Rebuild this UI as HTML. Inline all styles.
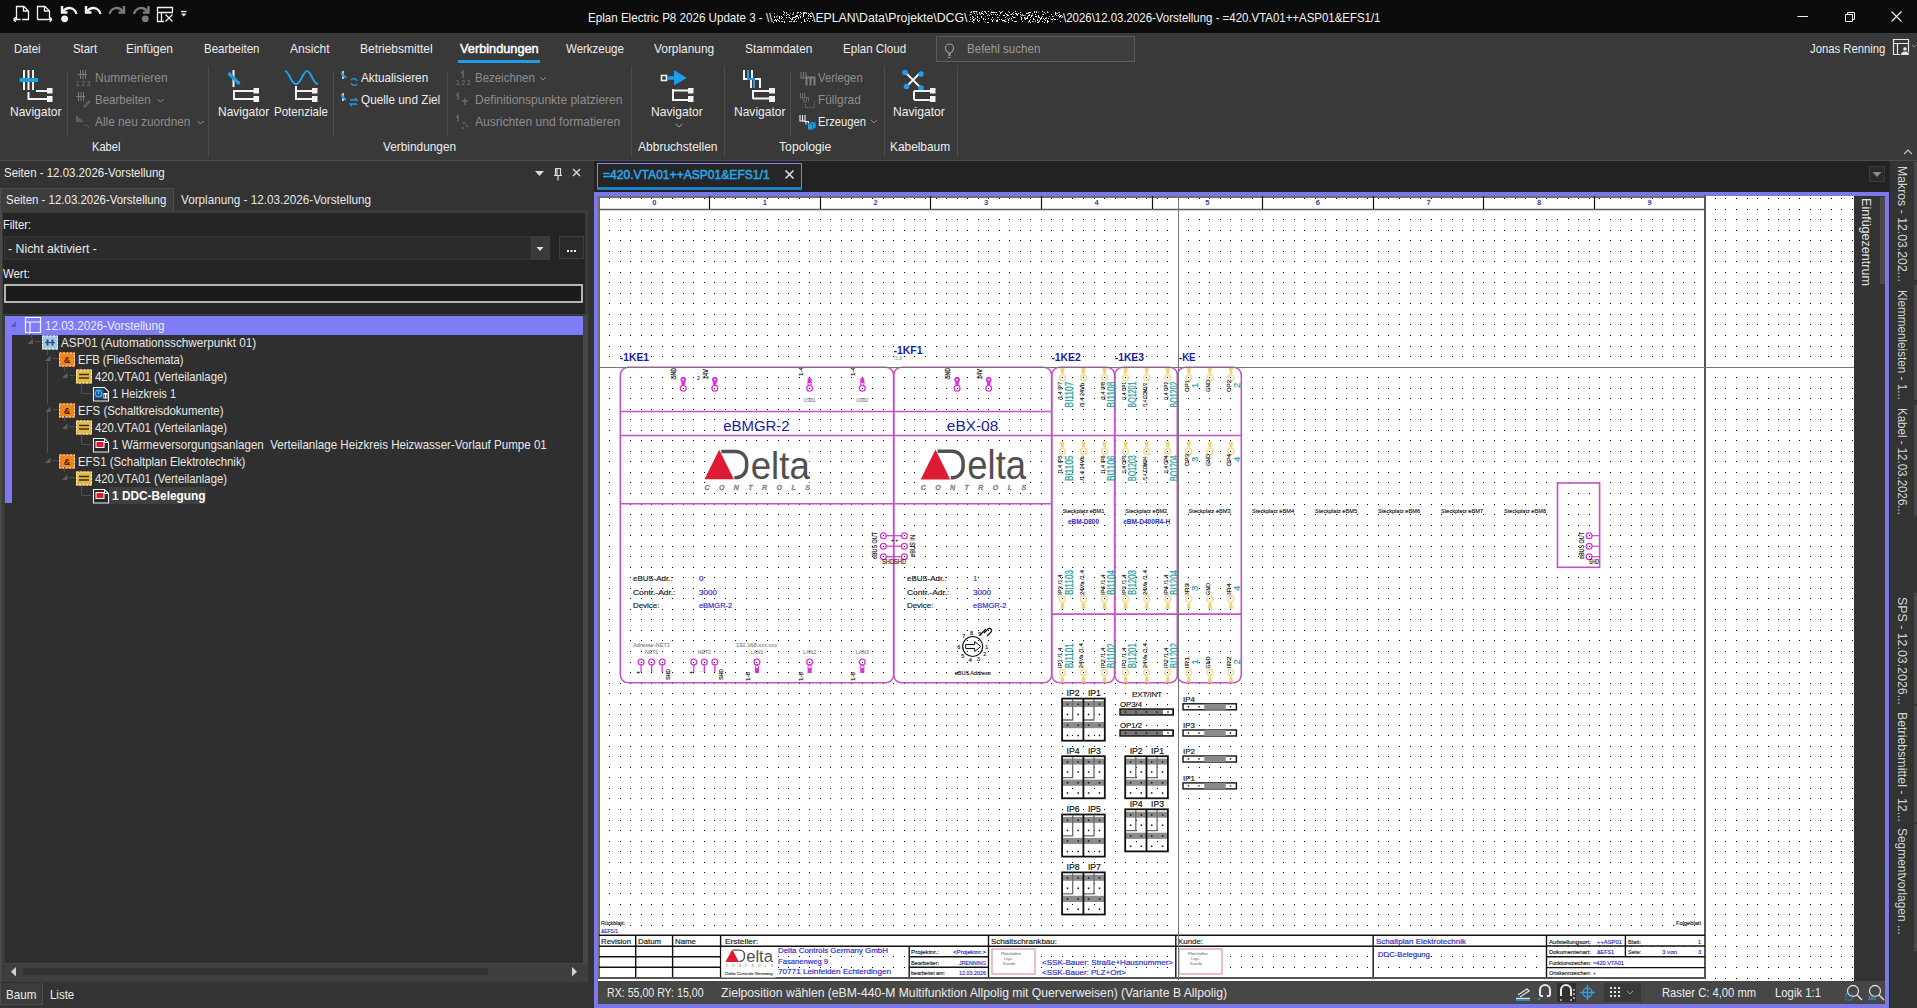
<!DOCTYPE html><html><head><meta charset="utf-8"><title>Eplan Electric P8</title><style>
html,body{margin:0;padding:0;}
body{width:1917px;height:1008px;overflow:hidden;position:relative;background:#393939;font-family:"Liberation Sans",sans-serif;}
.t{position:absolute;white-space:pre;transform-origin:0 50%;}
.r{position:absolute;}
.s{position:absolute;overflow:visible;}
svg text{font-family:"Liberation Sans",sans-serif;}
</style></head><body><div class="r" style="left:0px;top:0px;width:1917px;height:33px;background:#0b0b0b;"></div><svg class="s" style="left:0;top:0" width="200" height="33" viewBox="0 0 200 33" fill="none" stroke="#f2f2f2" stroke-width="1.3"><path d="M16.5 19.5V6.5h7.5l4.5 4.5v8.5h-6.5 M23.5 6.5v4.5h5"/><path d="M13.5 19.5h7 M13.5 19.5l2.3-2.3 M13.5 19.5l2.3 2.3"/><path d="M37.5 19.5V6.5h7.5l4.5 4.5v8.5" /><path d="M44.5 6.5v4.5h5"/><path d="M37.5 19.5h14.5 M52 19.5l-2.3-2.3 M52 19.5l-2.3 2.3"/><path d="M63 11.5c4-5.5 11.5-4.5 13.5 2.5" stroke-width="2.4"/><path d="M62 6v6.5h5.5" stroke-width="2.4"/><circle cx="64.6" cy="18.8" r="3.4" fill="#f2f2f2" stroke="none"/><path d="M87 11.5c4-5.5 11.5-4.5 13.5 2.5" stroke-width="2.4"/><path d="M86 6v6.5h5.5" stroke-width="2.4"/><path d="M123 11.5c-4-5.5 -11.5-4.5 -13.5 2.5" stroke-width="2.4" stroke="#7a7a7a"/><path d="M124 6v6.5h-5.5" stroke-width="2.4" stroke="#7a7a7a"/><path d="M147.5 11.5c-4-5.5 -11.5-4.5 -13.5 2.5" stroke-width="2.4" stroke="#7a7a7a"/><path d="M148.5 6v6.5h-5.5" stroke-width="2.4" stroke="#7a7a7a"/><circle cx="145.3" cy="18.8" r="3.4" fill="#7a7a7a" stroke="none"/><path d="M164 21.5h-6.5V7.5h15v4.5 M157.5 12.5h15.5 M161.5 12.5v9"/><path d="M165.5 14.5l7 7 M172.5 14.5l-7 7" stroke-width="1.2"/><path d="M181 11.5h5.5" /><path d="M181 13.5h5.5l-2.75 3z" fill="#f2f2f2" stroke="none"/></svg><div class="t" style="left:588.3px;top:11.80px;font-size:12.6px;line-height:12.6px;color:#f4f4f4;transform:scaleX(0.9210);">Eplan Electric P8 2026 Update 3 - \\</div><div class="t" style="left:812.3px;top:11.80px;font-size:12.6px;line-height:12.6px;color:#f4f4f4;transform:scaleX(0.9739);">\EPLAN\Data\Projekte\DCG\</div><div class="t" style="left:1062.7px;top:11.80px;font-size:12.6px;line-height:12.6px;color:#f4f4f4;transform:scaleX(0.9083);">\2026\12.03.2026-Vorstellung - =420.VTA01++ASP01&amp;EFS1/1</div><svg class="s" style="left:770px;top:10px" width="300" height="16"><rect x="16" y="3" width="1" height="1" fill="#ffffff"/><rect x="6" y="7" width="1" height="1" fill="#8a8a8a"/><rect x="26" y="11" width="1" height="1" fill="#d0d0d0"/><rect x="4" y="6" width="1" height="1" fill="#ffffff"/><rect x="12" y="7" width="1" height="1" fill="#ffffff"/><rect x="35" y="2" width="1" height="1" fill="#d0d0d0"/><rect x="28" y="7" width="1" height="1" fill="#ffffff"/><rect x="26" y="5" width="1" height="1" fill="#d0d0d0"/><rect x="5" y="10" width="1" height="1" fill="#8a8a8a"/><rect x="19" y="7" width="1" height="1" fill="#8a8a8a"/><rect x="25" y="9" width="1" height="1" fill="#ffffff"/><rect x="26" y="8" width="1" height="1" fill="#8a8a8a"/><rect x="7" y="9" width="1" height="1" fill="#ffffff"/><rect x="27" y="6" width="1" height="1" fill="#ffffff"/><rect x="33" y="6" width="1" height="1" fill="#ffffff"/><rect x="17" y="4" width="1" height="1" fill="#d0d0d0"/><rect x="30" y="4" width="1" height="1" fill="#8a8a8a"/><rect x="23" y="11" width="1" height="1" fill="#ffffff"/><rect x="14" y="12" width="1" height="1" fill="#ffffff"/><rect x="23" y="3" width="1" height="1" fill="#8a8a8a"/><rect x="9" y="6" width="1" height="1" fill="#ffffff"/><rect x="41" y="2" width="1" height="1" fill="#8a8a8a"/><rect x="16" y="5" width="1" height="1" fill="#ffffff"/><rect x="26" y="6" width="1" height="1" fill="#ffffff"/><rect x="40" y="6" width="1" height="1" fill="#ffffff"/><rect x="5" y="9" width="1" height="1" fill="#ffffff"/><rect x="14" y="5" width="1" height="1" fill="#8a8a8a"/><rect x="4" y="6" width="1" height="1" fill="#d0d0d0"/><rect x="27" y="6" width="1" height="1" fill="#d0d0d0"/><rect x="33" y="2" width="1" height="1" fill="#d0d0d0"/><rect x="19" y="11" width="1" height="1" fill="#ffffff"/><rect x="6" y="6" width="1" height="1" fill="#8a8a8a"/><rect x="37" y="10" width="1" height="1" fill="#8a8a8a"/><rect x="31" y="12" width="1" height="1" fill="#ffffff"/><rect x="40" y="3" width="1" height="1" fill="#d0d0d0"/><rect x="9" y="8" width="1" height="1" fill="#ffffff"/><rect x="22" y="7" width="1" height="1" fill="#8a8a8a"/><rect x="14" y="3" width="1" height="1" fill="#8a8a8a"/><rect x="27" y="5" width="1" height="1" fill="#d0d0d0"/><rect x="30" y="7" width="1" height="1" fill="#ffffff"/><rect x="21" y="11" width="1" height="1" fill="#ffffff"/><rect x="19" y="5" width="1" height="1" fill="#ffffff"/><rect x="28" y="2" width="1" height="1" fill="#ffffff"/><rect x="41" y="6" width="1" height="1" fill="#ffffff"/><rect x="16" y="2" width="1" height="1" fill="#ffffff"/><rect x="25" y="7" width="1" height="1" fill="#8a8a8a"/><rect x="27" y="2" width="1" height="1" fill="#d0d0d0"/><rect x="27" y="3" width="1" height="1" fill="#8a8a8a"/><rect x="40" y="8" width="1" height="1" fill="#ffffff"/><rect x="8" y="10" width="1" height="1" fill="#ffffff"/><rect x="22" y="4" width="1" height="1" fill="#d0d0d0"/><rect x="7" y="5" width="1" height="1" fill="#8a8a8a"/><rect x="22" y="9" width="1" height="1" fill="#ffffff"/><rect x="11" y="11" width="1" height="1" fill="#8a8a8a"/><rect x="9" y="7" width="1" height="1" fill="#ffffff"/><rect x="33" y="4" width="1" height="1" fill="#ffffff"/><rect x="30" y="4" width="1" height="1" fill="#8a8a8a"/><rect x="38" y="5" width="1" height="1" fill="#d0d0d0"/><rect x="24" y="10" width="1" height="1" fill="#8a8a8a"/><rect x="28" y="8" width="1" height="1" fill="#d0d0d0"/><rect x="34" y="10" width="1" height="1" fill="#d0d0d0"/><rect x="11" y="6" width="1" height="1" fill="#ffffff"/><rect x="42" y="10" width="1" height="1" fill="#ffffff"/><rect x="13" y="9" width="1" height="1" fill="#8a8a8a"/><rect x="20" y="11" width="1" height="1" fill="#8a8a8a"/><rect x="40" y="5" width="1" height="1" fill="#d0d0d0"/><rect x="7" y="6" width="1" height="1" fill="#8a8a8a"/><rect x="11" y="8" width="1" height="1" fill="#ffffff"/><rect x="22" y="8" width="1" height="1" fill="#ffffff"/><rect x="36" y="2" width="1" height="1" fill="#ffffff"/><rect x="34" y="9" width="1" height="1" fill="#ffffff"/><rect x="38" y="6" width="1" height="1" fill="#8a8a8a"/><rect x="6" y="11" width="1" height="1" fill="#ffffff"/><rect x="21" y="9" width="1" height="1" fill="#ffffff"/><rect x="31" y="3" width="1" height="1" fill="#d0d0d0"/><rect x="4" y="7" width="1" height="1" fill="#ffffff"/><rect x="34" y="3" width="1" height="1" fill="#ffffff"/><rect x="29" y="5" width="1" height="1" fill="#d0d0d0"/><rect x="4" y="10" width="1" height="1" fill="#ffffff"/><rect x="24" y="11" width="1" height="1" fill="#ffffff"/><rect x="41" y="3" width="1" height="1" fill="#d0d0d0"/><rect x="4" y="3" width="1" height="1" fill="#d0d0d0"/><rect x="33" y="5" width="1" height="1" fill="#ffffff"/><rect x="36" y="2" width="1" height="1" fill="#8a8a8a"/><rect x="38" y="8" width="1" height="1" fill="#ffffff"/><rect x="35" y="11" width="1" height="1" fill="#d0d0d0"/><rect x="24" y="7" width="1" height="1" fill="#ffffff"/><rect x="37" y="10" width="1" height="1" fill="#ffffff"/><rect x="33" y="3" width="1" height="1" fill="#d0d0d0"/><rect x="21" y="9" width="1" height="1" fill="#ffffff"/><rect x="16" y="7" width="1" height="1" fill="#ffffff"/><rect x="34" y="2" width="1" height="1" fill="#ffffff"/><rect x="13" y="4" width="1" height="1" fill="#ffffff"/><rect x="23" y="7" width="1" height="1" fill="#ffffff"/><rect x="20" y="8" width="1" height="1" fill="#d0d0d0"/><rect x="30" y="6" width="1" height="1" fill="#ffffff"/><rect x="23" y="4" width="1" height="1" fill="#8a8a8a"/><rect x="39" y="11" width="1" height="1" fill="#d0d0d0"/><rect x="36" y="3" width="1" height="1" fill="#ffffff"/><rect x="18" y="4" width="1" height="1" fill="#d0d0d0"/><rect x="20" y="3" width="1" height="1" fill="#8a8a8a"/><rect x="34" y="11" width="1" height="1" fill="#d0d0d0"/><rect x="40" y="8" width="1" height="1" fill="#8a8a8a"/><rect x="9" y="11" width="1" height="1" fill="#ffffff"/><rect x="12" y="11" width="1" height="1" fill="#ffffff"/><rect x="38" y="3" width="1" height="1" fill="#d0d0d0"/><rect x="9" y="6" width="1" height="1" fill="#ffffff"/><rect x="16" y="3" width="1" height="1" fill="#8a8a8a"/><rect x="7" y="5" width="1" height="1" fill="#8a8a8a"/><rect x="25" y="6" width="1" height="1" fill="#ffffff"/><rect x="18" y="7" width="1" height="1" fill="#8a8a8a"/><rect x="23" y="2" width="1" height="1" fill="#d0d0d0"/><rect x="41" y="2" width="1" height="1" fill="#8a8a8a"/><rect x="14" y="11" width="1" height="1" fill="#d0d0d0"/><rect x="14" y="2" width="1" height="1" fill="#ffffff"/><rect x="36" y="8" width="1" height="1" fill="#8a8a8a"/><rect x="19" y="7" width="1" height="1" fill="#ffffff"/><rect x="30" y="2" width="1" height="1" fill="#ffffff"/><rect x="34" y="3" width="1" height="1" fill="#ffffff"/><rect x="13" y="1" width="1" height="1" fill="#ffffff"/><rect x="34" y="2" width="1" height="1" fill="#d0d0d0"/><rect x="6" y="10" width="1" height="1" fill="#ffffff"/><rect x="3" y="12" width="1" height="1" fill="#ffffff"/><rect x="39" y="4" width="1" height="1" fill="#d0d0d0"/><rect x="203" y="9" width="1" height="1" fill="#ffffff"/><rect x="289" y="4" width="1" height="1" fill="#d0d0d0"/><rect x="218" y="4" width="1" height="1" fill="#8a8a8a"/><rect x="248" y="3" width="1" height="1" fill="#ffffff"/><rect x="246" y="3" width="1" height="1" fill="#8a8a8a"/><rect x="274" y="12" width="1" height="1" fill="#ffffff"/><rect x="200" y="9" width="1" height="1" fill="#d0d0d0"/><rect x="247" y="4" width="1" height="1" fill="#ffffff"/><rect x="209" y="10" width="1" height="1" fill="#ffffff"/><rect x="260" y="7" width="1" height="1" fill="#ffffff"/><rect x="289" y="4" width="1" height="1" fill="#d0d0d0"/><rect x="290" y="5" width="1" height="1" fill="#d0d0d0"/><rect x="237" y="5" width="1" height="1" fill="#ffffff"/><rect x="277" y="1" width="1" height="1" fill="#8a8a8a"/><rect x="239" y="2" width="1" height="1" fill="#ffffff"/><rect x="280" y="8" width="1" height="1" fill="#8a8a8a"/><rect x="255" y="9" width="1" height="1" fill="#ffffff"/><rect x="242" y="3" width="1" height="1" fill="#ffffff"/><rect x="199" y="5" width="1" height="1" fill="#8a8a8a"/><rect x="289" y="7" width="1" height="1" fill="#d0d0d0"/><rect x="202" y="11" width="1" height="1" fill="#d0d0d0"/><rect x="232" y="1" width="1" height="1" fill="#ffffff"/><rect x="207" y="4" width="1" height="1" fill="#d0d0d0"/><rect x="222" y="10" width="1" height="1" fill="#ffffff"/><rect x="224" y="2" width="1" height="1" fill="#ffffff"/><rect x="254" y="5" width="1" height="1" fill="#8a8a8a"/><rect x="227" y="4" width="1" height="1" fill="#d0d0d0"/><rect x="260" y="9" width="1" height="1" fill="#ffffff"/><rect x="270" y="9" width="1" height="1" fill="#ffffff"/><rect x="213" y="9" width="1" height="1" fill="#d0d0d0"/><rect x="203" y="10" width="1" height="1" fill="#ffffff"/><rect x="267" y="10" width="1" height="1" fill="#d0d0d0"/><rect x="284" y="9" width="1" height="1" fill="#ffffff"/><rect x="276" y="7" width="1" height="1" fill="#d0d0d0"/><rect x="207" y="1" width="1" height="1" fill="#8a8a8a"/><rect x="288" y="5" width="1" height="1" fill="#ffffff"/><rect x="251" y="8" width="1" height="1" fill="#d0d0d0"/><rect x="245" y="1" width="1" height="1" fill="#ffffff"/><rect x="269" y="7" width="1" height="1" fill="#ffffff"/><rect x="260" y="2" width="1" height="1" fill="#ffffff"/><rect x="222" y="2" width="1" height="1" fill="#8a8a8a"/><rect x="221" y="9" width="1" height="1" fill="#d0d0d0"/><rect x="268" y="12" width="1" height="1" fill="#ffffff"/><rect x="278" y="2" width="1" height="1" fill="#8a8a8a"/><rect x="270" y="8" width="1" height="1" fill="#d0d0d0"/><rect x="206" y="3" width="1" height="1" fill="#8a8a8a"/><rect x="260" y="9" width="1" height="1" fill="#d0d0d0"/><rect x="200" y="2" width="1" height="1" fill="#8a8a8a"/><rect x="289" y="2" width="1" height="1" fill="#d0d0d0"/><rect x="262" y="4" width="1" height="1" fill="#8a8a8a"/><rect x="242" y="6" width="1" height="1" fill="#ffffff"/><rect x="291" y="7" width="1" height="1" fill="#8a8a8a"/><rect x="290" y="11" width="1" height="1" fill="#ffffff"/><rect x="226" y="2" width="1" height="1" fill="#ffffff"/><rect x="291" y="5" width="1" height="1" fill="#d0d0d0"/><rect x="206" y="2" width="1" height="1" fill="#8a8a8a"/><rect x="288" y="2" width="1" height="1" fill="#8a8a8a"/><rect x="281" y="9" width="1" height="1" fill="#d0d0d0"/><rect x="245" y="11" width="1" height="1" fill="#ffffff"/><rect x="201" y="1" width="1" height="1" fill="#ffffff"/><rect x="262" y="5" width="1" height="1" fill="#d0d0d0"/><rect x="238" y="5" width="1" height="1" fill="#ffffff"/><rect x="277" y="1" width="1" height="1" fill="#8a8a8a"/><rect x="277" y="2" width="1" height="1" fill="#d0d0d0"/><rect x="265" y="11" width="1" height="1" fill="#8a8a8a"/><rect x="223" y="2" width="1" height="1" fill="#ffffff"/><rect x="292" y="7" width="1" height="1" fill="#8a8a8a"/><rect x="285" y="9" width="1" height="1" fill="#ffffff"/><rect x="225" y="2" width="1" height="1" fill="#8a8a8a"/><rect x="258" y="3" width="1" height="1" fill="#8a8a8a"/><rect x="240" y="4" width="1" height="1" fill="#8a8a8a"/><rect x="272" y="6" width="1" height="1" fill="#ffffff"/><rect x="275" y="8" width="1" height="1" fill="#d0d0d0"/><rect x="266" y="2" width="1" height="1" fill="#ffffff"/><rect x="241" y="9" width="1" height="1" fill="#8a8a8a"/><rect x="244" y="11" width="1" height="1" fill="#d0d0d0"/><rect x="215" y="6" width="1" height="1" fill="#8a8a8a"/><rect x="227" y="9" width="1" height="1" fill="#8a8a8a"/><rect x="237" y="4" width="1" height="1" fill="#ffffff"/><rect x="251" y="5" width="1" height="1" fill="#d0d0d0"/><rect x="259" y="2" width="1" height="1" fill="#ffffff"/><rect x="250" y="6" width="1" height="1" fill="#8a8a8a"/><rect x="292" y="6" width="1" height="1" fill="#d0d0d0"/><rect x="250" y="4" width="1" height="1" fill="#d0d0d0"/><rect x="231" y="2" width="1" height="1" fill="#d0d0d0"/><rect x="233" y="10" width="1" height="1" fill="#d0d0d0"/><rect x="282" y="9" width="1" height="1" fill="#ffffff"/><rect x="235" y="9" width="1" height="1" fill="#d0d0d0"/><rect x="234" y="5" width="1" height="1" fill="#ffffff"/><rect x="245" y="7" width="1" height="1" fill="#8a8a8a"/><rect x="211" y="7" width="1" height="1" fill="#d0d0d0"/><rect x="208" y="11" width="1" height="1" fill="#ffffff"/><rect x="236" y="6" width="1" height="1" fill="#8a8a8a"/><rect x="278" y="11" width="1" height="1" fill="#ffffff"/><rect x="211" y="6" width="1" height="1" fill="#ffffff"/><rect x="289" y="6" width="1" height="1" fill="#ffffff"/><rect x="235" y="11" width="1" height="1" fill="#ffffff"/><rect x="289" y="4" width="1" height="1" fill="#ffffff"/><rect x="220" y="3" width="1" height="1" fill="#ffffff"/><rect x="287" y="9" width="1" height="1" fill="#ffffff"/><rect x="207" y="10" width="1" height="1" fill="#ffffff"/><rect x="272" y="4" width="1" height="1" fill="#ffffff"/><rect x="259" y="4" width="1" height="1" fill="#d0d0d0"/><rect x="257" y="7" width="1" height="1" fill="#ffffff"/><rect x="264" y="2" width="1" height="1" fill="#ffffff"/><rect x="227" y="11" width="1" height="1" fill="#d0d0d0"/><rect x="235" y="3" width="1" height="1" fill="#ffffff"/><rect x="200" y="4" width="1" height="1" fill="#ffffff"/><rect x="225" y="4" width="1" height="1" fill="#d0d0d0"/><rect x="243" y="4" width="1" height="1" fill="#d0d0d0"/><rect x="202" y="6" width="1" height="1" fill="#8a8a8a"/><rect x="204" y="3" width="1" height="1" fill="#ffffff"/><rect x="207" y="4" width="1" height="1" fill="#ffffff"/><rect x="285" y="3" width="1" height="1" fill="#ffffff"/><rect x="264" y="9" width="1" height="1" fill="#8a8a8a"/><rect x="262" y="3" width="1" height="1" fill="#8a8a8a"/><rect x="268" y="7" width="1" height="1" fill="#d0d0d0"/><rect x="245" y="3" width="1" height="1" fill="#d0d0d0"/><rect x="220" y="3" width="1" height="1" fill="#8a8a8a"/><rect x="209" y="8" width="1" height="1" fill="#d0d0d0"/><rect x="282" y="6" width="1" height="1" fill="#ffffff"/><rect x="287" y="3" width="1" height="1" fill="#ffffff"/><rect x="204" y="1" width="1" height="1" fill="#d0d0d0"/><rect x="238" y="9" width="1" height="1" fill="#d0d0d0"/><rect x="236" y="11" width="1" height="1" fill="#8a8a8a"/><rect x="267" y="12" width="1" height="1" fill="#d0d0d0"/><rect x="230" y="3" width="1" height="1" fill="#ffffff"/><rect x="202" y="8" width="1" height="1" fill="#ffffff"/><rect x="277" y="12" width="1" height="1" fill="#ffffff"/><rect x="215" y="1" width="1" height="1" fill="#8a8a8a"/><rect x="207" y="6" width="1" height="1" fill="#ffffff"/><rect x="251" y="9" width="1" height="1" fill="#ffffff"/><rect x="232" y="10" width="1" height="1" fill="#ffffff"/><rect x="207" y="9" width="1" height="1" fill="#d0d0d0"/><rect x="234" y="11" width="1" height="1" fill="#d0d0d0"/><rect x="229" y="9" width="1" height="1" fill="#ffffff"/><rect x="202" y="6" width="1" height="1" fill="#ffffff"/><rect x="203" y="1" width="1" height="1" fill="#ffffff"/><rect x="274" y="2" width="1" height="1" fill="#d0d0d0"/><rect x="268" y="11" width="1" height="1" fill="#8a8a8a"/><rect x="233" y="5" width="1" height="1" fill="#ffffff"/><rect x="223" y="9" width="1" height="1" fill="#8a8a8a"/><rect x="285" y="4" width="1" height="1" fill="#ffffff"/><rect x="201" y="4" width="1" height="1" fill="#ffffff"/><rect x="266" y="6" width="1" height="1" fill="#ffffff"/><rect x="272" y="11" width="1" height="1" fill="#ffffff"/><rect x="211" y="6" width="1" height="1" fill="#ffffff"/><rect x="274" y="9" width="1" height="1" fill="#d0d0d0"/><rect x="255" y="5" width="1" height="1" fill="#8a8a8a"/><rect x="242" y="10" width="1" height="1" fill="#ffffff"/><rect x="247" y="5" width="1" height="1" fill="#d0d0d0"/><rect x="222" y="2" width="1" height="1" fill="#ffffff"/><rect x="244" y="7" width="1" height="1" fill="#d0d0d0"/><rect x="290" y="11" width="1" height="1" fill="#ffffff"/><rect x="224" y="2" width="1" height="1" fill="#ffffff"/><rect x="238" y="12" width="1" height="1" fill="#ffffff"/><rect x="215" y="2" width="1" height="1" fill="#ffffff"/><rect x="257" y="8" width="1" height="1" fill="#ffffff"/><rect x="272" y="4" width="1" height="1" fill="#8a8a8a"/><rect x="252" y="5" width="1" height="1" fill="#8a8a8a"/><rect x="218" y="4" width="1" height="1" fill="#d0d0d0"/><rect x="221" y="4" width="1" height="1" fill="#d0d0d0"/><rect x="229" y="5" width="1" height="1" fill="#d0d0d0"/><rect x="246" y="4" width="1" height="1" fill="#ffffff"/><rect x="260" y="12" width="1" height="1" fill="#ffffff"/><rect x="199" y="11" width="1" height="1" fill="#d0d0d0"/><rect x="277" y="11" width="1" height="1" fill="#ffffff"/><rect x="281" y="4" width="1" height="1" fill="#ffffff"/><rect x="217" y="12" width="1" height="1" fill="#d0d0d0"/><rect x="286" y="5" width="1" height="1" fill="#d0d0d0"/><rect x="241" y="4" width="1" height="1" fill="#ffffff"/><rect x="209" y="8" width="1" height="1" fill="#8a8a8a"/><rect x="219" y="5" width="1" height="1" fill="#d0d0d0"/><rect x="203" y="12" width="1" height="1" fill="#ffffff"/><rect x="255" y="8" width="1" height="1" fill="#d0d0d0"/><rect x="275" y="10" width="1" height="1" fill="#ffffff"/><rect x="262" y="3" width="1" height="1" fill="#8a8a8a"/><rect x="206" y="1" width="1" height="1" fill="#ffffff"/><rect x="250" y="2" width="1" height="1" fill="#ffffff"/><rect x="273" y="8" width="1" height="1" fill="#d0d0d0"/><rect x="258" y="2" width="1" height="1" fill="#d0d0d0"/><rect x="236" y="4" width="1" height="1" fill="#8a8a8a"/><rect x="261" y="6" width="1" height="1" fill="#ffffff"/><rect x="228" y="7" width="1" height="1" fill="#8a8a8a"/><rect x="238" y="1" width="1" height="1" fill="#8a8a8a"/><rect x="259" y="5" width="1" height="1" fill="#ffffff"/><rect x="218" y="1" width="1" height="1" fill="#d0d0d0"/><rect x="238" y="10" width="1" height="1" fill="#ffffff"/><rect x="253" y="5" width="1" height="1" fill="#d0d0d0"/><rect x="211" y="2" width="1" height="1" fill="#d0d0d0"/><rect x="259" y="11" width="1" height="1" fill="#ffffff"/><rect x="252" y="11" width="1" height="1" fill="#d0d0d0"/><rect x="213" y="4" width="1" height="1" fill="#d0d0d0"/><rect x="285" y="2" width="1" height="1" fill="#ffffff"/><rect x="269" y="10" width="1" height="1" fill="#d0d0d0"/><rect x="227" y="10" width="1" height="1" fill="#ffffff"/><rect x="290" y="6" width="1" height="1" fill="#ffffff"/><rect x="256" y="8" width="1" height="1" fill="#ffffff"/><rect x="283" y="8" width="1" height="1" fill="#d0d0d0"/><rect x="259" y="10" width="1" height="1" fill="#ffffff"/><rect x="256" y="3" width="1" height="1" fill="#ffffff"/><rect x="216" y="3" width="1" height="1" fill="#ffffff"/><rect x="286" y="3" width="1" height="1" fill="#8a8a8a"/><rect x="210" y="4" width="1" height="1" fill="#d0d0d0"/><rect x="203" y="7" width="1" height="1" fill="#ffffff"/><rect x="261" y="5" width="1" height="1" fill="#ffffff"/><rect x="255" y="7" width="1" height="1" fill="#8a8a8a"/><rect x="259" y="4" width="1" height="1" fill="#d0d0d0"/><rect x="239" y="8" width="1" height="1" fill="#ffffff"/><rect x="246" y="3" width="1" height="1" fill="#ffffff"/><rect x="257" y="6" width="1" height="1" fill="#d0d0d0"/><rect x="241" y="8" width="1" height="1" fill="#ffffff"/><rect x="277" y="10" width="1" height="1" fill="#ffffff"/><rect x="209" y="2" width="1" height="1" fill="#ffffff"/><rect x="233" y="10" width="1" height="1" fill="#ffffff"/><rect x="203" y="2" width="1" height="1" fill="#8a8a8a"/><rect x="271" y="7" width="1" height="1" fill="#ffffff"/><rect x="269" y="11" width="1" height="1" fill="#d0d0d0"/><rect x="201" y="2" width="1" height="1" fill="#ffffff"/><rect x="217" y="12" width="1" height="1" fill="#ffffff"/><rect x="226" y="10" width="1" height="1" fill="#d0d0d0"/><rect x="263" y="9" width="1" height="1" fill="#d0d0d0"/><rect x="205" y="5" width="1" height="1" fill="#8a8a8a"/><rect x="214" y="11" width="1" height="1" fill="#8a8a8a"/><rect x="283" y="6" width="1" height="1" fill="#8a8a8a"/><rect x="246" y="11" width="1" height="1" fill="#d0d0d0"/><rect x="254" y="8" width="1" height="1" fill="#d0d0d0"/><rect x="229" y="1" width="1" height="1" fill="#d0d0d0"/><rect x="237" y="8" width="1" height="1" fill="#8a8a8a"/><rect x="262" y="11" width="1" height="1" fill="#d0d0d0"/><rect x="273" y="4" width="1" height="1" fill="#ffffff"/><rect x="258" y="5" width="1" height="1" fill="#ffffff"/><rect x="251" y="7" width="1" height="1" fill="#ffffff"/><rect x="222" y="7" width="1" height="1" fill="#ffffff"/><rect x="268" y="5" width="1" height="1" fill="#ffffff"/><rect x="291" y="7" width="1" height="1" fill="#8a8a8a"/><rect x="230" y="2" width="1" height="1" fill="#d0d0d0"/><rect x="215" y="9" width="1" height="1" fill="#ffffff"/><rect x="227" y="7" width="1" height="1" fill="#8a8a8a"/><rect x="258" y="12" width="1" height="1" fill="#8a8a8a"/><rect x="267" y="9" width="1" height="1" fill="#d0d0d0"/><rect x="213" y="8" width="1" height="1" fill="#ffffff"/><rect x="238" y="5" width="1" height="1" fill="#ffffff"/><rect x="211" y="3" width="1" height="1" fill="#ffffff"/><rect x="201" y="1" width="1" height="1" fill="#8a8a8a"/><rect x="227" y="7" width="1" height="1" fill="#d0d0d0"/><rect x="237" y="4" width="1" height="1" fill="#d0d0d0"/><rect x="218" y="8" width="1" height="1" fill="#ffffff"/><rect x="214" y="1" width="1" height="1" fill="#d0d0d0"/><rect x="265" y="6" width="1" height="1" fill="#ffffff"/><rect x="258" y="11" width="1" height="1" fill="#8a8a8a"/><rect x="236" y="4" width="1" height="1" fill="#ffffff"/><rect x="204" y="10" width="1" height="1" fill="#8a8a8a"/><rect x="254" y="7" width="1" height="1" fill="#ffffff"/><rect x="222" y="11" width="1" height="1" fill="#ffffff"/><rect x="205" y="1" width="1" height="1" fill="#d0d0d0"/><rect x="221" y="2" width="1" height="1" fill="#ffffff"/><rect x="200" y="7" width="1" height="1" fill="#d0d0d0"/><rect x="212" y="3" width="1" height="1" fill="#ffffff"/><rect x="275" y="3" width="1" height="1" fill="#8a8a8a"/><rect x="205" y="8" width="1" height="1" fill="#ffffff"/><rect x="266" y="1" width="1" height="1" fill="#ffffff"/><rect x="268" y="6" width="1" height="1" fill="#ffffff"/><rect x="215" y="12" width="1" height="1" fill="#8a8a8a"/><rect x="221" y="1" width="1" height="1" fill="#8a8a8a"/><rect x="282" y="11" width="1" height="1" fill="#8a8a8a"/><rect x="265" y="4" width="1" height="1" fill="#ffffff"/><rect x="263" y="11" width="1" height="1" fill="#8a8a8a"/><rect x="226" y="11" width="1" height="1" fill="#d0d0d0"/><rect x="207" y="7" width="1" height="1" fill="#d0d0d0"/><rect x="223" y="4" width="1" height="1" fill="#d0d0d0"/><rect x="287" y="9" width="1" height="1" fill="#8a8a8a"/><rect x="217" y="5" width="1" height="1" fill="#d0d0d0"/><rect x="234" y="10" width="1" height="1" fill="#ffffff"/><rect x="243" y="7" width="1" height="1" fill="#ffffff"/><rect x="279" y="6" width="1" height="1" fill="#d0d0d0"/><rect x="252" y="4" width="1" height="1" fill="#d0d0d0"/><rect x="235" y="7" width="1" height="1" fill="#d0d0d0"/><rect x="212" y="1" width="1" height="1" fill="#ffffff"/><rect x="257" y="3" width="1" height="1" fill="#d0d0d0"/><rect x="264" y="1" width="1" height="1" fill="#d0d0d0"/><rect x="263" y="8" width="1" height="1" fill="#ffffff"/><rect x="268" y="2" width="1" height="1" fill="#8a8a8a"/><rect x="218" y="12" width="1" height="1" fill="#ffffff"/><rect x="281" y="9" width="1" height="1" fill="#ffffff"/><rect x="209" y="3" width="1" height="1" fill="#ffffff"/><rect x="202" y="11" width="1" height="1" fill="#ffffff"/><rect x="276" y="8" width="1" height="1" fill="#8a8a8a"/><rect x="243" y="2" width="1" height="1" fill="#d0d0d0"/><rect x="226" y="5" width="1" height="1" fill="#8a8a8a"/><rect x="201" y="4" width="1" height="1" fill="#8a8a8a"/><rect x="204" y="9" width="1" height="1" fill="#8a8a8a"/><rect x="271" y="8" width="1" height="1" fill="#ffffff"/><rect x="278" y="8" width="1" height="1" fill="#ffffff"/><rect x="272" y="1" width="1" height="1" fill="#ffffff"/><rect x="231" y="9" width="1" height="1" fill="#d0d0d0"/><rect x="265" y="10" width="1" height="1" fill="#8a8a8a"/></svg><svg class="s" style="left:1780px;top:0" width="137" height="33" fill="none" stroke="#f0f0f0" stroke-width="1"><path d="M17.5 16.5h10.5"/><path d="M65.5 14.5h7v7h-7z M67.5 14.5v-2h7v7h-2"/><path d="M111.5 11.5l10 10 M121.5 11.5l-10 10" stroke-width="1.1"/></svg><div class="r" style="left:0px;top:33px;width:1917px;height:127px;background:#393939;"></div><div class="t" style="left:14.3px;top:43.40px;font-size:12.6px;line-height:12.6px;color:#ededed;transform:scaleX(0.9043);">Datei</div><div class="t" style="left:72.9px;top:43.40px;font-size:12.6px;line-height:12.6px;color:#ededed;transform:scaleX(0.9057);">Start</div><div class="t" style="left:126.0px;top:43.40px;font-size:12.6px;line-height:12.6px;color:#ededed;transform:scaleX(0.9448);">Einfügen</div><div class="t" style="left:203.5px;top:43.40px;font-size:12.6px;line-height:12.6px;color:#ededed;transform:scaleX(0.9106);">Bearbeiten</div><div class="t" style="left:289.5px;top:43.40px;font-size:12.6px;line-height:12.6px;color:#ededed;transform:scaleX(0.9560);">Ansicht</div><div class="t" style="left:359.6px;top:43.40px;font-size:12.6px;line-height:12.6px;color:#ededed;transform:scaleX(0.9525);">Betriebsmittel</div><div class="t" style="left:566.0px;top:43.40px;font-size:12.6px;line-height:12.6px;color:#ededed;transform:scaleX(0.9118);">Werkzeuge</div><div class="t" style="left:654.3px;top:43.40px;font-size:12.6px;line-height:12.6px;color:#ededed;transform:scaleX(0.9442);">Vorplanung</div><div class="t" style="left:745.0px;top:43.40px;font-size:12.6px;line-height:12.6px;color:#ededed;transform:scaleX(0.9435);">Stammdaten</div><div class="t" style="left:843.3px;top:43.40px;font-size:12.6px;line-height:12.6px;color:#ededed;transform:scaleX(0.9206);">Eplan Cloud</div><div class="t" style="left:459.5px;top:43.40px;font-size:12.6px;line-height:12.6px;color:#ffffff;transform:scaleX(1.0119);-webkit-text-stroke:0.45px #ffffff;">Verbindungen</div><div class="r" style="left:458px;top:60px;width:82px;height:3px;background:#1e9ee6;"></div><div class="r" style="left:936px;top:36px;width:199px;height:26px;background:#3e3e3e;box-sizing:border-box;border:1px solid #5c5c5c;"></div><svg class="s" style="left:940px;top:38px" width="20" height="22" fill="none" stroke="#9a9a9a" stroke-width="1.1"><path d="M9 17.5v-2.5c-2-1-3.5-2.7-3.5-5a4 4 0 0 1 8 0c0 2.3-1.5 4-3.5 5v2.5z M8 19.5h2.5"/></svg><div class="t" style="left:967.0px;top:43.40px;font-size:12.6px;line-height:12.6px;color:#9a9a9a;transform:scaleX(0.9191);">Befehl suchen</div><div class="t" style="left:1810.0px;top:43.40px;font-size:12.6px;line-height:12.6px;color:#ececec;transform:scaleX(0.8970);">Jonas Renning</div><svg class="s" style="left:1890px;top:36px" width="27" height="22" fill="none" stroke="#e8e8e8" stroke-width="1.2"><path d="M3.5 3.5h15v15h-15z M3.5 7.5h15 M7.5 7.5v11"/><circle cx="15" cy="13" r="2.3" fill="#e8e8e8" stroke="#393939" stroke-width="1"/><path d="M10.5 19.5c0-3 2-4.5 4.5-4.5s4.5 1.5 4.5 4.5z" fill="#e8e8e8" stroke="#393939" stroke-width="1"/><path d="M22 9l2 2 2-2" stroke="#8a8a8a" stroke-width="1"/></svg><div class="r" style="left:67px;top:72px;width:1px;height:64px;background:#4b4b4b;"></div><div class="r" style="left:208px;top:66px;width:1px;height:91px;background:#4b4b4b;"></div><div class="r" style="left:333px;top:72px;width:1px;height:64px;background:#4b4b4b;"></div><div class="r" style="left:447px;top:72px;width:1px;height:64px;background:#4b4b4b;"></div><div class="r" style="left:631px;top:66px;width:1px;height:91px;background:#4b4b4b;"></div><div class="r" style="left:724px;top:66px;width:1px;height:91px;background:#4b4b4b;"></div><div class="r" style="left:790px;top:72px;width:1px;height:64px;background:#4b4b4b;"></div><div class="r" style="left:884px;top:66px;width:1px;height:91px;background:#4b4b4b;"></div><div class="r" style="left:957px;top:66px;width:1px;height:91px;background:#4b4b4b;"></div><div class="r" style="left:0px;top:160px;width:1917px;height:1px;background:#4e4e4e;"></div><svg class="s" style="left:1900px;top:146px" width="16" height="12" fill="none" stroke="#c8c8c8" stroke-width="1.1"><path d="M4 8l4-4 4 4"/></svg><svg class="s" style="left:0;top:0" width="1000" height="160"><path d="M24 70v20 M28.5 70v20 M33 70v20" stroke="#f2f2f2" stroke-width="2"/><path d="M19.7 80h18.4" stroke="#1e9ee6" stroke-width="4"/><path d="M36 91h11 M28.5 92v7 h18.5" stroke="#f2f2f2" stroke-width="2" fill="none"/><rect x="47" y="88" width="5.5" height="5.5" fill="#f2f2f2"/><rect x="47" y="96" width="5.5" height="6" fill="#f2f2f2"/><g stroke="#7a7a7a" stroke-width="1" fill="none"><path d="M80.5 70v9 M83 70v9 M85.5 70v9 M78 74.5h9"/><path d="M78.5 92v9 M81 92v9 M83.5 92v9 M76 96.5h9"/><path d="M84 107l6-6" stroke-width="2.5" stroke="#5e5e5e"/></g><text x="76" y="86" font-size="6.5" fill="#7a7a7a">1 2 3</text><path d="M76 115v7h8z" fill="#5e5e5e"/><path d="M84 126a3 3 0 0 1 5 2" stroke="#5e5e5e" fill="none"/><path d="M233.5 70v17" stroke="#f2f2f2" stroke-width="2"/><path d="M228.5 73l11 11" stroke="#1e9ee6" stroke-width="3.2"/><path d="M234 91h20 M234 90v9 h20" stroke="#f2f2f2" stroke-width="2" fill="none"/><rect x="253.5" y="88" width="5.5" height="5.5" fill="#f2f2f2"/><rect x="253.5" y="96" width="5.5" height="6" fill="#f2f2f2"/><path d="M285 71c4 0 6 13 11 13s7-13 11-13 6 13 11 13" stroke="#1e9ee6" stroke-width="2" fill="none"/><path d="M296 86v13 h17 M296 91h17" stroke="#f2f2f2" stroke-width="2" fill="none"/><rect x="312" y="88" width="5.5" height="5.5" fill="#f2f2f2"/><rect x="312" y="96" width="5.5" height="6" fill="#f2f2f2"/><path d="M343 71v8" stroke="#f2f2f2" stroke-width="1.5"/><path d="M341 73l5 5" stroke="#1e9ee6" stroke-width="2"/><path d="M351 80a3.5 3.5 0 0 1 6 1 M357 84a3.5 3.5 0 0 1 -6 -1" stroke="#1e9ee6" stroke-width="1.3" fill="none"/><path d="M343 93v8" stroke="#f2f2f2" stroke-width="1.5"/><path d="M341 95l5 5" stroke="#1e9ee6" stroke-width="2"/><path d="M350 100h7l-2-2 M357 104h-7l2 2" stroke="#1e9ee6" stroke-width="1.3" fill="none"/><g fill="none" stroke="#7a7a7a" stroke-width="1"><path d="M463 70v8 M461 72l3 3" /><path d="M458 92v8 M456 94l3 3 M462 101h6 M465 98v7"/><path d="M458 114v8 M456 116l3 3"/></g><text x="456" y="85" font-size="6.5" fill="#7a7a7a">1 2 3</text><circle cx="464" cy="123" r="1.3" fill="#5a5a5a"/><circle cx="467" cy="126" r="1.3" fill="#5a5a5a"/><circle cx="463" cy="128" r="1.3" fill="#5a5a5a"/><rect x="661.5" y="75.5" width="5" height="5" fill="none" stroke="#f2f2f2" stroke-width="1.6"/><path d="M667 78h8" stroke="#1e9ee6" stroke-width="3.5"/><path d="M674 70l12.7 8 -12.7 7.5z" fill="#1e9ee6"/><path d="M673 89v12 M673 90.5h17 M673 100h17" stroke="#f2f2f2" stroke-width="2" fill="none"/><rect x="688" y="88" width="5.5" height="5.5" fill="#f2f2f2"/><rect x="688" y="96" width="5.5" height="6" fill="#f2f2f2"/><path d="M675.5 124l3.5 3 3.5-3" stroke="#a0a0a0" stroke-width="1" fill="none"/><path d="M744 70v9h8v-9" stroke="#f2f2f2" stroke-width="2" fill="none"/><path d="M751 88v-9h9v9" stroke="#f2f2f2" stroke-width="2" fill="none"/><path d="M748 70v9h6v9" stroke="#1e9ee6" stroke-width="2" fill="none"/><path d="M753 90v9 M753 91h17 M753 98.5h17" stroke="#f2f2f2" stroke-width="2" fill="none"/><rect x="769" y="88" width="6" height="5.5" fill="#f2f2f2"/><rect x="769" y="96" width="6" height="6" fill="#f2f2f2"/><g fill="none" stroke="#7c7c7c" stroke-width="1.1"><path d="M801 72v6h5v-6 M803.5 72v6"/><path d="M806.5 85.5v-8h8v8 M810.5 78v7.5" stroke-width="2"/></g><g fill="none" stroke="#6c6c6c" stroke-width="1"><path d="M800.5 93v5h4v-5 M802.5 93v5 M804 98.5v4 M804.5 97.5h4v4 M806.5 97.5v4"/><path d="M805.5 101.5v6h9v-6" stroke-dasharray="1.5 1"/></g><g fill="none" stroke="#f2f2f2" stroke-width="1.1"><path d="M800 115v6h5v-6 M802.5 115v6 M803.5 121.5h5v4 M806 121.5v3"/></g><path d="M808 124l3.5-2h4v5.5l-3 2h-4.5z" fill="#1e9ee6"/><path d="M808 124h4.5l3-2 M812.5 124v5.5" stroke="#0e5f8e" stroke-width="0.8" fill="none"/><path d="M871 120l3 3 3-3" stroke="#8a8a8a" stroke-width="1" fill="none"/><path d="M906 73l14 14 M920 73l-14 14" stroke="#f2f2f2" stroke-width="1.8"/><circle cx="905" cy="72.5" r="2.8" fill="#1e9ee6"/><circle cx="921" cy="74" r="2.8" fill="#1e9ee6"/><circle cx="906.5" cy="86.5" r="2.8" fill="#1e9ee6"/><circle cx="921" cy="88" r="2.8" fill="#1e9ee6"/><path d="M914 91v9 M914 91h17 M914 100h17" stroke="#f2f2f2" stroke-width="2" fill="none"/><rect x="930" y="88" width="5.5" height="5.5" fill="#f2f2f2"/><rect x="930" y="96" width="5.5" height="6" fill="#f2f2f2"/></svg><div class="t" style="left:10.4px;top:106.30px;font-size:12.6px;line-height:12.6px;color:#eeeeee;transform:scaleX(0.9550);">Navigator</div><div class="t" style="left:95.3px;top:72.40px;font-size:12.6px;line-height:12.6px;color:#8e8e8e;transform:scaleX(0.9525);">Nummerieren</div><div class="t" style="left:95.3px;top:94.20px;font-size:12.6px;line-height:12.6px;color:#8e8e8e;transform:scaleX(0.9139);">Bearbeiten</div><div class="t" style="left:95.3px;top:116.10px;font-size:12.6px;line-height:12.6px;color:#8e8e8e;transform:scaleX(0.9402);">Alle neu zuordnen</div><svg class="s" style="left:150px;top:95px" width="60" height="40" fill="none" stroke="#8e8e8e" stroke-width="1"><path d="M7.5 4l3 3 3-3 M47.5 26l3 3 3-3"/></svg><div class="t" style="left:91.5px;top:141.40px;font-size:12.6px;line-height:12.6px;color:#eeeeee;transform:scaleX(0.8843);">Kabel</div><div class="t" style="left:217.6px;top:105.60px;font-size:12.6px;line-height:12.6px;color:#eeeeee;transform:scaleX(0.9494);">Navigator</div><div class="t" style="left:274.1px;top:105.60px;font-size:12.6px;line-height:12.6px;color:#eeeeee;transform:scaleX(0.9160);">Potenziale</div><div class="t" style="left:361.2px;top:71.70px;font-size:12.6px;line-height:12.6px;color:#eeeeee;transform:scaleX(0.9315);">Aktualisieren</div><div class="t" style="left:361.2px;top:93.60px;font-size:12.6px;line-height:12.6px;color:#eeeeee;transform:scaleX(0.9345);">Quelle und Ziel</div><div class="t" style="left:383.2px;top:140.80px;font-size:12.6px;line-height:12.6px;color:#eeeeee;transform:scaleX(0.9399);">Verbindungen</div><div class="t" style="left:475.0px;top:71.90px;font-size:12.6px;line-height:12.6px;color:#8e8e8e;transform:scaleX(0.9096);">Bezeichnen</div><svg class="s" style="left:535px;top:72px" width="14" height="14" fill="none" stroke="#8e8e8e" stroke-width="1"><path d="M5 5l3 3 3-3"/></svg><div class="t" style="left:475.0px;top:94.20px;font-size:12.6px;line-height:12.6px;color:#8e8e8e;transform:scaleX(0.9529);">Definitionspunkte platzieren</div><div class="t" style="left:475.0px;top:116.10px;font-size:12.6px;line-height:12.6px;color:#8e8e8e;transform:scaleX(0.9604);">Ausrichten und formatieren</div><div class="t" style="left:651.0px;top:105.90px;font-size:12.6px;line-height:12.6px;color:#eeeeee;transform:scaleX(0.9606);">Navigator</div><div class="t" style="left:637.8px;top:140.90px;font-size:12.6px;line-height:12.6px;color:#eeeeee;transform:scaleX(0.9550);">Abbruchstellen</div><div class="t" style="left:733.5px;top:106.00px;font-size:12.6px;line-height:12.6px;color:#eeeeee;transform:scaleX(0.9550);">Navigator</div><div class="t" style="left:818.0px;top:72.10px;font-size:12.6px;line-height:12.6px;color:#8e8e8e;transform:scaleX(0.8986);">Verlegen</div><div class="t" style="left:818.0px;top:94.00px;font-size:12.6px;line-height:12.6px;color:#8e8e8e;transform:scaleX(0.9402);">Füllgrad</div><div class="t" style="left:818.0px;top:116.30px;font-size:12.6px;line-height:12.6px;color:#eeeeee;transform:scaleX(0.8899);">Erzeugen</div><div class="t" style="left:779.0px;top:141.20px;font-size:12.6px;line-height:12.6px;color:#eeeeee;transform:scaleX(0.9713);">Topologie</div><div class="t" style="left:893.4px;top:106.00px;font-size:12.6px;line-height:12.6px;color:#eeeeee;transform:scaleX(0.9606);">Navigator</div><div class="t" style="left:890.2px;top:141.20px;font-size:12.6px;line-height:12.6px;color:#eeeeee;transform:scaleX(0.9428);">Kabelbaum</div><div class="r" style="left:0px;top:161px;width:594px;height:847px;background:#333333;"></div><div class="t" style="left:4.2px;top:166.80px;font-size:12.6px;line-height:12.6px;color:#ececec;transform:scaleX(0.9109);">Seiten - 12.03.2026-Vorstellung</div><svg class="s" style="left:530px;top:164px" width="60" height="20"><path d="M5 7h9l-4.5 5z" fill="#dcdcdc"/><path d="M25.5 4.5h5v7h-5z M24 11.5h8 M28 11.5v5 M27 4.5v7" fill="none" stroke="#dcdcdc" stroke-width="1.2"/><path d="M43 5l7 7 M50 5l-7 7" stroke="#dcdcdc" stroke-width="1.4"/></svg><div class="r" style="left:0px;top:188px;width:174px;height:23px;background:#3d3d3d;box-sizing:border-box;border:1px solid #4c4c4c;border-bottom:none;"></div><div class="t" style="left:6.3px;top:194.20px;font-size:12.6px;line-height:12.6px;color:#eeeeee;transform:scaleX(0.9086);">Seiten - 12.03.2026-Vorstellung</div><div class="t" style="left:180.7px;top:194.20px;font-size:12.6px;line-height:12.6px;color:#e6e6e6;transform:scaleX(0.9298);">Vorplanung - 12.03.2026-Vorstellung</div><div class="r" style="left:0px;top:210px;width:588px;height:772px;background:#3c3c3c;"></div><div class="r" style="left:0px;top:210px;width:1.5px;height:772px;background:#4a4a4a;"></div><div class="r" style="left:583px;top:315px;width:5px;height:648px;background:#474747;"></div><div class="r" style="left:3px;top:213px;width:582px;height:101px;background:#242424;"></div><div class="t" style="left:3.4px;top:219.30px;font-size:12.6px;line-height:12.6px;color:#f0f0f0;transform:scaleX(0.8889);">Filter:</div><div class="r" style="left:4px;top:236px;width:546px;height:24px;background:#2c2c2c;box-sizing:border-box;border:1px solid #363636;"></div><div class="r" style="left:531px;top:236px;width:19px;height:24px;background:#3a3a3a;"></div><svg class="s" style="left:531px;top:236px" width="19" height="24"><path d="M5.5 11h7l-3.5 4z" fill="#e0e0e0"/></svg><div class="t" style="left:7.5px;top:243.40px;font-size:12.6px;line-height:12.6px;color:#e8e8e8;transform:scaleX(0.9779);">- Nicht aktiviert -</div><div class="r" style="left:559px;top:236px;width:25px;height:23px;background:#2a2a2a;box-sizing:border-box;border:1px solid #3e3e3e;"></div><svg class="s" style="left:559px;top:236px" width="25" height="23" fill="#f0f0f0"><rect x="8" y="14" width="2" height="2"/><rect x="11.5" y="14" width="2" height="2"/><rect x="15" y="14" width="2" height="2"/></svg><div class="t" style="left:3.4px;top:267.80px;font-size:12.6px;line-height:12.6px;color:#f0f0f0;transform:scaleX(0.9039);">Wert:</div><div class="r" style="left:4px;top:284px;width:579px;height:19px;background:#1b1b1b;box-sizing:border-box;border:2px solid #b4b4b4;"></div><div class="r" style="left:5px;top:315px;width:578px;height:648px;background:#2f2f2f;"></div><div class="r" style="left:5px;top:316px;width:578px;height:19px;background:#7f7cf7;"></div><div class="r" style="left:5px;top:335px;width:7px;height:168px;background:#7d7af6;"></div><div class="r" style="left:109px;top:487px;width:97px;height:17px;background:#3f3f3f;"></div><div class="t" style="left:44.6px;top:319.60px;font-size:12.6px;line-height:12.6px;color:#ececff;transform:scaleX(0.9220);">12.03.2026-Vorstellung</div><div class="t" style="left:61.3px;top:336.60px;font-size:12.6px;line-height:12.6px;color:#e8e8e8;transform:scaleX(0.9326);">ASP01 (Automationsschwerpunkt 01)</div><div class="t" style="left:78.2px;top:353.60px;font-size:12.6px;line-height:12.6px;color:#e8e8e8;transform:scaleX(0.8863);">EFB (Fließschemata)</div><div class="t" style="left:94.5px;top:370.60px;font-size:12.6px;line-height:12.6px;color:#e8e8e8;transform:scaleX(0.8995);">420.VTA01 (Verteilanlage)</div><div class="t" style="left:112.0px;top:387.60px;font-size:12.6px;line-height:12.6px;color:#e8e8e8;transform:scaleX(0.8815);">1 Heizkreis 1</div><div class="t" style="left:78.2px;top:404.60px;font-size:12.6px;line-height:12.6px;color:#e8e8e8;transform:scaleX(0.9079);">EFS (Schaltkreisdokumente)</div><div class="t" style="left:94.5px;top:421.60px;font-size:12.6px;line-height:12.6px;color:#e8e8e8;transform:scaleX(0.8995);">420.VTA01 (Verteilanlage)</div><div class="t" style="left:112.0px;top:438.60px;font-size:12.6px;line-height:12.6px;color:#e8e8e8;transform:scaleX(0.9188);">1 Wärmeversorgungsanlagen  Verteilanlage Heizkreis Heizwasser-Vorlauf Pumpe 01</div><div class="t" style="left:78.2px;top:455.60px;font-size:12.6px;line-height:12.6px;color:#e8e8e8;transform:scaleX(0.9059);">EFS1 (Schaltplan Elektrotechnik)</div><div class="t" style="left:94.5px;top:472.60px;font-size:12.6px;line-height:12.6px;color:#e8e8e8;transform:scaleX(0.8995);">420.VTA01 (Verteilanlage)</div><div class="t" style="left:112.0px;top:489.60px;font-size:12.6px;line-height:12.6px;color:#ffffff;font-weight:bold;transform:scaleX(0.9406);">1 DDC-Belegung</div><svg class="s" style="left:0;top:310px" width="600" height="200"><path d="M25.5 7.5h15v15h-15z M25.5 12h15 M30 12v11.5" fill="none" stroke="#f4f4ff" stroke-width="1.2"/><rect x="42" y="25.5" width="16" height="14" fill="#a3c8df"/><rect x="42.5" y="26" width="15" height="13" fill="none" stroke="#fff" stroke-width="1" stroke-dasharray="2 1.5"/><path d="M45 32.5h10" stroke="#2a4f86" stroke-width="1.2"/><path d="M47.5 29.5v6 M52.5 29.5v6" stroke="#2a4f86" stroke-width="2"/><rect x="59" y="42.5" width="16" height="14" fill="#f28322"/><rect x="59.5" y="43" width="15" height="13" fill="none" stroke="#ffe9b0" stroke-width="1" stroke-dasharray="2 1.5"/><text x="67" y="53" font-size="9" font-weight="bold" fill="#3a2000" text-anchor="middle">&amp;</text><rect x="76" y="59.5" width="16" height="14" fill="#e2b84e"/><rect x="76.5" y="60" width="15" height="13" fill="none" stroke="#fff6c8" stroke-width="1" stroke-dasharray="2 1.5"/><path d="M79 64.5h10 M79 68h10" stroke="#3a3000" stroke-width="1.4"/><path d="M93.5 77.5h11l4 4v9.5h-15z" fill="#1c2c44" stroke="#f0f0f0" stroke-width="1.1"/><rect x="94.5" y="78.5" width="9" height="10" fill="#1e5a90"/><circle cx="98.5" cy="83.5" r="3.3" fill="none" stroke="#56c4ff" stroke-width="1"/><path d="M98.5 81v3" stroke="#56c4ff" stroke-width="1"/><path d="M103.5 83h4v5.5h-4z" fill="#fff"/><path d="M104.5 84.5v3 M106.5 84.5v3" stroke="#333" stroke-width="0.8"/><rect x="59" y="93.5" width="16" height="14" fill="#f28322"/><rect x="59.5" y="94" width="15" height="13" fill="none" stroke="#ffe9b0" stroke-width="1" stroke-dasharray="2 1.5"/><text x="67" y="104" font-size="9" font-weight="bold" fill="#3a2000" text-anchor="middle">&amp;</text><rect x="76" y="110.5" width="16" height="14" fill="#e2b84e"/><rect x="76.5" y="111" width="15" height="13" fill="none" stroke="#fff6c8" stroke-width="1" stroke-dasharray="2 1.5"/><path d="M79 115.5h10 M79 119h10" stroke="#3a3000" stroke-width="1.4"/><path d="M93.5 128.5h11l4 4v9.5h-15z" fill="#262626" stroke="#f0f0f0" stroke-width="1.1"/><path d="M104.5 128.5v4h4" fill="none" stroke="#f0f0f0" stroke-width="1"/><rect x="96" y="131.5" width="8" height="6" fill="#e01a2a" stroke="#fff" stroke-width="1"/><rect x="59" y="144.5" width="16" height="14" fill="#f28322"/><rect x="59.5" y="145" width="15" height="13" fill="none" stroke="#ffe9b0" stroke-width="1" stroke-dasharray="2 1.5"/><text x="67" y="155" font-size="9" font-weight="bold" fill="#3a2000" text-anchor="middle">&amp;</text><rect x="76" y="161.5" width="16" height="14" fill="#e2b84e"/><rect x="76.5" y="162" width="15" height="13" fill="none" stroke="#fff6c8" stroke-width="1" stroke-dasharray="2 1.5"/><path d="M79 166.5h10 M79 170h10" stroke="#3a3000" stroke-width="1.4"/><path d="M93.5 179.5h11l4 4v9.5h-15z" fill="#262626" stroke="#f0f0f0" stroke-width="1.1"/><path d="M104.5 179.5v4h4" fill="none" stroke="#f0f0f0" stroke-width="1"/><rect x="96" y="182.5" width="8" height="6" fill="#e01a2a" stroke="#fff" stroke-width="1"/><path d="M16 11.5V17H10.5z" fill="#5b58b8"/><path d="M33 28.5V34H27.5z" fill="#5e5e5e"/><path d="M50.5 45.5V51H45.0z" fill="#5e5e5e"/><path d="M67.5 62.5V68H62.0z" fill="#5e5e5e"/><path d="M50.5 96.5V102H45.0z" fill="#5e5e5e"/><path d="M67.5 113.5V119H62.0z" fill="#5e5e5e"/><path d="M50.5 147.5V153H45.0z" fill="#5e5e5e"/><path d="M67.5 164.5V170H62.0z" fill="#5e5e5e"/><path d="M35 31.5H41 M52.5 48.5H58 M69.5 65.5H75 M52.5 99.5H58 M69.5 116.5H75 M52.5 150.5H58 M69.5 167.5H75 M31.5 24V28 M47.5 40V45 M47.5 52V94 M47.5 101V143 M64.5 57V62 M64.5 106V111 M64.5 157V162 M81.5 74V83.5H91 M81.5 125V134.5H91 M81.5 176V185.5H91" stroke="#505050" stroke-width="1" fill="none"/></svg><div class="r" style="left:5px;top:963px;width:583px;height:18px;background:#3e3e3e;"></div><div class="r" style="left:5px;top:963px;width:583px;height:1px;background:#474747;"></div><div class="r" style="left:23px;top:968px;width:465px;height:7px;background:#333333;"></div><svg class="s" style="left:0;top:962px" width="594" height="26"><path d="M16 5v9.5l-5-4.75z" fill="#d0d0d0"/><path d="M572 5v9.5l5-4.75z" fill="#d0d0d0"/></svg><div class="r" style="left:0px;top:983px;width:43px;height:22px;background:#3b3b3b;box-sizing:border-box;border:1px solid #4e4e4e;border-top:none;"></div><div class="t" style="left:6.3px;top:989.40px;font-size:12.6px;line-height:12.6px;color:#ececec;transform:scaleX(0.9205);">Baum</div><div class="t" style="left:50.0px;top:989.40px;font-size:12.6px;line-height:12.6px;color:#ececec;transform:scaleX(0.9092);">Liste</div><div class="r" style="left:594px;top:161px;width:1295px;height:31px;background:#222222;"></div><div class="r" style="left:597px;top:163px;width:205px;height:25px;background:#262626;box-sizing:border-box;border:1px solid #8481f0;border-bottom:none;"></div><div class="r" style="left:597px;top:187px;width:205px;height:3px;background:#1f7fc4;"></div><div class="t" style="left:603.2px;top:168.10px;font-size:13.2px;line-height:13.2px;color:#2aa8ea;transform:scaleX(0.9159);-webkit-text-stroke:0.5px #2aa8ea;">=420.VTA01++ASP01&amp;EFS1/1</div><svg class="s" style="left:780px;top:165px" width="20" height="20"><path d="M5.5 5.5l8 8 M13.5 5.5l-8 8" stroke="#e4e4e4" stroke-width="1.5"/></svg><div class="r" style="left:1869px;top:166px;width:16px;height:16px;background:#2a2a2a;box-sizing:border-box;border:1px solid #3c3c3c;"></div><svg class="s" style="left:1869px;top:166px" width="16" height="16"><path d="M3.5 6h9l-4.5 5z" fill="#8c8c8c"/></svg><div class="r" style="left:594px;top:192px;width:1295px;height:816px;background:#7b79ea;"></div><div class="r" style="left:598px;top:196px;width:1287px;height:808px;background:#ffffff;"></div><div class="r" style="left:1854px;top:196px;width:31px;height:785px;background:#333333;"></div><div class="r" style="left:1880px;top:197px;width:5px;height:87px;background:#4a4a4a;"></div><div class="t" style="left:1871.67px;top:198.0px;font-size:12.6px;line-height:12.6px;color:#e0e0e0;transform-origin:0 0;transform:rotate(90deg) scaleX(0.9971);">Einfügezentrum</div><div class="r" style="left:598px;top:981px;width:1287px;height:23px;background:#474747;"></div><div class="t" style="left:606.7px;top:987.10px;font-size:12.6px;line-height:12.6px;color:#ececec;transform:scaleX(0.8426);">RX: 55,00 RY: 15,00</div><div class="t" style="left:720.6px;top:987.10px;font-size:12.6px;line-height:12.6px;color:#ececec;transform:scaleX(0.9655);">Zielposition wählen (eBM-440-M Multifunktion Allpolig mit Querverweisen) (Variante B Allpolig)</div><div class="t" style="left:1662.0px;top:987.10px;font-size:12.6px;line-height:12.6px;color:#ececec;transform:scaleX(0.8910);">Raster C: 4,00 mm</div><div class="t" style="left:1775.0px;top:987.10px;font-size:12.6px;line-height:12.6px;color:#ececec;transform:scaleX(0.8995);">Logik 1:1</div><div class="r" style="left:1557px;top:983px;width:19px;height:19px;background:#303030;"></div><div class="r" style="left:1604px;top:983px;width:37px;height:19px;background:#393939;"></div><svg class="s" style="left:1500px;top:981px" width="390" height="23" fill="none" stroke-width="1.4"><path d="M16 17.5h14 M18 14l9-6 2 2-9 6" stroke="#d8d8d8"/><path d="M16 19h14" stroke="#1e9ee6" stroke-width="1.6"/><path d="M40 15v-6a5 5 0 0 1 10 0v6 M40 15h3 M47 15h3" stroke="#e8e8e8" stroke-width="2"/><path d="M38 19l2-2" stroke="#1e9ee6" stroke-width="1.6"/><path d="M61 15v-6a5 5 0 0 1 10 0v6" stroke="#e8e8e8" stroke-width="2"/><path d="M61 18v2 M71 18v2 M74 8v2 M74 12v2 M74 16v2" stroke="#e8e8e8" stroke-width="1.2"/><circle cx="87.5" cy="11.5" r="4.5" stroke="#2f9fe0"/><path d="M87.5 4v15 M80 11.5h15" stroke="#2f9fe0"/><g fill="#e4e4e4" stroke="none"><rect x="110" y="6" width="2" height="2"/><rect x="114" y="6" width="2" height="2"/><rect x="118" y="6" width="2" height="2"/><rect x="110" y="10" width="2" height="2"/><rect x="114" y="10" width="2" height="2"/><rect x="118" y="10" width="2" height="2"/><rect x="110" y="14" width="2" height="2"/><rect x="114" y="14" width="2" height="2"/><rect x="118" y="14" width="2" height="2"/></g><path d="M127 10l3 3 3-3" stroke="#9a9a9a" stroke-width="1"/><circle cx="353" cy="10" r="5.5" stroke="#d8d8d8" stroke-width="1.3"/><path d="M357 14l5 5" stroke="#d8d8d8" stroke-width="1.6"/><rect x="346" y="13" width="6" height="6" stroke="#2f9fe0" stroke-width="1" stroke-dasharray="1.5 1"/><circle cx="375" cy="10" r="5.5" stroke="#d8d8d8" stroke-width="1.3"/><path d="M379 14l5 5" stroke="#d8d8d8" stroke-width="1.6"/><text x="368" y="19" font-size="5" fill="#2f9fe0" stroke="none" font-weight="bold">100</text></svg><div class="r" style="left:1889px;top:161px;width:28px;height:847px;background:#333333;"></div><div class="r" style="left:1889px;top:161px;width:1px;height:847px;background:#262636;"></div><div class="t" style="left:1907.67px;top:165.5px;font-size:12.6px;line-height:12.6px;color:#d6d6d6;transform-origin:0 0;transform:rotate(90deg) scaleX(0.9743);">Makros - 12.03.202...</div><div class="t" style="left:1907.67px;top:290.0px;font-size:12.6px;line-height:12.6px;color:#d6d6d6;transform-origin:0 0;transform:rotate(90deg) scaleX(0.9295);">Klemmenleisten - 1...</div><div class="t" style="left:1907.67px;top:408.0px;font-size:12.6px;line-height:12.6px;color:#d6d6d6;transform-origin:0 0;transform:rotate(90deg) scaleX(0.9146);">Kabel - 12.03.2026...</div><div class="t" style="left:1907.67px;top:597.0px;font-size:12.6px;line-height:12.6px;color:#d6d6d6;transform-origin:0 0;transform:rotate(90deg) scaleX(0.9820);">SPS - 12.03.2026...</div><div class="t" style="left:1907.67px;top:712.0px;font-size:12.6px;line-height:12.6px;color:#d6d6d6;transform-origin:0 0;transform:rotate(90deg) scaleX(0.9818);">Betriebsmittel - 12...</div><div class="t" style="left:1907.67px;top:828.0px;font-size:12.6px;line-height:12.6px;color:#d6d6d6;transform-origin:0 0;transform:rotate(90deg) scaleX(0.9488);">Segmentvorlagen ...</div><div class="r" style="left:1914px;top:162px;width:3px;height:118px;background:#484848;"></div><div class="r" style="left:1914px;top:285px;width:3px;height:115px;background:#484848;"></div><div class="r" style="left:1914px;top:405px;width:3px;height:111px;background:#484848;"></div><div class="r" style="left:1914px;top:593px;width:3px;height:111px;background:#484848;"></div><div class="r" style="left:1914px;top:706px;width:3px;height:116px;background:#484848;"></div><div class="r" style="left:1914px;top:824px;width:3px;height:127px;background:#484848;"></div><svg class="s" style="left:0;top:0" width="1917" height="1008" viewBox="0 0 1917 1008" font-family="Liberation Sans, sans-serif"><g><path d="M609 198h1v1h-1zm11 0h1v1h-1zm10 0h1v1h-1zm11 0h1v1h-1zm10 0h1v1h-1zm11 0h1v1h-1zm10 0h1v1h-1zm11 0h1v1h-1zm10 0h1v1h-1zm11 0h1v1h-1zm10 0h1v1h-1zm11 0h1v1h-1zm10 0h1v1h-1zm11 0h1v1h-1zm10 0h1v1h-1zm11 0h1v1h-1zm11 0h1v1h-1zm10 0h1v1h-1zm11 0h1v1h-1zm10 0h1v1h-1zm11 0h1v1h-1zm10 0h1v1h-1zm11 0h1v1h-1zm10 0h1v1h-1zm11 0h1v1h-1zm10 0h1v1h-1zm11 0h1v1h-1zm10 0h1v1h-1zm11 0h1v1h-1zm10 0h1v1h-1zm11 0h1v1h-1zm11 0h1v1h-1zm10 0h1v1h-1zm11 0h1v1h-1zm10 0h1v1h-1zm11 0h1v1h-1zm10 0h1v1h-1zm11 0h1v1h-1zm10 0h1v1h-1zm11 0h1v1h-1zm10 0h1v1h-1zm11 0h1v1h-1zm10 0h1v1h-1zm11 0h1v1h-1zm10 0h1v1h-1zm11 0h1v1h-1zm11 0h1v1h-1zm10 0h1v1h-1zm11 0h1v1h-1zm10 0h1v1h-1zm11 0h1v1h-1zm10 0h1v1h-1zm11 0h1v1h-1zm10 0h1v1h-1zm11 0h1v1h-1zm10 0h1v1h-1zm11 0h1v1h-1zm10 0h1v1h-1zm11 0h1v1h-1zm10 0h1v1h-1zm11 0h1v1h-1zm11 0h1v1h-1zm10 0h1v1h-1zm11 0h1v1h-1zm10 0h1v1h-1zm11 0h1v1h-1zm10 0h1v1h-1zm11 0h1v1h-1zm10 0h1v1h-1zm11 0h1v1h-1zm10 0h1v1h-1zm11 0h1v1h-1zm10 0h1v1h-1zm11 0h1v1h-1zm10 0h1v1h-1zm11 0h1v1h-1zm11 0h1v1h-1zm10 0h1v1h-1zm11 0h1v1h-1zm10 0h1v1h-1zm11 0h1v1h-1zm10 0h1v1h-1zm11 0h1v1h-1zm10 0h1v1h-1zm11 0h1v1h-1zm10 0h1v1h-1zm11 0h1v1h-1zm10 0h1v1h-1zm11 0h1v1h-1zm10 0h1v1h-1zm11 0h1v1h-1zm11 0h1v1h-1zm10 0h1v1h-1zm11 0h1v1h-1zm10 0h1v1h-1zm11 0h1v1h-1zm10 0h1v1h-1zm11 0h1v1h-1zm10 0h1v1h-1zm11 0h1v1h-1zm10 0h1v1h-1zm11 0h1v1h-1zm10 0h1v1h-1zm11 0h1v1h-1zm10 0h1v1h-1zm11 0h1v1h-1zm10 0h1v1h-1zm11 0h1v1h-1zm11 0h1v1h-1zm10 0h1v1h-1zm11 0h1v1h-1zm10 0h1v1h-1zm11 0h1v1h-1zm10 0h1v1h-1zm11 0h1v1h-1zm10 0h1v1h-1zm11 0h1v1h-1zm10 0h1v1h-1zm11 0h1v1h-1zM609 209h1v1h-1zm11 0h1v1h-1zm10 0h1v1h-1zm11 0h1v1h-1zm10 0h1v1h-1zm11 0h1v1h-1zm10 0h1v1h-1zm11 0h1v1h-1zm10 0h1v1h-1zm11 0h1v1h-1zm10 0h1v1h-1zm11 0h1v1h-1zm10 0h1v1h-1zm11 0h1v1h-1zm10 0h1v1h-1zm11 0h1v1h-1zm11 0h1v1h-1zm10 0h1v1h-1zm11 0h1v1h-1zm10 0h1v1h-1zm11 0h1v1h-1zm10 0h1v1h-1zm11 0h1v1h-1zm10 0h1v1h-1zm11 0h1v1h-1zm10 0h1v1h-1zm11 0h1v1h-1zm10 0h1v1h-1zm11 0h1v1h-1zm10 0h1v1h-1zm11 0h1v1h-1zm11 0h1v1h-1zm10 0h1v1h-1zm11 0h1v1h-1zm10 0h1v1h-1zm11 0h1v1h-1zm10 0h1v1h-1zm11 0h1v1h-1zm10 0h1v1h-1zm11 0h1v1h-1zm10 0h1v1h-1zm11 0h1v1h-1zm10 0h1v1h-1zm11 0h1v1h-1zm10 0h1v1h-1zm11 0h1v1h-1zm11 0h1v1h-1zm10 0h1v1h-1zm11 0h1v1h-1zm10 0h1v1h-1zm11 0h1v1h-1zm10 0h1v1h-1zm11 0h1v1h-1zm10 0h1v1h-1zm11 0h1v1h-1zm10 0h1v1h-1zm11 0h1v1h-1zm10 0h1v1h-1zm11 0h1v1h-1zm10 0h1v1h-1zm11 0h1v1h-1zm11 0h1v1h-1zm10 0h1v1h-1zm11 0h1v1h-1zm10 0h1v1h-1zm11 0h1v1h-1zm10 0h1v1h-1zm11 0h1v1h-1zm10 0h1v1h-1zm11 0h1v1h-1zm10 0h1v1h-1zm11 0h1v1h-1zm10 0h1v1h-1zm11 0h1v1h-1zm10 0h1v1h-1zm11 0h1v1h-1zm11 0h1v1h-1zm10 0h1v1h-1zm11 0h1v1h-1zm10 0h1v1h-1zm11 0h1v1h-1zm10 0h1v1h-1zm11 0h1v1h-1zm10 0h1v1h-1zm11 0h1v1h-1zm10 0h1v1h-1zm11 0h1v1h-1zm10 0h1v1h-1zm11 0h1v1h-1zm10 0h1v1h-1zm11 0h1v1h-1zm11 0h1v1h-1zm10 0h1v1h-1zm11 0h1v1h-1zm10 0h1v1h-1zm11 0h1v1h-1zm10 0h1v1h-1zm11 0h1v1h-1zm10 0h1v1h-1zm11 0h1v1h-1zm10 0h1v1h-1zm11 0h1v1h-1zm10 0h1v1h-1zm11 0h1v1h-1zm10 0h1v1h-1zm11 0h1v1h-1zm10 0h1v1h-1zm11 0h1v1h-1zm11 0h1v1h-1zm10 0h1v1h-1zm11 0h1v1h-1zm10 0h1v1h-1zm11 0h1v1h-1zm10 0h1v1h-1zm11 0h1v1h-1zm10 0h1v1h-1zm11 0h1v1h-1zm10 0h1v1h-1zm11 0h1v1h-1zM609 219h1v1h-1zm11 0h1v1h-1zm10 0h1v1h-1zm11 0h1v1h-1zm10 0h1v1h-1zm11 0h1v1h-1zm10 0h1v1h-1zm11 0h1v1h-1zm10 0h1v1h-1zm11 0h1v1h-1zm10 0h1v1h-1zm11 0h1v1h-1zm10 0h1v1h-1zm11 0h1v1h-1zm10 0h1v1h-1zm11 0h1v1h-1zm11 0h1v1h-1zm10 0h1v1h-1zm11 0h1v1h-1zm10 0h1v1h-1zm11 0h1v1h-1zm10 0h1v1h-1zm11 0h1v1h-1zm10 0h1v1h-1zm11 0h1v1h-1zm10 0h1v1h-1zm11 0h1v1h-1zm10 0h1v1h-1zm11 0h1v1h-1zm10 0h1v1h-1zm11 0h1v1h-1zm11 0h1v1h-1zm10 0h1v1h-1zm11 0h1v1h-1zm10 0h1v1h-1zm11 0h1v1h-1zm10 0h1v1h-1zm11 0h1v1h-1zm10 0h1v1h-1zm11 0h1v1h-1zm10 0h1v1h-1zm11 0h1v1h-1zm10 0h1v1h-1zm11 0h1v1h-1zm10 0h1v1h-1zm11 0h1v1h-1zm11 0h1v1h-1zm10 0h1v1h-1zm11 0h1v1h-1zm10 0h1v1h-1zm11 0h1v1h-1zm10 0h1v1h-1zm11 0h1v1h-1zm10 0h1v1h-1zm11 0h1v1h-1zm10 0h1v1h-1zm11 0h1v1h-1zm10 0h1v1h-1zm11 0h1v1h-1zm10 0h1v1h-1zm11 0h1v1h-1zm11 0h1v1h-1zm10 0h1v1h-1zm11 0h1v1h-1zm10 0h1v1h-1zm11 0h1v1h-1zm10 0h1v1h-1zm11 0h1v1h-1zm10 0h1v1h-1zm11 0h1v1h-1zm10 0h1v1h-1zm11 0h1v1h-1zm10 0h1v1h-1zm11 0h1v1h-1zm10 0h1v1h-1zm11 0h1v1h-1zm11 0h1v1h-1zm10 0h1v1h-1zm11 0h1v1h-1zm10 0h1v1h-1zm11 0h1v1h-1zm10 0h1v1h-1zm11 0h1v1h-1zm10 0h1v1h-1zm11 0h1v1h-1zm10 0h1v1h-1zm11 0h1v1h-1zm10 0h1v1h-1zm11 0h1v1h-1zm10 0h1v1h-1zm11 0h1v1h-1zm11 0h1v1h-1zm10 0h1v1h-1zm11 0h1v1h-1zm10 0h1v1h-1zm11 0h1v1h-1zm10 0h1v1h-1zm11 0h1v1h-1zm10 0h1v1h-1zm11 0h1v1h-1zm10 0h1v1h-1zm11 0h1v1h-1zm10 0h1v1h-1zm11 0h1v1h-1zm10 0h1v1h-1zm11 0h1v1h-1zm10 0h1v1h-1zm11 0h1v1h-1zm11 0h1v1h-1zm10 0h1v1h-1zm11 0h1v1h-1zm10 0h1v1h-1zm11 0h1v1h-1zm10 0h1v1h-1zm11 0h1v1h-1zm10 0h1v1h-1zm11 0h1v1h-1zm10 0h1v1h-1zm11 0h1v1h-1zM609 230h1v1h-1zm11 0h1v1h-1zm10 0h1v1h-1zm11 0h1v1h-1zm10 0h1v1h-1zm11 0h1v1h-1zm10 0h1v1h-1zm11 0h1v1h-1zm10 0h1v1h-1zm11 0h1v1h-1zm10 0h1v1h-1zm11 0h1v1h-1zm10 0h1v1h-1zm11 0h1v1h-1zm10 0h1v1h-1zm11 0h1v1h-1zm11 0h1v1h-1zm10 0h1v1h-1zm11 0h1v1h-1zm10 0h1v1h-1zm11 0h1v1h-1zm10 0h1v1h-1zm11 0h1v1h-1zm10 0h1v1h-1zm11 0h1v1h-1zm10 0h1v1h-1zm11 0h1v1h-1zm10 0h1v1h-1zm11 0h1v1h-1zm10 0h1v1h-1zm11 0h1v1h-1zm11 0h1v1h-1zm10 0h1v1h-1zm11 0h1v1h-1zm10 0h1v1h-1zm11 0h1v1h-1zm10 0h1v1h-1zm11 0h1v1h-1zm10 0h1v1h-1zm11 0h1v1h-1zm10 0h1v1h-1zm11 0h1v1h-1zm10 0h1v1h-1zm11 0h1v1h-1zm10 0h1v1h-1zm11 0h1v1h-1zm11 0h1v1h-1zm10 0h1v1h-1zm11 0h1v1h-1zm10 0h1v1h-1zm11 0h1v1h-1zm10 0h1v1h-1zm11 0h1v1h-1zm10 0h1v1h-1zm11 0h1v1h-1zm10 0h1v1h-1zm11 0h1v1h-1zm10 0h1v1h-1zm11 0h1v1h-1zm10 0h1v1h-1zm11 0h1v1h-1zm11 0h1v1h-1zm10 0h1v1h-1zm11 0h1v1h-1zm10 0h1v1h-1zm11 0h1v1h-1zm10 0h1v1h-1zm11 0h1v1h-1zm10 0h1v1h-1zm11 0h1v1h-1zm10 0h1v1h-1zm11 0h1v1h-1zm10 0h1v1h-1zm11 0h1v1h-1zm10 0h1v1h-1zm11 0h1v1h-1zm11 0h1v1h-1zm10 0h1v1h-1zm11 0h1v1h-1zm10 0h1v1h-1zm11 0h1v1h-1zm10 0h1v1h-1zm11 0h1v1h-1zm10 0h1v1h-1zm11 0h1v1h-1zm10 0h1v1h-1zm11 0h1v1h-1zm10 0h1v1h-1zm11 0h1v1h-1zm10 0h1v1h-1zm11 0h1v1h-1zm11 0h1v1h-1zm10 0h1v1h-1zm11 0h1v1h-1zm10 0h1v1h-1zm11 0h1v1h-1zm10 0h1v1h-1zm11 0h1v1h-1zm10 0h1v1h-1zm11 0h1v1h-1zm10 0h1v1h-1zm11 0h1v1h-1zm10 0h1v1h-1zm11 0h1v1h-1zm10 0h1v1h-1zm11 0h1v1h-1zm10 0h1v1h-1zm11 0h1v1h-1zm11 0h1v1h-1zm10 0h1v1h-1zm11 0h1v1h-1zm10 0h1v1h-1zm11 0h1v1h-1zm10 0h1v1h-1zm11 0h1v1h-1zm10 0h1v1h-1zm11 0h1v1h-1zm10 0h1v1h-1zm11 0h1v1h-1zM609 240h1v1h-1zm11 0h1v1h-1zm10 0h1v1h-1zm11 0h1v1h-1zm10 0h1v1h-1zm11 0h1v1h-1zm10 0h1v1h-1zm11 0h1v1h-1zm10 0h1v1h-1zm11 0h1v1h-1zm10 0h1v1h-1zm11 0h1v1h-1zm10 0h1v1h-1zm11 0h1v1h-1zm10 0h1v1h-1zm11 0h1v1h-1zm11 0h1v1h-1zm10 0h1v1h-1zm11 0h1v1h-1zm10 0h1v1h-1zm11 0h1v1h-1zm10 0h1v1h-1zm11 0h1v1h-1zm10 0h1v1h-1zm11 0h1v1h-1zm10 0h1v1h-1zm11 0h1v1h-1zm10 0h1v1h-1zm11 0h1v1h-1zm10 0h1v1h-1zm11 0h1v1h-1zm11 0h1v1h-1zm10 0h1v1h-1zm11 0h1v1h-1zm10 0h1v1h-1zm11 0h1v1h-1zm10 0h1v1h-1zm11 0h1v1h-1zm10 0h1v1h-1zm11 0h1v1h-1zm10 0h1v1h-1zm11 0h1v1h-1zm10 0h1v1h-1zm11 0h1v1h-1zm10 0h1v1h-1zm11 0h1v1h-1zm11 0h1v1h-1zm10 0h1v1h-1zm11 0h1v1h-1zm10 0h1v1h-1zm11 0h1v1h-1zm10 0h1v1h-1zm11 0h1v1h-1zm10 0h1v1h-1zm11 0h1v1h-1zm10 0h1v1h-1zm11 0h1v1h-1zm10 0h1v1h-1zm11 0h1v1h-1zm10 0h1v1h-1zm11 0h1v1h-1zm11 0h1v1h-1zm10 0h1v1h-1zm11 0h1v1h-1zm10 0h1v1h-1zm11 0h1v1h-1zm10 0h1v1h-1zm11 0h1v1h-1zm10 0h1v1h-1zm11 0h1v1h-1zm10 0h1v1h-1zm11 0h1v1h-1zm10 0h1v1h-1zm11 0h1v1h-1zm10 0h1v1h-1zm11 0h1v1h-1zm11 0h1v1h-1zm10 0h1v1h-1zm11 0h1v1h-1zm10 0h1v1h-1zm11 0h1v1h-1zm10 0h1v1h-1zm11 0h1v1h-1zm10 0h1v1h-1zm11 0h1v1h-1zm10 0h1v1h-1zm11 0h1v1h-1zm10 0h1v1h-1zm11 0h1v1h-1zm10 0h1v1h-1zm11 0h1v1h-1zm11 0h1v1h-1zm10 0h1v1h-1zm11 0h1v1h-1zm10 0h1v1h-1zm11 0h1v1h-1zm10 0h1v1h-1zm11 0h1v1h-1zm10 0h1v1h-1zm11 0h1v1h-1zm10 0h1v1h-1zm11 0h1v1h-1zm10 0h1v1h-1zm11 0h1v1h-1zm10 0h1v1h-1zm11 0h1v1h-1zm10 0h1v1h-1zm11 0h1v1h-1zm11 0h1v1h-1zm10 0h1v1h-1zm11 0h1v1h-1zm10 0h1v1h-1zm11 0h1v1h-1zm10 0h1v1h-1zm11 0h1v1h-1zm10 0h1v1h-1zm11 0h1v1h-1zm10 0h1v1h-1zm11 0h1v1h-1zM609 251h1v1h-1zm11 0h1v1h-1zm10 0h1v1h-1zm11 0h1v1h-1zm10 0h1v1h-1zm11 0h1v1h-1zm10 0h1v1h-1zm11 0h1v1h-1zm10 0h1v1h-1zm11 0h1v1h-1zm10 0h1v1h-1zm11 0h1v1h-1zm10 0h1v1h-1zm11 0h1v1h-1zm10 0h1v1h-1zm11 0h1v1h-1zm11 0h1v1h-1zm10 0h1v1h-1zm11 0h1v1h-1zm10 0h1v1h-1zm11 0h1v1h-1zm10 0h1v1h-1zm11 0h1v1h-1zm10 0h1v1h-1zm11 0h1v1h-1zm10 0h1v1h-1zm11 0h1v1h-1zm10 0h1v1h-1zm11 0h1v1h-1zm10 0h1v1h-1zm11 0h1v1h-1zm11 0h1v1h-1zm10 0h1v1h-1zm11 0h1v1h-1zm10 0h1v1h-1zm11 0h1v1h-1zm10 0h1v1h-1zm11 0h1v1h-1zm10 0h1v1h-1zm11 0h1v1h-1zm10 0h1v1h-1zm11 0h1v1h-1zm10 0h1v1h-1zm11 0h1v1h-1zm10 0h1v1h-1zm11 0h1v1h-1zm11 0h1v1h-1zm10 0h1v1h-1zm11 0h1v1h-1zm10 0h1v1h-1zm11 0h1v1h-1zm10 0h1v1h-1zm11 0h1v1h-1zm10 0h1v1h-1zm11 0h1v1h-1zm10 0h1v1h-1zm11 0h1v1h-1zm10 0h1v1h-1zm11 0h1v1h-1zm10 0h1v1h-1zm11 0h1v1h-1zm11 0h1v1h-1zm10 0h1v1h-1zm11 0h1v1h-1zm10 0h1v1h-1zm11 0h1v1h-1zm10 0h1v1h-1zm11 0h1v1h-1zm10 0h1v1h-1zm11 0h1v1h-1zm10 0h1v1h-1zm11 0h1v1h-1zm10 0h1v1h-1zm11 0h1v1h-1zm10 0h1v1h-1zm11 0h1v1h-1zm11 0h1v1h-1zm10 0h1v1h-1zm11 0h1v1h-1zm10 0h1v1h-1zm11 0h1v1h-1zm10 0h1v1h-1zm11 0h1v1h-1zm10 0h1v1h-1zm11 0h1v1h-1zm10 0h1v1h-1zm11 0h1v1h-1zm10 0h1v1h-1zm11 0h1v1h-1zm10 0h1v1h-1zm11 0h1v1h-1zm11 0h1v1h-1zm10 0h1v1h-1zm11 0h1v1h-1zm10 0h1v1h-1zm11 0h1v1h-1zm10 0h1v1h-1zm11 0h1v1h-1zm10 0h1v1h-1zm11 0h1v1h-1zm10 0h1v1h-1zm11 0h1v1h-1zm10 0h1v1h-1zm11 0h1v1h-1zm10 0h1v1h-1zm11 0h1v1h-1zm10 0h1v1h-1zm11 0h1v1h-1zm11 0h1v1h-1zm10 0h1v1h-1zm11 0h1v1h-1zm10 0h1v1h-1zm11 0h1v1h-1zm10 0h1v1h-1zm11 0h1v1h-1zm10 0h1v1h-1zm11 0h1v1h-1zm10 0h1v1h-1zm11 0h1v1h-1zM609 261h1v1h-1zm11 0h1v1h-1zm10 0h1v1h-1zm11 0h1v1h-1zm10 0h1v1h-1zm11 0h1v1h-1zm10 0h1v1h-1zm11 0h1v1h-1zm10 0h1v1h-1zm11 0h1v1h-1zm10 0h1v1h-1zm11 0h1v1h-1zm10 0h1v1h-1zm11 0h1v1h-1zm10 0h1v1h-1zm11 0h1v1h-1zm11 0h1v1h-1zm10 0h1v1h-1zm11 0h1v1h-1zm10 0h1v1h-1zm11 0h1v1h-1zm10 0h1v1h-1zm11 0h1v1h-1zm10 0h1v1h-1zm11 0h1v1h-1zm10 0h1v1h-1zm11 0h1v1h-1zm10 0h1v1h-1zm11 0h1v1h-1zm10 0h1v1h-1zm11 0h1v1h-1zm11 0h1v1h-1zm10 0h1v1h-1zm11 0h1v1h-1zm10 0h1v1h-1zm11 0h1v1h-1zm10 0h1v1h-1zm11 0h1v1h-1zm10 0h1v1h-1zm11 0h1v1h-1zm10 0h1v1h-1zm11 0h1v1h-1zm10 0h1v1h-1zm11 0h1v1h-1zm10 0h1v1h-1zm11 0h1v1h-1zm11 0h1v1h-1zm10 0h1v1h-1zm11 0h1v1h-1zm10 0h1v1h-1zm11 0h1v1h-1zm10 0h1v1h-1zm11 0h1v1h-1zm10 0h1v1h-1zm11 0h1v1h-1zm10 0h1v1h-1zm11 0h1v1h-1zm10 0h1v1h-1zm11 0h1v1h-1zm10 0h1v1h-1zm11 0h1v1h-1zm11 0h1v1h-1zm10 0h1v1h-1zm11 0h1v1h-1zm10 0h1v1h-1zm11 0h1v1h-1zm10 0h1v1h-1zm11 0h1v1h-1zm10 0h1v1h-1zm11 0h1v1h-1zm10 0h1v1h-1zm11 0h1v1h-1zm10 0h1v1h-1zm11 0h1v1h-1zm10 0h1v1h-1zm11 0h1v1h-1zm11 0h1v1h-1zm10 0h1v1h-1zm11 0h1v1h-1zm10 0h1v1h-1zm11 0h1v1h-1zm10 0h1v1h-1zm11 0h1v1h-1zm10 0h1v1h-1zm11 0h1v1h-1zm10 0h1v1h-1zm11 0h1v1h-1zm10 0h1v1h-1zm11 0h1v1h-1zm10 0h1v1h-1zm11 0h1v1h-1zm11 0h1v1h-1zm10 0h1v1h-1zm11 0h1v1h-1zm10 0h1v1h-1zm11 0h1v1h-1zm10 0h1v1h-1zm11 0h1v1h-1zm10 0h1v1h-1zm11 0h1v1h-1zm10 0h1v1h-1zm11 0h1v1h-1zm10 0h1v1h-1zm11 0h1v1h-1zm10 0h1v1h-1zm11 0h1v1h-1zm10 0h1v1h-1zm11 0h1v1h-1zm11 0h1v1h-1zm10 0h1v1h-1zm11 0h1v1h-1zm10 0h1v1h-1zm11 0h1v1h-1zm10 0h1v1h-1zm11 0h1v1h-1zm10 0h1v1h-1zm11 0h1v1h-1zm10 0h1v1h-1zm11 0h1v1h-1zM609 272h1v1h-1zm11 0h1v1h-1zm10 0h1v1h-1zm11 0h1v1h-1zm10 0h1v1h-1zm11 0h1v1h-1zm10 0h1v1h-1zm11 0h1v1h-1zm10 0h1v1h-1zm11 0h1v1h-1zm10 0h1v1h-1zm11 0h1v1h-1zm10 0h1v1h-1zm11 0h1v1h-1zm10 0h1v1h-1zm11 0h1v1h-1zm11 0h1v1h-1zm10 0h1v1h-1zm11 0h1v1h-1zm10 0h1v1h-1zm11 0h1v1h-1zm10 0h1v1h-1zm11 0h1v1h-1zm10 0h1v1h-1zm11 0h1v1h-1zm10 0h1v1h-1zm11 0h1v1h-1zm10 0h1v1h-1zm11 0h1v1h-1zm10 0h1v1h-1zm11 0h1v1h-1zm11 0h1v1h-1zm10 0h1v1h-1zm11 0h1v1h-1zm10 0h1v1h-1zm11 0h1v1h-1zm10 0h1v1h-1zm11 0h1v1h-1zm10 0h1v1h-1zm11 0h1v1h-1zm10 0h1v1h-1zm11 0h1v1h-1zm10 0h1v1h-1zm11 0h1v1h-1zm10 0h1v1h-1zm11 0h1v1h-1zm11 0h1v1h-1zm10 0h1v1h-1zm11 0h1v1h-1zm10 0h1v1h-1zm11 0h1v1h-1zm10 0h1v1h-1zm11 0h1v1h-1zm10 0h1v1h-1zm11 0h1v1h-1zm10 0h1v1h-1zm11 0h1v1h-1zm10 0h1v1h-1zm11 0h1v1h-1zm10 0h1v1h-1zm11 0h1v1h-1zm11 0h1v1h-1zm10 0h1v1h-1zm11 0h1v1h-1zm10 0h1v1h-1zm11 0h1v1h-1zm10 0h1v1h-1zm11 0h1v1h-1zm10 0h1v1h-1zm11 0h1v1h-1zm10 0h1v1h-1zm11 0h1v1h-1zm10 0h1v1h-1zm11 0h1v1h-1zm10 0h1v1h-1zm11 0h1v1h-1zm11 0h1v1h-1zm10 0h1v1h-1zm11 0h1v1h-1zm10 0h1v1h-1zm11 0h1v1h-1zm10 0h1v1h-1zm11 0h1v1h-1zm10 0h1v1h-1zm11 0h1v1h-1zm10 0h1v1h-1zm11 0h1v1h-1zm10 0h1v1h-1zm11 0h1v1h-1zm10 0h1v1h-1zm11 0h1v1h-1zm11 0h1v1h-1zm10 0h1v1h-1zm11 0h1v1h-1zm10 0h1v1h-1zm11 0h1v1h-1zm10 0h1v1h-1zm11 0h1v1h-1zm10 0h1v1h-1zm11 0h1v1h-1zm10 0h1v1h-1zm11 0h1v1h-1zm10 0h1v1h-1zm11 0h1v1h-1zm10 0h1v1h-1zm11 0h1v1h-1zm10 0h1v1h-1zm11 0h1v1h-1zm11 0h1v1h-1zm10 0h1v1h-1zm11 0h1v1h-1zm10 0h1v1h-1zm11 0h1v1h-1zm10 0h1v1h-1zm11 0h1v1h-1zm10 0h1v1h-1zm11 0h1v1h-1zm10 0h1v1h-1zm11 0h1v1h-1zM609 282h1v1h-1zm11 0h1v1h-1zm10 0h1v1h-1zm11 0h1v1h-1zm10 0h1v1h-1zm11 0h1v1h-1zm10 0h1v1h-1zm11 0h1v1h-1zm10 0h1v1h-1zm11 0h1v1h-1zm10 0h1v1h-1zm11 0h1v1h-1zm10 0h1v1h-1zm11 0h1v1h-1zm10 0h1v1h-1zm11 0h1v1h-1zm11 0h1v1h-1zm10 0h1v1h-1zm11 0h1v1h-1zm10 0h1v1h-1zm11 0h1v1h-1zm10 0h1v1h-1zm11 0h1v1h-1zm10 0h1v1h-1zm11 0h1v1h-1zm10 0h1v1h-1zm11 0h1v1h-1zm10 0h1v1h-1zm11 0h1v1h-1zm10 0h1v1h-1zm11 0h1v1h-1zm11 0h1v1h-1zm10 0h1v1h-1zm11 0h1v1h-1zm10 0h1v1h-1zm11 0h1v1h-1zm10 0h1v1h-1zm11 0h1v1h-1zm10 0h1v1h-1zm11 0h1v1h-1zm10 0h1v1h-1zm11 0h1v1h-1zm10 0h1v1h-1zm11 0h1v1h-1zm10 0h1v1h-1zm11 0h1v1h-1zm11 0h1v1h-1zm10 0h1v1h-1zm11 0h1v1h-1zm10 0h1v1h-1zm11 0h1v1h-1zm10 0h1v1h-1zm11 0h1v1h-1zm10 0h1v1h-1zm11 0h1v1h-1zm10 0h1v1h-1zm11 0h1v1h-1zm10 0h1v1h-1zm11 0h1v1h-1zm10 0h1v1h-1zm11 0h1v1h-1zm11 0h1v1h-1zm10 0h1v1h-1zm11 0h1v1h-1zm10 0h1v1h-1zm11 0h1v1h-1zm10 0h1v1h-1zm11 0h1v1h-1zm10 0h1v1h-1zm11 0h1v1h-1zm10 0h1v1h-1zm11 0h1v1h-1zm10 0h1v1h-1zm11 0h1v1h-1zm10 0h1v1h-1zm11 0h1v1h-1zm11 0h1v1h-1zm10 0h1v1h-1zm11 0h1v1h-1zm10 0h1v1h-1zm11 0h1v1h-1zm10 0h1v1h-1zm11 0h1v1h-1zm10 0h1v1h-1zm11 0h1v1h-1zm10 0h1v1h-1zm11 0h1v1h-1zm10 0h1v1h-1zm11 0h1v1h-1zm10 0h1v1h-1zm11 0h1v1h-1zm11 0h1v1h-1zm10 0h1v1h-1zm11 0h1v1h-1zm10 0h1v1h-1zm11 0h1v1h-1zm10 0h1v1h-1zm11 0h1v1h-1zm10 0h1v1h-1zm11 0h1v1h-1zm10 0h1v1h-1zm11 0h1v1h-1zm10 0h1v1h-1zm11 0h1v1h-1zm10 0h1v1h-1zm11 0h1v1h-1zm10 0h1v1h-1zm11 0h1v1h-1zm11 0h1v1h-1zm10 0h1v1h-1zm11 0h1v1h-1zm10 0h1v1h-1zm11 0h1v1h-1zm10 0h1v1h-1zm11 0h1v1h-1zm10 0h1v1h-1zm11 0h1v1h-1zm10 0h1v1h-1zm11 0h1v1h-1zM609 293h1v1h-1zm11 0h1v1h-1zm10 0h1v1h-1zm11 0h1v1h-1zm10 0h1v1h-1zm11 0h1v1h-1zm10 0h1v1h-1zm11 0h1v1h-1zm10 0h1v1h-1zm11 0h1v1h-1zm10 0h1v1h-1zm11 0h1v1h-1zm10 0h1v1h-1zm11 0h1v1h-1zm10 0h1v1h-1zm11 0h1v1h-1zm11 0h1v1h-1zm10 0h1v1h-1zm11 0h1v1h-1zm10 0h1v1h-1zm11 0h1v1h-1zm10 0h1v1h-1zm11 0h1v1h-1zm10 0h1v1h-1zm11 0h1v1h-1zm10 0h1v1h-1zm11 0h1v1h-1zm10 0h1v1h-1zm11 0h1v1h-1zm10 0h1v1h-1zm11 0h1v1h-1zm11 0h1v1h-1zm10 0h1v1h-1zm11 0h1v1h-1zm10 0h1v1h-1zm11 0h1v1h-1zm10 0h1v1h-1zm11 0h1v1h-1zm10 0h1v1h-1zm11 0h1v1h-1zm10 0h1v1h-1zm11 0h1v1h-1zm10 0h1v1h-1zm11 0h1v1h-1zm10 0h1v1h-1zm11 0h1v1h-1zm11 0h1v1h-1zm10 0h1v1h-1zm11 0h1v1h-1zm10 0h1v1h-1zm11 0h1v1h-1zm10 0h1v1h-1zm11 0h1v1h-1zm10 0h1v1h-1zm11 0h1v1h-1zm10 0h1v1h-1zm11 0h1v1h-1zm10 0h1v1h-1zm11 0h1v1h-1zm10 0h1v1h-1zm11 0h1v1h-1zm11 0h1v1h-1zm10 0h1v1h-1zm11 0h1v1h-1zm10 0h1v1h-1zm11 0h1v1h-1zm10 0h1v1h-1zm11 0h1v1h-1zm10 0h1v1h-1zm11 0h1v1h-1zm10 0h1v1h-1zm11 0h1v1h-1zm10 0h1v1h-1zm11 0h1v1h-1zm10 0h1v1h-1zm11 0h1v1h-1zm11 0h1v1h-1zm10 0h1v1h-1zm11 0h1v1h-1zm10 0h1v1h-1zm11 0h1v1h-1zm10 0h1v1h-1zm11 0h1v1h-1zm10 0h1v1h-1zm11 0h1v1h-1zm10 0h1v1h-1zm11 0h1v1h-1zm10 0h1v1h-1zm11 0h1v1h-1zm10 0h1v1h-1zm11 0h1v1h-1zm11 0h1v1h-1zm10 0h1v1h-1zm11 0h1v1h-1zm10 0h1v1h-1zm11 0h1v1h-1zm10 0h1v1h-1zm11 0h1v1h-1zm10 0h1v1h-1zm11 0h1v1h-1zm10 0h1v1h-1zm11 0h1v1h-1zm10 0h1v1h-1zm11 0h1v1h-1zm10 0h1v1h-1zm11 0h1v1h-1zm10 0h1v1h-1zm11 0h1v1h-1zm11 0h1v1h-1zm10 0h1v1h-1zm11 0h1v1h-1zm10 0h1v1h-1zm11 0h1v1h-1zm10 0h1v1h-1zm11 0h1v1h-1zm10 0h1v1h-1zm11 0h1v1h-1zm10 0h1v1h-1zm11 0h1v1h-1zM609 303h1v1h-1zm11 0h1v1h-1zm10 0h1v1h-1zm11 0h1v1h-1zm10 0h1v1h-1zm11 0h1v1h-1zm10 0h1v1h-1zm11 0h1v1h-1zm10 0h1v1h-1zm11 0h1v1h-1zm10 0h1v1h-1zm11 0h1v1h-1zm10 0h1v1h-1zm11 0h1v1h-1zm10 0h1v1h-1zm11 0h1v1h-1zm11 0h1v1h-1zm10 0h1v1h-1zm11 0h1v1h-1zm10 0h1v1h-1zm11 0h1v1h-1zm10 0h1v1h-1zm11 0h1v1h-1zm10 0h1v1h-1zm11 0h1v1h-1zm10 0h1v1h-1zm11 0h1v1h-1zm10 0h1v1h-1zm11 0h1v1h-1zm10 0h1v1h-1zm11 0h1v1h-1zm11 0h1v1h-1zm10 0h1v1h-1zm11 0h1v1h-1zm10 0h1v1h-1zm11 0h1v1h-1zm10 0h1v1h-1zm11 0h1v1h-1zm10 0h1v1h-1zm11 0h1v1h-1zm10 0h1v1h-1zm11 0h1v1h-1zm10 0h1v1h-1zm11 0h1v1h-1zm10 0h1v1h-1zm11 0h1v1h-1zm11 0h1v1h-1zm10 0h1v1h-1zm11 0h1v1h-1zm10 0h1v1h-1zm11 0h1v1h-1zm10 0h1v1h-1zm11 0h1v1h-1zm10 0h1v1h-1zm11 0h1v1h-1zm10 0h1v1h-1zm11 0h1v1h-1zm10 0h1v1h-1zm11 0h1v1h-1zm10 0h1v1h-1zm11 0h1v1h-1zm11 0h1v1h-1zm10 0h1v1h-1zm11 0h1v1h-1zm10 0h1v1h-1zm11 0h1v1h-1zm10 0h1v1h-1zm11 0h1v1h-1zm10 0h1v1h-1zm11 0h1v1h-1zm10 0h1v1h-1zm11 0h1v1h-1zm10 0h1v1h-1zm11 0h1v1h-1zm10 0h1v1h-1zm11 0h1v1h-1zm11 0h1v1h-1zm10 0h1v1h-1zm11 0h1v1h-1zm10 0h1v1h-1zm11 0h1v1h-1zm10 0h1v1h-1zm11 0h1v1h-1zm10 0h1v1h-1zm11 0h1v1h-1zm10 0h1v1h-1zm11 0h1v1h-1zm10 0h1v1h-1zm11 0h1v1h-1zm10 0h1v1h-1zm11 0h1v1h-1zm11 0h1v1h-1zm10 0h1v1h-1zm11 0h1v1h-1zm10 0h1v1h-1zm11 0h1v1h-1zm10 0h1v1h-1zm11 0h1v1h-1zm10 0h1v1h-1zm11 0h1v1h-1zm10 0h1v1h-1zm11 0h1v1h-1zm10 0h1v1h-1zm11 0h1v1h-1zm10 0h1v1h-1zm11 0h1v1h-1zm10 0h1v1h-1zm11 0h1v1h-1zm11 0h1v1h-1zm10 0h1v1h-1zm11 0h1v1h-1zm10 0h1v1h-1zm11 0h1v1h-1zm10 0h1v1h-1zm11 0h1v1h-1zm10 0h1v1h-1zm11 0h1v1h-1zm10 0h1v1h-1zm11 0h1v1h-1zM609 314h1v1h-1zm11 0h1v1h-1zm10 0h1v1h-1zm11 0h1v1h-1zm10 0h1v1h-1zm11 0h1v1h-1zm10 0h1v1h-1zm11 0h1v1h-1zm10 0h1v1h-1zm11 0h1v1h-1zm10 0h1v1h-1zm11 0h1v1h-1zm10 0h1v1h-1zm11 0h1v1h-1zm10 0h1v1h-1zm11 0h1v1h-1zm11 0h1v1h-1zm10 0h1v1h-1zm11 0h1v1h-1zm10 0h1v1h-1zm11 0h1v1h-1zm10 0h1v1h-1zm11 0h1v1h-1zm10 0h1v1h-1zm11 0h1v1h-1zm10 0h1v1h-1zm11 0h1v1h-1zm10 0h1v1h-1zm11 0h1v1h-1zm10 0h1v1h-1zm11 0h1v1h-1zm11 0h1v1h-1zm10 0h1v1h-1zm11 0h1v1h-1zm10 0h1v1h-1zm11 0h1v1h-1zm10 0h1v1h-1zm11 0h1v1h-1zm10 0h1v1h-1zm11 0h1v1h-1zm10 0h1v1h-1zm11 0h1v1h-1zm10 0h1v1h-1zm11 0h1v1h-1zm10 0h1v1h-1zm11 0h1v1h-1zm11 0h1v1h-1zm10 0h1v1h-1zm11 0h1v1h-1zm10 0h1v1h-1zm11 0h1v1h-1zm10 0h1v1h-1zm11 0h1v1h-1zm10 0h1v1h-1zm11 0h1v1h-1zm10 0h1v1h-1zm11 0h1v1h-1zm10 0h1v1h-1zm11 0h1v1h-1zm10 0h1v1h-1zm11 0h1v1h-1zm11 0h1v1h-1zm10 0h1v1h-1zm11 0h1v1h-1zm10 0h1v1h-1zm11 0h1v1h-1zm10 0h1v1h-1zm11 0h1v1h-1zm10 0h1v1h-1zm11 0h1v1h-1zm10 0h1v1h-1zm11 0h1v1h-1zm10 0h1v1h-1zm11 0h1v1h-1zm10 0h1v1h-1zm11 0h1v1h-1zm11 0h1v1h-1zm10 0h1v1h-1zm11 0h1v1h-1zm10 0h1v1h-1zm11 0h1v1h-1zm10 0h1v1h-1zm11 0h1v1h-1zm10 0h1v1h-1zm11 0h1v1h-1zm10 0h1v1h-1zm11 0h1v1h-1zm10 0h1v1h-1zm11 0h1v1h-1zm10 0h1v1h-1zm11 0h1v1h-1zm11 0h1v1h-1zm10 0h1v1h-1zm11 0h1v1h-1zm10 0h1v1h-1zm11 0h1v1h-1zm10 0h1v1h-1zm11 0h1v1h-1zm10 0h1v1h-1zm11 0h1v1h-1zm10 0h1v1h-1zm11 0h1v1h-1zm10 0h1v1h-1zm11 0h1v1h-1zm10 0h1v1h-1zm11 0h1v1h-1zm10 0h1v1h-1zm11 0h1v1h-1zm11 0h1v1h-1zm10 0h1v1h-1zm11 0h1v1h-1zm10 0h1v1h-1zm11 0h1v1h-1zm10 0h1v1h-1zm11 0h1v1h-1zm10 0h1v1h-1zm11 0h1v1h-1zm10 0h1v1h-1zm11 0h1v1h-1zM609 324h1v1h-1zm11 0h1v1h-1zm10 0h1v1h-1zm11 0h1v1h-1zm10 0h1v1h-1zm11 0h1v1h-1zm10 0h1v1h-1zm11 0h1v1h-1zm10 0h1v1h-1zm11 0h1v1h-1zm10 0h1v1h-1zm11 0h1v1h-1zm10 0h1v1h-1zm11 0h1v1h-1zm10 0h1v1h-1zm11 0h1v1h-1zm11 0h1v1h-1zm10 0h1v1h-1zm11 0h1v1h-1zm10 0h1v1h-1zm11 0h1v1h-1zm10 0h1v1h-1zm11 0h1v1h-1zm10 0h1v1h-1zm11 0h1v1h-1zm10 0h1v1h-1zm11 0h1v1h-1zm10 0h1v1h-1zm11 0h1v1h-1zm10 0h1v1h-1zm11 0h1v1h-1zm11 0h1v1h-1zm10 0h1v1h-1zm11 0h1v1h-1zm10 0h1v1h-1zm11 0h1v1h-1zm10 0h1v1h-1zm11 0h1v1h-1zm10 0h1v1h-1zm11 0h1v1h-1zm10 0h1v1h-1zm11 0h1v1h-1zm10 0h1v1h-1zm11 0h1v1h-1zm10 0h1v1h-1zm11 0h1v1h-1zm11 0h1v1h-1zm10 0h1v1h-1zm11 0h1v1h-1zm10 0h1v1h-1zm11 0h1v1h-1zm10 0h1v1h-1zm11 0h1v1h-1zm10 0h1v1h-1zm11 0h1v1h-1zm10 0h1v1h-1zm11 0h1v1h-1zm10 0h1v1h-1zm11 0h1v1h-1zm10 0h1v1h-1zm11 0h1v1h-1zm11 0h1v1h-1zm10 0h1v1h-1zm11 0h1v1h-1zm10 0h1v1h-1zm11 0h1v1h-1zm10 0h1v1h-1zm11 0h1v1h-1zm10 0h1v1h-1zm11 0h1v1h-1zm10 0h1v1h-1zm11 0h1v1h-1zm10 0h1v1h-1zm11 0h1v1h-1zm10 0h1v1h-1zm11 0h1v1h-1zm11 0h1v1h-1zm10 0h1v1h-1zm11 0h1v1h-1zm10 0h1v1h-1zm11 0h1v1h-1zm10 0h1v1h-1zm11 0h1v1h-1zm10 0h1v1h-1zm11 0h1v1h-1zm10 0h1v1h-1zm11 0h1v1h-1zm10 0h1v1h-1zm11 0h1v1h-1zm10 0h1v1h-1zm11 0h1v1h-1zm11 0h1v1h-1zm10 0h1v1h-1zm11 0h1v1h-1zm10 0h1v1h-1zm11 0h1v1h-1zm10 0h1v1h-1zm11 0h1v1h-1zm10 0h1v1h-1zm11 0h1v1h-1zm10 0h1v1h-1zm11 0h1v1h-1zm10 0h1v1h-1zm11 0h1v1h-1zm10 0h1v1h-1zm11 0h1v1h-1zm10 0h1v1h-1zm11 0h1v1h-1zm11 0h1v1h-1zm10 0h1v1h-1zm11 0h1v1h-1zm10 0h1v1h-1zm11 0h1v1h-1zm10 0h1v1h-1zm11 0h1v1h-1zm10 0h1v1h-1zm11 0h1v1h-1zm10 0h1v1h-1zm11 0h1v1h-1zM609 335h1v1h-1zm11 0h1v1h-1zm10 0h1v1h-1zm11 0h1v1h-1zm10 0h1v1h-1zm11 0h1v1h-1zm10 0h1v1h-1zm11 0h1v1h-1zm10 0h1v1h-1zm11 0h1v1h-1zm10 0h1v1h-1zm11 0h1v1h-1zm10 0h1v1h-1zm11 0h1v1h-1zm10 0h1v1h-1zm11 0h1v1h-1zm11 0h1v1h-1zm10 0h1v1h-1zm11 0h1v1h-1zm10 0h1v1h-1zm11 0h1v1h-1zm10 0h1v1h-1zm11 0h1v1h-1zm10 0h1v1h-1zm11 0h1v1h-1zm10 0h1v1h-1zm11 0h1v1h-1zm10 0h1v1h-1zm11 0h1v1h-1zm10 0h1v1h-1zm11 0h1v1h-1zm11 0h1v1h-1zm10 0h1v1h-1zm11 0h1v1h-1zm10 0h1v1h-1zm11 0h1v1h-1zm10 0h1v1h-1zm11 0h1v1h-1zm10 0h1v1h-1zm11 0h1v1h-1zm10 0h1v1h-1zm11 0h1v1h-1zm10 0h1v1h-1zm11 0h1v1h-1zm10 0h1v1h-1zm11 0h1v1h-1zm11 0h1v1h-1zm10 0h1v1h-1zm11 0h1v1h-1zm10 0h1v1h-1zm11 0h1v1h-1zm10 0h1v1h-1zm11 0h1v1h-1zm10 0h1v1h-1zm11 0h1v1h-1zm10 0h1v1h-1zm11 0h1v1h-1zm10 0h1v1h-1zm11 0h1v1h-1zm10 0h1v1h-1zm11 0h1v1h-1zm11 0h1v1h-1zm10 0h1v1h-1zm11 0h1v1h-1zm10 0h1v1h-1zm11 0h1v1h-1zm10 0h1v1h-1zm11 0h1v1h-1zm10 0h1v1h-1zm11 0h1v1h-1zm10 0h1v1h-1zm11 0h1v1h-1zm10 0h1v1h-1zm11 0h1v1h-1zm10 0h1v1h-1zm11 0h1v1h-1zm11 0h1v1h-1zm10 0h1v1h-1zm11 0h1v1h-1zm10 0h1v1h-1zm11 0h1v1h-1zm10 0h1v1h-1zm11 0h1v1h-1zm10 0h1v1h-1zm11 0h1v1h-1zm10 0h1v1h-1zm11 0h1v1h-1zm10 0h1v1h-1zm11 0h1v1h-1zm10 0h1v1h-1zm11 0h1v1h-1zm11 0h1v1h-1zm10 0h1v1h-1zm11 0h1v1h-1zm10 0h1v1h-1zm11 0h1v1h-1zm10 0h1v1h-1zm11 0h1v1h-1zm10 0h1v1h-1zm11 0h1v1h-1zm10 0h1v1h-1zm11 0h1v1h-1zm10 0h1v1h-1zm11 0h1v1h-1zm10 0h1v1h-1zm11 0h1v1h-1zm10 0h1v1h-1zm11 0h1v1h-1zm11 0h1v1h-1zm10 0h1v1h-1zm11 0h1v1h-1zm10 0h1v1h-1zm11 0h1v1h-1zm10 0h1v1h-1zm11 0h1v1h-1zm10 0h1v1h-1zm11 0h1v1h-1zm10 0h1v1h-1zm11 0h1v1h-1zM609 346h1v1h-1zm11 0h1v1h-1zm10 0h1v1h-1zm11 0h1v1h-1zm10 0h1v1h-1zm11 0h1v1h-1zm10 0h1v1h-1zm11 0h1v1h-1zm10 0h1v1h-1zm11 0h1v1h-1zm10 0h1v1h-1zm11 0h1v1h-1zm10 0h1v1h-1zm11 0h1v1h-1zm10 0h1v1h-1zm11 0h1v1h-1zm11 0h1v1h-1zm10 0h1v1h-1zm11 0h1v1h-1zm10 0h1v1h-1zm11 0h1v1h-1zm10 0h1v1h-1zm11 0h1v1h-1zm10 0h1v1h-1zm11 0h1v1h-1zm10 0h1v1h-1zm11 0h1v1h-1zm10 0h1v1h-1zm11 0h1v1h-1zm10 0h1v1h-1zm11 0h1v1h-1zm11 0h1v1h-1zm10 0h1v1h-1zm11 0h1v1h-1zm10 0h1v1h-1zm11 0h1v1h-1zm10 0h1v1h-1zm11 0h1v1h-1zm10 0h1v1h-1zm11 0h1v1h-1zm10 0h1v1h-1zm11 0h1v1h-1zm10 0h1v1h-1zm11 0h1v1h-1zm10 0h1v1h-1zm11 0h1v1h-1zm11 0h1v1h-1zm10 0h1v1h-1zm11 0h1v1h-1zm10 0h1v1h-1zm11 0h1v1h-1zm10 0h1v1h-1zm11 0h1v1h-1zm10 0h1v1h-1zm11 0h1v1h-1zm10 0h1v1h-1zm11 0h1v1h-1zm10 0h1v1h-1zm11 0h1v1h-1zm10 0h1v1h-1zm11 0h1v1h-1zm11 0h1v1h-1zm10 0h1v1h-1zm11 0h1v1h-1zm10 0h1v1h-1zm11 0h1v1h-1zm10 0h1v1h-1zm11 0h1v1h-1zm10 0h1v1h-1zm11 0h1v1h-1zm10 0h1v1h-1zm11 0h1v1h-1zm10 0h1v1h-1zm11 0h1v1h-1zm10 0h1v1h-1zm11 0h1v1h-1zm11 0h1v1h-1zm10 0h1v1h-1zm11 0h1v1h-1zm10 0h1v1h-1zm11 0h1v1h-1zm10 0h1v1h-1zm11 0h1v1h-1zm10 0h1v1h-1zm11 0h1v1h-1zm10 0h1v1h-1zm11 0h1v1h-1zm10 0h1v1h-1zm11 0h1v1h-1zm10 0h1v1h-1zm11 0h1v1h-1zm11 0h1v1h-1zm10 0h1v1h-1zm11 0h1v1h-1zm10 0h1v1h-1zm11 0h1v1h-1zm10 0h1v1h-1zm11 0h1v1h-1zm10 0h1v1h-1zm11 0h1v1h-1zm10 0h1v1h-1zm11 0h1v1h-1zm10 0h1v1h-1zm11 0h1v1h-1zm10 0h1v1h-1zm11 0h1v1h-1zm10 0h1v1h-1zm11 0h1v1h-1zm11 0h1v1h-1zm10 0h1v1h-1zm11 0h1v1h-1zm10 0h1v1h-1zm11 0h1v1h-1zm10 0h1v1h-1zm11 0h1v1h-1zm10 0h1v1h-1zm11 0h1v1h-1zm10 0h1v1h-1zm11 0h1v1h-1zM609 356h1v1h-1zm11 0h1v1h-1zm10 0h1v1h-1zm11 0h1v1h-1zm10 0h1v1h-1zm11 0h1v1h-1zm10 0h1v1h-1zm11 0h1v1h-1zm10 0h1v1h-1zm11 0h1v1h-1zm10 0h1v1h-1zm11 0h1v1h-1zm10 0h1v1h-1zm11 0h1v1h-1zm10 0h1v1h-1zm11 0h1v1h-1zm11 0h1v1h-1zm10 0h1v1h-1zm11 0h1v1h-1zm10 0h1v1h-1zm11 0h1v1h-1zm10 0h1v1h-1zm11 0h1v1h-1zm10 0h1v1h-1zm11 0h1v1h-1zm10 0h1v1h-1zm11 0h1v1h-1zm10 0h1v1h-1zm11 0h1v1h-1zm10 0h1v1h-1zm11 0h1v1h-1zm11 0h1v1h-1zm10 0h1v1h-1zm11 0h1v1h-1zm10 0h1v1h-1zm11 0h1v1h-1zm10 0h1v1h-1zm11 0h1v1h-1zm10 0h1v1h-1zm11 0h1v1h-1zm10 0h1v1h-1zm11 0h1v1h-1zm10 0h1v1h-1zm11 0h1v1h-1zm10 0h1v1h-1zm11 0h1v1h-1zm11 0h1v1h-1zm10 0h1v1h-1zm11 0h1v1h-1zm10 0h1v1h-1zm11 0h1v1h-1zm10 0h1v1h-1zm11 0h1v1h-1zm10 0h1v1h-1zm11 0h1v1h-1zm10 0h1v1h-1zm11 0h1v1h-1zm10 0h1v1h-1zm11 0h1v1h-1zm10 0h1v1h-1zm11 0h1v1h-1zm11 0h1v1h-1zm10 0h1v1h-1zm11 0h1v1h-1zm10 0h1v1h-1zm11 0h1v1h-1zm10 0h1v1h-1zm11 0h1v1h-1zm10 0h1v1h-1zm11 0h1v1h-1zm10 0h1v1h-1zm11 0h1v1h-1zm10 0h1v1h-1zm11 0h1v1h-1zm10 0h1v1h-1zm11 0h1v1h-1zm11 0h1v1h-1zm10 0h1v1h-1zm11 0h1v1h-1zm10 0h1v1h-1zm11 0h1v1h-1zm10 0h1v1h-1zm11 0h1v1h-1zm10 0h1v1h-1zm11 0h1v1h-1zm10 0h1v1h-1zm11 0h1v1h-1zm10 0h1v1h-1zm11 0h1v1h-1zm10 0h1v1h-1zm11 0h1v1h-1zm11 0h1v1h-1zm10 0h1v1h-1zm11 0h1v1h-1zm10 0h1v1h-1zm11 0h1v1h-1zm10 0h1v1h-1zm11 0h1v1h-1zm10 0h1v1h-1zm11 0h1v1h-1zm10 0h1v1h-1zm11 0h1v1h-1zm10 0h1v1h-1zm11 0h1v1h-1zm10 0h1v1h-1zm11 0h1v1h-1zm10 0h1v1h-1zm11 0h1v1h-1zm11 0h1v1h-1zm10 0h1v1h-1zm11 0h1v1h-1zm10 0h1v1h-1zm11 0h1v1h-1zm10 0h1v1h-1zm11 0h1v1h-1zm10 0h1v1h-1zm11 0h1v1h-1zm10 0h1v1h-1zm11 0h1v1h-1zM609 367h1v1h-1zm11 0h1v1h-1zm10 0h1v1h-1zm11 0h1v1h-1zm10 0h1v1h-1zm11 0h1v1h-1zm10 0h1v1h-1zm11 0h1v1h-1zm10 0h1v1h-1zm11 0h1v1h-1zm10 0h1v1h-1zm11 0h1v1h-1zm10 0h1v1h-1zm11 0h1v1h-1zm10 0h1v1h-1zm11 0h1v1h-1zm11 0h1v1h-1zm10 0h1v1h-1zm11 0h1v1h-1zm10 0h1v1h-1zm11 0h1v1h-1zm10 0h1v1h-1zm11 0h1v1h-1zm10 0h1v1h-1zm11 0h1v1h-1zm10 0h1v1h-1zm11 0h1v1h-1zm10 0h1v1h-1zm11 0h1v1h-1zm10 0h1v1h-1zm11 0h1v1h-1zm11 0h1v1h-1zm10 0h1v1h-1zm11 0h1v1h-1zm10 0h1v1h-1zm11 0h1v1h-1zm10 0h1v1h-1zm11 0h1v1h-1zm10 0h1v1h-1zm11 0h1v1h-1zm10 0h1v1h-1zm11 0h1v1h-1zm10 0h1v1h-1zm11 0h1v1h-1zm10 0h1v1h-1zm11 0h1v1h-1zm11 0h1v1h-1zm10 0h1v1h-1zm11 0h1v1h-1zm10 0h1v1h-1zm11 0h1v1h-1zm10 0h1v1h-1zm11 0h1v1h-1zm10 0h1v1h-1zm11 0h1v1h-1zm10 0h1v1h-1zm11 0h1v1h-1zm10 0h1v1h-1zm11 0h1v1h-1zm10 0h1v1h-1zm11 0h1v1h-1zm11 0h1v1h-1zm10 0h1v1h-1zm11 0h1v1h-1zm10 0h1v1h-1zm11 0h1v1h-1zm10 0h1v1h-1zm11 0h1v1h-1zm10 0h1v1h-1zm11 0h1v1h-1zm10 0h1v1h-1zm11 0h1v1h-1zm10 0h1v1h-1zm11 0h1v1h-1zm10 0h1v1h-1zm11 0h1v1h-1zm11 0h1v1h-1zm10 0h1v1h-1zm11 0h1v1h-1zm10 0h1v1h-1zm11 0h1v1h-1zm10 0h1v1h-1zm11 0h1v1h-1zm10 0h1v1h-1zm11 0h1v1h-1zm10 0h1v1h-1zm11 0h1v1h-1zm10 0h1v1h-1zm11 0h1v1h-1zm10 0h1v1h-1zm11 0h1v1h-1zm11 0h1v1h-1zm10 0h1v1h-1zm11 0h1v1h-1zm10 0h1v1h-1zm11 0h1v1h-1zm10 0h1v1h-1zm11 0h1v1h-1zm10 0h1v1h-1zm11 0h1v1h-1zm10 0h1v1h-1zm11 0h1v1h-1zm10 0h1v1h-1zm11 0h1v1h-1zm10 0h1v1h-1zm11 0h1v1h-1zm10 0h1v1h-1zm11 0h1v1h-1zm11 0h1v1h-1zm10 0h1v1h-1zm11 0h1v1h-1zm10 0h1v1h-1zm11 0h1v1h-1zm10 0h1v1h-1zm11 0h1v1h-1zm10 0h1v1h-1zm11 0h1v1h-1zm10 0h1v1h-1zm11 0h1v1h-1zM609 377h1v1h-1zm11 0h1v1h-1zm10 0h1v1h-1zm11 0h1v1h-1zm10 0h1v1h-1zm11 0h1v1h-1zm10 0h1v1h-1zm11 0h1v1h-1zm10 0h1v1h-1zm11 0h1v1h-1zm10 0h1v1h-1zm11 0h1v1h-1zm10 0h1v1h-1zm11 0h1v1h-1zm10 0h1v1h-1zm11 0h1v1h-1zm11 0h1v1h-1zm10 0h1v1h-1zm11 0h1v1h-1zm10 0h1v1h-1zm11 0h1v1h-1zm10 0h1v1h-1zm11 0h1v1h-1zm10 0h1v1h-1zm11 0h1v1h-1zm10 0h1v1h-1zm11 0h1v1h-1zm10 0h1v1h-1zm11 0h1v1h-1zm10 0h1v1h-1zm11 0h1v1h-1zm11 0h1v1h-1zm10 0h1v1h-1zm11 0h1v1h-1zm10 0h1v1h-1zm11 0h1v1h-1zm10 0h1v1h-1zm11 0h1v1h-1zm10 0h1v1h-1zm11 0h1v1h-1zm10 0h1v1h-1zm11 0h1v1h-1zm10 0h1v1h-1zm11 0h1v1h-1zm10 0h1v1h-1zm11 0h1v1h-1zm11 0h1v1h-1zm10 0h1v1h-1zm11 0h1v1h-1zm10 0h1v1h-1zm11 0h1v1h-1zm10 0h1v1h-1zm11 0h1v1h-1zm10 0h1v1h-1zm11 0h1v1h-1zm10 0h1v1h-1zm11 0h1v1h-1zm10 0h1v1h-1zm11 0h1v1h-1zm10 0h1v1h-1zm11 0h1v1h-1zm11 0h1v1h-1zm10 0h1v1h-1zm11 0h1v1h-1zm10 0h1v1h-1zm11 0h1v1h-1zm10 0h1v1h-1zm11 0h1v1h-1zm10 0h1v1h-1zm11 0h1v1h-1zm10 0h1v1h-1zm11 0h1v1h-1zm10 0h1v1h-1zm11 0h1v1h-1zm10 0h1v1h-1zm11 0h1v1h-1zm11 0h1v1h-1zm10 0h1v1h-1zm11 0h1v1h-1zm10 0h1v1h-1zm11 0h1v1h-1zm10 0h1v1h-1zm11 0h1v1h-1zm10 0h1v1h-1zm11 0h1v1h-1zm10 0h1v1h-1zm11 0h1v1h-1zm10 0h1v1h-1zm11 0h1v1h-1zm10 0h1v1h-1zm11 0h1v1h-1zm11 0h1v1h-1zm10 0h1v1h-1zm11 0h1v1h-1zm10 0h1v1h-1zm11 0h1v1h-1zm10 0h1v1h-1zm11 0h1v1h-1zm10 0h1v1h-1zm11 0h1v1h-1zm10 0h1v1h-1zm11 0h1v1h-1zm10 0h1v1h-1zm11 0h1v1h-1zm10 0h1v1h-1zm11 0h1v1h-1zm10 0h1v1h-1zm11 0h1v1h-1zm11 0h1v1h-1zm10 0h1v1h-1zm11 0h1v1h-1zm10 0h1v1h-1zm11 0h1v1h-1zm10 0h1v1h-1zm11 0h1v1h-1zm10 0h1v1h-1zm11 0h1v1h-1zm10 0h1v1h-1zm11 0h1v1h-1zM609 388h1v1h-1zm11 0h1v1h-1zm10 0h1v1h-1zm11 0h1v1h-1zm10 0h1v1h-1zm11 0h1v1h-1zm10 0h1v1h-1zm11 0h1v1h-1zm10 0h1v1h-1zm11 0h1v1h-1zm10 0h1v1h-1zm11 0h1v1h-1zm10 0h1v1h-1zm11 0h1v1h-1zm10 0h1v1h-1zm11 0h1v1h-1zm11 0h1v1h-1zm10 0h1v1h-1zm11 0h1v1h-1zm10 0h1v1h-1zm11 0h1v1h-1zm10 0h1v1h-1zm11 0h1v1h-1zm10 0h1v1h-1zm11 0h1v1h-1zm10 0h1v1h-1zm11 0h1v1h-1zm10 0h1v1h-1zm11 0h1v1h-1zm10 0h1v1h-1zm11 0h1v1h-1zm11 0h1v1h-1zm10 0h1v1h-1zm11 0h1v1h-1zm10 0h1v1h-1zm11 0h1v1h-1zm10 0h1v1h-1zm11 0h1v1h-1zm10 0h1v1h-1zm11 0h1v1h-1zm10 0h1v1h-1zm11 0h1v1h-1zm10 0h1v1h-1zm11 0h1v1h-1zm10 0h1v1h-1zm11 0h1v1h-1zm11 0h1v1h-1zm10 0h1v1h-1zm11 0h1v1h-1zm10 0h1v1h-1zm11 0h1v1h-1zm10 0h1v1h-1zm11 0h1v1h-1zm10 0h1v1h-1zm11 0h1v1h-1zm10 0h1v1h-1zm11 0h1v1h-1zm10 0h1v1h-1zm11 0h1v1h-1zm10 0h1v1h-1zm11 0h1v1h-1zm11 0h1v1h-1zm10 0h1v1h-1zm11 0h1v1h-1zm10 0h1v1h-1zm11 0h1v1h-1zm10 0h1v1h-1zm11 0h1v1h-1zm10 0h1v1h-1zm11 0h1v1h-1zm10 0h1v1h-1zm11 0h1v1h-1zm10 0h1v1h-1zm11 0h1v1h-1zm10 0h1v1h-1zm11 0h1v1h-1zm11 0h1v1h-1zm10 0h1v1h-1zm11 0h1v1h-1zm10 0h1v1h-1zm11 0h1v1h-1zm10 0h1v1h-1zm11 0h1v1h-1zm10 0h1v1h-1zm11 0h1v1h-1zm10 0h1v1h-1zm11 0h1v1h-1zm10 0h1v1h-1zm11 0h1v1h-1zm10 0h1v1h-1zm11 0h1v1h-1zm11 0h1v1h-1zm10 0h1v1h-1zm11 0h1v1h-1zm10 0h1v1h-1zm11 0h1v1h-1zm10 0h1v1h-1zm11 0h1v1h-1zm10 0h1v1h-1zm11 0h1v1h-1zm10 0h1v1h-1zm11 0h1v1h-1zm10 0h1v1h-1zm11 0h1v1h-1zm10 0h1v1h-1zm11 0h1v1h-1zm10 0h1v1h-1zm11 0h1v1h-1zm11 0h1v1h-1zm10 0h1v1h-1zm11 0h1v1h-1zm10 0h1v1h-1zm11 0h1v1h-1zm10 0h1v1h-1zm11 0h1v1h-1zm10 0h1v1h-1zm11 0h1v1h-1zm10 0h1v1h-1zm11 0h1v1h-1zM609 398h1v1h-1zm11 0h1v1h-1zm10 0h1v1h-1zm11 0h1v1h-1zm10 0h1v1h-1zm11 0h1v1h-1zm10 0h1v1h-1zm11 0h1v1h-1zm10 0h1v1h-1zm11 0h1v1h-1zm10 0h1v1h-1zm11 0h1v1h-1zm10 0h1v1h-1zm11 0h1v1h-1zm10 0h1v1h-1zm11 0h1v1h-1zm11 0h1v1h-1zm10 0h1v1h-1zm11 0h1v1h-1zm10 0h1v1h-1zm11 0h1v1h-1zm10 0h1v1h-1zm11 0h1v1h-1zm10 0h1v1h-1zm11 0h1v1h-1zm10 0h1v1h-1zm11 0h1v1h-1zm10 0h1v1h-1zm11 0h1v1h-1zm10 0h1v1h-1zm11 0h1v1h-1zm11 0h1v1h-1zm10 0h1v1h-1zm11 0h1v1h-1zm10 0h1v1h-1zm11 0h1v1h-1zm10 0h1v1h-1zm11 0h1v1h-1zm10 0h1v1h-1zm11 0h1v1h-1zm10 0h1v1h-1zm11 0h1v1h-1zm10 0h1v1h-1zm11 0h1v1h-1zm10 0h1v1h-1zm11 0h1v1h-1zm11 0h1v1h-1zm10 0h1v1h-1zm11 0h1v1h-1zm10 0h1v1h-1zm11 0h1v1h-1zm10 0h1v1h-1zm11 0h1v1h-1zm10 0h1v1h-1zm11 0h1v1h-1zm10 0h1v1h-1zm11 0h1v1h-1zm10 0h1v1h-1zm11 0h1v1h-1zm10 0h1v1h-1zm11 0h1v1h-1zm11 0h1v1h-1zm10 0h1v1h-1zm11 0h1v1h-1zm10 0h1v1h-1zm11 0h1v1h-1zm10 0h1v1h-1zm11 0h1v1h-1zm10 0h1v1h-1zm11 0h1v1h-1zm10 0h1v1h-1zm11 0h1v1h-1zm10 0h1v1h-1zm11 0h1v1h-1zm10 0h1v1h-1zm11 0h1v1h-1zm11 0h1v1h-1zm10 0h1v1h-1zm11 0h1v1h-1zm10 0h1v1h-1zm11 0h1v1h-1zm10 0h1v1h-1zm11 0h1v1h-1zm10 0h1v1h-1zm11 0h1v1h-1zm10 0h1v1h-1zm11 0h1v1h-1zm10 0h1v1h-1zm11 0h1v1h-1zm10 0h1v1h-1zm11 0h1v1h-1zm11 0h1v1h-1zm10 0h1v1h-1zm11 0h1v1h-1zm10 0h1v1h-1zm11 0h1v1h-1zm10 0h1v1h-1zm11 0h1v1h-1zm10 0h1v1h-1zm11 0h1v1h-1zm10 0h1v1h-1zm11 0h1v1h-1zm10 0h1v1h-1zm11 0h1v1h-1zm10 0h1v1h-1zm11 0h1v1h-1zm10 0h1v1h-1zm11 0h1v1h-1zm11 0h1v1h-1zm10 0h1v1h-1zm11 0h1v1h-1zm10 0h1v1h-1zm11 0h1v1h-1zm10 0h1v1h-1zm11 0h1v1h-1zm10 0h1v1h-1zm11 0h1v1h-1zm10 0h1v1h-1zm11 0h1v1h-1zM609 409h1v1h-1zm11 0h1v1h-1zm10 0h1v1h-1zm11 0h1v1h-1zm10 0h1v1h-1zm11 0h1v1h-1zm10 0h1v1h-1zm11 0h1v1h-1zm10 0h1v1h-1zm11 0h1v1h-1zm10 0h1v1h-1zm11 0h1v1h-1zm10 0h1v1h-1zm11 0h1v1h-1zm10 0h1v1h-1zm11 0h1v1h-1zm11 0h1v1h-1zm10 0h1v1h-1zm11 0h1v1h-1zm10 0h1v1h-1zm11 0h1v1h-1zm10 0h1v1h-1zm11 0h1v1h-1zm10 0h1v1h-1zm11 0h1v1h-1zm10 0h1v1h-1zm11 0h1v1h-1zm10 0h1v1h-1zm11 0h1v1h-1zm10 0h1v1h-1zm11 0h1v1h-1zm11 0h1v1h-1zm10 0h1v1h-1zm11 0h1v1h-1zm10 0h1v1h-1zm11 0h1v1h-1zm10 0h1v1h-1zm11 0h1v1h-1zm10 0h1v1h-1zm11 0h1v1h-1zm10 0h1v1h-1zm11 0h1v1h-1zm10 0h1v1h-1zm11 0h1v1h-1zm10 0h1v1h-1zm11 0h1v1h-1zm11 0h1v1h-1zm10 0h1v1h-1zm11 0h1v1h-1zm10 0h1v1h-1zm11 0h1v1h-1zm10 0h1v1h-1zm11 0h1v1h-1zm10 0h1v1h-1zm11 0h1v1h-1zm10 0h1v1h-1zm11 0h1v1h-1zm10 0h1v1h-1zm11 0h1v1h-1zm10 0h1v1h-1zm11 0h1v1h-1zm11 0h1v1h-1zm10 0h1v1h-1zm11 0h1v1h-1zm10 0h1v1h-1zm11 0h1v1h-1zm10 0h1v1h-1zm11 0h1v1h-1zm10 0h1v1h-1zm11 0h1v1h-1zm10 0h1v1h-1zm11 0h1v1h-1zm10 0h1v1h-1zm11 0h1v1h-1zm10 0h1v1h-1zm11 0h1v1h-1zm11 0h1v1h-1zm10 0h1v1h-1zm11 0h1v1h-1zm10 0h1v1h-1zm11 0h1v1h-1zm10 0h1v1h-1zm11 0h1v1h-1zm10 0h1v1h-1zm11 0h1v1h-1zm10 0h1v1h-1zm11 0h1v1h-1zm10 0h1v1h-1zm11 0h1v1h-1zm10 0h1v1h-1zm11 0h1v1h-1zm11 0h1v1h-1zm10 0h1v1h-1zm11 0h1v1h-1zm10 0h1v1h-1zm11 0h1v1h-1zm10 0h1v1h-1zm11 0h1v1h-1zm10 0h1v1h-1zm11 0h1v1h-1zm10 0h1v1h-1zm11 0h1v1h-1zm10 0h1v1h-1zm11 0h1v1h-1zm10 0h1v1h-1zm11 0h1v1h-1zm10 0h1v1h-1zm11 0h1v1h-1zm11 0h1v1h-1zm10 0h1v1h-1zm11 0h1v1h-1zm10 0h1v1h-1zm11 0h1v1h-1zm10 0h1v1h-1zm11 0h1v1h-1zm10 0h1v1h-1zm11 0h1v1h-1zm10 0h1v1h-1zm11 0h1v1h-1zM609 419h1v1h-1zm11 0h1v1h-1zm10 0h1v1h-1zm11 0h1v1h-1zm10 0h1v1h-1zm11 0h1v1h-1zm10 0h1v1h-1zm11 0h1v1h-1zm10 0h1v1h-1zm11 0h1v1h-1zm10 0h1v1h-1zm11 0h1v1h-1zm10 0h1v1h-1zm11 0h1v1h-1zm10 0h1v1h-1zm11 0h1v1h-1zm11 0h1v1h-1zm10 0h1v1h-1zm11 0h1v1h-1zm10 0h1v1h-1zm11 0h1v1h-1zm10 0h1v1h-1zm11 0h1v1h-1zm10 0h1v1h-1zm11 0h1v1h-1zm10 0h1v1h-1zm11 0h1v1h-1zm10 0h1v1h-1zm11 0h1v1h-1zm10 0h1v1h-1zm11 0h1v1h-1zm11 0h1v1h-1zm10 0h1v1h-1zm11 0h1v1h-1zm10 0h1v1h-1zm11 0h1v1h-1zm10 0h1v1h-1zm11 0h1v1h-1zm10 0h1v1h-1zm11 0h1v1h-1zm10 0h1v1h-1zm11 0h1v1h-1zm10 0h1v1h-1zm11 0h1v1h-1zm10 0h1v1h-1zm11 0h1v1h-1zm11 0h1v1h-1zm10 0h1v1h-1zm11 0h1v1h-1zm10 0h1v1h-1zm11 0h1v1h-1zm10 0h1v1h-1zm11 0h1v1h-1zm10 0h1v1h-1zm11 0h1v1h-1zm10 0h1v1h-1zm11 0h1v1h-1zm10 0h1v1h-1zm11 0h1v1h-1zm10 0h1v1h-1zm11 0h1v1h-1zm11 0h1v1h-1zm10 0h1v1h-1zm11 0h1v1h-1zm10 0h1v1h-1zm11 0h1v1h-1zm10 0h1v1h-1zm11 0h1v1h-1zm10 0h1v1h-1zm11 0h1v1h-1zm10 0h1v1h-1zm11 0h1v1h-1zm10 0h1v1h-1zm11 0h1v1h-1zm10 0h1v1h-1zm11 0h1v1h-1zm11 0h1v1h-1zm10 0h1v1h-1zm11 0h1v1h-1zm10 0h1v1h-1zm11 0h1v1h-1zm10 0h1v1h-1zm11 0h1v1h-1zm10 0h1v1h-1zm11 0h1v1h-1zm10 0h1v1h-1zm11 0h1v1h-1zm10 0h1v1h-1zm11 0h1v1h-1zm10 0h1v1h-1zm11 0h1v1h-1zm11 0h1v1h-1zm10 0h1v1h-1zm11 0h1v1h-1zm10 0h1v1h-1zm11 0h1v1h-1zm10 0h1v1h-1zm11 0h1v1h-1zm10 0h1v1h-1zm11 0h1v1h-1zm10 0h1v1h-1zm11 0h1v1h-1zm10 0h1v1h-1zm11 0h1v1h-1zm10 0h1v1h-1zm11 0h1v1h-1zm10 0h1v1h-1zm11 0h1v1h-1zm11 0h1v1h-1zm10 0h1v1h-1zm11 0h1v1h-1zm10 0h1v1h-1zm11 0h1v1h-1zm10 0h1v1h-1zm11 0h1v1h-1zm10 0h1v1h-1zm11 0h1v1h-1zm10 0h1v1h-1zm11 0h1v1h-1zM609 430h1v1h-1zm11 0h1v1h-1zm10 0h1v1h-1zm11 0h1v1h-1zm10 0h1v1h-1zm11 0h1v1h-1zm10 0h1v1h-1zm11 0h1v1h-1zm10 0h1v1h-1zm11 0h1v1h-1zm10 0h1v1h-1zm11 0h1v1h-1zm10 0h1v1h-1zm11 0h1v1h-1zm10 0h1v1h-1zm11 0h1v1h-1zm11 0h1v1h-1zm10 0h1v1h-1zm11 0h1v1h-1zm10 0h1v1h-1zm11 0h1v1h-1zm10 0h1v1h-1zm11 0h1v1h-1zm10 0h1v1h-1zm11 0h1v1h-1zm10 0h1v1h-1zm11 0h1v1h-1zm10 0h1v1h-1zm11 0h1v1h-1zm10 0h1v1h-1zm11 0h1v1h-1zm11 0h1v1h-1zm10 0h1v1h-1zm11 0h1v1h-1zm10 0h1v1h-1zm11 0h1v1h-1zm10 0h1v1h-1zm11 0h1v1h-1zm10 0h1v1h-1zm11 0h1v1h-1zm10 0h1v1h-1zm11 0h1v1h-1zm10 0h1v1h-1zm11 0h1v1h-1zm10 0h1v1h-1zm11 0h1v1h-1zm11 0h1v1h-1zm10 0h1v1h-1zm11 0h1v1h-1zm10 0h1v1h-1zm11 0h1v1h-1zm10 0h1v1h-1zm11 0h1v1h-1zm10 0h1v1h-1zm11 0h1v1h-1zm10 0h1v1h-1zm11 0h1v1h-1zm10 0h1v1h-1zm11 0h1v1h-1zm10 0h1v1h-1zm11 0h1v1h-1zm11 0h1v1h-1zm10 0h1v1h-1zm11 0h1v1h-1zm10 0h1v1h-1zm11 0h1v1h-1zm10 0h1v1h-1zm11 0h1v1h-1zm10 0h1v1h-1zm11 0h1v1h-1zm10 0h1v1h-1zm11 0h1v1h-1zm10 0h1v1h-1zm11 0h1v1h-1zm10 0h1v1h-1zm11 0h1v1h-1zm11 0h1v1h-1zm10 0h1v1h-1zm11 0h1v1h-1zm10 0h1v1h-1zm11 0h1v1h-1zm10 0h1v1h-1zm11 0h1v1h-1zm10 0h1v1h-1zm11 0h1v1h-1zm10 0h1v1h-1zm11 0h1v1h-1zm10 0h1v1h-1zm11 0h1v1h-1zm10 0h1v1h-1zm11 0h1v1h-1zm11 0h1v1h-1zm10 0h1v1h-1zm11 0h1v1h-1zm10 0h1v1h-1zm11 0h1v1h-1zm10 0h1v1h-1zm11 0h1v1h-1zm10 0h1v1h-1zm11 0h1v1h-1zm10 0h1v1h-1zm11 0h1v1h-1zm10 0h1v1h-1zm11 0h1v1h-1zm10 0h1v1h-1zm11 0h1v1h-1zm10 0h1v1h-1zm11 0h1v1h-1zm11 0h1v1h-1zm10 0h1v1h-1zm11 0h1v1h-1zm10 0h1v1h-1zm11 0h1v1h-1zm10 0h1v1h-1zm11 0h1v1h-1zm10 0h1v1h-1zm11 0h1v1h-1zm10 0h1v1h-1zm11 0h1v1h-1zM609 440h1v1h-1zm11 0h1v1h-1zm10 0h1v1h-1zm11 0h1v1h-1zm10 0h1v1h-1zm11 0h1v1h-1zm10 0h1v1h-1zm11 0h1v1h-1zm10 0h1v1h-1zm11 0h1v1h-1zm10 0h1v1h-1zm11 0h1v1h-1zm10 0h1v1h-1zm11 0h1v1h-1zm10 0h1v1h-1zm11 0h1v1h-1zm11 0h1v1h-1zm10 0h1v1h-1zm11 0h1v1h-1zm10 0h1v1h-1zm11 0h1v1h-1zm10 0h1v1h-1zm11 0h1v1h-1zm10 0h1v1h-1zm11 0h1v1h-1zm10 0h1v1h-1zm11 0h1v1h-1zm10 0h1v1h-1zm11 0h1v1h-1zm10 0h1v1h-1zm11 0h1v1h-1zm11 0h1v1h-1zm10 0h1v1h-1zm11 0h1v1h-1zm10 0h1v1h-1zm11 0h1v1h-1zm10 0h1v1h-1zm11 0h1v1h-1zm10 0h1v1h-1zm11 0h1v1h-1zm10 0h1v1h-1zm11 0h1v1h-1zm10 0h1v1h-1zm11 0h1v1h-1zm10 0h1v1h-1zm11 0h1v1h-1zm11 0h1v1h-1zm10 0h1v1h-1zm11 0h1v1h-1zm10 0h1v1h-1zm11 0h1v1h-1zm10 0h1v1h-1zm11 0h1v1h-1zm10 0h1v1h-1zm11 0h1v1h-1zm10 0h1v1h-1zm11 0h1v1h-1zm10 0h1v1h-1zm11 0h1v1h-1zm10 0h1v1h-1zm11 0h1v1h-1zm11 0h1v1h-1zm10 0h1v1h-1zm11 0h1v1h-1zm10 0h1v1h-1zm11 0h1v1h-1zm10 0h1v1h-1zm11 0h1v1h-1zm10 0h1v1h-1zm11 0h1v1h-1zm10 0h1v1h-1zm11 0h1v1h-1zm10 0h1v1h-1zm11 0h1v1h-1zm10 0h1v1h-1zm11 0h1v1h-1zm11 0h1v1h-1zm10 0h1v1h-1zm11 0h1v1h-1zm10 0h1v1h-1zm11 0h1v1h-1zm10 0h1v1h-1zm11 0h1v1h-1zm10 0h1v1h-1zm11 0h1v1h-1zm10 0h1v1h-1zm11 0h1v1h-1zm10 0h1v1h-1zm11 0h1v1h-1zm10 0h1v1h-1zm11 0h1v1h-1zm11 0h1v1h-1zm10 0h1v1h-1zm11 0h1v1h-1zm10 0h1v1h-1zm11 0h1v1h-1zm10 0h1v1h-1zm11 0h1v1h-1zm10 0h1v1h-1zm11 0h1v1h-1zm10 0h1v1h-1zm11 0h1v1h-1zm10 0h1v1h-1zm11 0h1v1h-1zm10 0h1v1h-1zm11 0h1v1h-1zm10 0h1v1h-1zm11 0h1v1h-1zm11 0h1v1h-1zm10 0h1v1h-1zm11 0h1v1h-1zm10 0h1v1h-1zm11 0h1v1h-1zm10 0h1v1h-1zm11 0h1v1h-1zm10 0h1v1h-1zm11 0h1v1h-1zm10 0h1v1h-1zm11 0h1v1h-1zM609 451h1v1h-1zm11 0h1v1h-1zm10 0h1v1h-1zm11 0h1v1h-1zm10 0h1v1h-1zm11 0h1v1h-1zm10 0h1v1h-1zm11 0h1v1h-1zm10 0h1v1h-1zm11 0h1v1h-1zm10 0h1v1h-1zm11 0h1v1h-1zm10 0h1v1h-1zm11 0h1v1h-1zm10 0h1v1h-1zm11 0h1v1h-1zm11 0h1v1h-1zm10 0h1v1h-1zm11 0h1v1h-1zm10 0h1v1h-1zm11 0h1v1h-1zm10 0h1v1h-1zm11 0h1v1h-1zm10 0h1v1h-1zm11 0h1v1h-1zm10 0h1v1h-1zm11 0h1v1h-1zm10 0h1v1h-1zm11 0h1v1h-1zm10 0h1v1h-1zm11 0h1v1h-1zm11 0h1v1h-1zm10 0h1v1h-1zm11 0h1v1h-1zm10 0h1v1h-1zm11 0h1v1h-1zm10 0h1v1h-1zm11 0h1v1h-1zm10 0h1v1h-1zm11 0h1v1h-1zm10 0h1v1h-1zm11 0h1v1h-1zm10 0h1v1h-1zm11 0h1v1h-1zm10 0h1v1h-1zm11 0h1v1h-1zm11 0h1v1h-1zm10 0h1v1h-1zm11 0h1v1h-1zm10 0h1v1h-1zm11 0h1v1h-1zm10 0h1v1h-1zm11 0h1v1h-1zm10 0h1v1h-1zm11 0h1v1h-1zm10 0h1v1h-1zm11 0h1v1h-1zm10 0h1v1h-1zm11 0h1v1h-1zm10 0h1v1h-1zm11 0h1v1h-1zm11 0h1v1h-1zm10 0h1v1h-1zm11 0h1v1h-1zm10 0h1v1h-1zm11 0h1v1h-1zm10 0h1v1h-1zm11 0h1v1h-1zm10 0h1v1h-1zm11 0h1v1h-1zm10 0h1v1h-1zm11 0h1v1h-1zm10 0h1v1h-1zm11 0h1v1h-1zm10 0h1v1h-1zm11 0h1v1h-1zm11 0h1v1h-1zm10 0h1v1h-1zm11 0h1v1h-1zm10 0h1v1h-1zm11 0h1v1h-1zm10 0h1v1h-1zm11 0h1v1h-1zm10 0h1v1h-1zm11 0h1v1h-1zm10 0h1v1h-1zm11 0h1v1h-1zm10 0h1v1h-1zm11 0h1v1h-1zm10 0h1v1h-1zm11 0h1v1h-1zm11 0h1v1h-1zm10 0h1v1h-1zm11 0h1v1h-1zm10 0h1v1h-1zm11 0h1v1h-1zm10 0h1v1h-1zm11 0h1v1h-1zm10 0h1v1h-1zm11 0h1v1h-1zm10 0h1v1h-1zm11 0h1v1h-1zm10 0h1v1h-1zm11 0h1v1h-1zm10 0h1v1h-1zm11 0h1v1h-1zm10 0h1v1h-1zm11 0h1v1h-1zm11 0h1v1h-1zm10 0h1v1h-1zm11 0h1v1h-1zm10 0h1v1h-1zm11 0h1v1h-1zm10 0h1v1h-1zm11 0h1v1h-1zm10 0h1v1h-1zm11 0h1v1h-1zm10 0h1v1h-1zm11 0h1v1h-1zM609 461h1v1h-1zm11 0h1v1h-1zm10 0h1v1h-1zm11 0h1v1h-1zm10 0h1v1h-1zm11 0h1v1h-1zm10 0h1v1h-1zm11 0h1v1h-1zm10 0h1v1h-1zm11 0h1v1h-1zm10 0h1v1h-1zm11 0h1v1h-1zm10 0h1v1h-1zm11 0h1v1h-1zm10 0h1v1h-1zm11 0h1v1h-1zm11 0h1v1h-1zm10 0h1v1h-1zm11 0h1v1h-1zm10 0h1v1h-1zm11 0h1v1h-1zm10 0h1v1h-1zm11 0h1v1h-1zm10 0h1v1h-1zm11 0h1v1h-1zm10 0h1v1h-1zm11 0h1v1h-1zm10 0h1v1h-1zm11 0h1v1h-1zm10 0h1v1h-1zm11 0h1v1h-1zm11 0h1v1h-1zm10 0h1v1h-1zm11 0h1v1h-1zm10 0h1v1h-1zm11 0h1v1h-1zm10 0h1v1h-1zm11 0h1v1h-1zm10 0h1v1h-1zm11 0h1v1h-1zm10 0h1v1h-1zm11 0h1v1h-1zm10 0h1v1h-1zm11 0h1v1h-1zm10 0h1v1h-1zm11 0h1v1h-1zm11 0h1v1h-1zm10 0h1v1h-1zm11 0h1v1h-1zm10 0h1v1h-1zm11 0h1v1h-1zm10 0h1v1h-1zm11 0h1v1h-1zm10 0h1v1h-1zm11 0h1v1h-1zm10 0h1v1h-1zm11 0h1v1h-1zm10 0h1v1h-1zm11 0h1v1h-1zm10 0h1v1h-1zm11 0h1v1h-1zm11 0h1v1h-1zm10 0h1v1h-1zm11 0h1v1h-1zm10 0h1v1h-1zm11 0h1v1h-1zm10 0h1v1h-1zm11 0h1v1h-1zm10 0h1v1h-1zm11 0h1v1h-1zm10 0h1v1h-1zm11 0h1v1h-1zm10 0h1v1h-1zm11 0h1v1h-1zm10 0h1v1h-1zm11 0h1v1h-1zm11 0h1v1h-1zm10 0h1v1h-1zm11 0h1v1h-1zm10 0h1v1h-1zm11 0h1v1h-1zm10 0h1v1h-1zm11 0h1v1h-1zm10 0h1v1h-1zm11 0h1v1h-1zm10 0h1v1h-1zm11 0h1v1h-1zm10 0h1v1h-1zm11 0h1v1h-1zm10 0h1v1h-1zm11 0h1v1h-1zm11 0h1v1h-1zm10 0h1v1h-1zm11 0h1v1h-1zm10 0h1v1h-1zm11 0h1v1h-1zm10 0h1v1h-1zm11 0h1v1h-1zm10 0h1v1h-1zm11 0h1v1h-1zm10 0h1v1h-1zm11 0h1v1h-1zm10 0h1v1h-1zm11 0h1v1h-1zm10 0h1v1h-1zm11 0h1v1h-1zm10 0h1v1h-1zm11 0h1v1h-1zm11 0h1v1h-1zm10 0h1v1h-1zm11 0h1v1h-1zm10 0h1v1h-1zm11 0h1v1h-1zm10 0h1v1h-1zm11 0h1v1h-1zm10 0h1v1h-1zm11 0h1v1h-1zm10 0h1v1h-1zm11 0h1v1h-1zM609 472h1v1h-1zm11 0h1v1h-1zm10 0h1v1h-1zm11 0h1v1h-1zm10 0h1v1h-1zm11 0h1v1h-1zm10 0h1v1h-1zm11 0h1v1h-1zm10 0h1v1h-1zm11 0h1v1h-1zm10 0h1v1h-1zm11 0h1v1h-1zm10 0h1v1h-1zm11 0h1v1h-1zm10 0h1v1h-1zm11 0h1v1h-1zm11 0h1v1h-1zm10 0h1v1h-1zm11 0h1v1h-1zm10 0h1v1h-1zm11 0h1v1h-1zm10 0h1v1h-1zm11 0h1v1h-1zm10 0h1v1h-1zm11 0h1v1h-1zm10 0h1v1h-1zm11 0h1v1h-1zm10 0h1v1h-1zm11 0h1v1h-1zm10 0h1v1h-1zm11 0h1v1h-1zm11 0h1v1h-1zm10 0h1v1h-1zm11 0h1v1h-1zm10 0h1v1h-1zm11 0h1v1h-1zm10 0h1v1h-1zm11 0h1v1h-1zm10 0h1v1h-1zm11 0h1v1h-1zm10 0h1v1h-1zm11 0h1v1h-1zm10 0h1v1h-1zm11 0h1v1h-1zm10 0h1v1h-1zm11 0h1v1h-1zm11 0h1v1h-1zm10 0h1v1h-1zm11 0h1v1h-1zm10 0h1v1h-1zm11 0h1v1h-1zm10 0h1v1h-1zm11 0h1v1h-1zm10 0h1v1h-1zm11 0h1v1h-1zm10 0h1v1h-1zm11 0h1v1h-1zm10 0h1v1h-1zm11 0h1v1h-1zm10 0h1v1h-1zm11 0h1v1h-1zm11 0h1v1h-1zm10 0h1v1h-1zm11 0h1v1h-1zm10 0h1v1h-1zm11 0h1v1h-1zm10 0h1v1h-1zm11 0h1v1h-1zm10 0h1v1h-1zm11 0h1v1h-1zm10 0h1v1h-1zm11 0h1v1h-1zm10 0h1v1h-1zm11 0h1v1h-1zm10 0h1v1h-1zm11 0h1v1h-1zm11 0h1v1h-1zm10 0h1v1h-1zm11 0h1v1h-1zm10 0h1v1h-1zm11 0h1v1h-1zm10 0h1v1h-1zm11 0h1v1h-1zm10 0h1v1h-1zm11 0h1v1h-1zm10 0h1v1h-1zm11 0h1v1h-1zm10 0h1v1h-1zm11 0h1v1h-1zm10 0h1v1h-1zm11 0h1v1h-1zm11 0h1v1h-1zm10 0h1v1h-1zm11 0h1v1h-1zm10 0h1v1h-1zm11 0h1v1h-1zm10 0h1v1h-1zm11 0h1v1h-1zm10 0h1v1h-1zm11 0h1v1h-1zm10 0h1v1h-1zm11 0h1v1h-1zm10 0h1v1h-1zm11 0h1v1h-1zm10 0h1v1h-1zm11 0h1v1h-1zm10 0h1v1h-1zm11 0h1v1h-1zm11 0h1v1h-1zm10 0h1v1h-1zm11 0h1v1h-1zm10 0h1v1h-1zm11 0h1v1h-1zm10 0h1v1h-1zm11 0h1v1h-1zm10 0h1v1h-1zm11 0h1v1h-1zm10 0h1v1h-1zm11 0h1v1h-1zM609 482h1v1h-1zm11 0h1v1h-1zm10 0h1v1h-1zm11 0h1v1h-1zm10 0h1v1h-1zm11 0h1v1h-1zm10 0h1v1h-1zm11 0h1v1h-1zm10 0h1v1h-1zm11 0h1v1h-1zm10 0h1v1h-1zm11 0h1v1h-1zm10 0h1v1h-1zm11 0h1v1h-1zm10 0h1v1h-1zm11 0h1v1h-1zm11 0h1v1h-1zm10 0h1v1h-1zm11 0h1v1h-1zm10 0h1v1h-1zm11 0h1v1h-1zm10 0h1v1h-1zm11 0h1v1h-1zm10 0h1v1h-1zm11 0h1v1h-1zm10 0h1v1h-1zm11 0h1v1h-1zm10 0h1v1h-1zm11 0h1v1h-1zm10 0h1v1h-1zm11 0h1v1h-1zm11 0h1v1h-1zm10 0h1v1h-1zm11 0h1v1h-1zm10 0h1v1h-1zm11 0h1v1h-1zm10 0h1v1h-1zm11 0h1v1h-1zm10 0h1v1h-1zm11 0h1v1h-1zm10 0h1v1h-1zm11 0h1v1h-1zm10 0h1v1h-1zm11 0h1v1h-1zm10 0h1v1h-1zm11 0h1v1h-1zm11 0h1v1h-1zm10 0h1v1h-1zm11 0h1v1h-1zm10 0h1v1h-1zm11 0h1v1h-1zm10 0h1v1h-1zm11 0h1v1h-1zm10 0h1v1h-1zm11 0h1v1h-1zm10 0h1v1h-1zm11 0h1v1h-1zm10 0h1v1h-1zm11 0h1v1h-1zm10 0h1v1h-1zm11 0h1v1h-1zm11 0h1v1h-1zm10 0h1v1h-1zm11 0h1v1h-1zm10 0h1v1h-1zm11 0h1v1h-1zm10 0h1v1h-1zm11 0h1v1h-1zm10 0h1v1h-1zm11 0h1v1h-1zm10 0h1v1h-1zm11 0h1v1h-1zm10 0h1v1h-1zm11 0h1v1h-1zm10 0h1v1h-1zm11 0h1v1h-1zm11 0h1v1h-1zm10 0h1v1h-1zm11 0h1v1h-1zm10 0h1v1h-1zm11 0h1v1h-1zm10 0h1v1h-1zm11 0h1v1h-1zm10 0h1v1h-1zm11 0h1v1h-1zm10 0h1v1h-1zm11 0h1v1h-1zm10 0h1v1h-1zm11 0h1v1h-1zm10 0h1v1h-1zm11 0h1v1h-1zm11 0h1v1h-1zm10 0h1v1h-1zm11 0h1v1h-1zm10 0h1v1h-1zm11 0h1v1h-1zm10 0h1v1h-1zm11 0h1v1h-1zm10 0h1v1h-1zm11 0h1v1h-1zm10 0h1v1h-1zm11 0h1v1h-1zm10 0h1v1h-1zm11 0h1v1h-1zm10 0h1v1h-1zm11 0h1v1h-1zm10 0h1v1h-1zm11 0h1v1h-1zm11 0h1v1h-1zm10 0h1v1h-1zm11 0h1v1h-1zm10 0h1v1h-1zm11 0h1v1h-1zm10 0h1v1h-1zm11 0h1v1h-1zm10 0h1v1h-1zm11 0h1v1h-1zm10 0h1v1h-1zm11 0h1v1h-1zM609 493h1v1h-1zm11 0h1v1h-1zm10 0h1v1h-1zm11 0h1v1h-1zm10 0h1v1h-1zm11 0h1v1h-1zm10 0h1v1h-1zm11 0h1v1h-1zm10 0h1v1h-1zm11 0h1v1h-1zm10 0h1v1h-1zm11 0h1v1h-1zm10 0h1v1h-1zm11 0h1v1h-1zm10 0h1v1h-1zm11 0h1v1h-1zm11 0h1v1h-1zm10 0h1v1h-1zm11 0h1v1h-1zm10 0h1v1h-1zm11 0h1v1h-1zm10 0h1v1h-1zm11 0h1v1h-1zm10 0h1v1h-1zm11 0h1v1h-1zm10 0h1v1h-1zm11 0h1v1h-1zm10 0h1v1h-1zm11 0h1v1h-1zm10 0h1v1h-1zm11 0h1v1h-1zm11 0h1v1h-1zm10 0h1v1h-1zm11 0h1v1h-1zm10 0h1v1h-1zm11 0h1v1h-1zm10 0h1v1h-1zm11 0h1v1h-1zm10 0h1v1h-1zm11 0h1v1h-1zm10 0h1v1h-1zm11 0h1v1h-1zm10 0h1v1h-1zm11 0h1v1h-1zm10 0h1v1h-1zm11 0h1v1h-1zm11 0h1v1h-1zm10 0h1v1h-1zm11 0h1v1h-1zm10 0h1v1h-1zm11 0h1v1h-1zm10 0h1v1h-1zm11 0h1v1h-1zm10 0h1v1h-1zm11 0h1v1h-1zm10 0h1v1h-1zm11 0h1v1h-1zm10 0h1v1h-1zm11 0h1v1h-1zm10 0h1v1h-1zm11 0h1v1h-1zm11 0h1v1h-1zm10 0h1v1h-1zm11 0h1v1h-1zm10 0h1v1h-1zm11 0h1v1h-1zm10 0h1v1h-1zm11 0h1v1h-1zm10 0h1v1h-1zm11 0h1v1h-1zm10 0h1v1h-1zm11 0h1v1h-1zm10 0h1v1h-1zm11 0h1v1h-1zm10 0h1v1h-1zm11 0h1v1h-1zm11 0h1v1h-1zm10 0h1v1h-1zm11 0h1v1h-1zm10 0h1v1h-1zm11 0h1v1h-1zm10 0h1v1h-1zm11 0h1v1h-1zm10 0h1v1h-1zm11 0h1v1h-1zm10 0h1v1h-1zm11 0h1v1h-1zm10 0h1v1h-1zm11 0h1v1h-1zm10 0h1v1h-1zm11 0h1v1h-1zm11 0h1v1h-1zm10 0h1v1h-1zm11 0h1v1h-1zm10 0h1v1h-1zm11 0h1v1h-1zm10 0h1v1h-1zm11 0h1v1h-1zm10 0h1v1h-1zm11 0h1v1h-1zm10 0h1v1h-1zm11 0h1v1h-1zm10 0h1v1h-1zm11 0h1v1h-1zm10 0h1v1h-1zm11 0h1v1h-1zm10 0h1v1h-1zm11 0h1v1h-1zm11 0h1v1h-1zm10 0h1v1h-1zm11 0h1v1h-1zm10 0h1v1h-1zm11 0h1v1h-1zm10 0h1v1h-1zm11 0h1v1h-1zm10 0h1v1h-1zm11 0h1v1h-1zm10 0h1v1h-1zm11 0h1v1h-1zM609 504h1v1h-1zm11 0h1v1h-1zm10 0h1v1h-1zm11 0h1v1h-1zm10 0h1v1h-1zm11 0h1v1h-1zm10 0h1v1h-1zm11 0h1v1h-1zm10 0h1v1h-1zm11 0h1v1h-1zm10 0h1v1h-1zm11 0h1v1h-1zm10 0h1v1h-1zm11 0h1v1h-1zm10 0h1v1h-1zm11 0h1v1h-1zm11 0h1v1h-1zm10 0h1v1h-1zm11 0h1v1h-1zm10 0h1v1h-1zm11 0h1v1h-1zm10 0h1v1h-1zm11 0h1v1h-1zm10 0h1v1h-1zm11 0h1v1h-1zm10 0h1v1h-1zm11 0h1v1h-1zm10 0h1v1h-1zm11 0h1v1h-1zm10 0h1v1h-1zm11 0h1v1h-1zm11 0h1v1h-1zm10 0h1v1h-1zm11 0h1v1h-1zm10 0h1v1h-1zm11 0h1v1h-1zm10 0h1v1h-1zm11 0h1v1h-1zm10 0h1v1h-1zm11 0h1v1h-1zm10 0h1v1h-1zm11 0h1v1h-1zm10 0h1v1h-1zm11 0h1v1h-1zm10 0h1v1h-1zm11 0h1v1h-1zm11 0h1v1h-1zm10 0h1v1h-1zm11 0h1v1h-1zm10 0h1v1h-1zm11 0h1v1h-1zm10 0h1v1h-1zm11 0h1v1h-1zm10 0h1v1h-1zm11 0h1v1h-1zm10 0h1v1h-1zm11 0h1v1h-1zm10 0h1v1h-1zm11 0h1v1h-1zm10 0h1v1h-1zm11 0h1v1h-1zm11 0h1v1h-1zm10 0h1v1h-1zm11 0h1v1h-1zm10 0h1v1h-1zm11 0h1v1h-1zm10 0h1v1h-1zm11 0h1v1h-1zm10 0h1v1h-1zm11 0h1v1h-1zm10 0h1v1h-1zm11 0h1v1h-1zm10 0h1v1h-1zm11 0h1v1h-1zm10 0h1v1h-1zm11 0h1v1h-1zm11 0h1v1h-1zm10 0h1v1h-1zm11 0h1v1h-1zm10 0h1v1h-1zm11 0h1v1h-1zm10 0h1v1h-1zm11 0h1v1h-1zm10 0h1v1h-1zm11 0h1v1h-1zm10 0h1v1h-1zm11 0h1v1h-1zm10 0h1v1h-1zm11 0h1v1h-1zm10 0h1v1h-1zm11 0h1v1h-1zm11 0h1v1h-1zm10 0h1v1h-1zm11 0h1v1h-1zm10 0h1v1h-1zm11 0h1v1h-1zm10 0h1v1h-1zm11 0h1v1h-1zm10 0h1v1h-1zm11 0h1v1h-1zm10 0h1v1h-1zm11 0h1v1h-1zm10 0h1v1h-1zm11 0h1v1h-1zm10 0h1v1h-1zm11 0h1v1h-1zm10 0h1v1h-1zm11 0h1v1h-1zm11 0h1v1h-1zm10 0h1v1h-1zm11 0h1v1h-1zm10 0h1v1h-1zm11 0h1v1h-1zm10 0h1v1h-1zm11 0h1v1h-1zm10 0h1v1h-1zm11 0h1v1h-1zm10 0h1v1h-1zm11 0h1v1h-1zM609 514h1v1h-1zm11 0h1v1h-1zm10 0h1v1h-1zm11 0h1v1h-1zm10 0h1v1h-1zm11 0h1v1h-1zm10 0h1v1h-1zm11 0h1v1h-1zm10 0h1v1h-1zm11 0h1v1h-1zm10 0h1v1h-1zm11 0h1v1h-1zm10 0h1v1h-1zm11 0h1v1h-1zm10 0h1v1h-1zm11 0h1v1h-1zm11 0h1v1h-1zm10 0h1v1h-1zm11 0h1v1h-1zm10 0h1v1h-1zm11 0h1v1h-1zm10 0h1v1h-1zm11 0h1v1h-1zm10 0h1v1h-1zm11 0h1v1h-1zm10 0h1v1h-1zm11 0h1v1h-1zm10 0h1v1h-1zm11 0h1v1h-1zm10 0h1v1h-1zm11 0h1v1h-1zm11 0h1v1h-1zm10 0h1v1h-1zm11 0h1v1h-1zm10 0h1v1h-1zm11 0h1v1h-1zm10 0h1v1h-1zm11 0h1v1h-1zm10 0h1v1h-1zm11 0h1v1h-1zm10 0h1v1h-1zm11 0h1v1h-1zm10 0h1v1h-1zm11 0h1v1h-1zm10 0h1v1h-1zm11 0h1v1h-1zm11 0h1v1h-1zm10 0h1v1h-1zm11 0h1v1h-1zm10 0h1v1h-1zm11 0h1v1h-1zm10 0h1v1h-1zm11 0h1v1h-1zm10 0h1v1h-1zm11 0h1v1h-1zm10 0h1v1h-1zm11 0h1v1h-1zm10 0h1v1h-1zm11 0h1v1h-1zm10 0h1v1h-1zm11 0h1v1h-1zm11 0h1v1h-1zm10 0h1v1h-1zm11 0h1v1h-1zm10 0h1v1h-1zm11 0h1v1h-1zm10 0h1v1h-1zm11 0h1v1h-1zm10 0h1v1h-1zm11 0h1v1h-1zm10 0h1v1h-1zm11 0h1v1h-1zm10 0h1v1h-1zm11 0h1v1h-1zm10 0h1v1h-1zm11 0h1v1h-1zm11 0h1v1h-1zm10 0h1v1h-1zm11 0h1v1h-1zm10 0h1v1h-1zm11 0h1v1h-1zm10 0h1v1h-1zm11 0h1v1h-1zm10 0h1v1h-1zm11 0h1v1h-1zm10 0h1v1h-1zm11 0h1v1h-1zm10 0h1v1h-1zm11 0h1v1h-1zm10 0h1v1h-1zm11 0h1v1h-1zm11 0h1v1h-1zm10 0h1v1h-1zm11 0h1v1h-1zm10 0h1v1h-1zm11 0h1v1h-1zm10 0h1v1h-1zm11 0h1v1h-1zm10 0h1v1h-1zm11 0h1v1h-1zm10 0h1v1h-1zm11 0h1v1h-1zm10 0h1v1h-1zm11 0h1v1h-1zm10 0h1v1h-1zm11 0h1v1h-1zm10 0h1v1h-1zm11 0h1v1h-1zm11 0h1v1h-1zm10 0h1v1h-1zm11 0h1v1h-1zm10 0h1v1h-1zm11 0h1v1h-1zm10 0h1v1h-1zm11 0h1v1h-1zm10 0h1v1h-1zm11 0h1v1h-1zm10 0h1v1h-1zm11 0h1v1h-1zM609 525h1v1h-1zm11 0h1v1h-1zm10 0h1v1h-1zm11 0h1v1h-1zm10 0h1v1h-1zm11 0h1v1h-1zm10 0h1v1h-1zm11 0h1v1h-1zm10 0h1v1h-1zm11 0h1v1h-1zm10 0h1v1h-1zm11 0h1v1h-1zm10 0h1v1h-1zm11 0h1v1h-1zm10 0h1v1h-1zm11 0h1v1h-1zm11 0h1v1h-1zm10 0h1v1h-1zm11 0h1v1h-1zm10 0h1v1h-1zm11 0h1v1h-1zm10 0h1v1h-1zm11 0h1v1h-1zm10 0h1v1h-1zm11 0h1v1h-1zm10 0h1v1h-1zm11 0h1v1h-1zm10 0h1v1h-1zm11 0h1v1h-1zm10 0h1v1h-1zm11 0h1v1h-1zm11 0h1v1h-1zm10 0h1v1h-1zm11 0h1v1h-1zm10 0h1v1h-1zm11 0h1v1h-1zm10 0h1v1h-1zm11 0h1v1h-1zm10 0h1v1h-1zm11 0h1v1h-1zm10 0h1v1h-1zm11 0h1v1h-1zm10 0h1v1h-1zm11 0h1v1h-1zm10 0h1v1h-1zm11 0h1v1h-1zm11 0h1v1h-1zm10 0h1v1h-1zm11 0h1v1h-1zm10 0h1v1h-1zm11 0h1v1h-1zm10 0h1v1h-1zm11 0h1v1h-1zm10 0h1v1h-1zm11 0h1v1h-1zm10 0h1v1h-1zm11 0h1v1h-1zm10 0h1v1h-1zm11 0h1v1h-1zm10 0h1v1h-1zm11 0h1v1h-1zm11 0h1v1h-1zm10 0h1v1h-1zm11 0h1v1h-1zm10 0h1v1h-1zm11 0h1v1h-1zm10 0h1v1h-1zm11 0h1v1h-1zm10 0h1v1h-1zm11 0h1v1h-1zm10 0h1v1h-1zm11 0h1v1h-1zm10 0h1v1h-1zm11 0h1v1h-1zm10 0h1v1h-1zm11 0h1v1h-1zm11 0h1v1h-1zm10 0h1v1h-1zm11 0h1v1h-1zm10 0h1v1h-1zm11 0h1v1h-1zm10 0h1v1h-1zm11 0h1v1h-1zm10 0h1v1h-1zm11 0h1v1h-1zm10 0h1v1h-1zm11 0h1v1h-1zm10 0h1v1h-1zm11 0h1v1h-1zm10 0h1v1h-1zm11 0h1v1h-1zm11 0h1v1h-1zm10 0h1v1h-1zm11 0h1v1h-1zm10 0h1v1h-1zm11 0h1v1h-1zm10 0h1v1h-1zm11 0h1v1h-1zm10 0h1v1h-1zm11 0h1v1h-1zm10 0h1v1h-1zm11 0h1v1h-1zm10 0h1v1h-1zm11 0h1v1h-1zm10 0h1v1h-1zm11 0h1v1h-1zm10 0h1v1h-1zm11 0h1v1h-1zm11 0h1v1h-1zm10 0h1v1h-1zm11 0h1v1h-1zm10 0h1v1h-1zm11 0h1v1h-1zm10 0h1v1h-1zm11 0h1v1h-1zm10 0h1v1h-1zm11 0h1v1h-1zm10 0h1v1h-1zm11 0h1v1h-1zM609 535h1v1h-1zm11 0h1v1h-1zm10 0h1v1h-1zm11 0h1v1h-1zm10 0h1v1h-1zm11 0h1v1h-1zm10 0h1v1h-1zm11 0h1v1h-1zm10 0h1v1h-1zm11 0h1v1h-1zm10 0h1v1h-1zm11 0h1v1h-1zm10 0h1v1h-1zm11 0h1v1h-1zm10 0h1v1h-1zm11 0h1v1h-1zm11 0h1v1h-1zm10 0h1v1h-1zm11 0h1v1h-1zm10 0h1v1h-1zm11 0h1v1h-1zm10 0h1v1h-1zm11 0h1v1h-1zm10 0h1v1h-1zm11 0h1v1h-1zm10 0h1v1h-1zm11 0h1v1h-1zm10 0h1v1h-1zm11 0h1v1h-1zm10 0h1v1h-1zm11 0h1v1h-1zm11 0h1v1h-1zm10 0h1v1h-1zm11 0h1v1h-1zm10 0h1v1h-1zm11 0h1v1h-1zm10 0h1v1h-1zm11 0h1v1h-1zm10 0h1v1h-1zm11 0h1v1h-1zm10 0h1v1h-1zm11 0h1v1h-1zm10 0h1v1h-1zm11 0h1v1h-1zm10 0h1v1h-1zm11 0h1v1h-1zm11 0h1v1h-1zm10 0h1v1h-1zm11 0h1v1h-1zm10 0h1v1h-1zm11 0h1v1h-1zm10 0h1v1h-1zm11 0h1v1h-1zm10 0h1v1h-1zm11 0h1v1h-1zm10 0h1v1h-1zm11 0h1v1h-1zm10 0h1v1h-1zm11 0h1v1h-1zm10 0h1v1h-1zm11 0h1v1h-1zm11 0h1v1h-1zm10 0h1v1h-1zm11 0h1v1h-1zm10 0h1v1h-1zm11 0h1v1h-1zm10 0h1v1h-1zm11 0h1v1h-1zm10 0h1v1h-1zm11 0h1v1h-1zm10 0h1v1h-1zm11 0h1v1h-1zm10 0h1v1h-1zm11 0h1v1h-1zm10 0h1v1h-1zm11 0h1v1h-1zm11 0h1v1h-1zm10 0h1v1h-1zm11 0h1v1h-1zm10 0h1v1h-1zm11 0h1v1h-1zm10 0h1v1h-1zm11 0h1v1h-1zm10 0h1v1h-1zm11 0h1v1h-1zm10 0h1v1h-1zm11 0h1v1h-1zm10 0h1v1h-1zm11 0h1v1h-1zm10 0h1v1h-1zm11 0h1v1h-1zm11 0h1v1h-1zm10 0h1v1h-1zm11 0h1v1h-1zm10 0h1v1h-1zm11 0h1v1h-1zm10 0h1v1h-1zm11 0h1v1h-1zm10 0h1v1h-1zm11 0h1v1h-1zm10 0h1v1h-1zm11 0h1v1h-1zm10 0h1v1h-1zm11 0h1v1h-1zm10 0h1v1h-1zm11 0h1v1h-1zm10 0h1v1h-1zm11 0h1v1h-1zm11 0h1v1h-1zm10 0h1v1h-1zm11 0h1v1h-1zm10 0h1v1h-1zm11 0h1v1h-1zm10 0h1v1h-1zm11 0h1v1h-1zm10 0h1v1h-1zm11 0h1v1h-1zm10 0h1v1h-1zm11 0h1v1h-1zM609 546h1v1h-1zm11 0h1v1h-1zm10 0h1v1h-1zm11 0h1v1h-1zm10 0h1v1h-1zm11 0h1v1h-1zm10 0h1v1h-1zm11 0h1v1h-1zm10 0h1v1h-1zm11 0h1v1h-1zm10 0h1v1h-1zm11 0h1v1h-1zm10 0h1v1h-1zm11 0h1v1h-1zm10 0h1v1h-1zm11 0h1v1h-1zm11 0h1v1h-1zm10 0h1v1h-1zm11 0h1v1h-1zm10 0h1v1h-1zm11 0h1v1h-1zm10 0h1v1h-1zm11 0h1v1h-1zm10 0h1v1h-1zm11 0h1v1h-1zm10 0h1v1h-1zm11 0h1v1h-1zm10 0h1v1h-1zm11 0h1v1h-1zm10 0h1v1h-1zm11 0h1v1h-1zm11 0h1v1h-1zm10 0h1v1h-1zm11 0h1v1h-1zm10 0h1v1h-1zm11 0h1v1h-1zm10 0h1v1h-1zm11 0h1v1h-1zm10 0h1v1h-1zm11 0h1v1h-1zm10 0h1v1h-1zm11 0h1v1h-1zm10 0h1v1h-1zm11 0h1v1h-1zm10 0h1v1h-1zm11 0h1v1h-1zm11 0h1v1h-1zm10 0h1v1h-1zm11 0h1v1h-1zm10 0h1v1h-1zm11 0h1v1h-1zm10 0h1v1h-1zm11 0h1v1h-1zm10 0h1v1h-1zm11 0h1v1h-1zm10 0h1v1h-1zm11 0h1v1h-1zm10 0h1v1h-1zm11 0h1v1h-1zm10 0h1v1h-1zm11 0h1v1h-1zm11 0h1v1h-1zm10 0h1v1h-1zm11 0h1v1h-1zm10 0h1v1h-1zm11 0h1v1h-1zm10 0h1v1h-1zm11 0h1v1h-1zm10 0h1v1h-1zm11 0h1v1h-1zm10 0h1v1h-1zm11 0h1v1h-1zm10 0h1v1h-1zm11 0h1v1h-1zm10 0h1v1h-1zm11 0h1v1h-1zm11 0h1v1h-1zm10 0h1v1h-1zm11 0h1v1h-1zm10 0h1v1h-1zm11 0h1v1h-1zm10 0h1v1h-1zm11 0h1v1h-1zm10 0h1v1h-1zm11 0h1v1h-1zm10 0h1v1h-1zm11 0h1v1h-1zm10 0h1v1h-1zm11 0h1v1h-1zm10 0h1v1h-1zm11 0h1v1h-1zm11 0h1v1h-1zm10 0h1v1h-1zm11 0h1v1h-1zm10 0h1v1h-1zm11 0h1v1h-1zm10 0h1v1h-1zm11 0h1v1h-1zm10 0h1v1h-1zm11 0h1v1h-1zm10 0h1v1h-1zm11 0h1v1h-1zm10 0h1v1h-1zm11 0h1v1h-1zm10 0h1v1h-1zm11 0h1v1h-1zm10 0h1v1h-1zm11 0h1v1h-1zm11 0h1v1h-1zm10 0h1v1h-1zm11 0h1v1h-1zm10 0h1v1h-1zm11 0h1v1h-1zm10 0h1v1h-1zm11 0h1v1h-1zm10 0h1v1h-1zm11 0h1v1h-1zm10 0h1v1h-1zm11 0h1v1h-1zM609 556h1v1h-1zm11 0h1v1h-1zm10 0h1v1h-1zm11 0h1v1h-1zm10 0h1v1h-1zm11 0h1v1h-1zm10 0h1v1h-1zm11 0h1v1h-1zm10 0h1v1h-1zm11 0h1v1h-1zm10 0h1v1h-1zm11 0h1v1h-1zm10 0h1v1h-1zm11 0h1v1h-1zm10 0h1v1h-1zm11 0h1v1h-1zm11 0h1v1h-1zm10 0h1v1h-1zm11 0h1v1h-1zm10 0h1v1h-1zm11 0h1v1h-1zm10 0h1v1h-1zm11 0h1v1h-1zm10 0h1v1h-1zm11 0h1v1h-1zm10 0h1v1h-1zm11 0h1v1h-1zm10 0h1v1h-1zm11 0h1v1h-1zm10 0h1v1h-1zm11 0h1v1h-1zm11 0h1v1h-1zm10 0h1v1h-1zm11 0h1v1h-1zm10 0h1v1h-1zm11 0h1v1h-1zm10 0h1v1h-1zm11 0h1v1h-1zm10 0h1v1h-1zm11 0h1v1h-1zm10 0h1v1h-1zm11 0h1v1h-1zm10 0h1v1h-1zm11 0h1v1h-1zm10 0h1v1h-1zm11 0h1v1h-1zm11 0h1v1h-1zm10 0h1v1h-1zm11 0h1v1h-1zm10 0h1v1h-1zm11 0h1v1h-1zm10 0h1v1h-1zm11 0h1v1h-1zm10 0h1v1h-1zm11 0h1v1h-1zm10 0h1v1h-1zm11 0h1v1h-1zm10 0h1v1h-1zm11 0h1v1h-1zm10 0h1v1h-1zm11 0h1v1h-1zm11 0h1v1h-1zm10 0h1v1h-1zm11 0h1v1h-1zm10 0h1v1h-1zm11 0h1v1h-1zm10 0h1v1h-1zm11 0h1v1h-1zm10 0h1v1h-1zm11 0h1v1h-1zm10 0h1v1h-1zm11 0h1v1h-1zm10 0h1v1h-1zm11 0h1v1h-1zm10 0h1v1h-1zm11 0h1v1h-1zm11 0h1v1h-1zm10 0h1v1h-1zm11 0h1v1h-1zm10 0h1v1h-1zm11 0h1v1h-1zm10 0h1v1h-1zm11 0h1v1h-1zm10 0h1v1h-1zm11 0h1v1h-1zm10 0h1v1h-1zm11 0h1v1h-1zm10 0h1v1h-1zm11 0h1v1h-1zm10 0h1v1h-1zm11 0h1v1h-1zm11 0h1v1h-1zm10 0h1v1h-1zm11 0h1v1h-1zm10 0h1v1h-1zm11 0h1v1h-1zm10 0h1v1h-1zm11 0h1v1h-1zm10 0h1v1h-1zm11 0h1v1h-1zm10 0h1v1h-1zm11 0h1v1h-1zm10 0h1v1h-1zm11 0h1v1h-1zm10 0h1v1h-1zm11 0h1v1h-1zm10 0h1v1h-1zm11 0h1v1h-1zm11 0h1v1h-1zm10 0h1v1h-1zm11 0h1v1h-1zm10 0h1v1h-1zm11 0h1v1h-1zm10 0h1v1h-1zm11 0h1v1h-1zm10 0h1v1h-1zm11 0h1v1h-1zm10 0h1v1h-1zm11 0h1v1h-1zM609 567h1v1h-1zm11 0h1v1h-1zm10 0h1v1h-1zm11 0h1v1h-1zm10 0h1v1h-1zm11 0h1v1h-1zm10 0h1v1h-1zm11 0h1v1h-1zm10 0h1v1h-1zm11 0h1v1h-1zm10 0h1v1h-1zm11 0h1v1h-1zm10 0h1v1h-1zm11 0h1v1h-1zm10 0h1v1h-1zm11 0h1v1h-1zm11 0h1v1h-1zm10 0h1v1h-1zm11 0h1v1h-1zm10 0h1v1h-1zm11 0h1v1h-1zm10 0h1v1h-1zm11 0h1v1h-1zm10 0h1v1h-1zm11 0h1v1h-1zm10 0h1v1h-1zm11 0h1v1h-1zm10 0h1v1h-1zm11 0h1v1h-1zm10 0h1v1h-1zm11 0h1v1h-1zm11 0h1v1h-1zm10 0h1v1h-1zm11 0h1v1h-1zm10 0h1v1h-1zm11 0h1v1h-1zm10 0h1v1h-1zm11 0h1v1h-1zm10 0h1v1h-1zm11 0h1v1h-1zm10 0h1v1h-1zm11 0h1v1h-1zm10 0h1v1h-1zm11 0h1v1h-1zm10 0h1v1h-1zm11 0h1v1h-1zm11 0h1v1h-1zm10 0h1v1h-1zm11 0h1v1h-1zm10 0h1v1h-1zm11 0h1v1h-1zm10 0h1v1h-1zm11 0h1v1h-1zm10 0h1v1h-1zm11 0h1v1h-1zm10 0h1v1h-1zm11 0h1v1h-1zm10 0h1v1h-1zm11 0h1v1h-1zm10 0h1v1h-1zm11 0h1v1h-1zm11 0h1v1h-1zm10 0h1v1h-1zm11 0h1v1h-1zm10 0h1v1h-1zm11 0h1v1h-1zm10 0h1v1h-1zm11 0h1v1h-1zm10 0h1v1h-1zm11 0h1v1h-1zm10 0h1v1h-1zm11 0h1v1h-1zm10 0h1v1h-1zm11 0h1v1h-1zm10 0h1v1h-1zm11 0h1v1h-1zm11 0h1v1h-1zm10 0h1v1h-1zm11 0h1v1h-1zm10 0h1v1h-1zm11 0h1v1h-1zm10 0h1v1h-1zm11 0h1v1h-1zm10 0h1v1h-1zm11 0h1v1h-1zm10 0h1v1h-1zm11 0h1v1h-1zm10 0h1v1h-1zm11 0h1v1h-1zm10 0h1v1h-1zm11 0h1v1h-1zm11 0h1v1h-1zm10 0h1v1h-1zm11 0h1v1h-1zm10 0h1v1h-1zm11 0h1v1h-1zm10 0h1v1h-1zm11 0h1v1h-1zm10 0h1v1h-1zm11 0h1v1h-1zm10 0h1v1h-1zm11 0h1v1h-1zm10 0h1v1h-1zm11 0h1v1h-1zm10 0h1v1h-1zm11 0h1v1h-1zm10 0h1v1h-1zm11 0h1v1h-1zm11 0h1v1h-1zm10 0h1v1h-1zm11 0h1v1h-1zm10 0h1v1h-1zm11 0h1v1h-1zm10 0h1v1h-1zm11 0h1v1h-1zm10 0h1v1h-1zm11 0h1v1h-1zm10 0h1v1h-1zm11 0h1v1h-1zM609 577h1v1h-1zm11 0h1v1h-1zm10 0h1v1h-1zm11 0h1v1h-1zm10 0h1v1h-1zm11 0h1v1h-1zm10 0h1v1h-1zm11 0h1v1h-1zm10 0h1v1h-1zm11 0h1v1h-1zm10 0h1v1h-1zm11 0h1v1h-1zm10 0h1v1h-1zm11 0h1v1h-1zm10 0h1v1h-1zm11 0h1v1h-1zm11 0h1v1h-1zm10 0h1v1h-1zm11 0h1v1h-1zm10 0h1v1h-1zm11 0h1v1h-1zm10 0h1v1h-1zm11 0h1v1h-1zm10 0h1v1h-1zm11 0h1v1h-1zm10 0h1v1h-1zm11 0h1v1h-1zm10 0h1v1h-1zm11 0h1v1h-1zm10 0h1v1h-1zm11 0h1v1h-1zm11 0h1v1h-1zm10 0h1v1h-1zm11 0h1v1h-1zm10 0h1v1h-1zm11 0h1v1h-1zm10 0h1v1h-1zm11 0h1v1h-1zm10 0h1v1h-1zm11 0h1v1h-1zm10 0h1v1h-1zm11 0h1v1h-1zm10 0h1v1h-1zm11 0h1v1h-1zm10 0h1v1h-1zm11 0h1v1h-1zm11 0h1v1h-1zm10 0h1v1h-1zm11 0h1v1h-1zm10 0h1v1h-1zm11 0h1v1h-1zm10 0h1v1h-1zm11 0h1v1h-1zm10 0h1v1h-1zm11 0h1v1h-1zm10 0h1v1h-1zm11 0h1v1h-1zm10 0h1v1h-1zm11 0h1v1h-1zm10 0h1v1h-1zm11 0h1v1h-1zm11 0h1v1h-1zm10 0h1v1h-1zm11 0h1v1h-1zm10 0h1v1h-1zm11 0h1v1h-1zm10 0h1v1h-1zm11 0h1v1h-1zm10 0h1v1h-1zm11 0h1v1h-1zm10 0h1v1h-1zm11 0h1v1h-1zm10 0h1v1h-1zm11 0h1v1h-1zm10 0h1v1h-1zm11 0h1v1h-1zm11 0h1v1h-1zm10 0h1v1h-1zm11 0h1v1h-1zm10 0h1v1h-1zm11 0h1v1h-1zm10 0h1v1h-1zm11 0h1v1h-1zm10 0h1v1h-1zm11 0h1v1h-1zm10 0h1v1h-1zm11 0h1v1h-1zm10 0h1v1h-1zm11 0h1v1h-1zm10 0h1v1h-1zm11 0h1v1h-1zm11 0h1v1h-1zm10 0h1v1h-1zm11 0h1v1h-1zm10 0h1v1h-1zm11 0h1v1h-1zm10 0h1v1h-1zm11 0h1v1h-1zm10 0h1v1h-1zm11 0h1v1h-1zm10 0h1v1h-1zm11 0h1v1h-1zm10 0h1v1h-1zm11 0h1v1h-1zm10 0h1v1h-1zm11 0h1v1h-1zm10 0h1v1h-1zm11 0h1v1h-1zm11 0h1v1h-1zm10 0h1v1h-1zm11 0h1v1h-1zm10 0h1v1h-1zm11 0h1v1h-1zm10 0h1v1h-1zm11 0h1v1h-1zm10 0h1v1h-1zm11 0h1v1h-1zm10 0h1v1h-1zm11 0h1v1h-1zM609 588h1v1h-1zm11 0h1v1h-1zm10 0h1v1h-1zm11 0h1v1h-1zm10 0h1v1h-1zm11 0h1v1h-1zm10 0h1v1h-1zm11 0h1v1h-1zm10 0h1v1h-1zm11 0h1v1h-1zm10 0h1v1h-1zm11 0h1v1h-1zm10 0h1v1h-1zm11 0h1v1h-1zm10 0h1v1h-1zm11 0h1v1h-1zm11 0h1v1h-1zm10 0h1v1h-1zm11 0h1v1h-1zm10 0h1v1h-1zm11 0h1v1h-1zm10 0h1v1h-1zm11 0h1v1h-1zm10 0h1v1h-1zm11 0h1v1h-1zm10 0h1v1h-1zm11 0h1v1h-1zm10 0h1v1h-1zm11 0h1v1h-1zm10 0h1v1h-1zm11 0h1v1h-1zm11 0h1v1h-1zm10 0h1v1h-1zm11 0h1v1h-1zm10 0h1v1h-1zm11 0h1v1h-1zm10 0h1v1h-1zm11 0h1v1h-1zm10 0h1v1h-1zm11 0h1v1h-1zm10 0h1v1h-1zm11 0h1v1h-1zm10 0h1v1h-1zm11 0h1v1h-1zm10 0h1v1h-1zm11 0h1v1h-1zm11 0h1v1h-1zm10 0h1v1h-1zm11 0h1v1h-1zm10 0h1v1h-1zm11 0h1v1h-1zm10 0h1v1h-1zm11 0h1v1h-1zm10 0h1v1h-1zm11 0h1v1h-1zm10 0h1v1h-1zm11 0h1v1h-1zm10 0h1v1h-1zm11 0h1v1h-1zm10 0h1v1h-1zm11 0h1v1h-1zm11 0h1v1h-1zm10 0h1v1h-1zm11 0h1v1h-1zm10 0h1v1h-1zm11 0h1v1h-1zm10 0h1v1h-1zm11 0h1v1h-1zm10 0h1v1h-1zm11 0h1v1h-1zm10 0h1v1h-1zm11 0h1v1h-1zm10 0h1v1h-1zm11 0h1v1h-1zm10 0h1v1h-1zm11 0h1v1h-1zm11 0h1v1h-1zm10 0h1v1h-1zm11 0h1v1h-1zm10 0h1v1h-1zm11 0h1v1h-1zm10 0h1v1h-1zm11 0h1v1h-1zm10 0h1v1h-1zm11 0h1v1h-1zm10 0h1v1h-1zm11 0h1v1h-1zm10 0h1v1h-1zm11 0h1v1h-1zm10 0h1v1h-1zm11 0h1v1h-1zm11 0h1v1h-1zm10 0h1v1h-1zm11 0h1v1h-1zm10 0h1v1h-1zm11 0h1v1h-1zm10 0h1v1h-1zm11 0h1v1h-1zm10 0h1v1h-1zm11 0h1v1h-1zm10 0h1v1h-1zm11 0h1v1h-1zm10 0h1v1h-1zm11 0h1v1h-1zm10 0h1v1h-1zm11 0h1v1h-1zm10 0h1v1h-1zm11 0h1v1h-1zm11 0h1v1h-1zm10 0h1v1h-1zm11 0h1v1h-1zm10 0h1v1h-1zm11 0h1v1h-1zm10 0h1v1h-1zm11 0h1v1h-1zm10 0h1v1h-1zm11 0h1v1h-1zm10 0h1v1h-1zm11 0h1v1h-1zM609 598h1v1h-1zm11 0h1v1h-1zm10 0h1v1h-1zm11 0h1v1h-1zm10 0h1v1h-1zm11 0h1v1h-1zm10 0h1v1h-1zm11 0h1v1h-1zm10 0h1v1h-1zm11 0h1v1h-1zm10 0h1v1h-1zm11 0h1v1h-1zm10 0h1v1h-1zm11 0h1v1h-1zm10 0h1v1h-1zm11 0h1v1h-1zm11 0h1v1h-1zm10 0h1v1h-1zm11 0h1v1h-1zm10 0h1v1h-1zm11 0h1v1h-1zm10 0h1v1h-1zm11 0h1v1h-1zm10 0h1v1h-1zm11 0h1v1h-1zm10 0h1v1h-1zm11 0h1v1h-1zm10 0h1v1h-1zm11 0h1v1h-1zm10 0h1v1h-1zm11 0h1v1h-1zm11 0h1v1h-1zm10 0h1v1h-1zm11 0h1v1h-1zm10 0h1v1h-1zm11 0h1v1h-1zm10 0h1v1h-1zm11 0h1v1h-1zm10 0h1v1h-1zm11 0h1v1h-1zm10 0h1v1h-1zm11 0h1v1h-1zm10 0h1v1h-1zm11 0h1v1h-1zm10 0h1v1h-1zm11 0h1v1h-1zm11 0h1v1h-1zm10 0h1v1h-1zm11 0h1v1h-1zm10 0h1v1h-1zm11 0h1v1h-1zm10 0h1v1h-1zm11 0h1v1h-1zm10 0h1v1h-1zm11 0h1v1h-1zm10 0h1v1h-1zm11 0h1v1h-1zm10 0h1v1h-1zm11 0h1v1h-1zm10 0h1v1h-1zm11 0h1v1h-1zm11 0h1v1h-1zm10 0h1v1h-1zm11 0h1v1h-1zm10 0h1v1h-1zm11 0h1v1h-1zm10 0h1v1h-1zm11 0h1v1h-1zm10 0h1v1h-1zm11 0h1v1h-1zm10 0h1v1h-1zm11 0h1v1h-1zm10 0h1v1h-1zm11 0h1v1h-1zm10 0h1v1h-1zm11 0h1v1h-1zm11 0h1v1h-1zm10 0h1v1h-1zm11 0h1v1h-1zm10 0h1v1h-1zm11 0h1v1h-1zm10 0h1v1h-1zm11 0h1v1h-1zm10 0h1v1h-1zm11 0h1v1h-1zm10 0h1v1h-1zm11 0h1v1h-1zm10 0h1v1h-1zm11 0h1v1h-1zm10 0h1v1h-1zm11 0h1v1h-1zm11 0h1v1h-1zm10 0h1v1h-1zm11 0h1v1h-1zm10 0h1v1h-1zm11 0h1v1h-1zm10 0h1v1h-1zm11 0h1v1h-1zm10 0h1v1h-1zm11 0h1v1h-1zm10 0h1v1h-1zm11 0h1v1h-1zm10 0h1v1h-1zm11 0h1v1h-1zm10 0h1v1h-1zm11 0h1v1h-1zm10 0h1v1h-1zm11 0h1v1h-1zm11 0h1v1h-1zm10 0h1v1h-1zm11 0h1v1h-1zm10 0h1v1h-1zm11 0h1v1h-1zm10 0h1v1h-1zm11 0h1v1h-1zm10 0h1v1h-1zm11 0h1v1h-1zm10 0h1v1h-1zm11 0h1v1h-1zM609 609h1v1h-1zm11 0h1v1h-1zm10 0h1v1h-1zm11 0h1v1h-1zm10 0h1v1h-1zm11 0h1v1h-1zm10 0h1v1h-1zm11 0h1v1h-1zm10 0h1v1h-1zm11 0h1v1h-1zm10 0h1v1h-1zm11 0h1v1h-1zm10 0h1v1h-1zm11 0h1v1h-1zm10 0h1v1h-1zm11 0h1v1h-1zm11 0h1v1h-1zm10 0h1v1h-1zm11 0h1v1h-1zm10 0h1v1h-1zm11 0h1v1h-1zm10 0h1v1h-1zm11 0h1v1h-1zm10 0h1v1h-1zm11 0h1v1h-1zm10 0h1v1h-1zm11 0h1v1h-1zm10 0h1v1h-1zm11 0h1v1h-1zm10 0h1v1h-1zm11 0h1v1h-1zm11 0h1v1h-1zm10 0h1v1h-1zm11 0h1v1h-1zm10 0h1v1h-1zm11 0h1v1h-1zm10 0h1v1h-1zm11 0h1v1h-1zm10 0h1v1h-1zm11 0h1v1h-1zm10 0h1v1h-1zm11 0h1v1h-1zm10 0h1v1h-1zm11 0h1v1h-1zm10 0h1v1h-1zm11 0h1v1h-1zm11 0h1v1h-1zm10 0h1v1h-1zm11 0h1v1h-1zm10 0h1v1h-1zm11 0h1v1h-1zm10 0h1v1h-1zm11 0h1v1h-1zm10 0h1v1h-1zm11 0h1v1h-1zm10 0h1v1h-1zm11 0h1v1h-1zm10 0h1v1h-1zm11 0h1v1h-1zm10 0h1v1h-1zm11 0h1v1h-1zm11 0h1v1h-1zm10 0h1v1h-1zm11 0h1v1h-1zm10 0h1v1h-1zm11 0h1v1h-1zm10 0h1v1h-1zm11 0h1v1h-1zm10 0h1v1h-1zm11 0h1v1h-1zm10 0h1v1h-1zm11 0h1v1h-1zm10 0h1v1h-1zm11 0h1v1h-1zm10 0h1v1h-1zm11 0h1v1h-1zm11 0h1v1h-1zm10 0h1v1h-1zm11 0h1v1h-1zm10 0h1v1h-1zm11 0h1v1h-1zm10 0h1v1h-1zm11 0h1v1h-1zm10 0h1v1h-1zm11 0h1v1h-1zm10 0h1v1h-1zm11 0h1v1h-1zm10 0h1v1h-1zm11 0h1v1h-1zm10 0h1v1h-1zm11 0h1v1h-1zm11 0h1v1h-1zm10 0h1v1h-1zm11 0h1v1h-1zm10 0h1v1h-1zm11 0h1v1h-1zm10 0h1v1h-1zm11 0h1v1h-1zm10 0h1v1h-1zm11 0h1v1h-1zm10 0h1v1h-1zm11 0h1v1h-1zm10 0h1v1h-1zm11 0h1v1h-1zm10 0h1v1h-1zm11 0h1v1h-1zm10 0h1v1h-1zm11 0h1v1h-1zm11 0h1v1h-1zm10 0h1v1h-1zm11 0h1v1h-1zm10 0h1v1h-1zm11 0h1v1h-1zm10 0h1v1h-1zm11 0h1v1h-1zm10 0h1v1h-1zm11 0h1v1h-1zm10 0h1v1h-1zm11 0h1v1h-1zM609 619h1v1h-1zm11 0h1v1h-1zm10 0h1v1h-1zm11 0h1v1h-1zm10 0h1v1h-1zm11 0h1v1h-1zm10 0h1v1h-1zm11 0h1v1h-1zm10 0h1v1h-1zm11 0h1v1h-1zm10 0h1v1h-1zm11 0h1v1h-1zm10 0h1v1h-1zm11 0h1v1h-1zm10 0h1v1h-1zm11 0h1v1h-1zm11 0h1v1h-1zm10 0h1v1h-1zm11 0h1v1h-1zm10 0h1v1h-1zm11 0h1v1h-1zm10 0h1v1h-1zm11 0h1v1h-1zm10 0h1v1h-1zm11 0h1v1h-1zm10 0h1v1h-1zm11 0h1v1h-1zm10 0h1v1h-1zm11 0h1v1h-1zm10 0h1v1h-1zm11 0h1v1h-1zm11 0h1v1h-1zm10 0h1v1h-1zm11 0h1v1h-1zm10 0h1v1h-1zm11 0h1v1h-1zm10 0h1v1h-1zm11 0h1v1h-1zm10 0h1v1h-1zm11 0h1v1h-1zm10 0h1v1h-1zm11 0h1v1h-1zm10 0h1v1h-1zm11 0h1v1h-1zm10 0h1v1h-1zm11 0h1v1h-1zm11 0h1v1h-1zm10 0h1v1h-1zm11 0h1v1h-1zm10 0h1v1h-1zm11 0h1v1h-1zm10 0h1v1h-1zm11 0h1v1h-1zm10 0h1v1h-1zm11 0h1v1h-1zm10 0h1v1h-1zm11 0h1v1h-1zm10 0h1v1h-1zm11 0h1v1h-1zm10 0h1v1h-1zm11 0h1v1h-1zm11 0h1v1h-1zm10 0h1v1h-1zm11 0h1v1h-1zm10 0h1v1h-1zm11 0h1v1h-1zm10 0h1v1h-1zm11 0h1v1h-1zm10 0h1v1h-1zm11 0h1v1h-1zm10 0h1v1h-1zm11 0h1v1h-1zm10 0h1v1h-1zm11 0h1v1h-1zm10 0h1v1h-1zm11 0h1v1h-1zm11 0h1v1h-1zm10 0h1v1h-1zm11 0h1v1h-1zm10 0h1v1h-1zm11 0h1v1h-1zm10 0h1v1h-1zm11 0h1v1h-1zm10 0h1v1h-1zm11 0h1v1h-1zm10 0h1v1h-1zm11 0h1v1h-1zm10 0h1v1h-1zm11 0h1v1h-1zm10 0h1v1h-1zm11 0h1v1h-1zm11 0h1v1h-1zm10 0h1v1h-1zm11 0h1v1h-1zm10 0h1v1h-1zm11 0h1v1h-1zm10 0h1v1h-1zm11 0h1v1h-1zm10 0h1v1h-1zm11 0h1v1h-1zm10 0h1v1h-1zm11 0h1v1h-1zm10 0h1v1h-1zm11 0h1v1h-1zm10 0h1v1h-1zm11 0h1v1h-1zm10 0h1v1h-1zm11 0h1v1h-1zm11 0h1v1h-1zm10 0h1v1h-1zm11 0h1v1h-1zm10 0h1v1h-1zm11 0h1v1h-1zm10 0h1v1h-1zm11 0h1v1h-1zm10 0h1v1h-1zm11 0h1v1h-1zm10 0h1v1h-1zm11 0h1v1h-1zM609 630h1v1h-1zm11 0h1v1h-1zm10 0h1v1h-1zm11 0h1v1h-1zm10 0h1v1h-1zm11 0h1v1h-1zm10 0h1v1h-1zm11 0h1v1h-1zm10 0h1v1h-1zm11 0h1v1h-1zm10 0h1v1h-1zm11 0h1v1h-1zm10 0h1v1h-1zm11 0h1v1h-1zm10 0h1v1h-1zm11 0h1v1h-1zm11 0h1v1h-1zm10 0h1v1h-1zm11 0h1v1h-1zm10 0h1v1h-1zm11 0h1v1h-1zm10 0h1v1h-1zm11 0h1v1h-1zm10 0h1v1h-1zm11 0h1v1h-1zm10 0h1v1h-1zm11 0h1v1h-1zm10 0h1v1h-1zm11 0h1v1h-1zm10 0h1v1h-1zm11 0h1v1h-1zm11 0h1v1h-1zm10 0h1v1h-1zm11 0h1v1h-1zm10 0h1v1h-1zm11 0h1v1h-1zm10 0h1v1h-1zm11 0h1v1h-1zm10 0h1v1h-1zm11 0h1v1h-1zm10 0h1v1h-1zm11 0h1v1h-1zm10 0h1v1h-1zm11 0h1v1h-1zm10 0h1v1h-1zm11 0h1v1h-1zm11 0h1v1h-1zm10 0h1v1h-1zm11 0h1v1h-1zm10 0h1v1h-1zm11 0h1v1h-1zm10 0h1v1h-1zm11 0h1v1h-1zm10 0h1v1h-1zm11 0h1v1h-1zm10 0h1v1h-1zm11 0h1v1h-1zm10 0h1v1h-1zm11 0h1v1h-1zm10 0h1v1h-1zm11 0h1v1h-1zm11 0h1v1h-1zm10 0h1v1h-1zm11 0h1v1h-1zm10 0h1v1h-1zm11 0h1v1h-1zm10 0h1v1h-1zm11 0h1v1h-1zm10 0h1v1h-1zm11 0h1v1h-1zm10 0h1v1h-1zm11 0h1v1h-1zm10 0h1v1h-1zm11 0h1v1h-1zm10 0h1v1h-1zm11 0h1v1h-1zm11 0h1v1h-1zm10 0h1v1h-1zm11 0h1v1h-1zm10 0h1v1h-1zm11 0h1v1h-1zm10 0h1v1h-1zm11 0h1v1h-1zm10 0h1v1h-1zm11 0h1v1h-1zm10 0h1v1h-1zm11 0h1v1h-1zm10 0h1v1h-1zm11 0h1v1h-1zm10 0h1v1h-1zm11 0h1v1h-1zm11 0h1v1h-1zm10 0h1v1h-1zm11 0h1v1h-1zm10 0h1v1h-1zm11 0h1v1h-1zm10 0h1v1h-1zm11 0h1v1h-1zm10 0h1v1h-1zm11 0h1v1h-1zm10 0h1v1h-1zm11 0h1v1h-1zm10 0h1v1h-1zm11 0h1v1h-1zm10 0h1v1h-1zm11 0h1v1h-1zm10 0h1v1h-1zm11 0h1v1h-1zm11 0h1v1h-1zm10 0h1v1h-1zm11 0h1v1h-1zm10 0h1v1h-1zm11 0h1v1h-1zm10 0h1v1h-1zm11 0h1v1h-1zm10 0h1v1h-1zm11 0h1v1h-1zm10 0h1v1h-1zm11 0h1v1h-1zM609 640h1v1h-1zm11 0h1v1h-1zm10 0h1v1h-1zm11 0h1v1h-1zm10 0h1v1h-1zm11 0h1v1h-1zm10 0h1v1h-1zm11 0h1v1h-1zm10 0h1v1h-1zm11 0h1v1h-1zm10 0h1v1h-1zm11 0h1v1h-1zm10 0h1v1h-1zm11 0h1v1h-1zm10 0h1v1h-1zm11 0h1v1h-1zm11 0h1v1h-1zm10 0h1v1h-1zm11 0h1v1h-1zm10 0h1v1h-1zm11 0h1v1h-1zm10 0h1v1h-1zm11 0h1v1h-1zm10 0h1v1h-1zm11 0h1v1h-1zm10 0h1v1h-1zm11 0h1v1h-1zm10 0h1v1h-1zm11 0h1v1h-1zm10 0h1v1h-1zm11 0h1v1h-1zm11 0h1v1h-1zm10 0h1v1h-1zm11 0h1v1h-1zm10 0h1v1h-1zm11 0h1v1h-1zm10 0h1v1h-1zm11 0h1v1h-1zm10 0h1v1h-1zm11 0h1v1h-1zm10 0h1v1h-1zm11 0h1v1h-1zm10 0h1v1h-1zm11 0h1v1h-1zm10 0h1v1h-1zm11 0h1v1h-1zm11 0h1v1h-1zm10 0h1v1h-1zm11 0h1v1h-1zm10 0h1v1h-1zm11 0h1v1h-1zm10 0h1v1h-1zm11 0h1v1h-1zm10 0h1v1h-1zm11 0h1v1h-1zm10 0h1v1h-1zm11 0h1v1h-1zm10 0h1v1h-1zm11 0h1v1h-1zm10 0h1v1h-1zm11 0h1v1h-1zm11 0h1v1h-1zm10 0h1v1h-1zm11 0h1v1h-1zm10 0h1v1h-1zm11 0h1v1h-1zm10 0h1v1h-1zm11 0h1v1h-1zm10 0h1v1h-1zm11 0h1v1h-1zm10 0h1v1h-1zm11 0h1v1h-1zm10 0h1v1h-1zm11 0h1v1h-1zm10 0h1v1h-1zm11 0h1v1h-1zm11 0h1v1h-1zm10 0h1v1h-1zm11 0h1v1h-1zm10 0h1v1h-1zm11 0h1v1h-1zm10 0h1v1h-1zm11 0h1v1h-1zm10 0h1v1h-1zm11 0h1v1h-1zm10 0h1v1h-1zm11 0h1v1h-1zm10 0h1v1h-1zm11 0h1v1h-1zm10 0h1v1h-1zm11 0h1v1h-1zm11 0h1v1h-1zm10 0h1v1h-1zm11 0h1v1h-1zm10 0h1v1h-1zm11 0h1v1h-1zm10 0h1v1h-1zm11 0h1v1h-1zm10 0h1v1h-1zm11 0h1v1h-1zm10 0h1v1h-1zm11 0h1v1h-1zm10 0h1v1h-1zm11 0h1v1h-1zm10 0h1v1h-1zm11 0h1v1h-1zm10 0h1v1h-1zm11 0h1v1h-1zm11 0h1v1h-1zm10 0h1v1h-1zm11 0h1v1h-1zm10 0h1v1h-1zm11 0h1v1h-1zm10 0h1v1h-1zm11 0h1v1h-1zm10 0h1v1h-1zm11 0h1v1h-1zm10 0h1v1h-1zm11 0h1v1h-1zM609 651h1v1h-1zm11 0h1v1h-1zm10 0h1v1h-1zm11 0h1v1h-1zm10 0h1v1h-1zm11 0h1v1h-1zm10 0h1v1h-1zm11 0h1v1h-1zm10 0h1v1h-1zm11 0h1v1h-1zm10 0h1v1h-1zm11 0h1v1h-1zm10 0h1v1h-1zm11 0h1v1h-1zm10 0h1v1h-1zm11 0h1v1h-1zm11 0h1v1h-1zm10 0h1v1h-1zm11 0h1v1h-1zm10 0h1v1h-1zm11 0h1v1h-1zm10 0h1v1h-1zm11 0h1v1h-1zm10 0h1v1h-1zm11 0h1v1h-1zm10 0h1v1h-1zm11 0h1v1h-1zm10 0h1v1h-1zm11 0h1v1h-1zm10 0h1v1h-1zm11 0h1v1h-1zm11 0h1v1h-1zm10 0h1v1h-1zm11 0h1v1h-1zm10 0h1v1h-1zm11 0h1v1h-1zm10 0h1v1h-1zm11 0h1v1h-1zm10 0h1v1h-1zm11 0h1v1h-1zm10 0h1v1h-1zm11 0h1v1h-1zm10 0h1v1h-1zm11 0h1v1h-1zm10 0h1v1h-1zm11 0h1v1h-1zm11 0h1v1h-1zm10 0h1v1h-1zm11 0h1v1h-1zm10 0h1v1h-1zm11 0h1v1h-1zm10 0h1v1h-1zm11 0h1v1h-1zm10 0h1v1h-1zm11 0h1v1h-1zm10 0h1v1h-1zm11 0h1v1h-1zm10 0h1v1h-1zm11 0h1v1h-1zm10 0h1v1h-1zm11 0h1v1h-1zm11 0h1v1h-1zm10 0h1v1h-1zm11 0h1v1h-1zm10 0h1v1h-1zm11 0h1v1h-1zm10 0h1v1h-1zm11 0h1v1h-1zm10 0h1v1h-1zm11 0h1v1h-1zm10 0h1v1h-1zm11 0h1v1h-1zm10 0h1v1h-1zm11 0h1v1h-1zm10 0h1v1h-1zm11 0h1v1h-1zm11 0h1v1h-1zm10 0h1v1h-1zm11 0h1v1h-1zm10 0h1v1h-1zm11 0h1v1h-1zm10 0h1v1h-1zm11 0h1v1h-1zm10 0h1v1h-1zm11 0h1v1h-1zm10 0h1v1h-1zm11 0h1v1h-1zm10 0h1v1h-1zm11 0h1v1h-1zm10 0h1v1h-1zm11 0h1v1h-1zm11 0h1v1h-1zm10 0h1v1h-1zm11 0h1v1h-1zm10 0h1v1h-1zm11 0h1v1h-1zm10 0h1v1h-1zm11 0h1v1h-1zm10 0h1v1h-1zm11 0h1v1h-1zm10 0h1v1h-1zm11 0h1v1h-1zm10 0h1v1h-1zm11 0h1v1h-1zm10 0h1v1h-1zm11 0h1v1h-1zm10 0h1v1h-1zm11 0h1v1h-1zm11 0h1v1h-1zm10 0h1v1h-1zm11 0h1v1h-1zm10 0h1v1h-1zm11 0h1v1h-1zm10 0h1v1h-1zm11 0h1v1h-1zm10 0h1v1h-1zm11 0h1v1h-1zm10 0h1v1h-1zm11 0h1v1h-1zM609 662h1v1h-1zm11 0h1v1h-1zm10 0h1v1h-1zm11 0h1v1h-1zm10 0h1v1h-1zm11 0h1v1h-1zm10 0h1v1h-1zm11 0h1v1h-1zm10 0h1v1h-1zm11 0h1v1h-1zm10 0h1v1h-1zm11 0h1v1h-1zm10 0h1v1h-1zm11 0h1v1h-1zm10 0h1v1h-1zm11 0h1v1h-1zm11 0h1v1h-1zm10 0h1v1h-1zm11 0h1v1h-1zm10 0h1v1h-1zm11 0h1v1h-1zm10 0h1v1h-1zm11 0h1v1h-1zm10 0h1v1h-1zm11 0h1v1h-1zm10 0h1v1h-1zm11 0h1v1h-1zm10 0h1v1h-1zm11 0h1v1h-1zm10 0h1v1h-1zm11 0h1v1h-1zm11 0h1v1h-1zm10 0h1v1h-1zm11 0h1v1h-1zm10 0h1v1h-1zm11 0h1v1h-1zm10 0h1v1h-1zm11 0h1v1h-1zm10 0h1v1h-1zm11 0h1v1h-1zm10 0h1v1h-1zm11 0h1v1h-1zm10 0h1v1h-1zm11 0h1v1h-1zm10 0h1v1h-1zm11 0h1v1h-1zm11 0h1v1h-1zm10 0h1v1h-1zm11 0h1v1h-1zm10 0h1v1h-1zm11 0h1v1h-1zm10 0h1v1h-1zm11 0h1v1h-1zm10 0h1v1h-1zm11 0h1v1h-1zm10 0h1v1h-1zm11 0h1v1h-1zm10 0h1v1h-1zm11 0h1v1h-1zm10 0h1v1h-1zm11 0h1v1h-1zm11 0h1v1h-1zm10 0h1v1h-1zm11 0h1v1h-1zm10 0h1v1h-1zm11 0h1v1h-1zm10 0h1v1h-1zm11 0h1v1h-1zm10 0h1v1h-1zm11 0h1v1h-1zm10 0h1v1h-1zm11 0h1v1h-1zm10 0h1v1h-1zm11 0h1v1h-1zm10 0h1v1h-1zm11 0h1v1h-1zm11 0h1v1h-1zm10 0h1v1h-1zm11 0h1v1h-1zm10 0h1v1h-1zm11 0h1v1h-1zm10 0h1v1h-1zm11 0h1v1h-1zm10 0h1v1h-1zm11 0h1v1h-1zm10 0h1v1h-1zm11 0h1v1h-1zm10 0h1v1h-1zm11 0h1v1h-1zm10 0h1v1h-1zm11 0h1v1h-1zm11 0h1v1h-1zm10 0h1v1h-1zm11 0h1v1h-1zm10 0h1v1h-1zm11 0h1v1h-1zm10 0h1v1h-1zm11 0h1v1h-1zm10 0h1v1h-1zm11 0h1v1h-1zm10 0h1v1h-1zm11 0h1v1h-1zm10 0h1v1h-1zm11 0h1v1h-1zm10 0h1v1h-1zm11 0h1v1h-1zm10 0h1v1h-1zm11 0h1v1h-1zm11 0h1v1h-1zm10 0h1v1h-1zm11 0h1v1h-1zm10 0h1v1h-1zm11 0h1v1h-1zm10 0h1v1h-1zm11 0h1v1h-1zm10 0h1v1h-1zm11 0h1v1h-1zm10 0h1v1h-1zm11 0h1v1h-1zM609 672h1v1h-1zm11 0h1v1h-1zm10 0h1v1h-1zm11 0h1v1h-1zm10 0h1v1h-1zm11 0h1v1h-1zm10 0h1v1h-1zm11 0h1v1h-1zm10 0h1v1h-1zm11 0h1v1h-1zm10 0h1v1h-1zm11 0h1v1h-1zm10 0h1v1h-1zm11 0h1v1h-1zm10 0h1v1h-1zm11 0h1v1h-1zm11 0h1v1h-1zm10 0h1v1h-1zm11 0h1v1h-1zm10 0h1v1h-1zm11 0h1v1h-1zm10 0h1v1h-1zm11 0h1v1h-1zm10 0h1v1h-1zm11 0h1v1h-1zm10 0h1v1h-1zm11 0h1v1h-1zm10 0h1v1h-1zm11 0h1v1h-1zm10 0h1v1h-1zm11 0h1v1h-1zm11 0h1v1h-1zm10 0h1v1h-1zm11 0h1v1h-1zm10 0h1v1h-1zm11 0h1v1h-1zm10 0h1v1h-1zm11 0h1v1h-1zm10 0h1v1h-1zm11 0h1v1h-1zm10 0h1v1h-1zm11 0h1v1h-1zm10 0h1v1h-1zm11 0h1v1h-1zm10 0h1v1h-1zm11 0h1v1h-1zm11 0h1v1h-1zm10 0h1v1h-1zm11 0h1v1h-1zm10 0h1v1h-1zm11 0h1v1h-1zm10 0h1v1h-1zm11 0h1v1h-1zm10 0h1v1h-1zm11 0h1v1h-1zm10 0h1v1h-1zm11 0h1v1h-1zm10 0h1v1h-1zm11 0h1v1h-1zm10 0h1v1h-1zm11 0h1v1h-1zm11 0h1v1h-1zm10 0h1v1h-1zm11 0h1v1h-1zm10 0h1v1h-1zm11 0h1v1h-1zm10 0h1v1h-1zm11 0h1v1h-1zm10 0h1v1h-1zm11 0h1v1h-1zm10 0h1v1h-1zm11 0h1v1h-1zm10 0h1v1h-1zm11 0h1v1h-1zm10 0h1v1h-1zm11 0h1v1h-1zm11 0h1v1h-1zm10 0h1v1h-1zm11 0h1v1h-1zm10 0h1v1h-1zm11 0h1v1h-1zm10 0h1v1h-1zm11 0h1v1h-1zm10 0h1v1h-1zm11 0h1v1h-1zm10 0h1v1h-1zm11 0h1v1h-1zm10 0h1v1h-1zm11 0h1v1h-1zm10 0h1v1h-1zm11 0h1v1h-1zm11 0h1v1h-1zm10 0h1v1h-1zm11 0h1v1h-1zm10 0h1v1h-1zm11 0h1v1h-1zm10 0h1v1h-1zm11 0h1v1h-1zm10 0h1v1h-1zm11 0h1v1h-1zm10 0h1v1h-1zm11 0h1v1h-1zm10 0h1v1h-1zm11 0h1v1h-1zm10 0h1v1h-1zm11 0h1v1h-1zm10 0h1v1h-1zm11 0h1v1h-1zm11 0h1v1h-1zm10 0h1v1h-1zm11 0h1v1h-1zm10 0h1v1h-1zm11 0h1v1h-1zm10 0h1v1h-1zm11 0h1v1h-1zm10 0h1v1h-1zm11 0h1v1h-1zm10 0h1v1h-1zm11 0h1v1h-1zM609 683h1v1h-1zm11 0h1v1h-1zm10 0h1v1h-1zm11 0h1v1h-1zm10 0h1v1h-1zm11 0h1v1h-1zm10 0h1v1h-1zm11 0h1v1h-1zm10 0h1v1h-1zm11 0h1v1h-1zm10 0h1v1h-1zm11 0h1v1h-1zm10 0h1v1h-1zm11 0h1v1h-1zm10 0h1v1h-1zm11 0h1v1h-1zm11 0h1v1h-1zm10 0h1v1h-1zm11 0h1v1h-1zm10 0h1v1h-1zm11 0h1v1h-1zm10 0h1v1h-1zm11 0h1v1h-1zm10 0h1v1h-1zm11 0h1v1h-1zm10 0h1v1h-1zm11 0h1v1h-1zm10 0h1v1h-1zm11 0h1v1h-1zm10 0h1v1h-1zm11 0h1v1h-1zm11 0h1v1h-1zm10 0h1v1h-1zm11 0h1v1h-1zm10 0h1v1h-1zm11 0h1v1h-1zm10 0h1v1h-1zm11 0h1v1h-1zm10 0h1v1h-1zm11 0h1v1h-1zm10 0h1v1h-1zm11 0h1v1h-1zm10 0h1v1h-1zm11 0h1v1h-1zm10 0h1v1h-1zm11 0h1v1h-1zm11 0h1v1h-1zm10 0h1v1h-1zm11 0h1v1h-1zm10 0h1v1h-1zm11 0h1v1h-1zm10 0h1v1h-1zm11 0h1v1h-1zm10 0h1v1h-1zm11 0h1v1h-1zm10 0h1v1h-1zm11 0h1v1h-1zm10 0h1v1h-1zm11 0h1v1h-1zm10 0h1v1h-1zm11 0h1v1h-1zm11 0h1v1h-1zm10 0h1v1h-1zm11 0h1v1h-1zm10 0h1v1h-1zm11 0h1v1h-1zm10 0h1v1h-1zm11 0h1v1h-1zm10 0h1v1h-1zm11 0h1v1h-1zm10 0h1v1h-1zm11 0h1v1h-1zm10 0h1v1h-1zm11 0h1v1h-1zm10 0h1v1h-1zm11 0h1v1h-1zm11 0h1v1h-1zm10 0h1v1h-1zm11 0h1v1h-1zm10 0h1v1h-1zm11 0h1v1h-1zm10 0h1v1h-1zm11 0h1v1h-1zm10 0h1v1h-1zm11 0h1v1h-1zm10 0h1v1h-1zm11 0h1v1h-1zm10 0h1v1h-1zm11 0h1v1h-1zm10 0h1v1h-1zm11 0h1v1h-1zm11 0h1v1h-1zm10 0h1v1h-1zm11 0h1v1h-1zm10 0h1v1h-1zm11 0h1v1h-1zm10 0h1v1h-1zm11 0h1v1h-1zm10 0h1v1h-1zm11 0h1v1h-1zm10 0h1v1h-1zm11 0h1v1h-1zm10 0h1v1h-1zm11 0h1v1h-1zm10 0h1v1h-1zm11 0h1v1h-1zm10 0h1v1h-1zm11 0h1v1h-1zm11 0h1v1h-1zm10 0h1v1h-1zm11 0h1v1h-1zm10 0h1v1h-1zm11 0h1v1h-1zm10 0h1v1h-1zm11 0h1v1h-1zm10 0h1v1h-1zm11 0h1v1h-1zm10 0h1v1h-1zm11 0h1v1h-1zM609 693h1v1h-1zm11 0h1v1h-1zm10 0h1v1h-1zm11 0h1v1h-1zm10 0h1v1h-1zm11 0h1v1h-1zm10 0h1v1h-1zm11 0h1v1h-1zm10 0h1v1h-1zm11 0h1v1h-1zm10 0h1v1h-1zm11 0h1v1h-1zm10 0h1v1h-1zm11 0h1v1h-1zm10 0h1v1h-1zm11 0h1v1h-1zm11 0h1v1h-1zm10 0h1v1h-1zm11 0h1v1h-1zm10 0h1v1h-1zm11 0h1v1h-1zm10 0h1v1h-1zm11 0h1v1h-1zm10 0h1v1h-1zm11 0h1v1h-1zm10 0h1v1h-1zm11 0h1v1h-1zm10 0h1v1h-1zm11 0h1v1h-1zm10 0h1v1h-1zm11 0h1v1h-1zm11 0h1v1h-1zm10 0h1v1h-1zm11 0h1v1h-1zm10 0h1v1h-1zm11 0h1v1h-1zm10 0h1v1h-1zm11 0h1v1h-1zm10 0h1v1h-1zm11 0h1v1h-1zm10 0h1v1h-1zm11 0h1v1h-1zm10 0h1v1h-1zm11 0h1v1h-1zm10 0h1v1h-1zm11 0h1v1h-1zm11 0h1v1h-1zm10 0h1v1h-1zm11 0h1v1h-1zm10 0h1v1h-1zm11 0h1v1h-1zm10 0h1v1h-1zm11 0h1v1h-1zm10 0h1v1h-1zm11 0h1v1h-1zm10 0h1v1h-1zm11 0h1v1h-1zm10 0h1v1h-1zm11 0h1v1h-1zm10 0h1v1h-1zm11 0h1v1h-1zm11 0h1v1h-1zm10 0h1v1h-1zm11 0h1v1h-1zm10 0h1v1h-1zm11 0h1v1h-1zm10 0h1v1h-1zm11 0h1v1h-1zm10 0h1v1h-1zm11 0h1v1h-1zm10 0h1v1h-1zm11 0h1v1h-1zm10 0h1v1h-1zm11 0h1v1h-1zm10 0h1v1h-1zm11 0h1v1h-1zm11 0h1v1h-1zm10 0h1v1h-1zm11 0h1v1h-1zm10 0h1v1h-1zm11 0h1v1h-1zm10 0h1v1h-1zm11 0h1v1h-1zm10 0h1v1h-1zm11 0h1v1h-1zm10 0h1v1h-1zm11 0h1v1h-1zm10 0h1v1h-1zm11 0h1v1h-1zm10 0h1v1h-1zm11 0h1v1h-1zm11 0h1v1h-1zm10 0h1v1h-1zm11 0h1v1h-1zm10 0h1v1h-1zm11 0h1v1h-1zm10 0h1v1h-1zm11 0h1v1h-1zm10 0h1v1h-1zm11 0h1v1h-1zm10 0h1v1h-1zm11 0h1v1h-1zm10 0h1v1h-1zm11 0h1v1h-1zm10 0h1v1h-1zm11 0h1v1h-1zm10 0h1v1h-1zm11 0h1v1h-1zm11 0h1v1h-1zm10 0h1v1h-1zm11 0h1v1h-1zm10 0h1v1h-1zm11 0h1v1h-1zm10 0h1v1h-1zm11 0h1v1h-1zm10 0h1v1h-1zm11 0h1v1h-1zm10 0h1v1h-1zm11 0h1v1h-1zM609 704h1v1h-1zm11 0h1v1h-1zm10 0h1v1h-1zm11 0h1v1h-1zm10 0h1v1h-1zm11 0h1v1h-1zm10 0h1v1h-1zm11 0h1v1h-1zm10 0h1v1h-1zm11 0h1v1h-1zm10 0h1v1h-1zm11 0h1v1h-1zm10 0h1v1h-1zm11 0h1v1h-1zm10 0h1v1h-1zm11 0h1v1h-1zm11 0h1v1h-1zm10 0h1v1h-1zm11 0h1v1h-1zm10 0h1v1h-1zm11 0h1v1h-1zm10 0h1v1h-1zm11 0h1v1h-1zm10 0h1v1h-1zm11 0h1v1h-1zm10 0h1v1h-1zm11 0h1v1h-1zm10 0h1v1h-1zm11 0h1v1h-1zm10 0h1v1h-1zm11 0h1v1h-1zm11 0h1v1h-1zm10 0h1v1h-1zm11 0h1v1h-1zm10 0h1v1h-1zm11 0h1v1h-1zm10 0h1v1h-1zm11 0h1v1h-1zm10 0h1v1h-1zm11 0h1v1h-1zm10 0h1v1h-1zm11 0h1v1h-1zm10 0h1v1h-1zm11 0h1v1h-1zm10 0h1v1h-1zm11 0h1v1h-1zm11 0h1v1h-1zm10 0h1v1h-1zm11 0h1v1h-1zm10 0h1v1h-1zm11 0h1v1h-1zm10 0h1v1h-1zm11 0h1v1h-1zm10 0h1v1h-1zm11 0h1v1h-1zm10 0h1v1h-1zm11 0h1v1h-1zm10 0h1v1h-1zm11 0h1v1h-1zm10 0h1v1h-1zm11 0h1v1h-1zm11 0h1v1h-1zm10 0h1v1h-1zm11 0h1v1h-1zm10 0h1v1h-1zm11 0h1v1h-1zm10 0h1v1h-1zm11 0h1v1h-1zm10 0h1v1h-1zm11 0h1v1h-1zm10 0h1v1h-1zm11 0h1v1h-1zm10 0h1v1h-1zm11 0h1v1h-1zm10 0h1v1h-1zm11 0h1v1h-1zm11 0h1v1h-1zm10 0h1v1h-1zm11 0h1v1h-1zm10 0h1v1h-1zm11 0h1v1h-1zm10 0h1v1h-1zm11 0h1v1h-1zm10 0h1v1h-1zm11 0h1v1h-1zm10 0h1v1h-1zm11 0h1v1h-1zm10 0h1v1h-1zm11 0h1v1h-1zm10 0h1v1h-1zm11 0h1v1h-1zm11 0h1v1h-1zm10 0h1v1h-1zm11 0h1v1h-1zm10 0h1v1h-1zm11 0h1v1h-1zm10 0h1v1h-1zm11 0h1v1h-1zm10 0h1v1h-1zm11 0h1v1h-1zm10 0h1v1h-1zm11 0h1v1h-1zm10 0h1v1h-1zm11 0h1v1h-1zm10 0h1v1h-1zm11 0h1v1h-1zm10 0h1v1h-1zm11 0h1v1h-1zm11 0h1v1h-1zm10 0h1v1h-1zm11 0h1v1h-1zm10 0h1v1h-1zm11 0h1v1h-1zm10 0h1v1h-1zm11 0h1v1h-1zm10 0h1v1h-1zm11 0h1v1h-1zm10 0h1v1h-1zm11 0h1v1h-1zM609 714h1v1h-1zm11 0h1v1h-1zm10 0h1v1h-1zm11 0h1v1h-1zm10 0h1v1h-1zm11 0h1v1h-1zm10 0h1v1h-1zm11 0h1v1h-1zm10 0h1v1h-1zm11 0h1v1h-1zm10 0h1v1h-1zm11 0h1v1h-1zm10 0h1v1h-1zm11 0h1v1h-1zm10 0h1v1h-1zm11 0h1v1h-1zm11 0h1v1h-1zm10 0h1v1h-1zm11 0h1v1h-1zm10 0h1v1h-1zm11 0h1v1h-1zm10 0h1v1h-1zm11 0h1v1h-1zm10 0h1v1h-1zm11 0h1v1h-1zm10 0h1v1h-1zm11 0h1v1h-1zm10 0h1v1h-1zm11 0h1v1h-1zm10 0h1v1h-1zm11 0h1v1h-1zm11 0h1v1h-1zm10 0h1v1h-1zm11 0h1v1h-1zm10 0h1v1h-1zm11 0h1v1h-1zm10 0h1v1h-1zm11 0h1v1h-1zm10 0h1v1h-1zm11 0h1v1h-1zm10 0h1v1h-1zm11 0h1v1h-1zm10 0h1v1h-1zm11 0h1v1h-1zm10 0h1v1h-1zm11 0h1v1h-1zm11 0h1v1h-1zm10 0h1v1h-1zm11 0h1v1h-1zm10 0h1v1h-1zm11 0h1v1h-1zm10 0h1v1h-1zm11 0h1v1h-1zm10 0h1v1h-1zm11 0h1v1h-1zm10 0h1v1h-1zm11 0h1v1h-1zm10 0h1v1h-1zm11 0h1v1h-1zm10 0h1v1h-1zm11 0h1v1h-1zm11 0h1v1h-1zm10 0h1v1h-1zm11 0h1v1h-1zm10 0h1v1h-1zm11 0h1v1h-1zm10 0h1v1h-1zm11 0h1v1h-1zm10 0h1v1h-1zm11 0h1v1h-1zm10 0h1v1h-1zm11 0h1v1h-1zm10 0h1v1h-1zm11 0h1v1h-1zm10 0h1v1h-1zm11 0h1v1h-1zm11 0h1v1h-1zm10 0h1v1h-1zm11 0h1v1h-1zm10 0h1v1h-1zm11 0h1v1h-1zm10 0h1v1h-1zm11 0h1v1h-1zm10 0h1v1h-1zm11 0h1v1h-1zm10 0h1v1h-1zm11 0h1v1h-1zm10 0h1v1h-1zm11 0h1v1h-1zm10 0h1v1h-1zm11 0h1v1h-1zm11 0h1v1h-1zm10 0h1v1h-1zm11 0h1v1h-1zm10 0h1v1h-1zm11 0h1v1h-1zm10 0h1v1h-1zm11 0h1v1h-1zm10 0h1v1h-1zm11 0h1v1h-1zm10 0h1v1h-1zm11 0h1v1h-1zm10 0h1v1h-1zm11 0h1v1h-1zm10 0h1v1h-1zm11 0h1v1h-1zm10 0h1v1h-1zm11 0h1v1h-1zm11 0h1v1h-1zm10 0h1v1h-1zm11 0h1v1h-1zm10 0h1v1h-1zm11 0h1v1h-1zm10 0h1v1h-1zm11 0h1v1h-1zm10 0h1v1h-1zm11 0h1v1h-1zm10 0h1v1h-1zm11 0h1v1h-1zM609 725h1v1h-1zm11 0h1v1h-1zm10 0h1v1h-1zm11 0h1v1h-1zm10 0h1v1h-1zm11 0h1v1h-1zm10 0h1v1h-1zm11 0h1v1h-1zm10 0h1v1h-1zm11 0h1v1h-1zm10 0h1v1h-1zm11 0h1v1h-1zm10 0h1v1h-1zm11 0h1v1h-1zm10 0h1v1h-1zm11 0h1v1h-1zm11 0h1v1h-1zm10 0h1v1h-1zm11 0h1v1h-1zm10 0h1v1h-1zm11 0h1v1h-1zm10 0h1v1h-1zm11 0h1v1h-1zm10 0h1v1h-1zm11 0h1v1h-1zm10 0h1v1h-1zm11 0h1v1h-1zm10 0h1v1h-1zm11 0h1v1h-1zm10 0h1v1h-1zm11 0h1v1h-1zm11 0h1v1h-1zm10 0h1v1h-1zm11 0h1v1h-1zm10 0h1v1h-1zm11 0h1v1h-1zm10 0h1v1h-1zm11 0h1v1h-1zm10 0h1v1h-1zm11 0h1v1h-1zm10 0h1v1h-1zm11 0h1v1h-1zm10 0h1v1h-1zm11 0h1v1h-1zm10 0h1v1h-1zm11 0h1v1h-1zm11 0h1v1h-1zm10 0h1v1h-1zm11 0h1v1h-1zm10 0h1v1h-1zm11 0h1v1h-1zm10 0h1v1h-1zm11 0h1v1h-1zm10 0h1v1h-1zm11 0h1v1h-1zm10 0h1v1h-1zm11 0h1v1h-1zm10 0h1v1h-1zm11 0h1v1h-1zm10 0h1v1h-1zm11 0h1v1h-1zm11 0h1v1h-1zm10 0h1v1h-1zm11 0h1v1h-1zm10 0h1v1h-1zm11 0h1v1h-1zm10 0h1v1h-1zm11 0h1v1h-1zm10 0h1v1h-1zm11 0h1v1h-1zm10 0h1v1h-1zm11 0h1v1h-1zm10 0h1v1h-1zm11 0h1v1h-1zm10 0h1v1h-1zm11 0h1v1h-1zm11 0h1v1h-1zm10 0h1v1h-1zm11 0h1v1h-1zm10 0h1v1h-1zm11 0h1v1h-1zm10 0h1v1h-1zm11 0h1v1h-1zm10 0h1v1h-1zm11 0h1v1h-1zm10 0h1v1h-1zm11 0h1v1h-1zm10 0h1v1h-1zm11 0h1v1h-1zm10 0h1v1h-1zm11 0h1v1h-1zm11 0h1v1h-1zm10 0h1v1h-1zm11 0h1v1h-1zm10 0h1v1h-1zm11 0h1v1h-1zm10 0h1v1h-1zm11 0h1v1h-1zm10 0h1v1h-1zm11 0h1v1h-1zm10 0h1v1h-1zm11 0h1v1h-1zm10 0h1v1h-1zm11 0h1v1h-1zm10 0h1v1h-1zm11 0h1v1h-1zm10 0h1v1h-1zm11 0h1v1h-1zm11 0h1v1h-1zm10 0h1v1h-1zm11 0h1v1h-1zm10 0h1v1h-1zm11 0h1v1h-1zm10 0h1v1h-1zm11 0h1v1h-1zm10 0h1v1h-1zm11 0h1v1h-1zm10 0h1v1h-1zm11 0h1v1h-1zM609 735h1v1h-1zm11 0h1v1h-1zm10 0h1v1h-1zm11 0h1v1h-1zm10 0h1v1h-1zm11 0h1v1h-1zm10 0h1v1h-1zm11 0h1v1h-1zm10 0h1v1h-1zm11 0h1v1h-1zm10 0h1v1h-1zm11 0h1v1h-1zm10 0h1v1h-1zm11 0h1v1h-1zm10 0h1v1h-1zm11 0h1v1h-1zm11 0h1v1h-1zm10 0h1v1h-1zm11 0h1v1h-1zm10 0h1v1h-1zm11 0h1v1h-1zm10 0h1v1h-1zm11 0h1v1h-1zm10 0h1v1h-1zm11 0h1v1h-1zm10 0h1v1h-1zm11 0h1v1h-1zm10 0h1v1h-1zm11 0h1v1h-1zm10 0h1v1h-1zm11 0h1v1h-1zm11 0h1v1h-1zm10 0h1v1h-1zm11 0h1v1h-1zm10 0h1v1h-1zm11 0h1v1h-1zm10 0h1v1h-1zm11 0h1v1h-1zm10 0h1v1h-1zm11 0h1v1h-1zm10 0h1v1h-1zm11 0h1v1h-1zm10 0h1v1h-1zm11 0h1v1h-1zm10 0h1v1h-1zm11 0h1v1h-1zm11 0h1v1h-1zm10 0h1v1h-1zm11 0h1v1h-1zm10 0h1v1h-1zm11 0h1v1h-1zm10 0h1v1h-1zm11 0h1v1h-1zm10 0h1v1h-1zm11 0h1v1h-1zm10 0h1v1h-1zm11 0h1v1h-1zm10 0h1v1h-1zm11 0h1v1h-1zm10 0h1v1h-1zm11 0h1v1h-1zm11 0h1v1h-1zm10 0h1v1h-1zm11 0h1v1h-1zm10 0h1v1h-1zm11 0h1v1h-1zm10 0h1v1h-1zm11 0h1v1h-1zm10 0h1v1h-1zm11 0h1v1h-1zm10 0h1v1h-1zm11 0h1v1h-1zm10 0h1v1h-1zm11 0h1v1h-1zm10 0h1v1h-1zm11 0h1v1h-1zm11 0h1v1h-1zm10 0h1v1h-1zm11 0h1v1h-1zm10 0h1v1h-1zm11 0h1v1h-1zm10 0h1v1h-1zm11 0h1v1h-1zm10 0h1v1h-1zm11 0h1v1h-1zm10 0h1v1h-1zm11 0h1v1h-1zm10 0h1v1h-1zm11 0h1v1h-1zm10 0h1v1h-1zm11 0h1v1h-1zm11 0h1v1h-1zm10 0h1v1h-1zm11 0h1v1h-1zm10 0h1v1h-1zm11 0h1v1h-1zm10 0h1v1h-1zm11 0h1v1h-1zm10 0h1v1h-1zm11 0h1v1h-1zm10 0h1v1h-1zm11 0h1v1h-1zm10 0h1v1h-1zm11 0h1v1h-1zm10 0h1v1h-1zm11 0h1v1h-1zm10 0h1v1h-1zm11 0h1v1h-1zm11 0h1v1h-1zm10 0h1v1h-1zm11 0h1v1h-1zm10 0h1v1h-1zm11 0h1v1h-1zm10 0h1v1h-1zm11 0h1v1h-1zm10 0h1v1h-1zm11 0h1v1h-1zm10 0h1v1h-1zm11 0h1v1h-1zM609 746h1v1h-1zm11 0h1v1h-1zm10 0h1v1h-1zm11 0h1v1h-1zm10 0h1v1h-1zm11 0h1v1h-1zm10 0h1v1h-1zm11 0h1v1h-1zm10 0h1v1h-1zm11 0h1v1h-1zm10 0h1v1h-1zm11 0h1v1h-1zm10 0h1v1h-1zm11 0h1v1h-1zm10 0h1v1h-1zm11 0h1v1h-1zm11 0h1v1h-1zm10 0h1v1h-1zm11 0h1v1h-1zm10 0h1v1h-1zm11 0h1v1h-1zm10 0h1v1h-1zm11 0h1v1h-1zm10 0h1v1h-1zm11 0h1v1h-1zm10 0h1v1h-1zm11 0h1v1h-1zm10 0h1v1h-1zm11 0h1v1h-1zm10 0h1v1h-1zm11 0h1v1h-1zm11 0h1v1h-1zm10 0h1v1h-1zm11 0h1v1h-1zm10 0h1v1h-1zm11 0h1v1h-1zm10 0h1v1h-1zm11 0h1v1h-1zm10 0h1v1h-1zm11 0h1v1h-1zm10 0h1v1h-1zm11 0h1v1h-1zm10 0h1v1h-1zm11 0h1v1h-1zm10 0h1v1h-1zm11 0h1v1h-1zm11 0h1v1h-1zm10 0h1v1h-1zm11 0h1v1h-1zm10 0h1v1h-1zm11 0h1v1h-1zm10 0h1v1h-1zm11 0h1v1h-1zm10 0h1v1h-1zm11 0h1v1h-1zm10 0h1v1h-1zm11 0h1v1h-1zm10 0h1v1h-1zm11 0h1v1h-1zm10 0h1v1h-1zm11 0h1v1h-1zm11 0h1v1h-1zm10 0h1v1h-1zm11 0h1v1h-1zm10 0h1v1h-1zm11 0h1v1h-1zm10 0h1v1h-1zm11 0h1v1h-1zm10 0h1v1h-1zm11 0h1v1h-1zm10 0h1v1h-1zm11 0h1v1h-1zm10 0h1v1h-1zm11 0h1v1h-1zm10 0h1v1h-1zm11 0h1v1h-1zm11 0h1v1h-1zm10 0h1v1h-1zm11 0h1v1h-1zm10 0h1v1h-1zm11 0h1v1h-1zm10 0h1v1h-1zm11 0h1v1h-1zm10 0h1v1h-1zm11 0h1v1h-1zm10 0h1v1h-1zm11 0h1v1h-1zm10 0h1v1h-1zm11 0h1v1h-1zm10 0h1v1h-1zm11 0h1v1h-1zm11 0h1v1h-1zm10 0h1v1h-1zm11 0h1v1h-1zm10 0h1v1h-1zm11 0h1v1h-1zm10 0h1v1h-1zm11 0h1v1h-1zm10 0h1v1h-1zm11 0h1v1h-1zm10 0h1v1h-1zm11 0h1v1h-1zm10 0h1v1h-1zm11 0h1v1h-1zm10 0h1v1h-1zm11 0h1v1h-1zm10 0h1v1h-1zm11 0h1v1h-1zm11 0h1v1h-1zm10 0h1v1h-1zm11 0h1v1h-1zm10 0h1v1h-1zm11 0h1v1h-1zm10 0h1v1h-1zm11 0h1v1h-1zm10 0h1v1h-1zm11 0h1v1h-1zm10 0h1v1h-1zm11 0h1v1h-1zM609 756h1v1h-1zm11 0h1v1h-1zm10 0h1v1h-1zm11 0h1v1h-1zm10 0h1v1h-1zm11 0h1v1h-1zm10 0h1v1h-1zm11 0h1v1h-1zm10 0h1v1h-1zm11 0h1v1h-1zm10 0h1v1h-1zm11 0h1v1h-1zm10 0h1v1h-1zm11 0h1v1h-1zm10 0h1v1h-1zm11 0h1v1h-1zm11 0h1v1h-1zm10 0h1v1h-1zm11 0h1v1h-1zm10 0h1v1h-1zm11 0h1v1h-1zm10 0h1v1h-1zm11 0h1v1h-1zm10 0h1v1h-1zm11 0h1v1h-1zm10 0h1v1h-1zm11 0h1v1h-1zm10 0h1v1h-1zm11 0h1v1h-1zm10 0h1v1h-1zm11 0h1v1h-1zm11 0h1v1h-1zm10 0h1v1h-1zm11 0h1v1h-1zm10 0h1v1h-1zm11 0h1v1h-1zm10 0h1v1h-1zm11 0h1v1h-1zm10 0h1v1h-1zm11 0h1v1h-1zm10 0h1v1h-1zm11 0h1v1h-1zm10 0h1v1h-1zm11 0h1v1h-1zm10 0h1v1h-1zm11 0h1v1h-1zm11 0h1v1h-1zm10 0h1v1h-1zm11 0h1v1h-1zm10 0h1v1h-1zm11 0h1v1h-1zm10 0h1v1h-1zm11 0h1v1h-1zm10 0h1v1h-1zm11 0h1v1h-1zm10 0h1v1h-1zm11 0h1v1h-1zm10 0h1v1h-1zm11 0h1v1h-1zm10 0h1v1h-1zm11 0h1v1h-1zm11 0h1v1h-1zm10 0h1v1h-1zm11 0h1v1h-1zm10 0h1v1h-1zm11 0h1v1h-1zm10 0h1v1h-1zm11 0h1v1h-1zm10 0h1v1h-1zm11 0h1v1h-1zm10 0h1v1h-1zm11 0h1v1h-1zm10 0h1v1h-1zm11 0h1v1h-1zm10 0h1v1h-1zm11 0h1v1h-1zm11 0h1v1h-1zm10 0h1v1h-1zm11 0h1v1h-1zm10 0h1v1h-1zm11 0h1v1h-1zm10 0h1v1h-1zm11 0h1v1h-1zm10 0h1v1h-1zm11 0h1v1h-1zm10 0h1v1h-1zm11 0h1v1h-1zm10 0h1v1h-1zm11 0h1v1h-1zm10 0h1v1h-1zm11 0h1v1h-1zm11 0h1v1h-1zm10 0h1v1h-1zm11 0h1v1h-1zm10 0h1v1h-1zm11 0h1v1h-1zm10 0h1v1h-1zm11 0h1v1h-1zm10 0h1v1h-1zm11 0h1v1h-1zm10 0h1v1h-1zm11 0h1v1h-1zm10 0h1v1h-1zm11 0h1v1h-1zm10 0h1v1h-1zm11 0h1v1h-1zm10 0h1v1h-1zm11 0h1v1h-1zm11 0h1v1h-1zm10 0h1v1h-1zm11 0h1v1h-1zm10 0h1v1h-1zm11 0h1v1h-1zm10 0h1v1h-1zm11 0h1v1h-1zm10 0h1v1h-1zm11 0h1v1h-1zm10 0h1v1h-1zm11 0h1v1h-1zM609 767h1v1h-1zm11 0h1v1h-1zm10 0h1v1h-1zm11 0h1v1h-1zm10 0h1v1h-1zm11 0h1v1h-1zm10 0h1v1h-1zm11 0h1v1h-1zm10 0h1v1h-1zm11 0h1v1h-1zm10 0h1v1h-1zm11 0h1v1h-1zm10 0h1v1h-1zm11 0h1v1h-1zm10 0h1v1h-1zm11 0h1v1h-1zm11 0h1v1h-1zm10 0h1v1h-1zm11 0h1v1h-1zm10 0h1v1h-1zm11 0h1v1h-1zm10 0h1v1h-1zm11 0h1v1h-1zm10 0h1v1h-1zm11 0h1v1h-1zm10 0h1v1h-1zm11 0h1v1h-1zm10 0h1v1h-1zm11 0h1v1h-1zm10 0h1v1h-1zm11 0h1v1h-1zm11 0h1v1h-1zm10 0h1v1h-1zm11 0h1v1h-1zm10 0h1v1h-1zm11 0h1v1h-1zm10 0h1v1h-1zm11 0h1v1h-1zm10 0h1v1h-1zm11 0h1v1h-1zm10 0h1v1h-1zm11 0h1v1h-1zm10 0h1v1h-1zm11 0h1v1h-1zm10 0h1v1h-1zm11 0h1v1h-1zm11 0h1v1h-1zm10 0h1v1h-1zm11 0h1v1h-1zm10 0h1v1h-1zm11 0h1v1h-1zm10 0h1v1h-1zm11 0h1v1h-1zm10 0h1v1h-1zm11 0h1v1h-1zm10 0h1v1h-1zm11 0h1v1h-1zm10 0h1v1h-1zm11 0h1v1h-1zm10 0h1v1h-1zm11 0h1v1h-1zm11 0h1v1h-1zm10 0h1v1h-1zm11 0h1v1h-1zm10 0h1v1h-1zm11 0h1v1h-1zm10 0h1v1h-1zm11 0h1v1h-1zm10 0h1v1h-1zm11 0h1v1h-1zm10 0h1v1h-1zm11 0h1v1h-1zm10 0h1v1h-1zm11 0h1v1h-1zm10 0h1v1h-1zm11 0h1v1h-1zm11 0h1v1h-1zm10 0h1v1h-1zm11 0h1v1h-1zm10 0h1v1h-1zm11 0h1v1h-1zm10 0h1v1h-1zm11 0h1v1h-1zm10 0h1v1h-1zm11 0h1v1h-1zm10 0h1v1h-1zm11 0h1v1h-1zm10 0h1v1h-1zm11 0h1v1h-1zm10 0h1v1h-1zm11 0h1v1h-1zm11 0h1v1h-1zm10 0h1v1h-1zm11 0h1v1h-1zm10 0h1v1h-1zm11 0h1v1h-1zm10 0h1v1h-1zm11 0h1v1h-1zm10 0h1v1h-1zm11 0h1v1h-1zm10 0h1v1h-1zm11 0h1v1h-1zm10 0h1v1h-1zm11 0h1v1h-1zm10 0h1v1h-1zm11 0h1v1h-1zm10 0h1v1h-1zm11 0h1v1h-1zm11 0h1v1h-1zm10 0h1v1h-1zm11 0h1v1h-1zm10 0h1v1h-1zm11 0h1v1h-1zm10 0h1v1h-1zm11 0h1v1h-1zm10 0h1v1h-1zm11 0h1v1h-1zm10 0h1v1h-1zm11 0h1v1h-1zM609 777h1v1h-1zm11 0h1v1h-1zm10 0h1v1h-1zm11 0h1v1h-1zm10 0h1v1h-1zm11 0h1v1h-1zm10 0h1v1h-1zm11 0h1v1h-1zm10 0h1v1h-1zm11 0h1v1h-1zm10 0h1v1h-1zm11 0h1v1h-1zm10 0h1v1h-1zm11 0h1v1h-1zm10 0h1v1h-1zm11 0h1v1h-1zm11 0h1v1h-1zm10 0h1v1h-1zm11 0h1v1h-1zm10 0h1v1h-1zm11 0h1v1h-1zm10 0h1v1h-1zm11 0h1v1h-1zm10 0h1v1h-1zm11 0h1v1h-1zm10 0h1v1h-1zm11 0h1v1h-1zm10 0h1v1h-1zm11 0h1v1h-1zm10 0h1v1h-1zm11 0h1v1h-1zm11 0h1v1h-1zm10 0h1v1h-1zm11 0h1v1h-1zm10 0h1v1h-1zm11 0h1v1h-1zm10 0h1v1h-1zm11 0h1v1h-1zm10 0h1v1h-1zm11 0h1v1h-1zm10 0h1v1h-1zm11 0h1v1h-1zm10 0h1v1h-1zm11 0h1v1h-1zm10 0h1v1h-1zm11 0h1v1h-1zm11 0h1v1h-1zm10 0h1v1h-1zm11 0h1v1h-1zm10 0h1v1h-1zm11 0h1v1h-1zm10 0h1v1h-1zm11 0h1v1h-1zm10 0h1v1h-1zm11 0h1v1h-1zm10 0h1v1h-1zm11 0h1v1h-1zm10 0h1v1h-1zm11 0h1v1h-1zm10 0h1v1h-1zm11 0h1v1h-1zm11 0h1v1h-1zm10 0h1v1h-1zm11 0h1v1h-1zm10 0h1v1h-1zm11 0h1v1h-1zm10 0h1v1h-1zm11 0h1v1h-1zm10 0h1v1h-1zm11 0h1v1h-1zm10 0h1v1h-1zm11 0h1v1h-1zm10 0h1v1h-1zm11 0h1v1h-1zm10 0h1v1h-1zm11 0h1v1h-1zm11 0h1v1h-1zm10 0h1v1h-1zm11 0h1v1h-1zm10 0h1v1h-1zm11 0h1v1h-1zm10 0h1v1h-1zm11 0h1v1h-1zm10 0h1v1h-1zm11 0h1v1h-1zm10 0h1v1h-1zm11 0h1v1h-1zm10 0h1v1h-1zm11 0h1v1h-1zm10 0h1v1h-1zm11 0h1v1h-1zm11 0h1v1h-1zm10 0h1v1h-1zm11 0h1v1h-1zm10 0h1v1h-1zm11 0h1v1h-1zm10 0h1v1h-1zm11 0h1v1h-1zm10 0h1v1h-1zm11 0h1v1h-1zm10 0h1v1h-1zm11 0h1v1h-1zm10 0h1v1h-1zm11 0h1v1h-1zm10 0h1v1h-1zm11 0h1v1h-1zm10 0h1v1h-1zm11 0h1v1h-1zm11 0h1v1h-1zm10 0h1v1h-1zm11 0h1v1h-1zm10 0h1v1h-1zm11 0h1v1h-1zm10 0h1v1h-1zm11 0h1v1h-1zm10 0h1v1h-1zm11 0h1v1h-1zm10 0h1v1h-1zm11 0h1v1h-1zM609 788h1v1h-1zm11 0h1v1h-1zm10 0h1v1h-1zm11 0h1v1h-1zm10 0h1v1h-1zm11 0h1v1h-1zm10 0h1v1h-1zm11 0h1v1h-1zm10 0h1v1h-1zm11 0h1v1h-1zm10 0h1v1h-1zm11 0h1v1h-1zm10 0h1v1h-1zm11 0h1v1h-1zm10 0h1v1h-1zm11 0h1v1h-1zm11 0h1v1h-1zm10 0h1v1h-1zm11 0h1v1h-1zm10 0h1v1h-1zm11 0h1v1h-1zm10 0h1v1h-1zm11 0h1v1h-1zm10 0h1v1h-1zm11 0h1v1h-1zm10 0h1v1h-1zm11 0h1v1h-1zm10 0h1v1h-1zm11 0h1v1h-1zm10 0h1v1h-1zm11 0h1v1h-1zm11 0h1v1h-1zm10 0h1v1h-1zm11 0h1v1h-1zm10 0h1v1h-1zm11 0h1v1h-1zm10 0h1v1h-1zm11 0h1v1h-1zm10 0h1v1h-1zm11 0h1v1h-1zm10 0h1v1h-1zm11 0h1v1h-1zm10 0h1v1h-1zm11 0h1v1h-1zm10 0h1v1h-1zm11 0h1v1h-1zm11 0h1v1h-1zm10 0h1v1h-1zm11 0h1v1h-1zm10 0h1v1h-1zm11 0h1v1h-1zm10 0h1v1h-1zm11 0h1v1h-1zm10 0h1v1h-1zm11 0h1v1h-1zm10 0h1v1h-1zm11 0h1v1h-1zm10 0h1v1h-1zm11 0h1v1h-1zm10 0h1v1h-1zm11 0h1v1h-1zm11 0h1v1h-1zm10 0h1v1h-1zm11 0h1v1h-1zm10 0h1v1h-1zm11 0h1v1h-1zm10 0h1v1h-1zm11 0h1v1h-1zm10 0h1v1h-1zm11 0h1v1h-1zm10 0h1v1h-1zm11 0h1v1h-1zm10 0h1v1h-1zm11 0h1v1h-1zm10 0h1v1h-1zm11 0h1v1h-1zm11 0h1v1h-1zm10 0h1v1h-1zm11 0h1v1h-1zm10 0h1v1h-1zm11 0h1v1h-1zm10 0h1v1h-1zm11 0h1v1h-1zm10 0h1v1h-1zm11 0h1v1h-1zm10 0h1v1h-1zm11 0h1v1h-1zm10 0h1v1h-1zm11 0h1v1h-1zm10 0h1v1h-1zm11 0h1v1h-1zm11 0h1v1h-1zm10 0h1v1h-1zm11 0h1v1h-1zm10 0h1v1h-1zm11 0h1v1h-1zm10 0h1v1h-1zm11 0h1v1h-1zm10 0h1v1h-1zm11 0h1v1h-1zm10 0h1v1h-1zm11 0h1v1h-1zm10 0h1v1h-1zm11 0h1v1h-1zm10 0h1v1h-1zm11 0h1v1h-1zm10 0h1v1h-1zm11 0h1v1h-1zm11 0h1v1h-1zm10 0h1v1h-1zm11 0h1v1h-1zm10 0h1v1h-1zm11 0h1v1h-1zm10 0h1v1h-1zm11 0h1v1h-1zm10 0h1v1h-1zm11 0h1v1h-1zm10 0h1v1h-1zm11 0h1v1h-1zM609 798h1v1h-1zm11 0h1v1h-1zm10 0h1v1h-1zm11 0h1v1h-1zm10 0h1v1h-1zm11 0h1v1h-1zm10 0h1v1h-1zm11 0h1v1h-1zm10 0h1v1h-1zm11 0h1v1h-1zm10 0h1v1h-1zm11 0h1v1h-1zm10 0h1v1h-1zm11 0h1v1h-1zm10 0h1v1h-1zm11 0h1v1h-1zm11 0h1v1h-1zm10 0h1v1h-1zm11 0h1v1h-1zm10 0h1v1h-1zm11 0h1v1h-1zm10 0h1v1h-1zm11 0h1v1h-1zm10 0h1v1h-1zm11 0h1v1h-1zm10 0h1v1h-1zm11 0h1v1h-1zm10 0h1v1h-1zm11 0h1v1h-1zm10 0h1v1h-1zm11 0h1v1h-1zm11 0h1v1h-1zm10 0h1v1h-1zm11 0h1v1h-1zm10 0h1v1h-1zm11 0h1v1h-1zm10 0h1v1h-1zm11 0h1v1h-1zm10 0h1v1h-1zm11 0h1v1h-1zm10 0h1v1h-1zm11 0h1v1h-1zm10 0h1v1h-1zm11 0h1v1h-1zm10 0h1v1h-1zm11 0h1v1h-1zm11 0h1v1h-1zm10 0h1v1h-1zm11 0h1v1h-1zm10 0h1v1h-1zm11 0h1v1h-1zm10 0h1v1h-1zm11 0h1v1h-1zm10 0h1v1h-1zm11 0h1v1h-1zm10 0h1v1h-1zm11 0h1v1h-1zm10 0h1v1h-1zm11 0h1v1h-1zm10 0h1v1h-1zm11 0h1v1h-1zm11 0h1v1h-1zm10 0h1v1h-1zm11 0h1v1h-1zm10 0h1v1h-1zm11 0h1v1h-1zm10 0h1v1h-1zm11 0h1v1h-1zm10 0h1v1h-1zm11 0h1v1h-1zm10 0h1v1h-1zm11 0h1v1h-1zm10 0h1v1h-1zm11 0h1v1h-1zm10 0h1v1h-1zm11 0h1v1h-1zm11 0h1v1h-1zm10 0h1v1h-1zm11 0h1v1h-1zm10 0h1v1h-1zm11 0h1v1h-1zm10 0h1v1h-1zm11 0h1v1h-1zm10 0h1v1h-1zm11 0h1v1h-1zm10 0h1v1h-1zm11 0h1v1h-1zm10 0h1v1h-1zm11 0h1v1h-1zm10 0h1v1h-1zm11 0h1v1h-1zm11 0h1v1h-1zm10 0h1v1h-1zm11 0h1v1h-1zm10 0h1v1h-1zm11 0h1v1h-1zm10 0h1v1h-1zm11 0h1v1h-1zm10 0h1v1h-1zm11 0h1v1h-1zm10 0h1v1h-1zm11 0h1v1h-1zm10 0h1v1h-1zm11 0h1v1h-1zm10 0h1v1h-1zm11 0h1v1h-1zm10 0h1v1h-1zm11 0h1v1h-1zm11 0h1v1h-1zm10 0h1v1h-1zm11 0h1v1h-1zm10 0h1v1h-1zm11 0h1v1h-1zm10 0h1v1h-1zm11 0h1v1h-1zm10 0h1v1h-1zm11 0h1v1h-1zm10 0h1v1h-1zm11 0h1v1h-1zM609 809h1v1h-1zm11 0h1v1h-1zm10 0h1v1h-1zm11 0h1v1h-1zm10 0h1v1h-1zm11 0h1v1h-1zm10 0h1v1h-1zm11 0h1v1h-1zm10 0h1v1h-1zm11 0h1v1h-1zm10 0h1v1h-1zm11 0h1v1h-1zm10 0h1v1h-1zm11 0h1v1h-1zm10 0h1v1h-1zm11 0h1v1h-1zm11 0h1v1h-1zm10 0h1v1h-1zm11 0h1v1h-1zm10 0h1v1h-1zm11 0h1v1h-1zm10 0h1v1h-1zm11 0h1v1h-1zm10 0h1v1h-1zm11 0h1v1h-1zm10 0h1v1h-1zm11 0h1v1h-1zm10 0h1v1h-1zm11 0h1v1h-1zm10 0h1v1h-1zm11 0h1v1h-1zm11 0h1v1h-1zm10 0h1v1h-1zm11 0h1v1h-1zm10 0h1v1h-1zm11 0h1v1h-1zm10 0h1v1h-1zm11 0h1v1h-1zm10 0h1v1h-1zm11 0h1v1h-1zm10 0h1v1h-1zm11 0h1v1h-1zm10 0h1v1h-1zm11 0h1v1h-1zm10 0h1v1h-1zm11 0h1v1h-1zm11 0h1v1h-1zm10 0h1v1h-1zm11 0h1v1h-1zm10 0h1v1h-1zm11 0h1v1h-1zm10 0h1v1h-1zm11 0h1v1h-1zm10 0h1v1h-1zm11 0h1v1h-1zm10 0h1v1h-1zm11 0h1v1h-1zm10 0h1v1h-1zm11 0h1v1h-1zm10 0h1v1h-1zm11 0h1v1h-1zm11 0h1v1h-1zm10 0h1v1h-1zm11 0h1v1h-1zm10 0h1v1h-1zm11 0h1v1h-1zm10 0h1v1h-1zm11 0h1v1h-1zm10 0h1v1h-1zm11 0h1v1h-1zm10 0h1v1h-1zm11 0h1v1h-1zm10 0h1v1h-1zm11 0h1v1h-1zm10 0h1v1h-1zm11 0h1v1h-1zm11 0h1v1h-1zm10 0h1v1h-1zm11 0h1v1h-1zm10 0h1v1h-1zm11 0h1v1h-1zm10 0h1v1h-1zm11 0h1v1h-1zm10 0h1v1h-1zm11 0h1v1h-1zm10 0h1v1h-1zm11 0h1v1h-1zm10 0h1v1h-1zm11 0h1v1h-1zm10 0h1v1h-1zm11 0h1v1h-1zm11 0h1v1h-1zm10 0h1v1h-1zm11 0h1v1h-1zm10 0h1v1h-1zm11 0h1v1h-1zm10 0h1v1h-1zm11 0h1v1h-1zm10 0h1v1h-1zm11 0h1v1h-1zm10 0h1v1h-1zm11 0h1v1h-1zm10 0h1v1h-1zm11 0h1v1h-1zm10 0h1v1h-1zm11 0h1v1h-1zm10 0h1v1h-1zm11 0h1v1h-1zm11 0h1v1h-1zm10 0h1v1h-1zm11 0h1v1h-1zm10 0h1v1h-1zm11 0h1v1h-1zm10 0h1v1h-1zm11 0h1v1h-1zm10 0h1v1h-1zm11 0h1v1h-1zm10 0h1v1h-1zm11 0h1v1h-1zM609 820h1v1h-1zm11 0h1v1h-1zm10 0h1v1h-1zm11 0h1v1h-1zm10 0h1v1h-1zm11 0h1v1h-1zm10 0h1v1h-1zm11 0h1v1h-1zm10 0h1v1h-1zm11 0h1v1h-1zm10 0h1v1h-1zm11 0h1v1h-1zm10 0h1v1h-1zm11 0h1v1h-1zm10 0h1v1h-1zm11 0h1v1h-1zm11 0h1v1h-1zm10 0h1v1h-1zm11 0h1v1h-1zm10 0h1v1h-1zm11 0h1v1h-1zm10 0h1v1h-1zm11 0h1v1h-1zm10 0h1v1h-1zm11 0h1v1h-1zm10 0h1v1h-1zm11 0h1v1h-1zm10 0h1v1h-1zm11 0h1v1h-1zm10 0h1v1h-1zm11 0h1v1h-1zm11 0h1v1h-1zm10 0h1v1h-1zm11 0h1v1h-1zm10 0h1v1h-1zm11 0h1v1h-1zm10 0h1v1h-1zm11 0h1v1h-1zm10 0h1v1h-1zm11 0h1v1h-1zm10 0h1v1h-1zm11 0h1v1h-1zm10 0h1v1h-1zm11 0h1v1h-1zm10 0h1v1h-1zm11 0h1v1h-1zm11 0h1v1h-1zm10 0h1v1h-1zm11 0h1v1h-1zm10 0h1v1h-1zm11 0h1v1h-1zm10 0h1v1h-1zm11 0h1v1h-1zm10 0h1v1h-1zm11 0h1v1h-1zm10 0h1v1h-1zm11 0h1v1h-1zm10 0h1v1h-1zm11 0h1v1h-1zm10 0h1v1h-1zm11 0h1v1h-1zm11 0h1v1h-1zm10 0h1v1h-1zm11 0h1v1h-1zm10 0h1v1h-1zm11 0h1v1h-1zm10 0h1v1h-1zm11 0h1v1h-1zm10 0h1v1h-1zm11 0h1v1h-1zm10 0h1v1h-1zm11 0h1v1h-1zm10 0h1v1h-1zm11 0h1v1h-1zm10 0h1v1h-1zm11 0h1v1h-1zm11 0h1v1h-1zm10 0h1v1h-1zm11 0h1v1h-1zm10 0h1v1h-1zm11 0h1v1h-1zm10 0h1v1h-1zm11 0h1v1h-1zm10 0h1v1h-1zm11 0h1v1h-1zm10 0h1v1h-1zm11 0h1v1h-1zm10 0h1v1h-1zm11 0h1v1h-1zm10 0h1v1h-1zm11 0h1v1h-1zm11 0h1v1h-1zm10 0h1v1h-1zm11 0h1v1h-1zm10 0h1v1h-1zm11 0h1v1h-1zm10 0h1v1h-1zm11 0h1v1h-1zm10 0h1v1h-1zm11 0h1v1h-1zm10 0h1v1h-1zm11 0h1v1h-1zm10 0h1v1h-1zm11 0h1v1h-1zm10 0h1v1h-1zm11 0h1v1h-1zm10 0h1v1h-1zm11 0h1v1h-1zm11 0h1v1h-1zm10 0h1v1h-1zm11 0h1v1h-1zm10 0h1v1h-1zm11 0h1v1h-1zm10 0h1v1h-1zm11 0h1v1h-1zm10 0h1v1h-1zm11 0h1v1h-1zm10 0h1v1h-1zm11 0h1v1h-1zM609 830h1v1h-1zm11 0h1v1h-1zm10 0h1v1h-1zm11 0h1v1h-1zm10 0h1v1h-1zm11 0h1v1h-1zm10 0h1v1h-1zm11 0h1v1h-1zm10 0h1v1h-1zm11 0h1v1h-1zm10 0h1v1h-1zm11 0h1v1h-1zm10 0h1v1h-1zm11 0h1v1h-1zm10 0h1v1h-1zm11 0h1v1h-1zm11 0h1v1h-1zm10 0h1v1h-1zm11 0h1v1h-1zm10 0h1v1h-1zm11 0h1v1h-1zm10 0h1v1h-1zm11 0h1v1h-1zm10 0h1v1h-1zm11 0h1v1h-1zm10 0h1v1h-1zm11 0h1v1h-1zm10 0h1v1h-1zm11 0h1v1h-1zm10 0h1v1h-1zm11 0h1v1h-1zm11 0h1v1h-1zm10 0h1v1h-1zm11 0h1v1h-1zm10 0h1v1h-1zm11 0h1v1h-1zm10 0h1v1h-1zm11 0h1v1h-1zm10 0h1v1h-1zm11 0h1v1h-1zm10 0h1v1h-1zm11 0h1v1h-1zm10 0h1v1h-1zm11 0h1v1h-1zm10 0h1v1h-1zm11 0h1v1h-1zm11 0h1v1h-1zm10 0h1v1h-1zm11 0h1v1h-1zm10 0h1v1h-1zm11 0h1v1h-1zm10 0h1v1h-1zm11 0h1v1h-1zm10 0h1v1h-1zm11 0h1v1h-1zm10 0h1v1h-1zm11 0h1v1h-1zm10 0h1v1h-1zm11 0h1v1h-1zm10 0h1v1h-1zm11 0h1v1h-1zm11 0h1v1h-1zm10 0h1v1h-1zm11 0h1v1h-1zm10 0h1v1h-1zm11 0h1v1h-1zm10 0h1v1h-1zm11 0h1v1h-1zm10 0h1v1h-1zm11 0h1v1h-1zm10 0h1v1h-1zm11 0h1v1h-1zm10 0h1v1h-1zm11 0h1v1h-1zm10 0h1v1h-1zm11 0h1v1h-1zm11 0h1v1h-1zm10 0h1v1h-1zm11 0h1v1h-1zm10 0h1v1h-1zm11 0h1v1h-1zm10 0h1v1h-1zm11 0h1v1h-1zm10 0h1v1h-1zm11 0h1v1h-1zm10 0h1v1h-1zm11 0h1v1h-1zm10 0h1v1h-1zm11 0h1v1h-1zm10 0h1v1h-1zm11 0h1v1h-1zm11 0h1v1h-1zm10 0h1v1h-1zm11 0h1v1h-1zm10 0h1v1h-1zm11 0h1v1h-1zm10 0h1v1h-1zm11 0h1v1h-1zm10 0h1v1h-1zm11 0h1v1h-1zm10 0h1v1h-1zm11 0h1v1h-1zm10 0h1v1h-1zm11 0h1v1h-1zm10 0h1v1h-1zm11 0h1v1h-1zm10 0h1v1h-1zm11 0h1v1h-1zm11 0h1v1h-1zm10 0h1v1h-1zm11 0h1v1h-1zm10 0h1v1h-1zm11 0h1v1h-1zm10 0h1v1h-1zm11 0h1v1h-1zm10 0h1v1h-1zm11 0h1v1h-1zm10 0h1v1h-1zm11 0h1v1h-1zM609 841h1v1h-1zm11 0h1v1h-1zm10 0h1v1h-1zm11 0h1v1h-1zm10 0h1v1h-1zm11 0h1v1h-1zm10 0h1v1h-1zm11 0h1v1h-1zm10 0h1v1h-1zm11 0h1v1h-1zm10 0h1v1h-1zm11 0h1v1h-1zm10 0h1v1h-1zm11 0h1v1h-1zm10 0h1v1h-1zm11 0h1v1h-1zm11 0h1v1h-1zm10 0h1v1h-1zm11 0h1v1h-1zm10 0h1v1h-1zm11 0h1v1h-1zm10 0h1v1h-1zm11 0h1v1h-1zm10 0h1v1h-1zm11 0h1v1h-1zm10 0h1v1h-1zm11 0h1v1h-1zm10 0h1v1h-1zm11 0h1v1h-1zm10 0h1v1h-1zm11 0h1v1h-1zm11 0h1v1h-1zm10 0h1v1h-1zm11 0h1v1h-1zm10 0h1v1h-1zm11 0h1v1h-1zm10 0h1v1h-1zm11 0h1v1h-1zm10 0h1v1h-1zm11 0h1v1h-1zm10 0h1v1h-1zm11 0h1v1h-1zm10 0h1v1h-1zm11 0h1v1h-1zm10 0h1v1h-1zm11 0h1v1h-1zm11 0h1v1h-1zm10 0h1v1h-1zm11 0h1v1h-1zm10 0h1v1h-1zm11 0h1v1h-1zm10 0h1v1h-1zm11 0h1v1h-1zm10 0h1v1h-1zm11 0h1v1h-1zm10 0h1v1h-1zm11 0h1v1h-1zm10 0h1v1h-1zm11 0h1v1h-1zm10 0h1v1h-1zm11 0h1v1h-1zm11 0h1v1h-1zm10 0h1v1h-1zm11 0h1v1h-1zm10 0h1v1h-1zm11 0h1v1h-1zm10 0h1v1h-1zm11 0h1v1h-1zm10 0h1v1h-1zm11 0h1v1h-1zm10 0h1v1h-1zm11 0h1v1h-1zm10 0h1v1h-1zm11 0h1v1h-1zm10 0h1v1h-1zm11 0h1v1h-1zm11 0h1v1h-1zm10 0h1v1h-1zm11 0h1v1h-1zm10 0h1v1h-1zm11 0h1v1h-1zm10 0h1v1h-1zm11 0h1v1h-1zm10 0h1v1h-1zm11 0h1v1h-1zm10 0h1v1h-1zm11 0h1v1h-1zm10 0h1v1h-1zm11 0h1v1h-1zm10 0h1v1h-1zm11 0h1v1h-1zm11 0h1v1h-1zm10 0h1v1h-1zm11 0h1v1h-1zm10 0h1v1h-1zm11 0h1v1h-1zm10 0h1v1h-1zm11 0h1v1h-1zm10 0h1v1h-1zm11 0h1v1h-1zm10 0h1v1h-1zm11 0h1v1h-1zm10 0h1v1h-1zm11 0h1v1h-1zm10 0h1v1h-1zm11 0h1v1h-1zm10 0h1v1h-1zm11 0h1v1h-1zm11 0h1v1h-1zm10 0h1v1h-1zm11 0h1v1h-1zm10 0h1v1h-1zm11 0h1v1h-1zm10 0h1v1h-1zm11 0h1v1h-1zm10 0h1v1h-1zm11 0h1v1h-1zm10 0h1v1h-1zm11 0h1v1h-1zM609 851h1v1h-1zm11 0h1v1h-1zm10 0h1v1h-1zm11 0h1v1h-1zm10 0h1v1h-1zm11 0h1v1h-1zm10 0h1v1h-1zm11 0h1v1h-1zm10 0h1v1h-1zm11 0h1v1h-1zm10 0h1v1h-1zm11 0h1v1h-1zm10 0h1v1h-1zm11 0h1v1h-1zm10 0h1v1h-1zm11 0h1v1h-1zm11 0h1v1h-1zm10 0h1v1h-1zm11 0h1v1h-1zm10 0h1v1h-1zm11 0h1v1h-1zm10 0h1v1h-1zm11 0h1v1h-1zm10 0h1v1h-1zm11 0h1v1h-1zm10 0h1v1h-1zm11 0h1v1h-1zm10 0h1v1h-1zm11 0h1v1h-1zm10 0h1v1h-1zm11 0h1v1h-1zm11 0h1v1h-1zm10 0h1v1h-1zm11 0h1v1h-1zm10 0h1v1h-1zm11 0h1v1h-1zm10 0h1v1h-1zm11 0h1v1h-1zm10 0h1v1h-1zm11 0h1v1h-1zm10 0h1v1h-1zm11 0h1v1h-1zm10 0h1v1h-1zm11 0h1v1h-1zm10 0h1v1h-1zm11 0h1v1h-1zm11 0h1v1h-1zm10 0h1v1h-1zm11 0h1v1h-1zm10 0h1v1h-1zm11 0h1v1h-1zm10 0h1v1h-1zm11 0h1v1h-1zm10 0h1v1h-1zm11 0h1v1h-1zm10 0h1v1h-1zm11 0h1v1h-1zm10 0h1v1h-1zm11 0h1v1h-1zm10 0h1v1h-1zm11 0h1v1h-1zm11 0h1v1h-1zm10 0h1v1h-1zm11 0h1v1h-1zm10 0h1v1h-1zm11 0h1v1h-1zm10 0h1v1h-1zm11 0h1v1h-1zm10 0h1v1h-1zm11 0h1v1h-1zm10 0h1v1h-1zm11 0h1v1h-1zm10 0h1v1h-1zm11 0h1v1h-1zm10 0h1v1h-1zm11 0h1v1h-1zm11 0h1v1h-1zm10 0h1v1h-1zm11 0h1v1h-1zm10 0h1v1h-1zm11 0h1v1h-1zm10 0h1v1h-1zm11 0h1v1h-1zm10 0h1v1h-1zm11 0h1v1h-1zm10 0h1v1h-1zm11 0h1v1h-1zm10 0h1v1h-1zm11 0h1v1h-1zm10 0h1v1h-1zm11 0h1v1h-1zm11 0h1v1h-1zm10 0h1v1h-1zm11 0h1v1h-1zm10 0h1v1h-1zm11 0h1v1h-1zm10 0h1v1h-1zm11 0h1v1h-1zm10 0h1v1h-1zm11 0h1v1h-1zm10 0h1v1h-1zm11 0h1v1h-1zm10 0h1v1h-1zm11 0h1v1h-1zm10 0h1v1h-1zm11 0h1v1h-1zm10 0h1v1h-1zm11 0h1v1h-1zm11 0h1v1h-1zm10 0h1v1h-1zm11 0h1v1h-1zm10 0h1v1h-1zm11 0h1v1h-1zm10 0h1v1h-1zm11 0h1v1h-1zm10 0h1v1h-1zm11 0h1v1h-1zm10 0h1v1h-1zm11 0h1v1h-1zM609 862h1v1h-1zm11 0h1v1h-1zm10 0h1v1h-1zm11 0h1v1h-1zm10 0h1v1h-1zm11 0h1v1h-1zm10 0h1v1h-1zm11 0h1v1h-1zm10 0h1v1h-1zm11 0h1v1h-1zm10 0h1v1h-1zm11 0h1v1h-1zm10 0h1v1h-1zm11 0h1v1h-1zm10 0h1v1h-1zm11 0h1v1h-1zm11 0h1v1h-1zm10 0h1v1h-1zm11 0h1v1h-1zm10 0h1v1h-1zm11 0h1v1h-1zm10 0h1v1h-1zm11 0h1v1h-1zm10 0h1v1h-1zm11 0h1v1h-1zm10 0h1v1h-1zm11 0h1v1h-1zm10 0h1v1h-1zm11 0h1v1h-1zm10 0h1v1h-1zm11 0h1v1h-1zm11 0h1v1h-1zm10 0h1v1h-1zm11 0h1v1h-1zm10 0h1v1h-1zm11 0h1v1h-1zm10 0h1v1h-1zm11 0h1v1h-1zm10 0h1v1h-1zm11 0h1v1h-1zm10 0h1v1h-1zm11 0h1v1h-1zm10 0h1v1h-1zm11 0h1v1h-1zm10 0h1v1h-1zm11 0h1v1h-1zm11 0h1v1h-1zm10 0h1v1h-1zm11 0h1v1h-1zm10 0h1v1h-1zm11 0h1v1h-1zm10 0h1v1h-1zm11 0h1v1h-1zm10 0h1v1h-1zm11 0h1v1h-1zm10 0h1v1h-1zm11 0h1v1h-1zm10 0h1v1h-1zm11 0h1v1h-1zm10 0h1v1h-1zm11 0h1v1h-1zm11 0h1v1h-1zm10 0h1v1h-1zm11 0h1v1h-1zm10 0h1v1h-1zm11 0h1v1h-1zm10 0h1v1h-1zm11 0h1v1h-1zm10 0h1v1h-1zm11 0h1v1h-1zm10 0h1v1h-1zm11 0h1v1h-1zm10 0h1v1h-1zm11 0h1v1h-1zm10 0h1v1h-1zm11 0h1v1h-1zm11 0h1v1h-1zm10 0h1v1h-1zm11 0h1v1h-1zm10 0h1v1h-1zm11 0h1v1h-1zm10 0h1v1h-1zm11 0h1v1h-1zm10 0h1v1h-1zm11 0h1v1h-1zm10 0h1v1h-1zm11 0h1v1h-1zm10 0h1v1h-1zm11 0h1v1h-1zm10 0h1v1h-1zm11 0h1v1h-1zm11 0h1v1h-1zm10 0h1v1h-1zm11 0h1v1h-1zm10 0h1v1h-1zm11 0h1v1h-1zm10 0h1v1h-1zm11 0h1v1h-1zm10 0h1v1h-1zm11 0h1v1h-1zm10 0h1v1h-1zm11 0h1v1h-1zm10 0h1v1h-1zm11 0h1v1h-1zm10 0h1v1h-1zm11 0h1v1h-1zm10 0h1v1h-1zm11 0h1v1h-1zm11 0h1v1h-1zm10 0h1v1h-1zm11 0h1v1h-1zm10 0h1v1h-1zm11 0h1v1h-1zm10 0h1v1h-1zm11 0h1v1h-1zm10 0h1v1h-1zm11 0h1v1h-1zm10 0h1v1h-1zm11 0h1v1h-1zM609 872h1v1h-1zm11 0h1v1h-1zm10 0h1v1h-1zm11 0h1v1h-1zm10 0h1v1h-1zm11 0h1v1h-1zm10 0h1v1h-1zm11 0h1v1h-1zm10 0h1v1h-1zm11 0h1v1h-1zm10 0h1v1h-1zm11 0h1v1h-1zm10 0h1v1h-1zm11 0h1v1h-1zm10 0h1v1h-1zm11 0h1v1h-1zm11 0h1v1h-1zm10 0h1v1h-1zm11 0h1v1h-1zm10 0h1v1h-1zm11 0h1v1h-1zm10 0h1v1h-1zm11 0h1v1h-1zm10 0h1v1h-1zm11 0h1v1h-1zm10 0h1v1h-1zm11 0h1v1h-1zm10 0h1v1h-1zm11 0h1v1h-1zm10 0h1v1h-1zm11 0h1v1h-1zm11 0h1v1h-1zm10 0h1v1h-1zm11 0h1v1h-1zm10 0h1v1h-1zm11 0h1v1h-1zm10 0h1v1h-1zm11 0h1v1h-1zm10 0h1v1h-1zm11 0h1v1h-1zm10 0h1v1h-1zm11 0h1v1h-1zm10 0h1v1h-1zm11 0h1v1h-1zm10 0h1v1h-1zm11 0h1v1h-1zm11 0h1v1h-1zm10 0h1v1h-1zm11 0h1v1h-1zm10 0h1v1h-1zm11 0h1v1h-1zm10 0h1v1h-1zm11 0h1v1h-1zm10 0h1v1h-1zm11 0h1v1h-1zm10 0h1v1h-1zm11 0h1v1h-1zm10 0h1v1h-1zm11 0h1v1h-1zm10 0h1v1h-1zm11 0h1v1h-1zm11 0h1v1h-1zm10 0h1v1h-1zm11 0h1v1h-1zm10 0h1v1h-1zm11 0h1v1h-1zm10 0h1v1h-1zm11 0h1v1h-1zm10 0h1v1h-1zm11 0h1v1h-1zm10 0h1v1h-1zm11 0h1v1h-1zm10 0h1v1h-1zm11 0h1v1h-1zm10 0h1v1h-1zm11 0h1v1h-1zm11 0h1v1h-1zm10 0h1v1h-1zm11 0h1v1h-1zm10 0h1v1h-1zm11 0h1v1h-1zm10 0h1v1h-1zm11 0h1v1h-1zm10 0h1v1h-1zm11 0h1v1h-1zm10 0h1v1h-1zm11 0h1v1h-1zm10 0h1v1h-1zm11 0h1v1h-1zm10 0h1v1h-1zm11 0h1v1h-1zm11 0h1v1h-1zm10 0h1v1h-1zm11 0h1v1h-1zm10 0h1v1h-1zm11 0h1v1h-1zm10 0h1v1h-1zm11 0h1v1h-1zm10 0h1v1h-1zm11 0h1v1h-1zm10 0h1v1h-1zm11 0h1v1h-1zm10 0h1v1h-1zm11 0h1v1h-1zm10 0h1v1h-1zm11 0h1v1h-1zm10 0h1v1h-1zm11 0h1v1h-1zm11 0h1v1h-1zm10 0h1v1h-1zm11 0h1v1h-1zm10 0h1v1h-1zm11 0h1v1h-1zm10 0h1v1h-1zm11 0h1v1h-1zm10 0h1v1h-1zm11 0h1v1h-1zm10 0h1v1h-1zm11 0h1v1h-1zM609 883h1v1h-1zm11 0h1v1h-1zm10 0h1v1h-1zm11 0h1v1h-1zm10 0h1v1h-1zm11 0h1v1h-1zm10 0h1v1h-1zm11 0h1v1h-1zm10 0h1v1h-1zm11 0h1v1h-1zm10 0h1v1h-1zm11 0h1v1h-1zm10 0h1v1h-1zm11 0h1v1h-1zm10 0h1v1h-1zm11 0h1v1h-1zm11 0h1v1h-1zm10 0h1v1h-1zm11 0h1v1h-1zm10 0h1v1h-1zm11 0h1v1h-1zm10 0h1v1h-1zm11 0h1v1h-1zm10 0h1v1h-1zm11 0h1v1h-1zm10 0h1v1h-1zm11 0h1v1h-1zm10 0h1v1h-1zm11 0h1v1h-1zm10 0h1v1h-1zm11 0h1v1h-1zm11 0h1v1h-1zm10 0h1v1h-1zm11 0h1v1h-1zm10 0h1v1h-1zm11 0h1v1h-1zm10 0h1v1h-1zm11 0h1v1h-1zm10 0h1v1h-1zm11 0h1v1h-1zm10 0h1v1h-1zm11 0h1v1h-1zm10 0h1v1h-1zm11 0h1v1h-1zm10 0h1v1h-1zm11 0h1v1h-1zm11 0h1v1h-1zm10 0h1v1h-1zm11 0h1v1h-1zm10 0h1v1h-1zm11 0h1v1h-1zm10 0h1v1h-1zm11 0h1v1h-1zm10 0h1v1h-1zm11 0h1v1h-1zm10 0h1v1h-1zm11 0h1v1h-1zm10 0h1v1h-1zm11 0h1v1h-1zm10 0h1v1h-1zm11 0h1v1h-1zm11 0h1v1h-1zm10 0h1v1h-1zm11 0h1v1h-1zm10 0h1v1h-1zm11 0h1v1h-1zm10 0h1v1h-1zm11 0h1v1h-1zm10 0h1v1h-1zm11 0h1v1h-1zm10 0h1v1h-1zm11 0h1v1h-1zm10 0h1v1h-1zm11 0h1v1h-1zm10 0h1v1h-1zm11 0h1v1h-1zm11 0h1v1h-1zm10 0h1v1h-1zm11 0h1v1h-1zm10 0h1v1h-1zm11 0h1v1h-1zm10 0h1v1h-1zm11 0h1v1h-1zm10 0h1v1h-1zm11 0h1v1h-1zm10 0h1v1h-1zm11 0h1v1h-1zm10 0h1v1h-1zm11 0h1v1h-1zm10 0h1v1h-1zm11 0h1v1h-1zm11 0h1v1h-1zm10 0h1v1h-1zm11 0h1v1h-1zm10 0h1v1h-1zm11 0h1v1h-1zm10 0h1v1h-1zm11 0h1v1h-1zm10 0h1v1h-1zm11 0h1v1h-1zm10 0h1v1h-1zm11 0h1v1h-1zm10 0h1v1h-1zm11 0h1v1h-1zm10 0h1v1h-1zm11 0h1v1h-1zm10 0h1v1h-1zm11 0h1v1h-1zm11 0h1v1h-1zm10 0h1v1h-1zm11 0h1v1h-1zm10 0h1v1h-1zm11 0h1v1h-1zm10 0h1v1h-1zm11 0h1v1h-1zm10 0h1v1h-1zm11 0h1v1h-1zm10 0h1v1h-1zm11 0h1v1h-1zM609 893h1v1h-1zm11 0h1v1h-1zm10 0h1v1h-1zm11 0h1v1h-1zm10 0h1v1h-1zm11 0h1v1h-1zm10 0h1v1h-1zm11 0h1v1h-1zm10 0h1v1h-1zm11 0h1v1h-1zm10 0h1v1h-1zm11 0h1v1h-1zm10 0h1v1h-1zm11 0h1v1h-1zm10 0h1v1h-1zm11 0h1v1h-1zm11 0h1v1h-1zm10 0h1v1h-1zm11 0h1v1h-1zm10 0h1v1h-1zm11 0h1v1h-1zm10 0h1v1h-1zm11 0h1v1h-1zm10 0h1v1h-1zm11 0h1v1h-1zm10 0h1v1h-1zm11 0h1v1h-1zm10 0h1v1h-1zm11 0h1v1h-1zm10 0h1v1h-1zm11 0h1v1h-1zm11 0h1v1h-1zm10 0h1v1h-1zm11 0h1v1h-1zm10 0h1v1h-1zm11 0h1v1h-1zm10 0h1v1h-1zm11 0h1v1h-1zm10 0h1v1h-1zm11 0h1v1h-1zm10 0h1v1h-1zm11 0h1v1h-1zm10 0h1v1h-1zm11 0h1v1h-1zm10 0h1v1h-1zm11 0h1v1h-1zm11 0h1v1h-1zm10 0h1v1h-1zm11 0h1v1h-1zm10 0h1v1h-1zm11 0h1v1h-1zm10 0h1v1h-1zm11 0h1v1h-1zm10 0h1v1h-1zm11 0h1v1h-1zm10 0h1v1h-1zm11 0h1v1h-1zm10 0h1v1h-1zm11 0h1v1h-1zm10 0h1v1h-1zm11 0h1v1h-1zm11 0h1v1h-1zm10 0h1v1h-1zm11 0h1v1h-1zm10 0h1v1h-1zm11 0h1v1h-1zm10 0h1v1h-1zm11 0h1v1h-1zm10 0h1v1h-1zm11 0h1v1h-1zm10 0h1v1h-1zm11 0h1v1h-1zm10 0h1v1h-1zm11 0h1v1h-1zm10 0h1v1h-1zm11 0h1v1h-1zm11 0h1v1h-1zm10 0h1v1h-1zm11 0h1v1h-1zm10 0h1v1h-1zm11 0h1v1h-1zm10 0h1v1h-1zm11 0h1v1h-1zm10 0h1v1h-1zm11 0h1v1h-1zm10 0h1v1h-1zm11 0h1v1h-1zm10 0h1v1h-1zm11 0h1v1h-1zm10 0h1v1h-1zm11 0h1v1h-1zm11 0h1v1h-1zm10 0h1v1h-1zm11 0h1v1h-1zm10 0h1v1h-1zm11 0h1v1h-1zm10 0h1v1h-1zm11 0h1v1h-1zm10 0h1v1h-1zm11 0h1v1h-1zm10 0h1v1h-1zm11 0h1v1h-1zm10 0h1v1h-1zm11 0h1v1h-1zm10 0h1v1h-1zm11 0h1v1h-1zm10 0h1v1h-1zm11 0h1v1h-1zm11 0h1v1h-1zm10 0h1v1h-1zm11 0h1v1h-1zm10 0h1v1h-1zm11 0h1v1h-1zm10 0h1v1h-1zm11 0h1v1h-1zm10 0h1v1h-1zm11 0h1v1h-1zm10 0h1v1h-1zm11 0h1v1h-1zM609 904h1v1h-1zm11 0h1v1h-1zm10 0h1v1h-1zm11 0h1v1h-1zm10 0h1v1h-1zm11 0h1v1h-1zm10 0h1v1h-1zm11 0h1v1h-1zm10 0h1v1h-1zm11 0h1v1h-1zm10 0h1v1h-1zm11 0h1v1h-1zm10 0h1v1h-1zm11 0h1v1h-1zm10 0h1v1h-1zm11 0h1v1h-1zm11 0h1v1h-1zm10 0h1v1h-1zm11 0h1v1h-1zm10 0h1v1h-1zm11 0h1v1h-1zm10 0h1v1h-1zm11 0h1v1h-1zm10 0h1v1h-1zm11 0h1v1h-1zm10 0h1v1h-1zm11 0h1v1h-1zm10 0h1v1h-1zm11 0h1v1h-1zm10 0h1v1h-1zm11 0h1v1h-1zm11 0h1v1h-1zm10 0h1v1h-1zm11 0h1v1h-1zm10 0h1v1h-1zm11 0h1v1h-1zm10 0h1v1h-1zm11 0h1v1h-1zm10 0h1v1h-1zm11 0h1v1h-1zm10 0h1v1h-1zm11 0h1v1h-1zm10 0h1v1h-1zm11 0h1v1h-1zm10 0h1v1h-1zm11 0h1v1h-1zm11 0h1v1h-1zm10 0h1v1h-1zm11 0h1v1h-1zm10 0h1v1h-1zm11 0h1v1h-1zm10 0h1v1h-1zm11 0h1v1h-1zm10 0h1v1h-1zm11 0h1v1h-1zm10 0h1v1h-1zm11 0h1v1h-1zm10 0h1v1h-1zm11 0h1v1h-1zm10 0h1v1h-1zm11 0h1v1h-1zm11 0h1v1h-1zm10 0h1v1h-1zm11 0h1v1h-1zm10 0h1v1h-1zm11 0h1v1h-1zm10 0h1v1h-1zm11 0h1v1h-1zm10 0h1v1h-1zm11 0h1v1h-1zm10 0h1v1h-1zm11 0h1v1h-1zm10 0h1v1h-1zm11 0h1v1h-1zm10 0h1v1h-1zm11 0h1v1h-1zm11 0h1v1h-1zm10 0h1v1h-1zm11 0h1v1h-1zm10 0h1v1h-1zm11 0h1v1h-1zm10 0h1v1h-1zm11 0h1v1h-1zm10 0h1v1h-1zm11 0h1v1h-1zm10 0h1v1h-1zm11 0h1v1h-1zm10 0h1v1h-1zm11 0h1v1h-1zm10 0h1v1h-1zm11 0h1v1h-1zm11 0h1v1h-1zm10 0h1v1h-1zm11 0h1v1h-1zm10 0h1v1h-1zm11 0h1v1h-1zm10 0h1v1h-1zm11 0h1v1h-1zm10 0h1v1h-1zm11 0h1v1h-1zm10 0h1v1h-1zm11 0h1v1h-1zm10 0h1v1h-1zm11 0h1v1h-1zm10 0h1v1h-1zm11 0h1v1h-1zm10 0h1v1h-1zm11 0h1v1h-1zm11 0h1v1h-1zm10 0h1v1h-1zm11 0h1v1h-1zm10 0h1v1h-1zm11 0h1v1h-1zm10 0h1v1h-1zm11 0h1v1h-1zm10 0h1v1h-1zm11 0h1v1h-1zm10 0h1v1h-1zm11 0h1v1h-1zM609 914h1v1h-1zm11 0h1v1h-1zm10 0h1v1h-1zm11 0h1v1h-1zm10 0h1v1h-1zm11 0h1v1h-1zm10 0h1v1h-1zm11 0h1v1h-1zm10 0h1v1h-1zm11 0h1v1h-1zm10 0h1v1h-1zm11 0h1v1h-1zm10 0h1v1h-1zm11 0h1v1h-1zm10 0h1v1h-1zm11 0h1v1h-1zm11 0h1v1h-1zm10 0h1v1h-1zm11 0h1v1h-1zm10 0h1v1h-1zm11 0h1v1h-1zm10 0h1v1h-1zm11 0h1v1h-1zm10 0h1v1h-1zm11 0h1v1h-1zm10 0h1v1h-1zm11 0h1v1h-1zm10 0h1v1h-1zm11 0h1v1h-1zm10 0h1v1h-1zm11 0h1v1h-1zm11 0h1v1h-1zm10 0h1v1h-1zm11 0h1v1h-1zm10 0h1v1h-1zm11 0h1v1h-1zm10 0h1v1h-1zm11 0h1v1h-1zm10 0h1v1h-1zm11 0h1v1h-1zm10 0h1v1h-1zm11 0h1v1h-1zm10 0h1v1h-1zm11 0h1v1h-1zm10 0h1v1h-1zm11 0h1v1h-1zm11 0h1v1h-1zm10 0h1v1h-1zm11 0h1v1h-1zm10 0h1v1h-1zm11 0h1v1h-1zm10 0h1v1h-1zm11 0h1v1h-1zm10 0h1v1h-1zm11 0h1v1h-1zm10 0h1v1h-1zm11 0h1v1h-1zm10 0h1v1h-1zm11 0h1v1h-1zm10 0h1v1h-1zm11 0h1v1h-1zm11 0h1v1h-1zm10 0h1v1h-1zm11 0h1v1h-1zm10 0h1v1h-1zm11 0h1v1h-1zm10 0h1v1h-1zm11 0h1v1h-1zm10 0h1v1h-1zm11 0h1v1h-1zm10 0h1v1h-1zm11 0h1v1h-1zm10 0h1v1h-1zm11 0h1v1h-1zm10 0h1v1h-1zm11 0h1v1h-1zm11 0h1v1h-1zm10 0h1v1h-1zm11 0h1v1h-1zm10 0h1v1h-1zm11 0h1v1h-1zm10 0h1v1h-1zm11 0h1v1h-1zm10 0h1v1h-1zm11 0h1v1h-1zm10 0h1v1h-1zm11 0h1v1h-1zm10 0h1v1h-1zm11 0h1v1h-1zm10 0h1v1h-1zm11 0h1v1h-1zm11 0h1v1h-1zm10 0h1v1h-1zm11 0h1v1h-1zm10 0h1v1h-1zm11 0h1v1h-1zm10 0h1v1h-1zm11 0h1v1h-1zm10 0h1v1h-1zm11 0h1v1h-1zm10 0h1v1h-1zm11 0h1v1h-1zm10 0h1v1h-1zm11 0h1v1h-1zm10 0h1v1h-1zm11 0h1v1h-1zm10 0h1v1h-1zm11 0h1v1h-1zm11 0h1v1h-1zm10 0h1v1h-1zm11 0h1v1h-1zm10 0h1v1h-1zm11 0h1v1h-1zm10 0h1v1h-1zm11 0h1v1h-1zm10 0h1v1h-1zm11 0h1v1h-1zm10 0h1v1h-1zm11 0h1v1h-1zM609 925h1v1h-1zm11 0h1v1h-1zm10 0h1v1h-1zm11 0h1v1h-1zm10 0h1v1h-1zm11 0h1v1h-1zm10 0h1v1h-1zm11 0h1v1h-1zm10 0h1v1h-1zm11 0h1v1h-1zm10 0h1v1h-1zm11 0h1v1h-1zm10 0h1v1h-1zm11 0h1v1h-1zm10 0h1v1h-1zm11 0h1v1h-1zm11 0h1v1h-1zm10 0h1v1h-1zm11 0h1v1h-1zm10 0h1v1h-1zm11 0h1v1h-1zm10 0h1v1h-1zm11 0h1v1h-1zm10 0h1v1h-1zm11 0h1v1h-1zm10 0h1v1h-1zm11 0h1v1h-1zm10 0h1v1h-1zm11 0h1v1h-1zm10 0h1v1h-1zm11 0h1v1h-1zm11 0h1v1h-1zm10 0h1v1h-1zm11 0h1v1h-1zm10 0h1v1h-1zm11 0h1v1h-1zm10 0h1v1h-1zm11 0h1v1h-1zm10 0h1v1h-1zm11 0h1v1h-1zm10 0h1v1h-1zm11 0h1v1h-1zm10 0h1v1h-1zm11 0h1v1h-1zm10 0h1v1h-1zm11 0h1v1h-1zm11 0h1v1h-1zm10 0h1v1h-1zm11 0h1v1h-1zm10 0h1v1h-1zm11 0h1v1h-1zm10 0h1v1h-1zm11 0h1v1h-1zm10 0h1v1h-1zm11 0h1v1h-1zm10 0h1v1h-1zm11 0h1v1h-1zm10 0h1v1h-1zm11 0h1v1h-1zm10 0h1v1h-1zm11 0h1v1h-1zm11 0h1v1h-1zm10 0h1v1h-1zm11 0h1v1h-1zm10 0h1v1h-1zm11 0h1v1h-1zm10 0h1v1h-1zm11 0h1v1h-1zm10 0h1v1h-1zm11 0h1v1h-1zm10 0h1v1h-1zm11 0h1v1h-1zm10 0h1v1h-1zm11 0h1v1h-1zm10 0h1v1h-1zm11 0h1v1h-1zm11 0h1v1h-1zm10 0h1v1h-1zm11 0h1v1h-1zm10 0h1v1h-1zm11 0h1v1h-1zm10 0h1v1h-1zm11 0h1v1h-1zm10 0h1v1h-1zm11 0h1v1h-1zm10 0h1v1h-1zm11 0h1v1h-1zm10 0h1v1h-1zm11 0h1v1h-1zm10 0h1v1h-1zm11 0h1v1h-1zm11 0h1v1h-1zm10 0h1v1h-1zm11 0h1v1h-1zm10 0h1v1h-1zm11 0h1v1h-1zm10 0h1v1h-1zm11 0h1v1h-1zm10 0h1v1h-1zm11 0h1v1h-1zm10 0h1v1h-1zm11 0h1v1h-1zm10 0h1v1h-1zm11 0h1v1h-1zm10 0h1v1h-1zm11 0h1v1h-1zm10 0h1v1h-1zm11 0h1v1h-1zm11 0h1v1h-1zm10 0h1v1h-1zm11 0h1v1h-1zm10 0h1v1h-1zm11 0h1v1h-1zm10 0h1v1h-1zm11 0h1v1h-1zm10 0h1v1h-1zm11 0h1v1h-1zm10 0h1v1h-1zm11 0h1v1h-1zM609 935h1v1h-1zm11 0h1v1h-1zm10 0h1v1h-1zm11 0h1v1h-1zm10 0h1v1h-1zm11 0h1v1h-1zm10 0h1v1h-1zm11 0h1v1h-1zm10 0h1v1h-1zm11 0h1v1h-1zm10 0h1v1h-1zm11 0h1v1h-1zm10 0h1v1h-1zm11 0h1v1h-1zm10 0h1v1h-1zm11 0h1v1h-1zm11 0h1v1h-1zm10 0h1v1h-1zm11 0h1v1h-1zm10 0h1v1h-1zm11 0h1v1h-1zm10 0h1v1h-1zm11 0h1v1h-1zm10 0h1v1h-1zm11 0h1v1h-1zm10 0h1v1h-1zm11 0h1v1h-1zm10 0h1v1h-1zm11 0h1v1h-1zm10 0h1v1h-1zm11 0h1v1h-1zm11 0h1v1h-1zm10 0h1v1h-1zm11 0h1v1h-1zm10 0h1v1h-1zm11 0h1v1h-1zm10 0h1v1h-1zm11 0h1v1h-1zm10 0h1v1h-1zm11 0h1v1h-1zm10 0h1v1h-1zm11 0h1v1h-1zm10 0h1v1h-1zm11 0h1v1h-1zm10 0h1v1h-1zm11 0h1v1h-1zm11 0h1v1h-1zm10 0h1v1h-1zm11 0h1v1h-1zm10 0h1v1h-1zm11 0h1v1h-1zm10 0h1v1h-1zm11 0h1v1h-1zm10 0h1v1h-1zm11 0h1v1h-1zm10 0h1v1h-1zm11 0h1v1h-1zm10 0h1v1h-1zm11 0h1v1h-1zm10 0h1v1h-1zm11 0h1v1h-1zm11 0h1v1h-1zm10 0h1v1h-1zm11 0h1v1h-1zm10 0h1v1h-1zm11 0h1v1h-1zm10 0h1v1h-1zm11 0h1v1h-1zm10 0h1v1h-1zm11 0h1v1h-1zm10 0h1v1h-1zm11 0h1v1h-1zm10 0h1v1h-1zm11 0h1v1h-1zm10 0h1v1h-1zm11 0h1v1h-1zm11 0h1v1h-1zm10 0h1v1h-1zm11 0h1v1h-1zm10 0h1v1h-1zm11 0h1v1h-1zm10 0h1v1h-1zm11 0h1v1h-1zm10 0h1v1h-1zm11 0h1v1h-1zm10 0h1v1h-1zm11 0h1v1h-1zm10 0h1v1h-1zm11 0h1v1h-1zm10 0h1v1h-1zm11 0h1v1h-1zm11 0h1v1h-1zm10 0h1v1h-1zm11 0h1v1h-1zm10 0h1v1h-1zm11 0h1v1h-1zm10 0h1v1h-1zm11 0h1v1h-1zm10 0h1v1h-1zm11 0h1v1h-1zm10 0h1v1h-1zm11 0h1v1h-1zm10 0h1v1h-1zm11 0h1v1h-1zm10 0h1v1h-1zm11 0h1v1h-1zm10 0h1v1h-1zm11 0h1v1h-1zm11 0h1v1h-1zm10 0h1v1h-1zm11 0h1v1h-1zm10 0h1v1h-1zm11 0h1v1h-1zm10 0h1v1h-1zm11 0h1v1h-1zm10 0h1v1h-1zm11 0h1v1h-1zm10 0h1v1h-1zm11 0h1v1h-1zM609 946h1v1h-1zm11 0h1v1h-1zm10 0h1v1h-1zm11 0h1v1h-1zm10 0h1v1h-1zm11 0h1v1h-1zm10 0h1v1h-1zm11 0h1v1h-1zm10 0h1v1h-1zm11 0h1v1h-1zm10 0h1v1h-1zm11 0h1v1h-1zm10 0h1v1h-1zm11 0h1v1h-1zm10 0h1v1h-1zm11 0h1v1h-1zm11 0h1v1h-1zm10 0h1v1h-1zm11 0h1v1h-1zm10 0h1v1h-1zm11 0h1v1h-1zm10 0h1v1h-1zm11 0h1v1h-1zm10 0h1v1h-1zm11 0h1v1h-1zm10 0h1v1h-1zm11 0h1v1h-1zm10 0h1v1h-1zm11 0h1v1h-1zm10 0h1v1h-1zm11 0h1v1h-1zm11 0h1v1h-1zm10 0h1v1h-1zm11 0h1v1h-1zm10 0h1v1h-1zm11 0h1v1h-1zm10 0h1v1h-1zm11 0h1v1h-1zm10 0h1v1h-1zm11 0h1v1h-1zm10 0h1v1h-1zm11 0h1v1h-1zm10 0h1v1h-1zm11 0h1v1h-1zm10 0h1v1h-1zm11 0h1v1h-1zm11 0h1v1h-1zm10 0h1v1h-1zm11 0h1v1h-1zm10 0h1v1h-1zm11 0h1v1h-1zm10 0h1v1h-1zm11 0h1v1h-1zm10 0h1v1h-1zm11 0h1v1h-1zm10 0h1v1h-1zm11 0h1v1h-1zm10 0h1v1h-1zm11 0h1v1h-1zm10 0h1v1h-1zm11 0h1v1h-1zm11 0h1v1h-1zm10 0h1v1h-1zm11 0h1v1h-1zm10 0h1v1h-1zm11 0h1v1h-1zm10 0h1v1h-1zm11 0h1v1h-1zm10 0h1v1h-1zm11 0h1v1h-1zm10 0h1v1h-1zm11 0h1v1h-1zm10 0h1v1h-1zm11 0h1v1h-1zm10 0h1v1h-1zm11 0h1v1h-1zm11 0h1v1h-1zm10 0h1v1h-1zm11 0h1v1h-1zm10 0h1v1h-1zm11 0h1v1h-1zm10 0h1v1h-1zm11 0h1v1h-1zm10 0h1v1h-1zm11 0h1v1h-1zm10 0h1v1h-1zm11 0h1v1h-1zm10 0h1v1h-1zm11 0h1v1h-1zm10 0h1v1h-1zm11 0h1v1h-1zm11 0h1v1h-1zm10 0h1v1h-1zm11 0h1v1h-1zm10 0h1v1h-1zm11 0h1v1h-1zm10 0h1v1h-1zm11 0h1v1h-1zm10 0h1v1h-1zm11 0h1v1h-1zm10 0h1v1h-1zm11 0h1v1h-1zm10 0h1v1h-1zm11 0h1v1h-1zm10 0h1v1h-1zm11 0h1v1h-1zm10 0h1v1h-1zm11 0h1v1h-1zm11 0h1v1h-1zm10 0h1v1h-1zm11 0h1v1h-1zm10 0h1v1h-1zm11 0h1v1h-1zm10 0h1v1h-1zm11 0h1v1h-1zm10 0h1v1h-1zm11 0h1v1h-1zm10 0h1v1h-1zm11 0h1v1h-1zM609 956h1v1h-1zm11 0h1v1h-1zm10 0h1v1h-1zm11 0h1v1h-1zm10 0h1v1h-1zm11 0h1v1h-1zm10 0h1v1h-1zm11 0h1v1h-1zm10 0h1v1h-1zm11 0h1v1h-1zm10 0h1v1h-1zm11 0h1v1h-1zm10 0h1v1h-1zm11 0h1v1h-1zm10 0h1v1h-1zm11 0h1v1h-1zm11 0h1v1h-1zm10 0h1v1h-1zm11 0h1v1h-1zm10 0h1v1h-1zm11 0h1v1h-1zm10 0h1v1h-1zm11 0h1v1h-1zm10 0h1v1h-1zm11 0h1v1h-1zm10 0h1v1h-1zm11 0h1v1h-1zm10 0h1v1h-1zm11 0h1v1h-1zm10 0h1v1h-1zm11 0h1v1h-1zm11 0h1v1h-1zm10 0h1v1h-1zm11 0h1v1h-1zm10 0h1v1h-1zm11 0h1v1h-1zm10 0h1v1h-1zm11 0h1v1h-1zm10 0h1v1h-1zm11 0h1v1h-1zm10 0h1v1h-1zm11 0h1v1h-1zm10 0h1v1h-1zm11 0h1v1h-1zm10 0h1v1h-1zm11 0h1v1h-1zm11 0h1v1h-1zm10 0h1v1h-1zm11 0h1v1h-1zm10 0h1v1h-1zm11 0h1v1h-1zm10 0h1v1h-1zm11 0h1v1h-1zm10 0h1v1h-1zm11 0h1v1h-1zm10 0h1v1h-1zm11 0h1v1h-1zm10 0h1v1h-1zm11 0h1v1h-1zm10 0h1v1h-1zm11 0h1v1h-1zm11 0h1v1h-1zm10 0h1v1h-1zm11 0h1v1h-1zm10 0h1v1h-1zm11 0h1v1h-1zm10 0h1v1h-1zm11 0h1v1h-1zm10 0h1v1h-1zm11 0h1v1h-1zm10 0h1v1h-1zm11 0h1v1h-1zm10 0h1v1h-1zm11 0h1v1h-1zm10 0h1v1h-1zm11 0h1v1h-1zm11 0h1v1h-1zm10 0h1v1h-1zm11 0h1v1h-1zm10 0h1v1h-1zm11 0h1v1h-1zm10 0h1v1h-1zm11 0h1v1h-1zm10 0h1v1h-1zm11 0h1v1h-1zm10 0h1v1h-1zm11 0h1v1h-1zm10 0h1v1h-1zm11 0h1v1h-1zm10 0h1v1h-1zm11 0h1v1h-1zm11 0h1v1h-1zm10 0h1v1h-1zm11 0h1v1h-1zm10 0h1v1h-1zm11 0h1v1h-1zm10 0h1v1h-1zm11 0h1v1h-1zm10 0h1v1h-1zm11 0h1v1h-1zm10 0h1v1h-1zm11 0h1v1h-1zm10 0h1v1h-1zm11 0h1v1h-1zm10 0h1v1h-1zm11 0h1v1h-1zm10 0h1v1h-1zm11 0h1v1h-1zm11 0h1v1h-1zm10 0h1v1h-1zm11 0h1v1h-1zm10 0h1v1h-1zm11 0h1v1h-1zm10 0h1v1h-1zm11 0h1v1h-1zm10 0h1v1h-1zm11 0h1v1h-1zm10 0h1v1h-1zm11 0h1v1h-1zM609 967h1v1h-1zm11 0h1v1h-1zm10 0h1v1h-1zm11 0h1v1h-1zm10 0h1v1h-1zm11 0h1v1h-1zm10 0h1v1h-1zm11 0h1v1h-1zm10 0h1v1h-1zm11 0h1v1h-1zm10 0h1v1h-1zm11 0h1v1h-1zm10 0h1v1h-1zm11 0h1v1h-1zm10 0h1v1h-1zm11 0h1v1h-1zm11 0h1v1h-1zm10 0h1v1h-1zm11 0h1v1h-1zm10 0h1v1h-1zm11 0h1v1h-1zm10 0h1v1h-1zm11 0h1v1h-1zm10 0h1v1h-1zm11 0h1v1h-1zm10 0h1v1h-1zm11 0h1v1h-1zm10 0h1v1h-1zm11 0h1v1h-1zm10 0h1v1h-1zm11 0h1v1h-1zm11 0h1v1h-1zm10 0h1v1h-1zm11 0h1v1h-1zm10 0h1v1h-1zm11 0h1v1h-1zm10 0h1v1h-1zm11 0h1v1h-1zm10 0h1v1h-1zm11 0h1v1h-1zm10 0h1v1h-1zm11 0h1v1h-1zm10 0h1v1h-1zm11 0h1v1h-1zm10 0h1v1h-1zm11 0h1v1h-1zm11 0h1v1h-1zm10 0h1v1h-1zm11 0h1v1h-1zm10 0h1v1h-1zm11 0h1v1h-1zm10 0h1v1h-1zm11 0h1v1h-1zm10 0h1v1h-1zm11 0h1v1h-1zm10 0h1v1h-1zm11 0h1v1h-1zm10 0h1v1h-1zm11 0h1v1h-1zm10 0h1v1h-1zm11 0h1v1h-1zm11 0h1v1h-1zm10 0h1v1h-1zm11 0h1v1h-1zm10 0h1v1h-1zm11 0h1v1h-1zm10 0h1v1h-1zm11 0h1v1h-1zm10 0h1v1h-1zm11 0h1v1h-1zm10 0h1v1h-1zm11 0h1v1h-1zm10 0h1v1h-1zm11 0h1v1h-1zm10 0h1v1h-1zm11 0h1v1h-1zm11 0h1v1h-1zm10 0h1v1h-1zm11 0h1v1h-1zm10 0h1v1h-1zm11 0h1v1h-1zm10 0h1v1h-1zm11 0h1v1h-1zm10 0h1v1h-1zm11 0h1v1h-1zm10 0h1v1h-1zm11 0h1v1h-1zm10 0h1v1h-1zm11 0h1v1h-1zm10 0h1v1h-1zm11 0h1v1h-1zm11 0h1v1h-1zm10 0h1v1h-1zm11 0h1v1h-1zm10 0h1v1h-1zm11 0h1v1h-1zm10 0h1v1h-1zm11 0h1v1h-1zm10 0h1v1h-1zm11 0h1v1h-1zm10 0h1v1h-1zm11 0h1v1h-1zm10 0h1v1h-1zm11 0h1v1h-1zm10 0h1v1h-1zm11 0h1v1h-1zm10 0h1v1h-1zm11 0h1v1h-1zm11 0h1v1h-1zm10 0h1v1h-1zm11 0h1v1h-1zm10 0h1v1h-1zm11 0h1v1h-1zm10 0h1v1h-1zm11 0h1v1h-1zm10 0h1v1h-1zm11 0h1v1h-1zm10 0h1v1h-1zm11 0h1v1h-1zM609 978h1v1h-1zm11 0h1v1h-1zm10 0h1v1h-1zm11 0h1v1h-1zm10 0h1v1h-1zm11 0h1v1h-1zm10 0h1v1h-1zm11 0h1v1h-1zm10 0h1v1h-1zm11 0h1v1h-1zm10 0h1v1h-1zm11 0h1v1h-1zm10 0h1v1h-1zm11 0h1v1h-1zm10 0h1v1h-1zm11 0h1v1h-1zm11 0h1v1h-1zm10 0h1v1h-1zm11 0h1v1h-1zm10 0h1v1h-1zm11 0h1v1h-1zm10 0h1v1h-1zm11 0h1v1h-1zm10 0h1v1h-1zm11 0h1v1h-1zm10 0h1v1h-1zm11 0h1v1h-1zm10 0h1v1h-1zm11 0h1v1h-1zm10 0h1v1h-1zm11 0h1v1h-1zm11 0h1v1h-1zm10 0h1v1h-1zm11 0h1v1h-1zm10 0h1v1h-1zm11 0h1v1h-1zm10 0h1v1h-1zm11 0h1v1h-1zm10 0h1v1h-1zm11 0h1v1h-1zm10 0h1v1h-1zm11 0h1v1h-1zm10 0h1v1h-1zm11 0h1v1h-1zm10 0h1v1h-1zm11 0h1v1h-1zm11 0h1v1h-1zm10 0h1v1h-1zm11 0h1v1h-1zm10 0h1v1h-1zm11 0h1v1h-1zm10 0h1v1h-1zm11 0h1v1h-1zm10 0h1v1h-1zm11 0h1v1h-1zm10 0h1v1h-1zm11 0h1v1h-1zm10 0h1v1h-1zm11 0h1v1h-1zm10 0h1v1h-1zm11 0h1v1h-1zm11 0h1v1h-1zm10 0h1v1h-1zm11 0h1v1h-1zm10 0h1v1h-1zm11 0h1v1h-1zm10 0h1v1h-1zm11 0h1v1h-1zm10 0h1v1h-1zm11 0h1v1h-1zm10 0h1v1h-1zm11 0h1v1h-1zm10 0h1v1h-1zm11 0h1v1h-1zm10 0h1v1h-1zm11 0h1v1h-1zm11 0h1v1h-1zm10 0h1v1h-1zm11 0h1v1h-1zm10 0h1v1h-1zm11 0h1v1h-1zm10 0h1v1h-1zm11 0h1v1h-1zm10 0h1v1h-1zm11 0h1v1h-1zm10 0h1v1h-1zm11 0h1v1h-1zm10 0h1v1h-1zm11 0h1v1h-1zm10 0h1v1h-1zm11 0h1v1h-1zm11 0h1v1h-1zm10 0h1v1h-1zm11 0h1v1h-1zm10 0h1v1h-1zm11 0h1v1h-1zm10 0h1v1h-1zm11 0h1v1h-1zm10 0h1v1h-1zm11 0h1v1h-1zm10 0h1v1h-1zm11 0h1v1h-1zm10 0h1v1h-1zm11 0h1v1h-1zm10 0h1v1h-1zm11 0h1v1h-1zm10 0h1v1h-1zm11 0h1v1h-1zm11 0h1v1h-1zm10 0h1v1h-1zm11 0h1v1h-1zm10 0h1v1h-1zm11 0h1v1h-1zm10 0h1v1h-1zm11 0h1v1h-1zm10 0h1v1h-1zm11 0h1v1h-1zm10 0h1v1h-1zm11 0h1v1h-1z" fill="#000"/><g stroke="#6e6e6e" fill="none"><path d="M597 197h1108" stroke-width="2"/><path d="M599 196v783" stroke-width="2"/></g><path d="M1705 195v784" stroke="#555" stroke-width="2"/><path d="M599 209.5h1106" stroke="#5a5a5a" stroke-width="1.6"/><path d="M709.5 196v13" stroke="#151515" stroke-width="1.2"/><path d="M820.5 196v13" stroke="#151515" stroke-width="1.2"/><path d="M930.5 196v13" stroke="#151515" stroke-width="1.2"/><path d="M1041.5 196v13" stroke="#151515" stroke-width="1.2"/><path d="M1152.5 196v13" stroke="#151515" stroke-width="1.2"/><path d="M1262.5 196v13" stroke="#151515" stroke-width="1.2"/><path d="M1373.5 196v13" stroke="#151515" stroke-width="1.2"/><path d="M1483.5 196v13" stroke="#151515" stroke-width="1.2"/><path d="M1594.5 196v13" stroke="#151515" stroke-width="1.2"/><text x="654.3" y="205.0" font-size="7.5" fill="#3c3cb4" font-weight="bold" text-anchor="middle">0</text><text x="764.9" y="205.0" font-size="7.5" fill="#3c3cb4" font-weight="bold" text-anchor="middle">1</text><text x="875.5" y="205.0" font-size="7.5" fill="#3c3cb4" font-weight="bold" text-anchor="middle">2</text><text x="986.1" y="205.0" font-size="7.5" fill="#3c3cb4" font-weight="bold" text-anchor="middle">3</text><text x="1096.7" y="205.0" font-size="7.5" fill="#3c3cb4" font-weight="bold" text-anchor="middle">4</text><text x="1207.3" y="205.0" font-size="7.5" fill="#3c3cb4" font-weight="bold" text-anchor="middle">5</text><text x="1317.9" y="205.0" font-size="7.5" fill="#3c3cb4" font-weight="bold" text-anchor="middle">6</text><text x="1428.5" y="205.0" font-size="7.5" fill="#3c3cb4" font-weight="bold" text-anchor="middle">7</text><text x="1539.1" y="205.0" font-size="7.5" fill="#3c3cb4" font-weight="bold" text-anchor="middle">8</text><text x="1649.7" y="205.0" font-size="7.5" fill="#3c3cb4" font-weight="bold" text-anchor="middle">9</text><rect x="620.3" y="367.2" width="273.4000000000001" height="315.59999999999997" rx="8" ry="8" fill="none" stroke="#c652c8" stroke-width="1.6"/><rect x="893.7" y="367.2" width="158.0" height="315.59999999999997" rx="8" ry="8" fill="none" stroke="#c652c8" stroke-width="1.6"/><rect x="1051.7" y="367.2" width="63.0" height="315.59999999999997" rx="8" ry="8" fill="none" stroke="#c652c8" stroke-width="1.6"/><rect x="1114.7" y="367.2" width="62.799999999999955" height="315.59999999999997" rx="8" ry="8" fill="none" stroke="#c652c8" stroke-width="1.6"/><rect x="1177.5" y="367.2" width="63.799999999999955" height="315.59999999999997" rx="8" ry="8" fill="none" stroke="#c652c8" stroke-width="1.6"/><path d="M620.3 411.5H1051.7 M620.3 435.5H1241.3 M620.3 503.8H1051.7 M1051.7 614.1H1241.3" stroke="#c652c8" stroke-width="1.6" fill="none"/><text x="619.8" y="360.8" font-size="10.5" fill="#1b1ba6" font-weight="bold" textLength="29.2" lengthAdjust="spacingAndGlyphs">-1KE1</text><text x="893.5" y="353.9" font-size="10.5" fill="#1b1ba6" font-weight="bold" textLength="29.0" lengthAdjust="spacingAndGlyphs">-1KF1</text><text x="894.0" y="359.5" font-size="5" fill="#8fbf7f" textLength="8.0" lengthAdjust="spacingAndGlyphs" stroke="#8fbf7f" stroke-width="0.15">/1.8</text><text x="1051.4" y="360.6" font-size="10.5" fill="#1b1ba6" font-weight="bold" textLength="29.4" lengthAdjust="spacingAndGlyphs">-1KE2</text><text x="1114.7" y="360.6" font-size="10.5" fill="#1b1ba6" font-weight="bold" textLength="29.3" lengthAdjust="spacingAndGlyphs">-1KE3</text><text x="1179.0" y="360.6" font-size="10.5" fill="#1b1ba6" font-weight="bold" textLength="16.5" lengthAdjust="spacingAndGlyphs">-KE</text><text x="723.2" y="430.7" font-size="14.5" fill="#1b1ba6" textLength="66.4" lengthAdjust="spacingAndGlyphs">eBMGR-2</text><text x="946.8" y="430.6" font-size="14.5" fill="#1b1ba6" textLength="51.5" lengthAdjust="spacingAndGlyphs">eBX-08</text><rect x="705.0" y="443.8" width="104.3" height="47.5" fill="#fff"/><path d="M704.5 479.3L719.2 449.8L733.9 479.3z" fill="#dc1c34"/><path d="M721.3 451.50H736.0A10.62 10.62 0 0 1 746.6 462.12V466.98A10.62 10.62 0 0 1 736.0 477.60H734.4" fill="none" stroke="#505050" stroke-width="3.39"/><text x="750.7" y="479.0" font-size="39.2" fill="#505050" textLength="59.1" lengthAdjust="spacingAndGlyphs">elta</text><text x="704.5" y="490.1" font-size="7" font-weight="bold" font-style="italic" fill="#858585" stroke="#858585" stroke-width="0.3" textLength="105.3" lengthAdjust="spacing">CONTROLS</text><rect x="921.2" y="443.5" width="104.4" height="48.0" fill="#fff"/><path d="M920.7 479.5L935.5 449.5L950.2 479.5z" fill="#dc1c34"/><path d="M937.6 451.23H952.3A10.80 10.80 0 0 1 963.1 462.03V466.97A10.80 10.80 0 0 1 952.3 477.77H950.7" fill="none" stroke="#505050" stroke-width="3.45"/><text x="967.3" y="479.2" font-size="39.9" fill="#505050" textLength="58.8" lengthAdjust="spacingAndGlyphs">elta</text><text x="920.7" y="490.3" font-size="7" font-weight="bold" font-style="italic" fill="#858585" stroke="#858585" stroke-width="0.3" textLength="105.4" lengthAdjust="spacing">CONTROLS</text><circle cx="683.231" cy="388.19399999999996" r="2.9" fill="none" stroke="#dc30dc" stroke-width="1.3"/><path d="M680.9 379.19399999999996h4.6l-0.8 6h-3z" fill="#dc30dc"/><circle cx="683.231" cy="379.69399999999996" r="2.4" fill="#dc30dc" stroke="#dc30dc" stroke-width="1"/><circle cx="683.231" cy="379.69399999999996" r="0.9" fill="#fff"/><circle cx="714.83" cy="388.19399999999996" r="2.9" fill="none" stroke="#dc30dc" stroke-width="1.3"/><path d="M712.5 379.19399999999996h4.6l-0.8 6h-3z" fill="#dc30dc"/><circle cx="714.83" cy="379.69399999999996" r="2.4" fill="#dc30dc" stroke="#dc30dc" stroke-width="1"/><circle cx="714.83" cy="379.69399999999996" r="0.9" fill="#fff"/><circle cx="809.627" cy="388.19399999999996" r="2.9" fill="none" stroke="#dc30dc" stroke-width="1.3"/><rect x="807.627" y="378.19399999999996" width="4" height="5" fill="#dc30dc"/><circle cx="809.627" cy="383.69399999999996" r="1.8" fill="none" stroke="#dc30dc" stroke-width="1"/><circle cx="862.2919999999999" cy="388.19399999999996" r="2.9" fill="none" stroke="#dc30dc" stroke-width="1.3"/><rect x="860.2919999999999" y="378.19399999999996" width="4" height="5" fill="#dc30dc"/><circle cx="862.2919999999999" cy="383.69399999999996" r="1.8" fill="none" stroke="#dc30dc" stroke-width="1"/><circle cx="957.0889999999999" cy="388.19399999999996" r="2.9" fill="none" stroke="#dc30dc" stroke-width="1.3"/><path d="M954.8 379.19399999999996h4.6l-0.8 6h-3z" fill="#dc30dc"/><circle cx="957.0889999999999" cy="379.69399999999996" r="2.4" fill="#dc30dc" stroke="#dc30dc" stroke-width="1"/><circle cx="957.0889999999999" cy="379.69399999999996" r="0.9" fill="#fff"/><circle cx="988.688" cy="388.19399999999996" r="2.9" fill="none" stroke="#dc30dc" stroke-width="1.3"/><path d="M986.4 379.19399999999996h4.6l-0.8 6h-3z" fill="#dc30dc"/><circle cx="988.688" cy="379.69399999999996" r="2.4" fill="#dc30dc" stroke="#dc30dc" stroke-width="1"/><circle cx="988.688" cy="379.69399999999996" r="0.9" fill="#fff"/><circle cx="641.099" cy="662.052" r="2.9" fill="none" stroke="#dc30dc" stroke-width="1.3"/><path d="M641.099 665.052V672.052" stroke="#dc30dc" stroke-width="1.3"/><circle cx="651.632" cy="662.052" r="2.9" fill="none" stroke="#dc30dc" stroke-width="1.3"/><path d="M651.632 665.052V672.052" stroke="#dc30dc" stroke-width="1.3"/><circle cx="662.165" cy="662.052" r="2.9" fill="none" stroke="#dc30dc" stroke-width="1.3"/><path d="M662.165 665.052V672.052" stroke="#dc30dc" stroke-width="1.3"/><circle cx="693.764" cy="662.052" r="2.9" fill="none" stroke="#dc30dc" stroke-width="1.3"/><path d="M693.764 665.052V672.052" stroke="#dc30dc" stroke-width="1.3"/><circle cx="704.297" cy="662.052" r="2.9" fill="none" stroke="#dc30dc" stroke-width="1.3"/><path d="M704.297 665.052V672.052" stroke="#dc30dc" stroke-width="1.3"/><circle cx="714.83" cy="662.052" r="2.9" fill="none" stroke="#dc30dc" stroke-width="1.3"/><path d="M714.83 665.052V672.052" stroke="#dc30dc" stroke-width="1.3"/><circle cx="756.962" cy="662.052" r="2.9" fill="none" stroke="#dc30dc" stroke-width="1.3"/><rect x="754.962" y="668.052" width="4" height="5" fill="#dc30dc"/><circle cx="756.962" cy="667.052" r="1.8" fill="none" stroke="#dc30dc" stroke-width="1"/><circle cx="809.627" cy="662.052" r="2.9" fill="none" stroke="#dc30dc" stroke-width="1.3"/><rect x="807.627" y="668.052" width="4" height="5" fill="#dc30dc"/><circle cx="809.627" cy="667.052" r="1.8" fill="none" stroke="#dc30dc" stroke-width="1"/><circle cx="862.2919999999999" cy="662.052" r="2.9" fill="none" stroke="#dc30dc" stroke-width="1.3"/><rect x="860.2919999999999" y="668.052" width="4" height="5" fill="#dc30dc"/><circle cx="862.2919999999999" cy="667.052" r="1.8" fill="none" stroke="#dc30dc" stroke-width="1"/><text x="676.0" y="379.4" font-size="7" fill="#111" textLength="11.4" lengthAdjust="spacingAndGlyphs" transform="rotate(-90 676.0 379.4)" stroke="#111" stroke-width="0.18">GND</text><text x="708.0" y="379.0" font-size="7" fill="#111" textLength="10.0" lengthAdjust="spacingAndGlyphs" transform="rotate(-90 708.0 379.0)" stroke="#111" stroke-width="0.18">24V</text><text x="697.0" y="380.0" font-size="5" fill="#2b2bc8" stroke="#2b2bc8" stroke-width="0.15">2</text><text x="803.0" y="376.0" font-size="6" fill="#1a1a1a" textLength="9.0" lengthAdjust="spacingAndGlyphs" transform="rotate(-90 803.0 376.0)" stroke="#1a1a1a" stroke-width="0.15">1-4</text><text x="855.0" y="376.0" font-size="6" fill="#1a1a1a" textLength="9.0" lengthAdjust="spacingAndGlyphs" transform="rotate(-90 855.0 376.0)" stroke="#1a1a1a" stroke-width="0.15">1-4</text><text x="809.6" y="401.5" font-size="6" fill="#8a8a8a" text-anchor="middle" textLength="12.0" lengthAdjust="spacingAndGlyphs" stroke="#8a8a8a" stroke-width="0.15">USB1</text><text x="862.3" y="401.5" font-size="6" fill="#8a8a8a" text-anchor="middle" textLength="12.0" lengthAdjust="spacingAndGlyphs" stroke="#8a8a8a" stroke-width="0.15">USB2</text><text x="950.0" y="379.4" font-size="7" fill="#111" textLength="11.4" lengthAdjust="spacingAndGlyphs" transform="rotate(-90 950.0 379.4)" stroke="#111" stroke-width="0.18">GND</text><text x="982.0" y="379.0" font-size="7" fill="#111" textLength="10.0" lengthAdjust="spacingAndGlyphs" transform="rotate(-90 982.0 379.0)" stroke="#111" stroke-width="0.18">24V</text><text x="633.0" y="581.2" font-size="8" fill="#1a1a1a" textLength="39.5" lengthAdjust="spacingAndGlyphs" stroke="#1a1a1a" stroke-width="0.18">eBUS-Adr.:</text><text x="698.9" y="581.2" font-size="8" fill="#2b2bc8" textLength="4.5" lengthAdjust="spacingAndGlyphs" stroke="#2b2bc8" stroke-width="0.18">0</text><text x="633.0" y="595.2" font-size="8" fill="#1a1a1a" textLength="42.4" lengthAdjust="spacingAndGlyphs" stroke="#1a1a1a" stroke-width="0.18">Contr.-Adr.:</text><text x="698.9" y="595.2" font-size="8" fill="#2b2bc8" textLength="18.0" lengthAdjust="spacingAndGlyphs" stroke="#2b2bc8" stroke-width="0.18">3000</text><text x="633.0" y="608.0" font-size="8" fill="#1a1a1a" textLength="26.4" lengthAdjust="spacingAndGlyphs" stroke="#1a1a1a" stroke-width="0.18">Device:</text><text x="698.9" y="608.0" font-size="8" fill="#2b2bc8" textLength="33.4" lengthAdjust="spacingAndGlyphs" stroke="#2b2bc8" stroke-width="0.18">eBMGR-2</text><text x="907.0" y="580.5" font-size="8" fill="#1a1a1a" textLength="39.5" lengthAdjust="spacingAndGlyphs" stroke="#1a1a1a" stroke-width="0.18">eBUS-Adr.:</text><text x="973.6" y="580.5" font-size="8" fill="#2b2bc8" textLength="3.5" lengthAdjust="spacingAndGlyphs" stroke="#2b2bc8" stroke-width="0.18">1</text><text x="907.0" y="594.5" font-size="8" fill="#1a1a1a" textLength="42.4" lengthAdjust="spacingAndGlyphs" stroke="#1a1a1a" stroke-width="0.18">Contr.-Adr.:</text><text x="973.0" y="594.5" font-size="8" fill="#2b2bc8" textLength="18.0" lengthAdjust="spacingAndGlyphs" stroke="#2b2bc8" stroke-width="0.18">3000</text><text x="907.0" y="607.5" font-size="8" fill="#1a1a1a" textLength="26.4" lengthAdjust="spacingAndGlyphs" stroke="#1a1a1a" stroke-width="0.18">Device:</text><text x="973.0" y="607.5" font-size="8" fill="#2b2bc8" textLength="33.4" lengthAdjust="spacingAndGlyphs" stroke="#2b2bc8" stroke-width="0.18">eBMGR-2</text><text x="633.0" y="647.0" font-size="6" fill="#8a8a8a" textLength="37.0" lengthAdjust="spacingAndGlyphs" stroke="#8a8a8a" stroke-width="0.15">Adresse-NET1</text><text x="736.0" y="647.0" font-size="6" fill="#8a8a8a" textLength="41.0" lengthAdjust="spacingAndGlyphs" stroke="#8a8a8a" stroke-width="0.15">192.168.xxx.xxx</text><text x="651.6" y="654.0" font-size="6" fill="#8a8a8a" text-anchor="middle" textLength="13.0" lengthAdjust="spacingAndGlyphs" stroke="#8a8a8a" stroke-width="0.15">NET1</text><text x="704.3" y="654.0" font-size="6" fill="#8a8a8a" text-anchor="middle" textLength="13.0" lengthAdjust="spacingAndGlyphs" stroke="#8a8a8a" stroke-width="0.15">NET2</text><text x="757.0" y="654.0" font-size="6" fill="#8a8a8a" text-anchor="middle" textLength="13.0" lengthAdjust="spacingAndGlyphs" stroke="#8a8a8a" stroke-width="0.15">LAN1</text><text x="809.6" y="654.0" font-size="6" fill="#8a8a8a" text-anchor="middle" textLength="13.0" lengthAdjust="spacingAndGlyphs" stroke="#8a8a8a" stroke-width="0.15">LAN2</text><text x="862.3" y="654.0" font-size="6" fill="#8a8a8a" text-anchor="middle" textLength="13.0" lengthAdjust="spacingAndGlyphs" stroke="#8a8a8a" stroke-width="0.15">LAN3</text><text x="636.5" y="674.0" font-size="6" fill="#1a1a1a" stroke="#1a1a1a" stroke-width="0.15">+</text><text x="689.5" y="674.0" font-size="6" fill="#1a1a1a" stroke="#1a1a1a" stroke-width="0.15">+</text><text x="647.0" y="673.0" font-size="6" fill="#999" stroke="#999" stroke-width="0.15">-</text><text x="699.5" y="673.0" font-size="6" fill="#999" stroke="#999" stroke-width="0.15">-</text><text x="670.0" y="680.0" font-size="6" fill="#1a1a1a" textLength="11.0" lengthAdjust="spacingAndGlyphs" transform="rotate(-90 670.0 680.0)" stroke="#1a1a1a" stroke-width="0.15">SHD</text><text x="723.0" y="680.0" font-size="6" fill="#1a1a1a" textLength="11.0" lengthAdjust="spacingAndGlyphs" transform="rotate(-90 723.0 680.0)" stroke="#1a1a1a" stroke-width="0.15">SHD</text><text x="750.0" y="681.0" font-size="6" fill="#1a1a1a" textLength="9.0" lengthAdjust="spacingAndGlyphs" transform="rotate(-90 750.0 681.0)" stroke="#1a1a1a" stroke-width="0.15">1-8</text><text x="802.5" y="681.0" font-size="6" fill="#1a1a1a" textLength="9.0" lengthAdjust="spacingAndGlyphs" transform="rotate(-90 802.5 681.0)" stroke="#1a1a1a" stroke-width="0.15">1-8</text><text x="855.0" y="681.0" font-size="6" fill="#1a1a1a" textLength="9.0" lengthAdjust="spacingAndGlyphs" transform="rotate(-90 855.0 681.0)" stroke="#1a1a1a" stroke-width="0.15">1-8</text><circle cx="883.4" cy="535.7" r="2.9" fill="none" stroke="#dc30dc" stroke-width="1.3"/><circle cx="904.4" cy="535.7" r="2.9" fill="none" stroke="#dc30dc" stroke-width="1.3"/><path d="M886.4 535.7H901.4" stroke="#dc30dc" stroke-width="1.2"/><circle cx="883.4" cy="546.2" r="2.9" fill="none" stroke="#dc30dc" stroke-width="1.3"/><circle cx="904.4" cy="546.2" r="2.9" fill="none" stroke="#dc30dc" stroke-width="1.3"/><path d="M886.4 546.2H901.4" stroke="#dc30dc" stroke-width="1.2"/><circle cx="883.4" cy="556.7" r="2.9" fill="none" stroke="#dc30dc" stroke-width="1.3"/><circle cx="904.4" cy="556.7" r="2.9" fill="none" stroke="#dc30dc" stroke-width="1.3"/><path d="M886.4 556.7H901.4" stroke="#dc30dc" stroke-width="1.2"/><text x="877.0" y="559.0" font-size="7" fill="#222" textLength="27.0" lengthAdjust="spacingAndGlyphs" transform="rotate(-90 877.0 559.0)" stroke="#222" stroke-width="0.18">eBUS OUT</text><text x="915.0" y="557.0" font-size="7" fill="#222" textLength="22.0" lengthAdjust="spacingAndGlyphs" transform="rotate(-90 915.0 557.0)" stroke="#222" stroke-width="0.18">eBUS IN</text><text x="882.0" y="563.5" font-size="7" fill="#222" textLength="24.0" lengthAdjust="spacingAndGlyphs" stroke="#222" stroke-width="0.18">SHDSHD</text><text x="891.0" y="541.5" font-size="6" fill="#333" textLength="7.0" lengthAdjust="spacingAndGlyphs" stroke="#333" stroke-width="0.15">+ +</text><circle cx="972.7" cy="646.5" r="10" fill="none" stroke="#111" stroke-width="1.2"/><path d="M965.7 644.5h9v-3l6 5-6 5v-3h-9z" fill="none" stroke="#111" stroke-width="1"/><path d="M980 635l6-6 M984 633l4-4a2 2 0 0 1 3 3l-4 4" fill="none" stroke="#111" stroke-width="1.2"/><text x="979.7" y="636.4" font-size="5.5" fill="#1a1a1a" text-anchor="middle" stroke="#1a1a1a" stroke-width="0.15">9</text><text x="971.5" y="634.6" font-size="5.5" fill="#1a1a1a" text-anchor="middle" stroke="#1a1a1a" stroke-width="0.15">8</text><text x="963.7" y="637.8" font-size="5.5" fill="#1a1a1a" text-anchor="middle" stroke="#1a1a1a" stroke-width="0.15">7</text><text x="958.7" y="648.5" font-size="5.5" fill="#1a1a1a" text-anchor="middle" stroke="#1a1a1a" stroke-width="0.15">6</text><text x="962.8" y="658.4" font-size="5.5" fill="#1a1a1a" text-anchor="middle" stroke="#1a1a1a" stroke-width="0.15">5</text><text x="970.3" y="662.3" font-size="5.5" fill="#1a1a1a" text-anchor="middle" stroke="#1a1a1a" stroke-width="0.15">4</text><text x="978.6" y="661.2" font-size="5.5" fill="#1a1a1a" text-anchor="middle" stroke="#1a1a1a" stroke-width="0.15">3</text><text x="984.8" y="655.5" font-size="5.5" fill="#1a1a1a" text-anchor="middle" stroke="#1a1a1a" stroke-width="0.15">2</text><text x="986.7" y="648.5" font-size="5.5" fill="#1a1a1a" text-anchor="middle" stroke="#1a1a1a" stroke-width="0.15">1</text><text x="972.7" y="674.5" font-size="5.5" fill="#1a1a1a" text-anchor="middle" textLength="36.0" lengthAdjust="spacingAndGlyphs" stroke="#1a1a1a" stroke-width="0.15">eBUS Address</text><path d="M1060.2189999999998 367.66099999999994h4.4l-1 6h-2.4z" fill="#f3d27a"/><circle cx="1062.4" cy="377.7" r="3" fill="none" stroke="#f0dfa0" stroke-width="1.6"/><path d="M1060.2189999999998 441.39199999999994h4.4l-1 6h-2.4z" fill="#f3d27a"/><circle cx="1062.4" cy="451.4" r="3" fill="none" stroke="#f0dfa0" stroke-width="1.6"/><path d="M1061.2189999999998 602.8539999999999h2.4l1 6h-4.4z" fill="#f3d27a"/><circle cx="1062.4" cy="598.9" r="3" fill="none" stroke="#f0dfa0" stroke-width="1.6"/><path d="M1061.2189999999998 676.5849999999999h2.4l1 6h-4.4z" fill="#f3d27a"/><circle cx="1062.4" cy="672.6" r="3" fill="none" stroke="#f0dfa0" stroke-width="1.6"/><path d="M1081.2849999999999 367.66099999999994h4.4l-1 6h-2.4z" fill="#f3d27a"/><circle cx="1083.5" cy="377.7" r="3" fill="none" stroke="#f0dfa0" stroke-width="1.6"/><path d="M1081.2849999999999 441.39199999999994h4.4l-1 6h-2.4z" fill="#f3d27a"/><circle cx="1083.5" cy="451.4" r="3" fill="none" stroke="#f0dfa0" stroke-width="1.6"/><path d="M1082.2849999999999 602.8539999999999h2.4l1 6h-4.4z" fill="#f3d27a"/><circle cx="1083.5" cy="598.9" r="3" fill="none" stroke="#f0dfa0" stroke-width="1.6"/><path d="M1082.2849999999999 676.5849999999999h2.4l1 6h-4.4z" fill="#f3d27a"/><circle cx="1083.5" cy="672.6" r="3" fill="none" stroke="#f0dfa0" stroke-width="1.6"/><path d="M1102.3509999999999 367.66099999999994h4.4l-1 6h-2.4z" fill="#f3d27a"/><circle cx="1104.6" cy="377.7" r="3" fill="none" stroke="#f0dfa0" stroke-width="1.6"/><path d="M1102.3509999999999 441.39199999999994h4.4l-1 6h-2.4z" fill="#f3d27a"/><circle cx="1104.6" cy="451.4" r="3" fill="none" stroke="#f0dfa0" stroke-width="1.6"/><path d="M1103.3509999999999 602.8539999999999h2.4l1 6h-4.4z" fill="#f3d27a"/><circle cx="1104.6" cy="598.9" r="3" fill="none" stroke="#f0dfa0" stroke-width="1.6"/><path d="M1103.3509999999999 676.5849999999999h2.4l1 6h-4.4z" fill="#f3d27a"/><circle cx="1104.6" cy="672.6" r="3" fill="none" stroke="#f0dfa0" stroke-width="1.6"/><path d="M1123.417 367.66099999999994h4.4l-1 6h-2.4z" fill="#f3d27a"/><circle cx="1125.6" cy="377.7" r="3" fill="none" stroke="#f0dfa0" stroke-width="1.6"/><path d="M1123.417 441.39199999999994h4.4l-1 6h-2.4z" fill="#f3d27a"/><circle cx="1125.6" cy="451.4" r="3" fill="none" stroke="#f0dfa0" stroke-width="1.6"/><path d="M1124.417 602.8539999999999h2.4l1 6h-4.4z" fill="#f3d27a"/><circle cx="1125.6" cy="598.9" r="3" fill="none" stroke="#f0dfa0" stroke-width="1.6"/><path d="M1124.417 676.5849999999999h2.4l1 6h-4.4z" fill="#f3d27a"/><circle cx="1125.6" cy="672.6" r="3" fill="none" stroke="#f0dfa0" stroke-width="1.6"/><path d="M1144.483 367.66099999999994h4.4l-1 6h-2.4z" fill="#f3d27a"/><circle cx="1146.7" cy="377.7" r="3" fill="none" stroke="#f0dfa0" stroke-width="1.6"/><path d="M1144.483 441.39199999999994h4.4l-1 6h-2.4z" fill="#f3d27a"/><circle cx="1146.7" cy="451.4" r="3" fill="none" stroke="#f0dfa0" stroke-width="1.6"/><path d="M1145.483 602.8539999999999h2.4l1 6h-4.4z" fill="#f3d27a"/><circle cx="1146.7" cy="598.9" r="3" fill="none" stroke="#f0dfa0" stroke-width="1.6"/><path d="M1145.483 676.5849999999999h2.4l1 6h-4.4z" fill="#f3d27a"/><circle cx="1146.7" cy="672.6" r="3" fill="none" stroke="#f0dfa0" stroke-width="1.6"/><path d="M1165.549 367.66099999999994h4.4l-1 6h-2.4z" fill="#f3d27a"/><circle cx="1167.7" cy="377.7" r="3" fill="none" stroke="#f0dfa0" stroke-width="1.6"/><path d="M1165.549 441.39199999999994h4.4l-1 6h-2.4z" fill="#f3d27a"/><circle cx="1167.7" cy="451.4" r="3" fill="none" stroke="#f0dfa0" stroke-width="1.6"/><path d="M1166.549 602.8539999999999h2.4l1 6h-4.4z" fill="#f3d27a"/><circle cx="1167.7" cy="598.9" r="3" fill="none" stroke="#f0dfa0" stroke-width="1.6"/><path d="M1166.549 676.5849999999999h2.4l1 6h-4.4z" fill="#f3d27a"/><circle cx="1167.7" cy="672.6" r="3" fill="none" stroke="#f0dfa0" stroke-width="1.6"/><path d="M1186.615 367.66099999999994h4.4l-1 6h-2.4z" fill="#f3d27a"/><circle cx="1188.8" cy="377.7" r="3" fill="none" stroke="#f0dfa0" stroke-width="1.6"/><path d="M1186.615 441.39199999999994h4.4l-1 6h-2.4z" fill="#f3d27a"/><circle cx="1188.8" cy="451.4" r="3" fill="none" stroke="#f0dfa0" stroke-width="1.6"/><path d="M1187.615 602.8539999999999h2.4l1 6h-4.4z" fill="#f3d27a"/><circle cx="1188.8" cy="598.9" r="3" fill="none" stroke="#f0dfa0" stroke-width="1.6"/><path d="M1187.615 676.5849999999999h2.4l1 6h-4.4z" fill="#f3d27a"/><circle cx="1188.8" cy="672.6" r="3" fill="none" stroke="#f0dfa0" stroke-width="1.6"/><path d="M1207.6809999999998 367.66099999999994h4.4l-1 6h-2.4z" fill="#f3d27a"/><circle cx="1209.9" cy="377.7" r="3" fill="none" stroke="#f0dfa0" stroke-width="1.6"/><path d="M1207.6809999999998 441.39199999999994h4.4l-1 6h-2.4z" fill="#f3d27a"/><circle cx="1209.9" cy="451.4" r="3" fill="none" stroke="#f0dfa0" stroke-width="1.6"/><path d="M1208.6809999999998 602.8539999999999h2.4l1 6h-4.4z" fill="#f3d27a"/><circle cx="1209.9" cy="598.9" r="3" fill="none" stroke="#f0dfa0" stroke-width="1.6"/><path d="M1208.6809999999998 676.5849999999999h2.4l1 6h-4.4z" fill="#f3d27a"/><circle cx="1209.9" cy="672.6" r="3" fill="none" stroke="#f0dfa0" stroke-width="1.6"/><path d="M1228.747 367.66099999999994h4.4l-1 6h-2.4z" fill="#f3d27a"/><circle cx="1230.9" cy="377.7" r="3" fill="none" stroke="#f0dfa0" stroke-width="1.6"/><path d="M1228.747 441.39199999999994h4.4l-1 6h-2.4z" fill="#f3d27a"/><circle cx="1230.9" cy="451.4" r="3" fill="none" stroke="#f0dfa0" stroke-width="1.6"/><path d="M1229.747 602.8539999999999h2.4l1 6h-4.4z" fill="#f3d27a"/><circle cx="1230.9" cy="598.9" r="3" fill="none" stroke="#f0dfa0" stroke-width="1.6"/><path d="M1229.747 676.5849999999999h2.4l1 6h-4.4z" fill="#f3d27a"/><circle cx="1230.9" cy="672.6" r="3" fill="none" stroke="#f0dfa0" stroke-width="1.6"/><text x="1062.4" y="400.0" font-size="6" fill="#1a1a1a" textLength="18.0" lengthAdjust="spacingAndGlyphs" transform="rotate(-90 1062.4 400.0)" stroke="#1a1a1a" stroke-width="0.15">/1.4 IP7</text><text x="1072.7" y="407.4" font-size="10" fill="#2a9c9c" textLength="25.7" lengthAdjust="spacingAndGlyphs" transform="rotate(-90 1072.7 407.4)" stroke="#1ea5a5" stroke-width="0.25">BI1107</text><text x="1062.4" y="473.5" font-size="6" fill="#1a1a1a" textLength="18.0" lengthAdjust="spacingAndGlyphs" transform="rotate(-90 1062.4 473.5)" stroke="#1a1a1a" stroke-width="0.15">/1.4 IP5</text><text x="1072.7" y="481.0" font-size="10" fill="#2a9c9c" textLength="25.7" lengthAdjust="spacingAndGlyphs" transform="rotate(-90 1072.7 481.0)" stroke="#1ea5a5" stroke-width="0.25">BI1105</text><text x="1062.4" y="595.0" font-size="6" fill="#1a1a1a" textLength="20.5" lengthAdjust="spacingAndGlyphs" transform="rotate(-90 1062.4 595.0)" stroke="#1a1a1a" stroke-width="0.15">IP3 /1.4</text><text x="1072.7" y="595.0" font-size="10" fill="#2a9c9c" textLength="25.0" lengthAdjust="spacingAndGlyphs" transform="rotate(-90 1072.7 595.0)" stroke="#1ea5a5" stroke-width="0.25">BI1103</text><text x="1062.4" y="668.2" font-size="6" fill="#1a1a1a" textLength="20.5" lengthAdjust="spacingAndGlyphs" transform="rotate(-90 1062.4 668.2)" stroke="#1a1a1a" stroke-width="0.15">IP1 /1.4</text><text x="1072.7" y="668.2" font-size="10" fill="#2a9c9c" textLength="25.0" lengthAdjust="spacingAndGlyphs" transform="rotate(-90 1072.7 668.2)" stroke="#1ea5a5" stroke-width="0.25">BI1101</text><text x="1083.5" y="407.0" font-size="6" fill="#1a1a1a" textLength="24.0" lengthAdjust="spacingAndGlyphs" transform="rotate(-90 1083.5 407.0)" stroke="#1a1a1a" stroke-width="0.15">/1.4 24Vb</text><text x="1083.5" y="480.5" font-size="6" fill="#1a1a1a" textLength="24.0" lengthAdjust="spacingAndGlyphs" transform="rotate(-90 1083.5 480.5)" stroke="#1a1a1a" stroke-width="0.15">/1.4 24Vb</text><text x="1083.5" y="595.0" font-size="6" fill="#1a1a1a" textLength="25.0" lengthAdjust="spacingAndGlyphs" transform="rotate(-90 1083.5 595.0)" stroke="#1a1a1a" stroke-width="0.15">24Va /1.4</text><text x="1083.5" y="668.2" font-size="6" fill="#1a1a1a" textLength="25.0" lengthAdjust="spacingAndGlyphs" transform="rotate(-90 1083.5 668.2)" stroke="#1a1a1a" stroke-width="0.15">24Va /1.4</text><text x="1104.6" y="400.0" font-size="6" fill="#1a1a1a" textLength="18.0" lengthAdjust="spacingAndGlyphs" transform="rotate(-90 1104.6 400.0)" stroke="#1a1a1a" stroke-width="0.15">/1.4 IP8</text><text x="1114.9" y="407.4" font-size="10" fill="#2a9c9c" textLength="25.7" lengthAdjust="spacingAndGlyphs" transform="rotate(-90 1114.9 407.4)" stroke="#1ea5a5" stroke-width="0.25">BI1108</text><text x="1104.6" y="473.5" font-size="6" fill="#1a1a1a" textLength="18.0" lengthAdjust="spacingAndGlyphs" transform="rotate(-90 1104.6 473.5)" stroke="#1a1a1a" stroke-width="0.15">/1.4 IP6</text><text x="1114.9" y="481.0" font-size="10" fill="#2a9c9c" textLength="25.7" lengthAdjust="spacingAndGlyphs" transform="rotate(-90 1114.9 481.0)" stroke="#1ea5a5" stroke-width="0.25">BI1106</text><text x="1104.6" y="595.0" font-size="6" fill="#1a1a1a" textLength="20.5" lengthAdjust="spacingAndGlyphs" transform="rotate(-90 1104.6 595.0)" stroke="#1a1a1a" stroke-width="0.15">IP4 /1.4</text><text x="1114.9" y="595.0" font-size="10" fill="#2a9c9c" textLength="25.0" lengthAdjust="spacingAndGlyphs" transform="rotate(-90 1114.9 595.0)" stroke="#1ea5a5" stroke-width="0.25">BI1104</text><text x="1104.6" y="668.2" font-size="6" fill="#1a1a1a" textLength="20.5" lengthAdjust="spacingAndGlyphs" transform="rotate(-90 1104.6 668.2)" stroke="#1a1a1a" stroke-width="0.15">IP2 /1.4</text><text x="1114.9" y="668.2" font-size="10" fill="#2a9c9c" textLength="25.0" lengthAdjust="spacingAndGlyphs" transform="rotate(-90 1114.9 668.2)" stroke="#1ea5a5" stroke-width="0.25">BI1102</text><text x="1125.6" y="400.0" font-size="6" fill="#1a1a1a" textLength="18.0" lengthAdjust="spacingAndGlyphs" transform="rotate(-90 1125.6 400.0)" stroke="#1a1a1a" stroke-width="0.15">/1.4 OP1</text><text x="1135.9" y="407.4" font-size="10" fill="#2a9c9c" textLength="25.7" lengthAdjust="spacingAndGlyphs" transform="rotate(-90 1135.9 407.4)" stroke="#1ea5a5" stroke-width="0.25">BO1201</text><text x="1125.6" y="473.5" font-size="6" fill="#1a1a1a" textLength="18.0" lengthAdjust="spacingAndGlyphs" transform="rotate(-90 1125.6 473.5)" stroke="#1a1a1a" stroke-width="0.15">/1.4 OP3</text><text x="1135.9" y="481.0" font-size="10" fill="#2a9c9c" textLength="25.7" lengthAdjust="spacingAndGlyphs" transform="rotate(-90 1135.9 481.0)" stroke="#1ea5a5" stroke-width="0.25">BO1203</text><text x="1125.6" y="595.0" font-size="6" fill="#1a1a1a" textLength="20.5" lengthAdjust="spacingAndGlyphs" transform="rotate(-90 1125.6 595.0)" stroke="#1a1a1a" stroke-width="0.15">IP3 /1.4</text><text x="1135.9" y="595.0" font-size="10" fill="#2a9c9c" textLength="25.0" lengthAdjust="spacingAndGlyphs" transform="rotate(-90 1135.9 595.0)" stroke="#1ea5a5" stroke-width="0.25">BI1203</text><text x="1125.6" y="668.2" font-size="6" fill="#1a1a1a" textLength="20.5" lengthAdjust="spacingAndGlyphs" transform="rotate(-90 1125.6 668.2)" stroke="#1a1a1a" stroke-width="0.15">IP1 /1.4</text><text x="1135.9" y="668.2" font-size="10" fill="#2a9c9c" textLength="25.0" lengthAdjust="spacingAndGlyphs" transform="rotate(-90 1135.9 668.2)" stroke="#1ea5a5" stroke-width="0.25">BI1201</text><text x="1146.7" y="407.0" font-size="6" fill="#1a1a1a" textLength="24.0" lengthAdjust="spacingAndGlyphs" transform="rotate(-90 1146.7 407.0)" stroke="#1a1a1a" stroke-width="0.15">/1.4 COM1/2</text><text x="1146.7" y="480.5" font-size="6" fill="#1a1a1a" textLength="24.0" lengthAdjust="spacingAndGlyphs" transform="rotate(-90 1146.7 480.5)" stroke="#1a1a1a" stroke-width="0.15">/1.4 COM3/4</text><text x="1146.7" y="595.0" font-size="6" fill="#1a1a1a" textLength="25.0" lengthAdjust="spacingAndGlyphs" transform="rotate(-90 1146.7 595.0)" stroke="#1a1a1a" stroke-width="0.15">24Va /1.4</text><text x="1146.7" y="668.2" font-size="6" fill="#1a1a1a" textLength="25.0" lengthAdjust="spacingAndGlyphs" transform="rotate(-90 1146.7 668.2)" stroke="#1a1a1a" stroke-width="0.15">24Va /1.4</text><text x="1167.7" y="400.0" font-size="6" fill="#1a1a1a" textLength="18.0" lengthAdjust="spacingAndGlyphs" transform="rotate(-90 1167.7 400.0)" stroke="#1a1a1a" stroke-width="0.15">/1.4 OP2</text><text x="1178.0" y="407.4" font-size="10" fill="#2a9c9c" textLength="25.7" lengthAdjust="spacingAndGlyphs" transform="rotate(-90 1178.0 407.4)" stroke="#1ea5a5" stroke-width="0.25">BO1202</text><text x="1167.7" y="473.5" font-size="6" fill="#1a1a1a" textLength="18.0" lengthAdjust="spacingAndGlyphs" transform="rotate(-90 1167.7 473.5)" stroke="#1a1a1a" stroke-width="0.15">/1.4 OP4</text><text x="1178.0" y="481.0" font-size="10" fill="#2a9c9c" textLength="25.7" lengthAdjust="spacingAndGlyphs" transform="rotate(-90 1178.0 481.0)" stroke="#1ea5a5" stroke-width="0.25">BO1204</text><text x="1167.7" y="595.0" font-size="6" fill="#1a1a1a" textLength="20.5" lengthAdjust="spacingAndGlyphs" transform="rotate(-90 1167.7 595.0)" stroke="#1a1a1a" stroke-width="0.15">IP4 /1.4</text><text x="1178.0" y="595.0" font-size="10" fill="#2a9c9c" textLength="25.0" lengthAdjust="spacingAndGlyphs" transform="rotate(-90 1178.0 595.0)" stroke="#1ea5a5" stroke-width="0.25">BI1204</text><text x="1167.7" y="668.2" font-size="6" fill="#1a1a1a" textLength="20.5" lengthAdjust="spacingAndGlyphs" transform="rotate(-90 1167.7 668.2)" stroke="#1a1a1a" stroke-width="0.15">IP2 /1.4</text><text x="1178.0" y="668.2" font-size="10" fill="#2a9c9c" textLength="25.0" lengthAdjust="spacingAndGlyphs" transform="rotate(-90 1178.0 668.2)" stroke="#1ea5a5" stroke-width="0.25">BI1202</text><text x="1188.8" y="392.0" font-size="6" fill="#1a1a1a" textLength="12.0" lengthAdjust="spacingAndGlyphs" transform="rotate(-90 1188.8 392.0)" stroke="#1a1a1a" stroke-width="0.15">OP1</text><text x="1198.3" y="388.0" font-size="9.5" fill="#2a9c9c" transform="rotate(-90 1198.3 388.0)" stroke="#2a9c9c" stroke-width="0.18">1</text><text x="1209.9" y="392.0" font-size="6" fill="#1a1a1a" textLength="12.0" lengthAdjust="spacingAndGlyphs" transform="rotate(-90 1209.9 392.0)" stroke="#1a1a1a" stroke-width="0.15">GND</text><text x="1230.9" y="392.0" font-size="6" fill="#1a1a1a" textLength="12.0" lengthAdjust="spacingAndGlyphs" transform="rotate(-90 1230.9 392.0)" stroke="#1a1a1a" stroke-width="0.15">OP2</text><text x="1240.4" y="388.0" font-size="9.5" fill="#2a9c9c" transform="rotate(-90 1240.4 388.0)" stroke="#2a9c9c" stroke-width="0.18">2</text><text x="1188.8" y="466.0" font-size="6" fill="#1a1a1a" textLength="12.0" lengthAdjust="spacingAndGlyphs" transform="rotate(-90 1188.8 466.0)" stroke="#1a1a1a" stroke-width="0.15">OP3</text><text x="1198.3" y="462.0" font-size="9.5" fill="#2a9c9c" transform="rotate(-90 1198.3 462.0)" stroke="#2a9c9c" stroke-width="0.18">3</text><text x="1209.9" y="466.0" font-size="6" fill="#1a1a1a" textLength="12.0" lengthAdjust="spacingAndGlyphs" transform="rotate(-90 1209.9 466.0)" stroke="#1a1a1a" stroke-width="0.15">GND</text><text x="1230.9" y="466.0" font-size="6" fill="#1a1a1a" textLength="12.0" lengthAdjust="spacingAndGlyphs" transform="rotate(-90 1230.9 466.0)" stroke="#1a1a1a" stroke-width="0.15">OP4</text><text x="1240.4" y="462.0" font-size="9.5" fill="#2a9c9c" transform="rotate(-90 1240.4 462.0)" stroke="#2a9c9c" stroke-width="0.18">4</text><text x="1188.8" y="595.0" font-size="6" fill="#1a1a1a" textLength="12.0" lengthAdjust="spacingAndGlyphs" transform="rotate(-90 1188.8 595.0)" stroke="#1a1a1a" stroke-width="0.15">IP3</text><text x="1198.3" y="591.0" font-size="9.5" fill="#2a9c9c" transform="rotate(-90 1198.3 591.0)" stroke="#2a9c9c" stroke-width="0.18">3</text><text x="1209.9" y="595.0" font-size="6" fill="#1a1a1a" textLength="12.0" lengthAdjust="spacingAndGlyphs" transform="rotate(-90 1209.9 595.0)" stroke="#1a1a1a" stroke-width="0.15">GND</text><text x="1230.9" y="595.0" font-size="6" fill="#1a1a1a" textLength="12.0" lengthAdjust="spacingAndGlyphs" transform="rotate(-90 1230.9 595.0)" stroke="#1a1a1a" stroke-width="0.15">IP4</text><text x="1240.4" y="591.0" font-size="9.5" fill="#2a9c9c" transform="rotate(-90 1240.4 591.0)" stroke="#2a9c9c" stroke-width="0.18">4</text><text x="1188.8" y="668.5" font-size="6" fill="#1a1a1a" textLength="12.0" lengthAdjust="spacingAndGlyphs" transform="rotate(-90 1188.8 668.5)" stroke="#1a1a1a" stroke-width="0.15">IP1</text><text x="1198.3" y="664.5" font-size="9.5" fill="#2a9c9c" transform="rotate(-90 1198.3 664.5)" stroke="#2a9c9c" stroke-width="0.18">1</text><text x="1209.9" y="668.5" font-size="6" fill="#1a1a1a" textLength="12.0" lengthAdjust="spacingAndGlyphs" transform="rotate(-90 1209.9 668.5)" stroke="#1a1a1a" stroke-width="0.15">GND</text><text x="1230.9" y="668.5" font-size="6" fill="#1a1a1a" textLength="12.0" lengthAdjust="spacingAndGlyphs" transform="rotate(-90 1230.9 668.5)" stroke="#1a1a1a" stroke-width="0.15">IP2</text><text x="1240.4" y="664.5" font-size="9.5" fill="#2a9c9c" transform="rotate(-90 1240.4 664.5)" stroke="#2a9c9c" stroke-width="0.18">2</text><text x="1062.4" y="512.7" font-size="6" fill="#1a1a1a" textLength="42.0" lengthAdjust="spacingAndGlyphs" stroke="#1a1a1a" stroke-width="0.15">Steckplatz eBM1</text><text x="1125.2" y="512.7" font-size="6" fill="#1a1a1a" textLength="42.0" lengthAdjust="spacingAndGlyphs" stroke="#1a1a1a" stroke-width="0.15">Steckplatz eBM2</text><text x="1188.6" y="512.7" font-size="6" fill="#1a1a1a" textLength="42.0" lengthAdjust="spacingAndGlyphs" stroke="#1a1a1a" stroke-width="0.15">Steckplatz eBM3</text><text x="1252.0" y="512.7" font-size="6" fill="#1a1a1a" textLength="42.0" lengthAdjust="spacingAndGlyphs" stroke="#1a1a1a" stroke-width="0.15">Steckplatz eBM4</text><text x="1315.0" y="512.7" font-size="6" fill="#1a1a1a" textLength="42.0" lengthAdjust="spacingAndGlyphs" stroke="#1a1a1a" stroke-width="0.15">Steckplatz eBM5</text><text x="1378.0" y="512.7" font-size="6" fill="#1a1a1a" textLength="42.0" lengthAdjust="spacingAndGlyphs" stroke="#1a1a1a" stroke-width="0.15">Steckplatz eBM6</text><text x="1441.0" y="512.7" font-size="6" fill="#1a1a1a" textLength="42.0" lengthAdjust="spacingAndGlyphs" stroke="#1a1a1a" stroke-width="0.15">Steckplatz eBM7</text><text x="1504.0" y="512.7" font-size="6" fill="#1a1a1a" textLength="42.0" lengthAdjust="spacingAndGlyphs" stroke="#1a1a1a" stroke-width="0.15">Steckplatz eBM8</text><text x="1083.5" y="524.0" font-size="6.5" fill="#2b2bc8" font-weight="bold" text-anchor="middle" textLength="31.0" lengthAdjust="spacingAndGlyphs">eBM-D800</text><text x="1146.7" y="524.0" font-size="6.5" fill="#2b2bc8" font-weight="bold" text-anchor="middle" textLength="47.0" lengthAdjust="spacingAndGlyphs">eBM-D400R4-H</text><rect x="1557.5" y="483" width="42.1" height="84.3" fill="none" stroke="#c652c8" stroke-width="1.6"/><circle cx="1589.1" cy="535.7" r="2.9" fill="none" stroke="#dc30dc" stroke-width="1.3"/><path d="M1592.1 535.7H1599.6" stroke="#dc30dc" stroke-width="1.1"/><circle cx="1589.1" cy="546.2" r="2.9" fill="none" stroke="#dc30dc" stroke-width="1.3"/><path d="M1592.1 546.2H1599.6" stroke="#dc30dc" stroke-width="1.1"/><circle cx="1589.1" cy="556.7" r="2.9" fill="none" stroke="#dc30dc" stroke-width="1.3"/><path d="M1592.1 556.7H1599.6" stroke="#dc30dc" stroke-width="1.1"/><text x="1584.0" y="559.0" font-size="7" fill="#222" textLength="27.0" lengthAdjust="spacingAndGlyphs" transform="rotate(-90 1584.0 559.0)" stroke="#222" stroke-width="0.18">eBUS OUT</text><text x="1589.0" y="563.5" font-size="7" fill="#222" textLength="10.0" lengthAdjust="spacingAndGlyphs" stroke="#222" stroke-width="0.18">SHD</text><rect x="1062.1" y="701.0" width="42.7" height="6" fill="#8c8c8c"/><rect x="1062.1" y="722.0" width="42.7" height="6.2" fill="#8c8c8c"/><path d="M1072.7 699.6V720.0H1062.7" fill="none" stroke="#6a6a6a" stroke-width="1.3"/><path d="M1094.0 699.6V720.0H1084.0" fill="none" stroke="#6a6a6a" stroke-width="1.3"/><path d="M1066.75 703.55h1.5v1.5h-1.5zM1066.75 713.75h1.5v1.5h-1.5zM1066.75 724.45h1.5v1.5h-1.5zM1066.75 734.75h1.5v1.5h-1.5zM1077.45 703.55h1.5v1.5h-1.5zM1077.45 713.75h1.5v1.5h-1.5zM1077.45 724.45h1.5v1.5h-1.5zM1077.45 734.75h1.5v1.5h-1.5zM1087.85 703.55h1.5v1.5h-1.5zM1087.85 713.75h1.5v1.5h-1.5zM1087.85 724.45h1.5v1.5h-1.5zM1087.85 734.75h1.5v1.5h-1.5zM1098.75 703.55h1.5v1.5h-1.5zM1098.75 713.75h1.5v1.5h-1.5zM1098.75 724.45h1.5v1.5h-1.5zM1098.75 734.75h1.5v1.5h-1.5z" fill="#111"/><rect x="1062.1" y="698.6" width="42.7" height="42.1" fill="none" stroke="#111" stroke-width="1.8"/><path d="M1083.4 698.6v42.1" stroke="#111" stroke-width="1.8"/><text x="1073.1" y="696.1" font-size="8.5" fill="#111" text-anchor="middle" textLength="13.0" lengthAdjust="spacingAndGlyphs" stroke="#111" stroke-width="0.18">IP2</text><text x="1094.4" y="696.1" font-size="8.5" fill="#111" text-anchor="middle" textLength="13.0" lengthAdjust="spacingAndGlyphs" stroke="#111" stroke-width="0.18">IP1</text><rect x="1062.1" y="758.6" width="42.7" height="6" fill="#8c8c8c"/><rect x="1062.1" y="779.6" width="42.7" height="6.2" fill="#8c8c8c"/><path d="M1072.7 757.2V777.6H1062.7" fill="none" stroke="#6a6a6a" stroke-width="1.3"/><path d="M1094.0 757.2V777.6H1084.0" fill="none" stroke="#6a6a6a" stroke-width="1.3"/><path d="M1066.75 761.15h1.5v1.5h-1.5zM1066.75 771.35h1.5v1.5h-1.5zM1066.75 782.05h1.5v1.5h-1.5zM1066.75 792.35h1.5v1.5h-1.5zM1077.45 761.15h1.5v1.5h-1.5zM1077.45 771.35h1.5v1.5h-1.5zM1077.45 782.05h1.5v1.5h-1.5zM1077.45 792.35h1.5v1.5h-1.5zM1087.85 761.15h1.5v1.5h-1.5zM1087.85 771.35h1.5v1.5h-1.5zM1087.85 782.05h1.5v1.5h-1.5zM1087.85 792.35h1.5v1.5h-1.5zM1098.75 761.15h1.5v1.5h-1.5zM1098.75 771.35h1.5v1.5h-1.5zM1098.75 782.05h1.5v1.5h-1.5zM1098.75 792.35h1.5v1.5h-1.5z" fill="#111"/><rect x="1062.1" y="756.2" width="42.7" height="42.1" fill="none" stroke="#111" stroke-width="1.8"/><path d="M1083.4 756.2v42.1" stroke="#111" stroke-width="1.8"/><text x="1073.1" y="753.7" font-size="8.5" fill="#111" text-anchor="middle" textLength="13.0" lengthAdjust="spacingAndGlyphs" stroke="#111" stroke-width="0.18">IP4</text><text x="1094.4" y="753.7" font-size="8.5" fill="#111" text-anchor="middle" textLength="13.0" lengthAdjust="spacingAndGlyphs" stroke="#111" stroke-width="0.18">IP3</text><rect x="1062.1" y="816.9" width="42.7" height="6" fill="#8c8c8c"/><rect x="1062.1" y="837.9" width="42.7" height="6.2" fill="#8c8c8c"/><path d="M1072.7 815.5V835.9H1062.7" fill="none" stroke="#6a6a6a" stroke-width="1.3"/><path d="M1094.0 815.5V835.9H1084.0" fill="none" stroke="#6a6a6a" stroke-width="1.3"/><path d="M1066.75 819.45h1.5v1.5h-1.5zM1066.75 829.65h1.5v1.5h-1.5zM1066.75 840.35h1.5v1.5h-1.5zM1066.75 850.65h1.5v1.5h-1.5zM1077.45 819.45h1.5v1.5h-1.5zM1077.45 829.65h1.5v1.5h-1.5zM1077.45 840.35h1.5v1.5h-1.5zM1077.45 850.65h1.5v1.5h-1.5zM1087.85 819.45h1.5v1.5h-1.5zM1087.85 829.65h1.5v1.5h-1.5zM1087.85 840.35h1.5v1.5h-1.5zM1087.85 850.65h1.5v1.5h-1.5zM1098.75 819.45h1.5v1.5h-1.5zM1098.75 829.65h1.5v1.5h-1.5zM1098.75 840.35h1.5v1.5h-1.5zM1098.75 850.65h1.5v1.5h-1.5z" fill="#111"/><rect x="1062.1" y="814.5" width="42.7" height="42.1" fill="none" stroke="#111" stroke-width="1.8"/><path d="M1083.4 814.5v42.1" stroke="#111" stroke-width="1.8"/><text x="1073.1" y="812.0" font-size="8.5" fill="#111" text-anchor="middle" textLength="13.0" lengthAdjust="spacingAndGlyphs" stroke="#111" stroke-width="0.18">IP6</text><text x="1094.4" y="812.0" font-size="8.5" fill="#111" text-anchor="middle" textLength="13.0" lengthAdjust="spacingAndGlyphs" stroke="#111" stroke-width="0.18">IP5</text><rect x="1062.1" y="874.8" width="42.7" height="6" fill="#8c8c8c"/><rect x="1062.1" y="895.8" width="42.7" height="6.2" fill="#8c8c8c"/><path d="M1072.7 873.4V893.8H1062.7" fill="none" stroke="#6a6a6a" stroke-width="1.3"/><path d="M1094.0 873.4V893.8H1084.0" fill="none" stroke="#6a6a6a" stroke-width="1.3"/><path d="M1066.75 877.35h1.5v1.5h-1.5zM1066.75 887.55h1.5v1.5h-1.5zM1066.75 898.25h1.5v1.5h-1.5zM1066.75 908.55h1.5v1.5h-1.5zM1077.45 877.35h1.5v1.5h-1.5zM1077.45 887.55h1.5v1.5h-1.5zM1077.45 898.25h1.5v1.5h-1.5zM1077.45 908.55h1.5v1.5h-1.5zM1087.85 877.35h1.5v1.5h-1.5zM1087.85 887.55h1.5v1.5h-1.5zM1087.85 898.25h1.5v1.5h-1.5zM1087.85 908.55h1.5v1.5h-1.5zM1098.75 877.35h1.5v1.5h-1.5zM1098.75 887.55h1.5v1.5h-1.5zM1098.75 898.25h1.5v1.5h-1.5zM1098.75 908.55h1.5v1.5h-1.5z" fill="#111"/><rect x="1062.1" y="872.4" width="42.7" height="42.1" fill="none" stroke="#111" stroke-width="1.8"/><path d="M1083.4 872.4v42.1" stroke="#111" stroke-width="1.8"/><text x="1073.1" y="869.9" font-size="8.5" fill="#111" text-anchor="middle" textLength="13.0" lengthAdjust="spacingAndGlyphs" stroke="#111" stroke-width="0.18">IP8</text><text x="1094.4" y="869.9" font-size="8.5" fill="#111" text-anchor="middle" textLength="13.0" lengthAdjust="spacingAndGlyphs" stroke="#111" stroke-width="0.18">IP7</text><rect x="1125.2" y="758.6" width="42.7" height="6" fill="#8c8c8c"/><rect x="1125.2" y="779.6" width="42.7" height="6.2" fill="#8c8c8c"/><path d="M1135.8 757.2V777.6H1125.8" fill="none" stroke="#6a6a6a" stroke-width="1.3"/><path d="M1157.1 757.2V777.6H1147.1" fill="none" stroke="#6a6a6a" stroke-width="1.3"/><path d="M1129.85 761.15h1.5v1.5h-1.5zM1129.85 771.35h1.5v1.5h-1.5zM1129.85 782.05h1.5v1.5h-1.5zM1129.85 792.35h1.5v1.5h-1.5zM1140.55 761.15h1.5v1.5h-1.5zM1140.55 771.35h1.5v1.5h-1.5zM1140.55 782.05h1.5v1.5h-1.5zM1140.55 792.35h1.5v1.5h-1.5zM1150.95 761.15h1.5v1.5h-1.5zM1150.95 771.35h1.5v1.5h-1.5zM1150.95 782.05h1.5v1.5h-1.5zM1150.95 792.35h1.5v1.5h-1.5zM1161.85 761.15h1.5v1.5h-1.5zM1161.85 771.35h1.5v1.5h-1.5zM1161.85 782.05h1.5v1.5h-1.5zM1161.85 792.35h1.5v1.5h-1.5z" fill="#111"/><rect x="1125.2" y="756.2" width="42.7" height="42.1" fill="none" stroke="#111" stroke-width="1.8"/><path d="M1146.5 756.2v42.1" stroke="#111" stroke-width="1.8"/><text x="1136.2" y="753.7" font-size="8.5" fill="#111" text-anchor="middle" textLength="13.0" lengthAdjust="spacingAndGlyphs" stroke="#111" stroke-width="0.18">IP2</text><text x="1157.5" y="753.7" font-size="8.5" fill="#111" text-anchor="middle" textLength="13.0" lengthAdjust="spacingAndGlyphs" stroke="#111" stroke-width="0.18">IP1</text><rect x="1125.2" y="811.6999999999999" width="42.7" height="6" fill="#8c8c8c"/><rect x="1125.2" y="832.6999999999999" width="42.7" height="6.2" fill="#8c8c8c"/><path d="M1135.8 810.3V830.6999999999999H1125.8" fill="none" stroke="#6a6a6a" stroke-width="1.3"/><path d="M1157.1 810.3V830.6999999999999H1147.1" fill="none" stroke="#6a6a6a" stroke-width="1.3"/><path d="M1129.85 814.25h1.5v1.5h-1.5zM1129.85 824.45h1.5v1.5h-1.5zM1129.85 835.15h1.5v1.5h-1.5zM1129.85 845.45h1.5v1.5h-1.5zM1140.55 814.25h1.5v1.5h-1.5zM1140.55 824.45h1.5v1.5h-1.5zM1140.55 835.15h1.5v1.5h-1.5zM1140.55 845.45h1.5v1.5h-1.5zM1150.95 814.25h1.5v1.5h-1.5zM1150.95 824.45h1.5v1.5h-1.5zM1150.95 835.15h1.5v1.5h-1.5zM1150.95 845.45h1.5v1.5h-1.5zM1161.85 814.25h1.5v1.5h-1.5zM1161.85 824.45h1.5v1.5h-1.5zM1161.85 835.15h1.5v1.5h-1.5zM1161.85 845.45h1.5v1.5h-1.5z" fill="#111"/><rect x="1125.2" y="809.3" width="42.7" height="42.1" fill="none" stroke="#111" stroke-width="1.8"/><path d="M1146.5 809.3v42.1" stroke="#111" stroke-width="1.8"/><text x="1136.2" y="806.8" font-size="8.5" fill="#111" text-anchor="middle" textLength="13.0" lengthAdjust="spacingAndGlyphs" stroke="#111" stroke-width="0.18">IP4</text><text x="1157.5" y="806.8" font-size="8.5" fill="#111" text-anchor="middle" textLength="13.0" lengthAdjust="spacingAndGlyphs" stroke="#111" stroke-width="0.18">IP3</text><text x="1147.0" y="697.0" font-size="8" fill="#1a1a1a" text-anchor="middle" textLength="30.0" lengthAdjust="spacingAndGlyphs" stroke="#1a1a1a" stroke-width="0.18">EXT/INT</text><text x="1120.0" y="707.0" font-size="8" fill="#1a1a1a" textLength="22.0" lengthAdjust="spacingAndGlyphs" stroke="#1a1a1a" stroke-width="0.18">OP3/4</text><text x="1120.0" y="728.0" font-size="8" fill="#1a1a1a" textLength="22.0" lengthAdjust="spacingAndGlyphs" stroke="#1a1a1a" stroke-width="0.18">OP1/2</text><rect x="1120" y="709" width="53.3" height="6" fill="#777" stroke="#111" stroke-width="1.4"/><rect x="1163" y="710" width="9" height="4" fill="#fff"/><path d="M1124.8 711.3h1.4v1.4h-1.4zM1135.3 711.3h1.4v1.4h-1.4zM1145.8 711.3h1.4v1.4h-1.4zM1156.3 711.3h1.4v1.4h-1.4zM1167.3 711.3h1.4v1.4h-1.4z" fill="#111"/><rect x="1120" y="730" width="53.3" height="6" fill="#777" stroke="#111" stroke-width="1.4"/><rect x="1163" y="731" width="9" height="4" fill="#fff"/><path d="M1124.8 732.3h1.4v1.4h-1.4zM1135.3 732.3h1.4v1.4h-1.4zM1145.8 732.3h1.4v1.4h-1.4zM1156.3 732.3h1.4v1.4h-1.4zM1167.3 732.3h1.4v1.4h-1.4z" fill="#111"/><text x="1183.0" y="701.8" font-size="8" fill="#1a1a1a" textLength="12.0" lengthAdjust="spacingAndGlyphs" stroke="#1a1a1a" stroke-width="0.18">IP4</text><rect x="1183" y="703.8" width="53.4" height="6" fill="#fff" stroke="#111" stroke-width="1.4"/><rect x="1204.3" y="703.8" width="21.4" height="6" fill="#8a8a8a"/><path d="M1187.8 706.0999999999999h1.4v1.4h-1.4zM1198.3 706.0999999999999h1.4v1.4h-1.4zM1229.8 706.0999999999999h1.4v1.4h-1.4z" fill="#111"/><text x="1183.0" y="728.0" font-size="8" fill="#1a1a1a" textLength="12.0" lengthAdjust="spacingAndGlyphs" stroke="#1a1a1a" stroke-width="0.18">IP3</text><rect x="1183" y="730" width="53.4" height="6" fill="#fff" stroke="#111" stroke-width="1.4"/><rect x="1204.3" y="730" width="21.4" height="6" fill="#8a8a8a"/><path d="M1187.8 732.3h1.4v1.4h-1.4zM1198.3 732.3h1.4v1.4h-1.4zM1229.8 732.3h1.4v1.4h-1.4z" fill="#111"/><text x="1183.0" y="754.0" font-size="8" fill="#1a1a1a" textLength="12.0" lengthAdjust="spacingAndGlyphs" stroke="#1a1a1a" stroke-width="0.18">IP2</text><rect x="1183" y="756" width="53.4" height="6" fill="#fff" stroke="#111" stroke-width="1.4"/><rect x="1204.3" y="756" width="21.4" height="6" fill="#8a8a8a"/><path d="M1187.8 758.3h1.4v1.4h-1.4zM1198.3 758.3h1.4v1.4h-1.4zM1229.8 758.3h1.4v1.4h-1.4z" fill="#111"/><text x="1183.0" y="780.9" font-size="8" fill="#1a1a1a" textLength="12.0" lengthAdjust="spacingAndGlyphs" stroke="#1a1a1a" stroke-width="0.18">IP1</text><rect x="1183" y="782.9" width="53.4" height="6" fill="#fff" stroke="#111" stroke-width="1.4"/><rect x="1204.3" y="782.9" width="21.4" height="6" fill="#8a8a8a"/><path d="M1187.8 785.1999999999999h1.4v1.4h-1.4zM1198.3 785.1999999999999h1.4v1.4h-1.4zM1229.8 785.1999999999999h1.4v1.4h-1.4z" fill="#111"/><g stroke="#111" fill="none" stroke-width="1.4"><path d="M599 935.3H1705 M599 946.3H1546.5 M599 956.8H720.6 M599 967.2H720.6 M1546.5 946H1705 M909.2 956.8H988.5 M909.2 967.2H988.5 M1546.5 956.7H1705 M1546.5 967.6H1705"/><path d="M635.7 935.3V978 M672.6 935.3V978 M720.6 935.3V978 M909.2 946.3V978 M988.5 935.3V978 M1175.8 935.3V978 M1373.2 935.3V978 M1546.5 935.3V978 M1625.4 935.3V956.7"/><path d="M599 978H1705" stroke="#555" stroke-width="2"/></g><text x="601.0" y="925.0" font-size="5.5" fill="#1a1a1a" textLength="24.0" lengthAdjust="spacingAndGlyphs" stroke="#1a1a1a" stroke-width="0.15">Rückblatt:</text><text x="601.0" y="933.0" font-size="5.5" fill="#2b2bc8" textLength="17.0" lengthAdjust="spacingAndGlyphs" stroke="#2b2bc8" stroke-width="0.15">&amp;EFS/1</text><text x="1701.0" y="925.0" font-size="5.5" fill="#1a1a1a" text-anchor="end" textLength="25.0" lengthAdjust="spacingAndGlyphs" stroke="#1a1a1a" stroke-width="0.15">Folgeblatt</text><text x="601.0" y="944.0" font-size="8" fill="#1a1a1a" textLength="30.0" lengthAdjust="spacingAndGlyphs" stroke="#1a1a1a" stroke-width="0.18">Revision</text><text x="638.0" y="944.0" font-size="8" fill="#1a1a1a" textLength="23.0" lengthAdjust="spacingAndGlyphs" stroke="#1a1a1a" stroke-width="0.18">Datum</text><text x="675.0" y="944.0" font-size="8" fill="#1a1a1a" textLength="21.0" lengthAdjust="spacingAndGlyphs" stroke="#1a1a1a" stroke-width="0.18">Name</text><text x="725.0" y="944.0" font-size="8" fill="#1a1a1a" textLength="33.0" lengthAdjust="spacingAndGlyphs" stroke="#1a1a1a" stroke-width="0.18">Ersteller:</text><text x="991.0" y="944.0" font-size="8" fill="#1a1a1a" textLength="66.0" lengthAdjust="spacingAndGlyphs" stroke="#1a1a1a" stroke-width="0.18">Schaltschrankbau:</text><text x="1178.0" y="944.0" font-size="8" fill="#1a1a1a" textLength="25.0" lengthAdjust="spacingAndGlyphs" stroke="#1a1a1a" stroke-width="0.18">Kunde:</text><text x="1376.0" y="944.0" font-size="8" fill="#2b2bc8" textLength="90.0" lengthAdjust="spacingAndGlyphs" stroke="#2b2bc8" stroke-width="0.18">Schaltplan Elektrotechnik</text><text x="1378.0" y="957.0" font-size="8" fill="#2b2bc8" textLength="54.0" lengthAdjust="spacingAndGlyphs" stroke="#2b2bc8" stroke-width="0.18">DDC-Belegung.</text><rect x="721.5" y="947.5" width="54" height="30" fill="#fff"/><path d="M725.4 962L732.2 949.4L739 962z" fill="#dc1c34"/><path d="M733.1 950.12H739.9A4.54 4.54 0 0 1 744.4 954.66V956.74A4.54 4.54 0 0 1 739.9 961.28H739.5" fill="none" stroke="#505050" stroke-width="1.45"/><text x="746.2" y="961.7" font-size="16.8" fill="#505050" textLength="26.8" lengthAdjust="spacingAndGlyphs">elta</text><text x="725.4" y="966.5" font-size="3.2" font-weight="bold" font-style="italic" fill="#999" textLength="47.6" lengthAdjust="spacing">CONTROLS</text><text x="725.0" y="975.0" font-size="4" fill="#444" textLength="48.0" lengthAdjust="spacingAndGlyphs" stroke="#444" stroke-width="0.15">Delta Controls Germany</text><text x="778.0" y="953.0" font-size="8" fill="#2b2bc8" textLength="110.0" lengthAdjust="spacingAndGlyphs" stroke="#2b2bc8" stroke-width="0.18">Delta Controls Germany GmbH</text><text x="778.0" y="963.5" font-size="8" fill="#2b2bc8" textLength="50.0" lengthAdjust="spacingAndGlyphs" stroke="#2b2bc8" stroke-width="0.18">Fasanenweg 9</text><text x="778.0" y="973.5" font-size="8" fill="#2b2bc8" textLength="113.0" lengthAdjust="spacingAndGlyphs" stroke="#2b2bc8" stroke-width="0.18">70771  Leinfelden Echterdingen</text><text x="911.0" y="954.0" font-size="5.5" fill="#1a1a1a" textLength="28.0" lengthAdjust="spacingAndGlyphs" stroke="#1a1a1a" stroke-width="0.15">Projektnr.:</text><text x="986.0" y="954.0" font-size="5.5" fill="#2b2bc8" text-anchor="end" textLength="33.0" lengthAdjust="spacingAndGlyphs" stroke="#2b2bc8" stroke-width="0.15">&lt;Projektnr.&gt;</text><text x="911.0" y="964.5" font-size="5.5" fill="#1a1a1a" textLength="28.0" lengthAdjust="spacingAndGlyphs" stroke="#1a1a1a" stroke-width="0.15">Bearbeiter:</text><text x="986.0" y="964.5" font-size="5.5" fill="#2b2bc8" text-anchor="end" textLength="27.0" lengthAdjust="spacingAndGlyphs" stroke="#2b2bc8" stroke-width="0.15">JRENNING</text><text x="911.0" y="975.0" font-size="5.5" fill="#1a1a1a" textLength="34.0" lengthAdjust="spacingAndGlyphs" stroke="#1a1a1a" stroke-width="0.15">bearbeitet am:</text><text x="986.0" y="975.0" font-size="5.5" fill="#2b2bc8" text-anchor="end" textLength="27.0" lengthAdjust="spacingAndGlyphs" stroke="#2b2bc8" stroke-width="0.15">12.03.2026</text><rect x="992" y="949" width="43" height="25" fill="#fff" stroke="#e090b0" stroke-width="1.2"/><rect x="1179" y="949" width="43" height="25" fill="#fff" stroke="#e090b0" stroke-width="1.2"/><text x="1001.0" y="955.0" font-size="3.5" fill="#999" textLength="20.0" lengthAdjust="spacingAndGlyphs" stroke="#999" stroke-width="0.15">Platzhalter</text><text x="1004.0" y="960.0" font-size="3.5" fill="#999" textLength="8.0" lengthAdjust="spacingAndGlyphs" stroke="#999" stroke-width="0.15">Logo</text><text x="1003.0" y="965.0" font-size="3.5" fill="#999" textLength="12.0" lengthAdjust="spacingAndGlyphs" stroke="#999" stroke-width="0.15">Kunde</text><text x="1188.0" y="955.0" font-size="3.5" fill="#999" textLength="20.0" lengthAdjust="spacingAndGlyphs" stroke="#999" stroke-width="0.15">Platzhalter</text><text x="1191.0" y="960.0" font-size="3.5" fill="#999" textLength="8.0" lengthAdjust="spacingAndGlyphs" stroke="#999" stroke-width="0.15">Logo</text><text x="1190.0" y="965.0" font-size="3.5" fill="#999" textLength="12.0" lengthAdjust="spacingAndGlyphs" stroke="#999" stroke-width="0.15">Kunde</text><text x="1042.0" y="964.5" font-size="8" fill="#2b2bc8" textLength="131.0" lengthAdjust="spacingAndGlyphs" stroke="#2b2bc8" stroke-width="0.18">&lt;SSK-Bauer: Straße+Hausnummer&gt;</text><text x="1042.0" y="974.5" font-size="8" fill="#2b2bc8" textLength="84.0" lengthAdjust="spacingAndGlyphs" stroke="#2b2bc8" stroke-width="0.18">&lt;SSK-Bauer: PLZ+Ort&gt;</text><text x="1549.0" y="944.0" font-size="5.5" fill="#1a1a1a" textLength="42.0" lengthAdjust="spacingAndGlyphs" stroke="#1a1a1a" stroke-width="0.15">Aufstellungsort:</text><text x="1597.0" y="944.0" font-size="5.5" fill="#2b2bc8" textLength="25.0" lengthAdjust="spacingAndGlyphs" stroke="#2b2bc8" stroke-width="0.15">++ASP01</text><text x="1549.0" y="954.0" font-size="5.5" fill="#1a1a1a" textLength="42.0" lengthAdjust="spacingAndGlyphs" stroke="#1a1a1a" stroke-width="0.15">Dokumentenart:</text><text x="1597.0" y="954.0" font-size="5.5" fill="#2b2bc8" textLength="17.0" lengthAdjust="spacingAndGlyphs" stroke="#2b2bc8" stroke-width="0.15">&amp;EFS1</text><text x="1549.0" y="964.5" font-size="5.5" fill="#1a1a1a" textLength="42.0" lengthAdjust="spacingAndGlyphs" stroke="#1a1a1a" stroke-width="0.15">Funktionszeichen:</text><text x="1593.0" y="964.5" font-size="5.5" fill="#2b2bc8" textLength="31.0" lengthAdjust="spacingAndGlyphs" stroke="#2b2bc8" stroke-width="0.15">=420.VTA01</text><text x="1549.0" y="975.0" font-size="5.5" fill="#1a1a1a" textLength="42.0" lengthAdjust="spacingAndGlyphs" stroke="#1a1a1a" stroke-width="0.15">Ortskennzeichen:</text><text x="1593.0" y="975.0" font-size="5.5" fill="#2b2bc8" textLength="3.0" lengthAdjust="spacingAndGlyphs" stroke="#2b2bc8" stroke-width="0.15">+</text><text x="1628.0" y="944.0" font-size="5.5" fill="#1a1a1a" textLength="13.0" lengthAdjust="spacingAndGlyphs" stroke="#1a1a1a" stroke-width="0.15">Blatt:</text><text x="1701.0" y="944.0" font-size="5.5" fill="#2b2bc8" text-anchor="end" stroke="#2b2bc8" stroke-width="0.15">1</text><text x="1628.0" y="954.0" font-size="5.5" fill="#1a1a1a" textLength="13.0" lengthAdjust="spacingAndGlyphs" stroke="#1a1a1a" stroke-width="0.15">Seite:</text><text x="1662.0" y="954.0" font-size="5.5" fill="#2b2bc8" textLength="15.0" lengthAdjust="spacingAndGlyphs" stroke="#2b2bc8" stroke-width="0.15">3 von</text><text x="1701.0" y="954.0" font-size="5.5" fill="#2b2bc8" text-anchor="end" stroke="#2b2bc8" stroke-width="0.15">3</text><path d="M1178.5 195v785 M597 367.5h1257" stroke="#757575" stroke-width="1"/></g></svg></body></html>
